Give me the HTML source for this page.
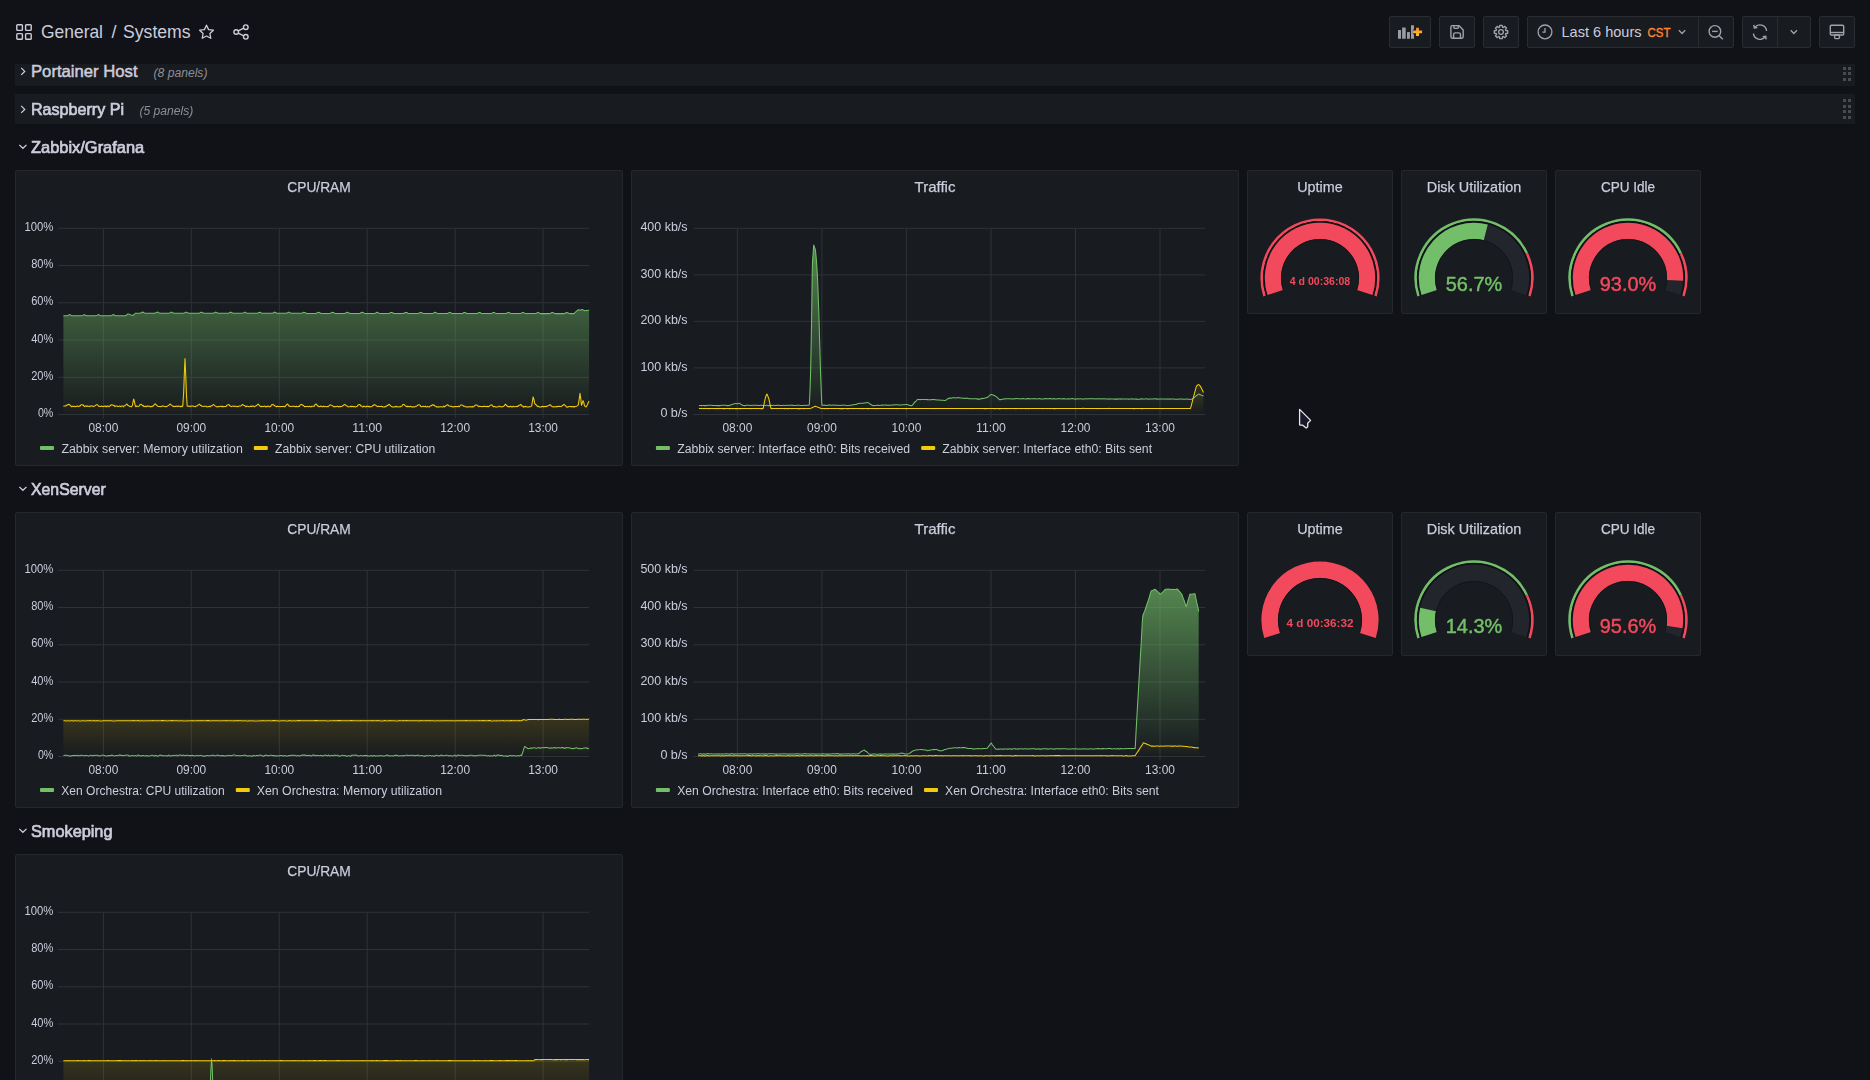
<!DOCTYPE html>
<html><head><meta charset="utf-8"><title>Systems - Grafana</title>
<style>
html,body{margin:0;padding:0;background:#111217;}
body{width:1870px;height:1080px;overflow:hidden;position:relative;font-family:"Liberation Sans", sans-serif;color:#ccccdc;}
.btn{position:absolute;top:16px;height:30px;background:#181b1f;border:1px solid #2a2c31;border-radius:2px}
.rowbg{position:absolute;left:15px;width:1840px;height:30px;background:#181b1f}
.panel{position:absolute;background:#181b1f;border:1px solid #25272c;border-radius:2px;box-sizing:border-box;overflow:hidden}
</style></head>
<body>

<svg style="position:absolute;left:16px;top:24px" width="16" height="16" viewBox="0 0 16 16">
 <g fill="none" stroke="#ccccdc" stroke-width="1.4">
  <rect x="0.8" y="0.8" width="5.6" height="5.6" rx="0.8"/>
  <rect x="9.6" y="0.8" width="5.6" height="5.6" rx="0.8"/>
  <rect x="0.8" y="9.6" width="5.6" height="5.6" rx="0.8"/>
  <rect x="9.6" y="9.6" width="5.6" height="5.6" rx="0.8"/>
 </g>
</svg>
<svg style="position:absolute;left:198px;top:24px" width="17" height="16" viewBox="0 0 17 16">
 <path d="M8.5 1.2 L10.6 5.6 L15.4 6.2 L11.9 9.5 L12.8 14.3 L8.5 12 L4.2 14.3 L5.1 9.5 L1.6 6.2 L6.4 5.6 Z" fill="none" stroke="#ccccdc" stroke-width="1.3" stroke-linejoin="round"/>
</svg>
<svg style="position:absolute;left:233px;top:24px" width="16" height="16" viewBox="0 0 16 16">
 <g fill="none" stroke="#ccccdc" stroke-width="1.4">
  <circle cx="3.2" cy="8" r="2.3"/>
  <circle cx="12.8" cy="3.2" r="2.3"/>
  <circle cx="12.8" cy="12.8" r="2.3"/>
  <path d="M5.2 6.9 L10.8 4.2 M5.2 9.1 L10.8 11.8"/>
 </g>
</svg>
<div class="btn" style="left:1389px;width:40px"><svg style="position:absolute;left:7px;top:7px" width="27" height="16" viewBox="0 0 27 16">
 <defs><linearGradient id="plusg" x1="0" y1="3.5" x2="0" y2="12.2" gradientUnits="userSpaceOnUse"><stop offset="0" stop-color="#f5843a"/><stop offset="1" stop-color="#ffca1c"/></linearGradient></defs>
 <g fill="#9b9ba6">
  <rect x="1" y="6" width="3" height="8.7" rx="0.3"/>
  <rect x="5.1" y="3.6" width="3.6" height="11.1" rx="0.3"/>
  <rect x="10" y="8.1" width="2.9" height="6.6" rx="0.3"/>
  <rect x="14" y="1.3" width="3" height="13.4" rx="0.3"/>
 </g>
 <path d="M20.5 3.7 V12.1 M15.9 7.9 H25.1" stroke="#181b1f" stroke-width="4.6"/>
 <path d="M20.5 3.7 V12.1 M15.9 7.9 H25.1" stroke="url(#plusg)" stroke-width="2.9"/>
</svg></div><div class="btn" style="left:1439px;width:34px"><svg style="position:absolute;left:9px;top:7px" width="16" height="16" viewBox="0 0 16 16">
 <g fill="none" stroke="#a2a2ac" stroke-width="1.4" stroke-linejoin="round">
  <path d="M3.2 1.6 H9.9 L14.2 5.9 V12.8 Q14.2 14.2 12.8 14.2 H3.3 Q1.9 14.2 1.9 12.8 V3 Q1.9 1.6 3.2 1.6 Z"/>
  <path d="M4.9 1.6 V3.6 Q4.9 4.4 5.7 4.4 H8.4 Q9.2 4.4 9.2 3.6 V1.6"/>
  <path d="M4.6 14.2 V10.6 Q4.6 8.9 6.3 8.9 H9.8 Q11.5 8.9 11.5 10.6 V14.2"/>
 </g>
</svg></div><div class="btn" style="left:1483px;width:34px"><svg style="position:absolute;left:9px;top:7px" width="16" height="16" viewBox="0 0 16 16">
 <g fill="none" stroke="#a2a2ac" stroke-width="1.35" stroke-linejoin="round">
  <path d="M6.50 3.23 L6.76 1.31 L9.24 1.31 L9.50 3.23 L10.31 3.56 L11.85 2.40 L13.60 4.15 L12.44 5.69 L12.77 6.50 L14.69 6.76 L14.69 9.24 L12.77 9.50 L12.44 10.31 L13.60 11.85 L11.85 13.60 L10.31 12.44 L9.50 12.77 L9.24 14.69 L6.76 14.69 L6.50 12.77 L5.69 12.44 L4.15 13.60 L2.40 11.85 L3.56 10.31 L3.23 9.50 L1.31 9.24 L1.31 6.76 L3.23 6.50 L3.56 5.69 L2.40 4.15 L4.15 2.40 L5.69 3.56 Z"/>
  <circle cx="8" cy="8" r="2.35"/>
 </g>
</svg></div><div class="btn" style="left:1527px;width:205px">
<svg style="position:absolute;left:9px;top:7px" width="16" height="16" viewBox="0 0 16 16">
 <g fill="none" stroke="#a2a2ac" stroke-width="1.3">
  <circle cx="8" cy="7.9" r="6.9"/>
  <path d="M8 4.1 V8.2 H5.4"/>
 </g>
</svg>
<svg style="position:absolute;left:149px;top:11px" width="12" height="8" viewBox="0 0 12 8"><path d="M1.9 2.2 L5.05 5.5 L8.2 2.2" fill="none" stroke="#a2a2ac" stroke-width="1.3"/></svg>
<div style="position:absolute;left:170px;top:0;width:1px;height:30px;background:#2a2c31"></div>
<svg style="position:absolute;left:180px;top:7px" width="16" height="16" viewBox="0 0 16 16">
 <g fill="none" stroke="#a2a2ac" stroke-width="1.4">
  <circle cx="6.9" cy="7.4" r="5.8"/>
  <path d="M11 11.5 L14.8 15.3"/>
  <path d="M4.1 7.4 H9.7"/>
 </g>
</svg></div><div class="btn" style="left:1742px;width:67px">
<svg style="position:absolute;left:9px;top:7px" width="16" height="16" viewBox="0 0 16 16">
 <g fill="none" stroke="#a2a2ac" stroke-width="1.4">
  <path d="M2.6 3.6 A6.7 6.7 0 0 1 14.6 6.8"/>
  <path d="M13.4 12.6 A6.7 6.7 0 0 1 1.4 9.6"/>
  <path d="M1.8 0.9 L2.3 4 L5.3 3.5"/>
  <path d="M14.2 15.3 L13.7 12.2 L10.7 12.7"/>
 </g>
</svg>
<div style="position:absolute;left:34px;top:0;width:1px;height:30px;background:#2a2c31"></div>
<svg style="position:absolute;left:46px;top:11px" width="12" height="8" viewBox="0 0 12 8"><path d="M1.7 2.2 L4.85 5.5 L8 2.2" fill="none" stroke="#a2a2ac" stroke-width="1.3"/></svg></div><div class="btn" style="left:1819px;width:34px"><svg style="position:absolute;left:9px;top:7px" width="16" height="16" viewBox="0 0 16 16">
 <g fill="none" stroke="#a2a2ac" stroke-width="1.4" stroke-linejoin="round">
  <rect x="1.3" y="1.2" width="13.4" height="9.8" rx="1.2"/>
  <path d="M1.3 8.5 H14.7"/>
  <rect x="5.6" y="11" width="4.8" height="3.6" rx="1"/>
 </g>
</svg></div><div style="position:absolute;left:0;top:64px;width:1870px;height:1016px;overflow:hidden"><div class="rowbg" style="top:-8px"></div><svg style="position:absolute;left:19px;top:3px" width="8" height="9" viewBox="0 0 8 9"><path d="M2.2 0.9 L5.7 4.4 L2.2 7.9" fill="none" stroke="#ccccdc" stroke-width="1.3"/></svg><div style="position:absolute;left:1843.1px;top:-2.7px;width:2.6px;height:2.6px;background:#4a4b51"></div><div style="position:absolute;left:1843.1px;top:3.0px;width:2.6px;height:2.6px;background:#4a4b51"></div><div style="position:absolute;left:1843.1px;top:8.2px;width:2.6px;height:2.6px;background:#4a4b51"></div><div style="position:absolute;left:1843.1px;top:14.1px;width:2.6px;height:2.6px;background:#4a4b51"></div><div style="position:absolute;left:1848.3px;top:-2.7px;width:2.6px;height:2.6px;background:#4a4b51"></div><div style="position:absolute;left:1848.3px;top:3.0px;width:2.6px;height:2.6px;background:#4a4b51"></div><div style="position:absolute;left:1848.3px;top:8.2px;width:2.6px;height:2.6px;background:#4a4b51"></div><div style="position:absolute;left:1848.3px;top:14.1px;width:2.6px;height:2.6px;background:#4a4b51"></div><div class="rowbg" style="top:30px"></div><svg style="position:absolute;left:19px;top:41px" width="8" height="9" viewBox="0 0 8 9"><path d="M2.2 0.9 L5.7 4.4 L2.2 7.9" fill="none" stroke="#ccccdc" stroke-width="1.3"/></svg><div style="position:absolute;left:1843.1px;top:35.3px;width:2.6px;height:2.6px;background:#4a4b51"></div><div style="position:absolute;left:1843.1px;top:41.0px;width:2.6px;height:2.6px;background:#4a4b51"></div><div style="position:absolute;left:1843.1px;top:46.2px;width:2.6px;height:2.6px;background:#4a4b51"></div><div style="position:absolute;left:1843.1px;top:52.1px;width:2.6px;height:2.6px;background:#4a4b51"></div><div style="position:absolute;left:1848.3px;top:35.3px;width:2.6px;height:2.6px;background:#4a4b51"></div><div style="position:absolute;left:1848.3px;top:41.0px;width:2.6px;height:2.6px;background:#4a4b51"></div><div style="position:absolute;left:1848.3px;top:46.2px;width:2.6px;height:2.6px;background:#4a4b51"></div><div style="position:absolute;left:1848.3px;top:52.1px;width:2.6px;height:2.6px;background:#4a4b51"></div><svg style="position:absolute;left:18px;top:79px" width="10" height="8" viewBox="0 0 10 8"><path d="M1.3 1.9 L4.9 5.3 L8.5 1.9" fill="none" stroke="#ccccdc" stroke-width="1.3"/></svg><svg style="position:absolute;left:18px;top:421px" width="10" height="8" viewBox="0 0 10 8"><path d="M1.3 1.9 L4.9 5.3 L8.5 1.9" fill="none" stroke="#ccccdc" stroke-width="1.3"/></svg><svg style="position:absolute;left:18px;top:763px" width="10" height="8" viewBox="0 0 10 8"><path d="M1.3 1.9 L4.9 5.3 L8.5 1.9" fill="none" stroke="#ccccdc" stroke-width="1.3"/></svg><div class="panel" style="left:15px;top:106px;width:608px;height:296px"><svg style="position:absolute;left:-1px;top:-1px" width="608" height="296" viewBox="0 0 608 296"><defs><linearGradient id="g15_170_0" x1="0" y1="58.3" x2="0" y2="244.5" gradientUnits="userSpaceOnUse"><stop offset="0" stop-color="#73bf69" stop-opacity="0.72"/><stop offset="1" stop-color="#73bf69" stop-opacity="0"/></linearGradient><linearGradient id="g15_170_1" x1="0" y1="58.3" x2="0" y2="244.5" gradientUnits="userSpaceOnUse"><stop offset="0" stop-color="#f2cc0c" stop-opacity="0.72"/><stop offset="1" stop-color="#f2cc0c" stop-opacity="0"/></linearGradient></defs><line x1="43" x2="574" y1="244.5" y2="244.5" stroke="#2f3237" stroke-width="1"/><line x1="43" x2="574" y1="207.3" y2="207.3" stroke="#2f3237" stroke-width="1"/><line x1="43" x2="574" y1="170.0" y2="170.0" stroke="#2f3237" stroke-width="1"/><line x1="43" x2="574" y1="132.8" y2="132.8" stroke="#2f3237" stroke-width="1"/><line x1="43" x2="574" y1="95.5" y2="95.5" stroke="#2f3237" stroke-width="1"/><line x1="43" x2="574" y1="58.3" y2="58.3" stroke="#2f3237" stroke-width="1"/><line x1="88.4" x2="88.4" y1="58.3" y2="248.5" stroke="#2f3237" stroke-width="1"/><line x1="176.3" x2="176.3" y1="58.3" y2="248.5" stroke="#2f3237" stroke-width="1"/><line x1="264.3" x2="264.3" y1="58.3" y2="248.5" stroke="#2f3237" stroke-width="1"/><line x1="352.2" x2="352.2" y1="58.3" y2="248.5" stroke="#2f3237" stroke-width="1"/><line x1="440.2" x2="440.2" y1="58.3" y2="248.5" stroke="#2f3237" stroke-width="1"/><line x1="528.1" x2="528.1" y1="58.3" y2="248.5" stroke="#2f3237" stroke-width="1"/><path d="M48.4 145.8 L49.1 145.8 L49.9 145.8 L50.6 145.8 L51.3 145.8 L52.1 145.8 L52.8 145.5 L53.5 145.1 L54.3 144.8 L55.0 144.8 L55.7 145.1 L56.4 145.5 L57.2 145.8 L57.9 145.8 L58.6 145.8 L59.4 145.8 L60.1 145.8 L60.8 145.8 L61.6 145.8 L62.3 145.8 L63.0 145.8 L63.8 145.8 L64.5 145.8 L65.2 145.8 L66.0 145.8 L66.7 145.8 L67.4 145.5 L68.2 145.1 L68.9 144.7 L69.6 144.8 L70.4 145.2 L71.1 145.5 L71.8 145.8 L72.6 145.8 L73.3 145.8 L74.0 145.8 L74.8 145.8 L75.5 145.8 L76.2 145.8 L77.0 145.8 L77.7 145.8 L78.4 145.8 L79.2 145.8 L79.9 145.8 L80.6 145.8 L81.4 145.6 L82.1 145.3 L82.8 144.9 L83.6 144.6 L84.3 145.0 L85.0 145.4 L85.8 145.7 L86.5 145.8 L87.2 145.8 L88.0 145.8 L88.7 145.8 L89.4 145.8 L90.2 145.8 L90.9 145.8 L91.6 145.8 L92.4 145.8 L93.1 145.8 L93.8 145.8 L94.6 145.8 L95.3 145.8 L96.0 145.7 L96.8 145.4 L97.5 145.0 L98.2 144.6 L99.0 144.9 L99.7 145.3 L100.4 145.7 L101.2 145.8 L101.9 145.8 L102.6 145.8 L103.3 145.8 L104.1 145.8 L104.8 145.8 L105.5 145.8 L106.3 145.8 L107.0 145.8 L107.7 145.8 L108.5 145.8 L109.2 145.8 L109.9 145.8 L110.4 145.8 L111.4 145.1 L112.1 144.5 L112.9 144.0 L113.6 144.1 L114.3 144.3 L114.8 144.4 L115.8 144.9 L116.5 145.1 L117.3 145.2 L118.3 145.4 L118.7 144.9 L119.5 144.0 L120.1 143.2 L120.9 143.2 L121.7 143.2 L122.4 143.2 L123.1 143.2 L123.9 143.2 L124.6 143.2 L125.3 143.2 L126.1 142.8 L126.8 142.4 L127.5 142.1 L128.3 142.3 L129.0 142.7 L129.7 143.0 L130.5 143.2 L131.2 143.2 L131.9 143.2 L132.7 143.2 L133.4 143.2 L134.1 143.2 L134.9 143.2 L135.6 143.2 L136.3 143.2 L137.1 143.2 L137.8 143.2 L138.5 143.2 L139.3 143.2 L140.0 143.2 L140.7 142.8 L141.5 142.5 L142.2 142.1 L142.9 142.3 L143.7 142.6 L144.4 143.0 L145.1 143.2 L145.9 143.2 L146.6 143.2 L147.3 143.2 L148.1 143.2 L148.8 143.2 L149.5 143.2 L150.3 143.2 L151.0 143.2 L151.7 143.2 L152.4 143.2 L153.2 143.2 L153.9 143.2 L154.6 143.0 L155.4 142.6 L156.1 142.3 L156.8 142.2 L157.6 142.5 L158.3 142.9 L159.0 143.2 L159.8 143.2 L160.5 143.2 L161.2 143.2 L162.0 143.2 L162.7 143.2 L163.4 143.2 L164.2 143.2 L164.9 143.2 L165.6 143.2 L166.4 143.2 L167.1 143.2 L167.8 143.2 L168.6 143.2 L169.3 143.0 L170.0 142.6 L170.8 142.2 L171.5 142.2 L172.2 142.6 L173.0 142.9 L173.7 143.3 L174.4 143.3 L175.2 143.3 L175.9 143.3 L176.6 143.3 L177.4 143.3 L178.1 143.3 L178.8 143.3 L179.6 143.3 L180.3 143.3 L181.0 143.3 L181.8 143.3 L182.5 143.3 L183.2 143.3 L184.0 143.2 L184.7 142.9 L185.4 142.5 L186.2 142.2 L186.9 142.3 L187.6 142.7 L188.4 143.0 L189.1 143.3 L189.8 143.3 L190.6 143.3 L191.3 143.3 L192.0 143.3 L192.8 143.3 L193.5 143.3 L194.2 143.3 L195.0 143.3 L195.7 143.3 L196.4 143.3 L197.2 143.3 L197.9 143.3 L198.6 143.1 L199.4 142.7 L200.1 142.4 L200.8 142.1 L201.5 142.5 L202.3 142.8 L203.0 143.2 L203.7 143.3 L204.5 143.3 L205.2 143.3 L205.9 143.3 L206.7 143.3 L207.4 143.3 L208.1 143.3 L208.9 143.3 L209.6 143.3 L210.3 143.3 L211.1 143.3 L211.8 143.3 L212.5 143.3 L213.3 143.2 L214.0 142.9 L214.7 142.5 L215.5 142.1 L216.2 142.4 L216.9 142.7 L217.7 143.1 L218.4 143.3 L219.1 143.3 L219.9 143.3 L220.6 143.3 L221.3 143.3 L222.1 143.3 L222.8 143.3 L223.5 143.3 L224.3 143.3 L225.0 143.3 L225.7 143.3 L226.5 143.3 L227.2 143.3 L227.9 143.0 L228.7 142.6 L229.4 142.2 L230.1 142.3 L230.9 142.7 L231.6 143.0 L232.3 143.3 L233.1 143.3 L233.8 143.3 L234.5 143.3 L235.3 143.3 L236.0 143.3 L236.7 143.3 L237.5 143.3 L238.2 143.3 L238.9 143.3 L239.7 143.3 L240.4 143.3 L241.1 143.3 L241.9 143.3 L242.6 143.1 L243.3 142.8 L244.1 142.4 L244.8 142.2 L245.5 142.5 L246.3 142.9 L247.0 143.2 L247.7 143.3 L248.5 143.3 L249.2 143.3 L249.9 143.3 L250.6 143.3 L251.4 143.3 L252.1 143.3 L252.8 143.3 L253.6 143.3 L254.3 143.3 L255.0 143.3 L255.8 143.3 L256.5 143.3 L257.2 143.2 L258.0 142.9 L258.7 142.5 L259.4 142.1 L260.2 142.4 L260.9 142.8 L261.6 143.2 L262.4 143.3 L263.1 143.3 L263.8 143.3 L264.6 143.3 L265.3 143.3 L266.0 143.3 L266.8 143.3 L267.5 143.3 L268.2 143.3 L269.0 143.3 L269.7 143.3 L270.4 143.3 L271.2 143.3 L271.9 143.1 L272.6 142.7 L273.4 142.3 L274.1 142.3 L274.8 142.6 L275.6 143.0 L276.3 143.3 L277.0 143.3 L277.8 143.3 L278.5 143.3 L279.2 143.3 L280.0 143.3 L280.7 143.3 L281.4 143.3 L282.2 143.3 L282.9 143.3 L283.6 143.3 L284.4 143.3 L285.1 143.3 L285.8 143.3 L286.6 143.3 L287.3 143.0 L288.0 142.6 L288.8 142.2 L289.5 142.4 L290.2 142.8 L291.0 143.1 L291.7 143.4 L292.4 143.4 L293.2 143.4 L293.9 143.4 L294.6 143.4 L295.4 143.4 L296.1 143.4 L296.8 143.4 L297.6 143.4 L298.3 143.4 L299.0 143.4 L299.7 143.4 L300.5 143.4 L301.2 143.3 L301.9 142.9 L302.7 142.6 L303.4 142.2 L304.1 142.4 L304.9 142.8 L305.6 143.2 L306.3 143.4 L307.1 143.4 L307.8 143.4 L308.5 143.4 L309.3 143.4 L310.0 143.4 L310.7 143.4 L311.5 143.4 L312.2 143.4 L312.9 143.4 L313.7 143.4 L314.4 143.4 L315.1 143.4 L315.9 143.0 L316.6 142.6 L317.3 142.3 L318.1 142.4 L318.8 142.8 L319.5 143.1 L320.3 143.4 L321.0 143.4 L321.7 143.4 L322.5 143.4 L323.2 143.4 L323.9 143.4 L324.7 143.4 L325.4 143.4 L326.1 143.4 L326.9 143.4 L327.6 143.4 L328.3 143.4 L329.1 143.4 L329.8 143.4 L330.5 143.0 L331.3 142.7 L332.0 142.3 L332.7 142.4 L333.5 142.8 L334.2 143.1 L334.9 143.4 L335.7 143.4 L336.4 143.4 L337.1 143.4 L337.9 143.4 L338.6 143.4 L339.3 143.4 L340.1 143.4 L340.8 143.4 L341.5 143.4 L342.3 143.4 L343.0 143.4 L343.7 143.4 L344.5 143.4 L345.2 143.2 L345.9 142.8 L346.7 142.5 L347.4 142.3 L348.1 142.6 L348.8 143.0 L349.6 143.3 L350.3 143.4 L351.0 143.4 L351.8 143.4 L352.5 143.4 L353.2 143.4 L354.0 143.4 L354.7 143.4 L355.4 143.4 L356.2 143.4 L356.9 143.4 L357.6 143.4 L358.4 143.4 L359.1 143.4 L359.8 143.3 L360.6 143.0 L361.3 142.6 L362.0 142.3 L362.8 142.5 L363.5 142.9 L364.2 143.2 L365.0 143.4 L365.7 143.4 L366.4 143.4 L367.2 143.4 L367.9 143.4 L368.6 143.4 L369.4 143.4 L370.1 143.4 L370.8 143.4 L371.6 143.4 L372.3 143.4 L373.0 143.4 L373.8 143.4 L374.5 143.2 L375.2 142.8 L376.0 142.4 L376.7 142.4 L377.4 142.7 L378.2 143.1 L378.9 143.4 L379.6 143.4 L380.4 143.4 L381.1 143.4 L381.8 143.4 L382.6 143.4 L383.3 143.4 L384.0 143.4 L384.8 143.4 L385.5 143.4 L386.2 143.4 L387.0 143.4 L387.7 143.4 L388.4 143.4 L389.2 143.1 L389.9 142.7 L390.6 142.4 L391.4 142.4 L392.1 142.8 L392.8 143.2 L393.6 143.4 L394.3 143.4 L395.0 143.4 L395.8 143.4 L396.5 143.4 L397.2 143.4 L397.9 143.4 L398.7 143.4 L399.4 143.4 L400.1 143.4 L400.9 143.4 L401.6 143.4 L402.3 143.4 L403.1 143.4 L403.8 143.2 L404.5 142.8 L405.3 142.5 L406.0 142.4 L406.7 142.7 L407.5 143.1 L408.2 143.5 L408.9 143.5 L409.7 143.5 L410.4 143.5 L411.1 143.5 L411.9 143.5 L412.6 143.5 L413.3 143.5 L414.1 143.5 L414.8 143.5 L415.5 143.5 L416.3 143.5 L417.0 143.5 L417.7 143.4 L418.5 143.0 L419.2 142.7 L419.9 142.3 L420.7 142.5 L421.4 142.9 L422.1 143.3 L422.9 143.5 L423.6 143.5 L424.3 143.5 L425.1 143.5 L425.8 143.5 L426.5 143.5 L427.3 143.5 L428.0 143.5 L428.7 143.5 L429.5 143.5 L430.2 143.5 L430.9 143.5 L431.7 143.5 L432.4 143.5 L433.1 143.1 L433.9 142.8 L434.6 142.4 L435.3 142.5 L436.1 142.9 L436.8 143.2 L437.5 143.5 L438.3 143.5 L439.0 143.5 L439.7 143.5 L440.5 143.5 L441.2 143.5 L441.9 143.5 L442.7 143.5 L443.4 143.5 L444.1 143.5 L444.8 143.5 L445.6 143.5 L446.3 143.5 L447.0 143.5 L447.8 143.2 L448.5 142.8 L449.2 142.5 L450.0 142.4 L450.7 142.8 L451.4 143.2 L452.2 143.5 L452.9 143.5 L453.6 143.5 L454.4 143.5 L455.1 143.5 L455.8 143.5 L456.6 143.5 L457.3 143.5 L458.0 143.5 L458.8 143.5 L459.5 143.5 L460.2 143.5 L461.0 143.5 L461.7 143.5 L462.4 143.2 L463.2 142.9 L463.9 142.5 L464.6 142.4 L465.4 142.8 L466.1 143.2 L466.8 143.5 L467.6 143.5 L468.3 143.5 L469.0 143.5 L469.8 143.5 L470.5 143.5 L471.2 143.5 L472.0 143.5 L472.7 143.5 L473.4 143.5 L474.2 143.5 L474.9 143.5 L475.6 143.5 L476.4 143.5 L477.1 143.1 L477.8 142.8 L478.6 142.4 L479.3 142.5 L480.0 142.9 L480.8 143.3 L481.5 143.5 L482.2 143.5 L483.0 143.5 L483.7 143.5 L484.4 143.5 L485.2 143.5 L485.9 143.5 L486.6 143.5 L487.4 143.5 L488.1 143.5 L488.8 143.5 L489.6 143.5 L490.3 143.5 L491.0 143.5 L491.8 143.1 L492.5 142.8 L493.2 142.4 L494.0 142.6 L494.7 142.9 L495.4 143.3 L496.1 143.5 L496.9 143.5 L497.6 143.5 L498.3 143.5 L499.1 143.5 L499.8 143.5 L500.5 143.5 L501.3 143.5 L502.0 143.5 L502.7 143.5 L503.5 143.5 L504.2 143.5 L504.9 143.5 L505.7 143.5 L506.4 143.1 L507.1 142.8 L507.9 142.4 L508.6 142.6 L509.3 143.0 L510.1 143.3 L510.8 143.5 L511.5 143.5 L512.3 143.5 L513.0 143.5 L513.7 143.5 L514.5 143.5 L515.2 143.5 L515.9 143.5 L516.7 143.5 L517.4 143.5 L518.1 143.5 L518.9 143.5 L519.6 143.5 L520.3 143.5 L521.1 143.2 L521.8 142.9 L522.5 142.5 L523.3 142.5 L524.0 142.9 L524.7 143.2 L525.5 143.6 L526.2 143.6 L526.9 143.6 L527.7 143.6 L528.4 143.6 L529.1 143.6 L529.9 143.6 L530.6 143.6 L531.3 143.6 L532.1 143.6 L532.8 143.6 L533.5 143.6 L534.3 143.6 L535.0 143.5 L535.7 143.2 L536.5 142.8 L537.2 142.5 L537.9 142.6 L538.7 143.0 L539.4 143.3 L540.1 143.6 L540.9 143.6 L541.6 143.6 L542.3 143.6 L543.0 143.6 L543.8 143.6 L544.5 143.6 L545.2 143.6 L546.0 143.6 L546.7 143.6 L547.4 143.6 L548.2 143.6 L548.9 143.6 L549.6 143.4 L550.4 143.1 L551.1 142.7 L551.8 142.4 L552.6 142.7 L553.3 143.1 L554.0 143.4 L554.8 143.6 L555.5 143.6 L556.2 143.6 L557.0 143.6 L557.7 143.6 L558.4 143.6 L558.9 143.6 L559.9 142.7 L560.6 142.0 L561.4 141.4 L562.1 140.7 L562.8 140.1 L563.3 139.7 L564.3 140.0 L565.0 140.1 L565.9 140.0 L566.5 139.7 L567.2 139.5 L568.0 139.9 L568.7 140.3 L569.4 140.7 L570.2 140.7 L570.9 140.6 L571.6 140.5 L572.4 140.4 L573.1 140.3 L574.1 140.2 L574.1 244.5 L48.4 244.5 Z" fill="url(#g15_170_0)" stroke="none"/><path d="M48.4 236.2 L49.1 236.1 L49.9 236.0 L50.6 235.9 L51.3 235.6 L52.1 234.8 L52.8 235.0 L53.5 234.3 L54.3 234.4 L55.0 235.3 L55.7 235.7 L56.4 236.7 L57.2 236.3 L57.9 236.6 L58.6 236.3 L59.4 236.2 L60.1 236.8 L60.8 236.6 L61.6 236.5 L62.3 235.9 L63.0 236.1 L63.8 236.6 L64.5 235.9 L65.2 235.9 L66.0 234.8 L66.7 234.7 L67.4 234.9 L68.2 234.7 L68.9 236.0 L69.6 236.6 L70.4 235.9 L71.1 236.0 L71.8 236.5 L72.6 235.9 L73.3 236.3 L74.0 236.2 L74.8 236.6 L75.5 235.9 L76.2 236.1 L77.0 235.9 L77.7 236.0 L78.4 236.5 L79.2 236.3 L79.9 235.9 L80.6 235.3 L81.4 234.7 L82.1 234.7 L82.8 235.0 L83.6 236.2 L84.3 236.2 L85.0 236.5 L85.8 236.5 L86.5 236.0 L87.2 236.4 L88.0 236.5 L88.7 236.4 L89.4 236.1 L90.2 236.7 L90.9 235.9 L91.6 236.8 L92.4 236.1 L93.1 236.0 L93.8 236.8 L94.6 235.9 L95.3 235.7 L96.0 234.9 L96.8 234.8 L97.5 234.9 L98.2 235.4 L99.0 235.3 L99.7 236.6 L100.4 236.1 L101.2 235.9 L101.9 235.9 L102.6 236.5 L103.3 236.5 L104.1 236.3 L104.8 236.1 L105.5 236.7 L106.3 236.1 L107.0 236.1 L107.7 236.0 L108.5 236.8 L109.2 235.7 L109.9 235.8 L110.7 235.0 L111.4 234.1 L112.1 234.3 L112.9 235.4 L113.6 235.5 L114.3 236.3 L115.1 236.5 L115.8 236.5 L116.5 236.7 L117.3 235.5 L118.0 232.2 L118.7 229.0 L119.5 231.9 L120.2 235.4 L120.9 236.8 L121.7 235.9 L122.4 236.3 L123.1 236.4 L123.9 236.2 L124.6 235.3 L125.3 234.4 L126.1 234.2 L126.8 234.8 L127.5 235.8 L128.3 235.6 L129.0 236.8 L129.7 236.4 L130.5 236.1 L131.2 236.7 L131.9 236.2 L132.7 235.9 L133.4 236.2 L134.1 236.1 L134.9 236.7 L135.6 236.4 L136.3 236.7 L137.1 236.1 L137.8 236.4 L138.5 235.6 L139.3 234.5 L140.0 234.0 L140.7 234.1 L141.5 235.2 L142.2 235.8 L142.9 236.2 L143.7 236.4 L144.4 236.6 L145.1 236.5 L145.9 236.7 L146.6 236.5 L147.3 235.9 L148.1 236.0 L148.8 236.3 L149.5 236.4 L150.3 236.5 L151.0 236.8 L151.7 236.6 L152.4 236.1 L153.2 235.5 L153.9 235.3 L154.6 234.3 L155.4 234.1 L156.1 234.8 L156.8 235.4 L157.6 236.0 L158.3 236.5 L159.0 236.2 L159.8 236.6 L160.5 236.4 L161.2 236.1 L162.0 236.2 L162.7 236.6 L163.4 236.0 L164.2 236.3 L164.9 236.3 L165.6 236.8 L166.4 236.3 L167.1 236.6 L167.8 235.6 L168.6 223.0 L169.3 204.8 L170.0 188.6 L170.8 206.4 L171.5 224.9 L172.2 236.1 L173.0 236.2 L173.7 236.1 L174.4 236.5 L175.2 236.1 L175.9 236.1 L176.6 236.2 L177.4 236.0 L178.1 236.0 L178.8 236.4 L179.6 236.4 L180.3 236.7 L181.0 236.1 L181.8 235.9 L182.5 235.8 L183.2 234.9 L184.0 234.3 L184.7 234.3 L185.4 235.4 L186.2 235.5 L186.9 236.3 L187.6 236.3 L188.4 236.5 L189.1 236.3 L189.8 236.2 L190.6 236.3 L191.3 236.2 L192.0 236.9 L192.8 236.7 L193.5 236.5 L194.2 236.3 L195.0 236.7 L195.7 236.2 L196.4 235.8 L197.2 235.7 L197.9 234.7 L198.6 234.5 L199.4 235.3 L200.1 235.9 L200.8 236.3 L201.5 236.7 L202.3 236.7 L203.0 236.9 L203.7 236.5 L204.5 236.5 L205.2 236.3 L205.9 236.3 L206.7 236.7 L207.4 236.0 L208.1 236.9 L208.9 236.5 L209.6 236.6 L210.3 236.5 L211.1 236.5 L211.8 235.2 L212.5 235.0 L213.3 234.7 L214.0 234.6 L214.7 235.7 L215.5 235.9 L216.2 236.6 L216.9 236.4 L217.7 236.0 L218.4 236.1 L219.1 236.5 L219.9 236.1 L220.6 236.3 L221.3 236.6 L222.1 236.8 L222.8 236.3 L223.5 236.4 L224.3 236.0 L225.0 236.0 L225.7 236.0 L226.5 235.6 L227.2 234.5 L227.9 234.7 L228.7 235.2 L229.4 235.4 L230.1 236.0 L230.9 236.8 L231.6 236.3 L232.3 236.1 L233.1 236.6 L233.8 236.5 L234.5 236.7 L235.3 236.6 L236.0 236.0 L236.7 236.6 L237.5 236.0 L238.2 236.1 L238.9 236.4 L239.7 236.7 L240.4 235.9 L241.1 235.7 L241.9 235.2 L242.6 234.6 L243.3 234.1 L244.1 235.2 L244.8 236.0 L245.5 236.5 L246.3 236.8 L247.0 236.3 L247.7 236.5 L248.5 236.6 L249.2 236.2 L249.9 236.1 L250.6 236.9 L251.4 236.4 L252.1 236.7 L252.8 236.0 L253.6 236.2 L254.3 236.7 L255.0 236.7 L255.8 236.2 L256.5 234.8 L257.2 234.9 L258.0 234.3 L258.7 235.0 L259.4 235.5 L260.2 236.2 L260.9 236.2 L261.6 236.8 L262.4 236.2 L263.1 236.6 L263.8 236.4 L264.6 236.6 L265.3 236.7 L266.0 236.4 L266.8 236.5 L267.5 236.6 L268.2 236.2 L269.0 236.4 L269.7 236.9 L270.4 236.1 L271.2 235.2 L271.9 234.2 L272.6 234.1 L273.4 235.1 L274.1 236.2 L274.8 236.1 L275.6 236.5 L276.3 236.4 L277.0 236.3 L277.8 236.3 L278.5 236.5 L279.2 236.1 L280.0 236.6 L280.7 236.6 L281.4 236.1 L282.2 236.8 L282.9 236.7 L283.6 236.2 L284.4 236.4 L285.1 235.1 L285.8 234.6 L286.6 234.4 L287.3 235.1 L288.0 235.3 L288.8 235.8 L289.5 236.8 L290.2 236.5 L291.0 236.4 L291.7 236.5 L292.4 236.6 L293.2 236.8 L293.9 236.4 L294.6 236.2 L295.4 236.9 L296.1 236.7 L296.8 236.2 L297.6 236.2 L298.3 236.3 L299.0 236.4 L299.7 235.1 L300.5 234.2 L301.2 234.0 L301.9 234.9 L302.7 236.1 L303.4 236.0 L304.1 236.8 L304.9 236.4 L305.6 236.1 L306.3 236.3 L307.1 236.8 L307.8 236.7 L308.5 236.1 L309.3 236.8 L310.0 236.4 L310.7 236.6 L311.5 236.8 L312.2 236.4 L312.9 236.8 L313.7 236.1 L314.4 235.2 L315.1 234.9 L315.9 235.1 L316.6 235.2 L317.3 235.7 L318.1 236.1 L318.8 236.8 L319.5 236.6 L320.3 236.7 L321.0 236.4 L321.7 236.5 L322.5 236.1 L323.2 236.6 L323.9 236.9 L324.7 236.3 L325.4 236.8 L326.1 236.4 L326.9 236.5 L327.6 235.7 L328.3 235.4 L329.1 234.7 L329.8 234.5 L330.5 234.9 L331.3 235.8 L332.0 235.9 L332.7 236.5 L333.5 236.9 L334.2 236.8 L334.9 236.6 L335.7 236.3 L336.4 236.8 L337.1 236.3 L337.9 236.4 L338.6 236.9 L339.3 236.4 L340.1 236.9 L340.8 236.9 L341.5 236.4 L342.3 236.3 L343.0 235.1 L343.7 234.8 L344.5 234.6 L345.2 234.7 L345.9 236.1 L346.7 236.0 L347.4 236.9 L348.1 236.8 L348.8 236.1 L349.6 236.4 L350.3 236.8 L351.0 236.9 L351.8 236.1 L352.5 236.4 L353.2 236.2 L354.0 236.9 L354.7 236.4 L355.4 236.7 L356.2 236.8 L356.9 236.6 L357.6 235.7 L358.4 235.3 L359.1 234.6 L359.8 235.0 L360.6 235.0 L361.3 235.8 L362.0 236.3 L362.8 236.6 L363.5 236.2 L364.2 236.5 L365.0 236.4 L365.7 236.5 L366.4 236.3 L367.2 236.6 L367.9 236.9 L368.6 237.0 L369.4 236.8 L370.1 237.0 L370.8 236.2 L371.6 236.2 L372.3 235.4 L373.0 235.5 L373.8 234.4 L374.5 234.5 L375.2 235.4 L376.0 236.2 L376.7 236.6 L377.4 236.9 L378.2 236.9 L378.9 236.9 L379.6 236.7 L380.4 236.7 L381.1 236.2 L381.8 236.9 L382.6 236.8 L383.3 236.8 L384.0 236.9 L384.8 236.7 L385.5 236.8 L386.2 236.3 L387.0 236.1 L387.7 234.6 L388.4 234.5 L389.2 234.5 L389.9 235.3 L390.6 236.0 L391.4 236.6 L392.1 236.1 L392.8 236.9 L393.6 236.4 L394.3 236.8 L395.0 236.4 L395.8 236.3 L396.5 236.9 L397.2 236.8 L397.9 237.0 L398.7 236.8 L399.4 237.0 L400.1 236.7 L400.9 236.1 L401.6 236.2 L402.3 235.6 L403.1 234.8 L403.8 234.7 L404.5 234.9 L405.3 235.5 L406.0 236.7 L406.7 236.8 L407.5 236.4 L408.2 236.2 L408.9 236.4 L409.7 236.6 L410.4 236.1 L411.1 237.0 L411.9 237.0 L412.6 236.3 L413.3 236.7 L414.1 237.0 L414.8 236.5 L415.5 235.8 L416.3 235.7 L417.0 235.2 L417.7 234.8 L418.5 235.3 L419.2 235.1 L419.9 236.1 L420.7 236.2 L421.4 237.0 L422.1 236.8 L422.9 237.0 L423.6 236.7 L424.3 237.0 L425.1 236.8 L425.8 236.7 L426.5 236.8 L427.3 237.0 L428.0 237.0 L428.7 236.1 L429.5 236.9 L430.2 236.3 L430.9 235.8 L431.7 235.0 L432.4 234.8 L433.1 235.1 L433.9 235.9 L434.6 236.1 L435.3 236.2 L436.1 236.5 L436.8 236.3 L437.5 236.9 L438.3 237.0 L439.0 236.6 L439.7 236.6 L440.5 236.5 L441.2 236.7 L441.9 236.5 L442.7 236.4 L443.4 236.2 L444.1 236.8 L444.8 236.0 L445.6 235.0 L446.3 235.0 L447.0 235.0 L447.8 235.4 L448.5 236.2 L449.2 236.2 L450.0 236.3 L450.7 236.8 L451.4 236.9 L452.2 237.0 L452.9 236.8 L453.6 237.0 L454.4 236.7 L455.1 236.5 L455.8 236.8 L456.6 237.0 L457.3 236.4 L458.0 237.0 L458.8 236.6 L459.5 235.9 L460.2 235.2 L461.0 234.9 L461.7 234.9 L462.4 235.7 L463.2 235.9 L463.9 236.6 L464.6 236.2 L465.4 236.5 L466.1 236.4 L466.8 236.5 L467.6 236.7 L468.3 236.3 L469.0 236.5 L469.8 236.2 L470.5 236.4 L471.2 236.4 L472.0 236.8 L472.7 236.3 L473.4 236.7 L474.2 236.3 L474.9 235.7 L475.6 235.0 L476.4 234.9 L477.1 235.1 L477.8 236.1 L478.6 236.9 L479.3 236.4 L480.0 236.6 L480.8 237.1 L481.5 237.0 L482.2 237.0 L483.0 236.8 L483.7 236.3 L484.4 236.2 L485.2 236.5 L485.9 236.9 L486.6 236.7 L487.4 236.8 L488.1 236.5 L488.8 236.2 L489.6 235.1 L490.3 234.2 L491.0 234.7 L491.8 235.9 L492.5 236.1 L493.2 236.9 L494.0 236.4 L494.7 236.7 L495.4 236.2 L496.1 236.4 L496.9 237.0 L497.6 236.8 L498.3 236.2 L499.1 236.7 L499.8 236.7 L500.5 236.7 L501.3 236.4 L502.0 236.2 L502.7 236.6 L503.5 235.6 L504.2 235.3 L504.9 235.2 L505.7 234.3 L506.4 235.3 L507.1 236.3 L507.9 236.0 L508.6 237.1 L509.3 236.6 L510.1 236.7 L510.8 236.3 L511.5 236.7 L512.3 236.9 L513.0 236.9 L513.7 236.9 L514.5 236.6 L515.2 236.8 L515.9 236.4 L516.7 235.8 L517.4 231.3 L518.1 226.9 L518.9 229.4 L519.6 232.9 L520.3 234.3 L521.1 234.8 L521.8 235.6 L522.5 236.4 L523.3 236.3 L524.0 236.7 L524.7 237.1 L525.5 237.0 L526.2 237.0 L526.9 236.5 L527.7 236.3 L528.4 236.9 L529.1 236.4 L529.9 236.8 L530.6 236.5 L531.3 236.3 L532.1 236.5 L532.8 235.8 L533.5 235.6 L534.3 235.3 L535.0 234.6 L535.7 235.1 L536.5 236.1 L537.2 236.6 L537.9 236.8 L538.7 237.1 L539.4 236.8 L540.1 236.8 L540.9 236.7 L541.6 236.5 L542.3 236.8 L543.0 236.2 L543.8 236.4 L544.5 236.3 L545.2 236.5 L546.0 236.5 L546.7 236.2 L547.4 235.4 L548.2 235.1 L548.9 234.4 L549.6 234.9 L550.4 235.7 L551.1 236.5 L551.8 237.1 L552.6 237.1 L553.3 236.8 L554.0 236.6 L554.8 236.4 L555.5 236.5 L556.2 236.9 L557.0 236.3 L557.7 236.9 L558.4 236.5 L559.2 237.1 L559.9 236.4 L560.6 236.5 L561.4 236.3 L562.1 235.9 L562.8 235.4 L563.3 234.9 L564.3 228.4 L565.0 223.3 L565.8 229.1 L566.5 235.3 L567.2 233.4 L568.0 230.6 L568.7 232.2 L569.4 235.4 L570.2 236.5 L570.9 236.9 L571.6 236.1 L572.4 234.7 L573.1 233.0 L574.1 231.1 L574.1 244.5 L48.4 244.5 Z" fill="url(#g15_170_1)" stroke="none"/><path d="M48.4 145.8 L49.1 145.8 L49.9 145.8 L50.6 145.8 L51.3 145.8 L52.1 145.8 L52.8 145.5 L53.5 145.1 L54.3 144.8 L55.0 144.8 L55.7 145.1 L56.4 145.5 L57.2 145.8 L57.9 145.8 L58.6 145.8 L59.4 145.8 L60.1 145.8 L60.8 145.8 L61.6 145.8 L62.3 145.8 L63.0 145.8 L63.8 145.8 L64.5 145.8 L65.2 145.8 L66.0 145.8 L66.7 145.8 L67.4 145.5 L68.2 145.1 L68.9 144.7 L69.6 144.8 L70.4 145.2 L71.1 145.5 L71.8 145.8 L72.6 145.8 L73.3 145.8 L74.0 145.8 L74.8 145.8 L75.5 145.8 L76.2 145.8 L77.0 145.8 L77.7 145.8 L78.4 145.8 L79.2 145.8 L79.9 145.8 L80.6 145.8 L81.4 145.6 L82.1 145.3 L82.8 144.9 L83.6 144.6 L84.3 145.0 L85.0 145.4 L85.8 145.7 L86.5 145.8 L87.2 145.8 L88.0 145.8 L88.7 145.8 L89.4 145.8 L90.2 145.8 L90.9 145.8 L91.6 145.8 L92.4 145.8 L93.1 145.8 L93.8 145.8 L94.6 145.8 L95.3 145.8 L96.0 145.7 L96.8 145.4 L97.5 145.0 L98.2 144.6 L99.0 144.9 L99.7 145.3 L100.4 145.7 L101.2 145.8 L101.9 145.8 L102.6 145.8 L103.3 145.8 L104.1 145.8 L104.8 145.8 L105.5 145.8 L106.3 145.8 L107.0 145.8 L107.7 145.8 L108.5 145.8 L109.2 145.8 L109.9 145.8 L110.4 145.8 L111.4 145.1 L112.1 144.5 L112.9 144.0 L113.6 144.1 L114.3 144.3 L114.8 144.4 L115.8 144.9 L116.5 145.1 L117.3 145.2 L118.3 145.4 L118.7 144.9 L119.5 144.0 L120.1 143.2 L120.9 143.2 L121.7 143.2 L122.4 143.2 L123.1 143.2 L123.9 143.2 L124.6 143.2 L125.3 143.2 L126.1 142.8 L126.8 142.4 L127.5 142.1 L128.3 142.3 L129.0 142.7 L129.7 143.0 L130.5 143.2 L131.2 143.2 L131.9 143.2 L132.7 143.2 L133.4 143.2 L134.1 143.2 L134.9 143.2 L135.6 143.2 L136.3 143.2 L137.1 143.2 L137.8 143.2 L138.5 143.2 L139.3 143.2 L140.0 143.2 L140.7 142.8 L141.5 142.5 L142.2 142.1 L142.9 142.3 L143.7 142.6 L144.4 143.0 L145.1 143.2 L145.9 143.2 L146.6 143.2 L147.3 143.2 L148.1 143.2 L148.8 143.2 L149.5 143.2 L150.3 143.2 L151.0 143.2 L151.7 143.2 L152.4 143.2 L153.2 143.2 L153.9 143.2 L154.6 143.0 L155.4 142.6 L156.1 142.3 L156.8 142.2 L157.6 142.5 L158.3 142.9 L159.0 143.2 L159.8 143.2 L160.5 143.2 L161.2 143.2 L162.0 143.2 L162.7 143.2 L163.4 143.2 L164.2 143.2 L164.9 143.2 L165.6 143.2 L166.4 143.2 L167.1 143.2 L167.8 143.2 L168.6 143.2 L169.3 143.0 L170.0 142.6 L170.8 142.2 L171.5 142.2 L172.2 142.6 L173.0 142.9 L173.7 143.3 L174.4 143.3 L175.2 143.3 L175.9 143.3 L176.6 143.3 L177.4 143.3 L178.1 143.3 L178.8 143.3 L179.6 143.3 L180.3 143.3 L181.0 143.3 L181.8 143.3 L182.5 143.3 L183.2 143.3 L184.0 143.2 L184.7 142.9 L185.4 142.5 L186.2 142.2 L186.9 142.3 L187.6 142.7 L188.4 143.0 L189.1 143.3 L189.8 143.3 L190.6 143.3 L191.3 143.3 L192.0 143.3 L192.8 143.3 L193.5 143.3 L194.2 143.3 L195.0 143.3 L195.7 143.3 L196.4 143.3 L197.2 143.3 L197.9 143.3 L198.6 143.1 L199.4 142.7 L200.1 142.4 L200.8 142.1 L201.5 142.5 L202.3 142.8 L203.0 143.2 L203.7 143.3 L204.5 143.3 L205.2 143.3 L205.9 143.3 L206.7 143.3 L207.4 143.3 L208.1 143.3 L208.9 143.3 L209.6 143.3 L210.3 143.3 L211.1 143.3 L211.8 143.3 L212.5 143.3 L213.3 143.2 L214.0 142.9 L214.7 142.5 L215.5 142.1 L216.2 142.4 L216.9 142.7 L217.7 143.1 L218.4 143.3 L219.1 143.3 L219.9 143.3 L220.6 143.3 L221.3 143.3 L222.1 143.3 L222.8 143.3 L223.5 143.3 L224.3 143.3 L225.0 143.3 L225.7 143.3 L226.5 143.3 L227.2 143.3 L227.9 143.0 L228.7 142.6 L229.4 142.2 L230.1 142.3 L230.9 142.7 L231.6 143.0 L232.3 143.3 L233.1 143.3 L233.8 143.3 L234.5 143.3 L235.3 143.3 L236.0 143.3 L236.7 143.3 L237.5 143.3 L238.2 143.3 L238.9 143.3 L239.7 143.3 L240.4 143.3 L241.1 143.3 L241.9 143.3 L242.6 143.1 L243.3 142.8 L244.1 142.4 L244.8 142.2 L245.5 142.5 L246.3 142.9 L247.0 143.2 L247.7 143.3 L248.5 143.3 L249.2 143.3 L249.9 143.3 L250.6 143.3 L251.4 143.3 L252.1 143.3 L252.8 143.3 L253.6 143.3 L254.3 143.3 L255.0 143.3 L255.8 143.3 L256.5 143.3 L257.2 143.2 L258.0 142.9 L258.7 142.5 L259.4 142.1 L260.2 142.4 L260.9 142.8 L261.6 143.2 L262.4 143.3 L263.1 143.3 L263.8 143.3 L264.6 143.3 L265.3 143.3 L266.0 143.3 L266.8 143.3 L267.5 143.3 L268.2 143.3 L269.0 143.3 L269.7 143.3 L270.4 143.3 L271.2 143.3 L271.9 143.1 L272.6 142.7 L273.4 142.3 L274.1 142.3 L274.8 142.6 L275.6 143.0 L276.3 143.3 L277.0 143.3 L277.8 143.3 L278.5 143.3 L279.2 143.3 L280.0 143.3 L280.7 143.3 L281.4 143.3 L282.2 143.3 L282.9 143.3 L283.6 143.3 L284.4 143.3 L285.1 143.3 L285.8 143.3 L286.6 143.3 L287.3 143.0 L288.0 142.6 L288.8 142.2 L289.5 142.4 L290.2 142.8 L291.0 143.1 L291.7 143.4 L292.4 143.4 L293.2 143.4 L293.9 143.4 L294.6 143.4 L295.4 143.4 L296.1 143.4 L296.8 143.4 L297.6 143.4 L298.3 143.4 L299.0 143.4 L299.7 143.4 L300.5 143.4 L301.2 143.3 L301.9 142.9 L302.7 142.6 L303.4 142.2 L304.1 142.4 L304.9 142.8 L305.6 143.2 L306.3 143.4 L307.1 143.4 L307.8 143.4 L308.5 143.4 L309.3 143.4 L310.0 143.4 L310.7 143.4 L311.5 143.4 L312.2 143.4 L312.9 143.4 L313.7 143.4 L314.4 143.4 L315.1 143.4 L315.9 143.0 L316.6 142.6 L317.3 142.3 L318.1 142.4 L318.8 142.8 L319.5 143.1 L320.3 143.4 L321.0 143.4 L321.7 143.4 L322.5 143.4 L323.2 143.4 L323.9 143.4 L324.7 143.4 L325.4 143.4 L326.1 143.4 L326.9 143.4 L327.6 143.4 L328.3 143.4 L329.1 143.4 L329.8 143.4 L330.5 143.0 L331.3 142.7 L332.0 142.3 L332.7 142.4 L333.5 142.8 L334.2 143.1 L334.9 143.4 L335.7 143.4 L336.4 143.4 L337.1 143.4 L337.9 143.4 L338.6 143.4 L339.3 143.4 L340.1 143.4 L340.8 143.4 L341.5 143.4 L342.3 143.4 L343.0 143.4 L343.7 143.4 L344.5 143.4 L345.2 143.2 L345.9 142.8 L346.7 142.5 L347.4 142.3 L348.1 142.6 L348.8 143.0 L349.6 143.3 L350.3 143.4 L351.0 143.4 L351.8 143.4 L352.5 143.4 L353.2 143.4 L354.0 143.4 L354.7 143.4 L355.4 143.4 L356.2 143.4 L356.9 143.4 L357.6 143.4 L358.4 143.4 L359.1 143.4 L359.8 143.3 L360.6 143.0 L361.3 142.6 L362.0 142.3 L362.8 142.5 L363.5 142.9 L364.2 143.2 L365.0 143.4 L365.7 143.4 L366.4 143.4 L367.2 143.4 L367.9 143.4 L368.6 143.4 L369.4 143.4 L370.1 143.4 L370.8 143.4 L371.6 143.4 L372.3 143.4 L373.0 143.4 L373.8 143.4 L374.5 143.2 L375.2 142.8 L376.0 142.4 L376.7 142.4 L377.4 142.7 L378.2 143.1 L378.9 143.4 L379.6 143.4 L380.4 143.4 L381.1 143.4 L381.8 143.4 L382.6 143.4 L383.3 143.4 L384.0 143.4 L384.8 143.4 L385.5 143.4 L386.2 143.4 L387.0 143.4 L387.7 143.4 L388.4 143.4 L389.2 143.1 L389.9 142.7 L390.6 142.4 L391.4 142.4 L392.1 142.8 L392.8 143.2 L393.6 143.4 L394.3 143.4 L395.0 143.4 L395.8 143.4 L396.5 143.4 L397.2 143.4 L397.9 143.4 L398.7 143.4 L399.4 143.4 L400.1 143.4 L400.9 143.4 L401.6 143.4 L402.3 143.4 L403.1 143.4 L403.8 143.2 L404.5 142.8 L405.3 142.5 L406.0 142.4 L406.7 142.7 L407.5 143.1 L408.2 143.5 L408.9 143.5 L409.7 143.5 L410.4 143.5 L411.1 143.5 L411.9 143.5 L412.6 143.5 L413.3 143.5 L414.1 143.5 L414.8 143.5 L415.5 143.5 L416.3 143.5 L417.0 143.5 L417.7 143.4 L418.5 143.0 L419.2 142.7 L419.9 142.3 L420.7 142.5 L421.4 142.9 L422.1 143.3 L422.9 143.5 L423.6 143.5 L424.3 143.5 L425.1 143.5 L425.8 143.5 L426.5 143.5 L427.3 143.5 L428.0 143.5 L428.7 143.5 L429.5 143.5 L430.2 143.5 L430.9 143.5 L431.7 143.5 L432.4 143.5 L433.1 143.1 L433.9 142.8 L434.6 142.4 L435.3 142.5 L436.1 142.9 L436.8 143.2 L437.5 143.5 L438.3 143.5 L439.0 143.5 L439.7 143.5 L440.5 143.5 L441.2 143.5 L441.9 143.5 L442.7 143.5 L443.4 143.5 L444.1 143.5 L444.8 143.5 L445.6 143.5 L446.3 143.5 L447.0 143.5 L447.8 143.2 L448.5 142.8 L449.2 142.5 L450.0 142.4 L450.7 142.8 L451.4 143.2 L452.2 143.5 L452.9 143.5 L453.6 143.5 L454.4 143.5 L455.1 143.5 L455.8 143.5 L456.6 143.5 L457.3 143.5 L458.0 143.5 L458.8 143.5 L459.5 143.5 L460.2 143.5 L461.0 143.5 L461.7 143.5 L462.4 143.2 L463.2 142.9 L463.9 142.5 L464.6 142.4 L465.4 142.8 L466.1 143.2 L466.8 143.5 L467.6 143.5 L468.3 143.5 L469.0 143.5 L469.8 143.5 L470.5 143.5 L471.2 143.5 L472.0 143.5 L472.7 143.5 L473.4 143.5 L474.2 143.5 L474.9 143.5 L475.6 143.5 L476.4 143.5 L477.1 143.1 L477.8 142.8 L478.6 142.4 L479.3 142.5 L480.0 142.9 L480.8 143.3 L481.5 143.5 L482.2 143.5 L483.0 143.5 L483.7 143.5 L484.4 143.5 L485.2 143.5 L485.9 143.5 L486.6 143.5 L487.4 143.5 L488.1 143.5 L488.8 143.5 L489.6 143.5 L490.3 143.5 L491.0 143.5 L491.8 143.1 L492.5 142.8 L493.2 142.4 L494.0 142.6 L494.7 142.9 L495.4 143.3 L496.1 143.5 L496.9 143.5 L497.6 143.5 L498.3 143.5 L499.1 143.5 L499.8 143.5 L500.5 143.5 L501.3 143.5 L502.0 143.5 L502.7 143.5 L503.5 143.5 L504.2 143.5 L504.9 143.5 L505.7 143.5 L506.4 143.1 L507.1 142.8 L507.9 142.4 L508.6 142.6 L509.3 143.0 L510.1 143.3 L510.8 143.5 L511.5 143.5 L512.3 143.5 L513.0 143.5 L513.7 143.5 L514.5 143.5 L515.2 143.5 L515.9 143.5 L516.7 143.5 L517.4 143.5 L518.1 143.5 L518.9 143.5 L519.6 143.5 L520.3 143.5 L521.1 143.2 L521.8 142.9 L522.5 142.5 L523.3 142.5 L524.0 142.9 L524.7 143.2 L525.5 143.6 L526.2 143.6 L526.9 143.6 L527.7 143.6 L528.4 143.6 L529.1 143.6 L529.9 143.6 L530.6 143.6 L531.3 143.6 L532.1 143.6 L532.8 143.6 L533.5 143.6 L534.3 143.6 L535.0 143.5 L535.7 143.2 L536.5 142.8 L537.2 142.5 L537.9 142.6 L538.7 143.0 L539.4 143.3 L540.1 143.6 L540.9 143.6 L541.6 143.6 L542.3 143.6 L543.0 143.6 L543.8 143.6 L544.5 143.6 L545.2 143.6 L546.0 143.6 L546.7 143.6 L547.4 143.6 L548.2 143.6 L548.9 143.6 L549.6 143.4 L550.4 143.1 L551.1 142.7 L551.8 142.4 L552.6 142.7 L553.3 143.1 L554.0 143.4 L554.8 143.6 L555.5 143.6 L556.2 143.6 L557.0 143.6 L557.7 143.6 L558.4 143.6 L558.9 143.6 L559.9 142.7 L560.6 142.0 L561.4 141.4 L562.1 140.7 L562.8 140.1 L563.3 139.7 L564.3 140.0 L565.0 140.1 L565.9 140.0 L566.5 139.7 L567.2 139.5 L568.0 139.9 L568.7 140.3 L569.4 140.7 L570.2 140.7 L570.9 140.6 L571.6 140.5 L572.4 140.4 L573.1 140.3 L574.1 140.2" fill="none" stroke="#73bf69" stroke-width="1.05" stroke-linejoin="round"/><path d="M48.4 236.2 L49.1 236.1 L49.9 236.0 L50.6 235.9 L51.3 235.6 L52.1 234.8 L52.8 235.0 L53.5 234.3 L54.3 234.4 L55.0 235.3 L55.7 235.7 L56.4 236.7 L57.2 236.3 L57.9 236.6 L58.6 236.3 L59.4 236.2 L60.1 236.8 L60.8 236.6 L61.6 236.5 L62.3 235.9 L63.0 236.1 L63.8 236.6 L64.5 235.9 L65.2 235.9 L66.0 234.8 L66.7 234.7 L67.4 234.9 L68.2 234.7 L68.9 236.0 L69.6 236.6 L70.4 235.9 L71.1 236.0 L71.8 236.5 L72.6 235.9 L73.3 236.3 L74.0 236.2 L74.8 236.6 L75.5 235.9 L76.2 236.1 L77.0 235.9 L77.7 236.0 L78.4 236.5 L79.2 236.3 L79.9 235.9 L80.6 235.3 L81.4 234.7 L82.1 234.7 L82.8 235.0 L83.6 236.2 L84.3 236.2 L85.0 236.5 L85.8 236.5 L86.5 236.0 L87.2 236.4 L88.0 236.5 L88.7 236.4 L89.4 236.1 L90.2 236.7 L90.9 235.9 L91.6 236.8 L92.4 236.1 L93.1 236.0 L93.8 236.8 L94.6 235.9 L95.3 235.7 L96.0 234.9 L96.8 234.8 L97.5 234.9 L98.2 235.4 L99.0 235.3 L99.7 236.6 L100.4 236.1 L101.2 235.9 L101.9 235.9 L102.6 236.5 L103.3 236.5 L104.1 236.3 L104.8 236.1 L105.5 236.7 L106.3 236.1 L107.0 236.1 L107.7 236.0 L108.5 236.8 L109.2 235.7 L109.9 235.8 L110.7 235.0 L111.4 234.1 L112.1 234.3 L112.9 235.4 L113.6 235.5 L114.3 236.3 L115.1 236.5 L115.8 236.5 L116.5 236.7 L117.3 235.5 L118.0 232.2 L118.7 229.0 L119.5 231.9 L120.2 235.4 L120.9 236.8 L121.7 235.9 L122.4 236.3 L123.1 236.4 L123.9 236.2 L124.6 235.3 L125.3 234.4 L126.1 234.2 L126.8 234.8 L127.5 235.8 L128.3 235.6 L129.0 236.8 L129.7 236.4 L130.5 236.1 L131.2 236.7 L131.9 236.2 L132.7 235.9 L133.4 236.2 L134.1 236.1 L134.9 236.7 L135.6 236.4 L136.3 236.7 L137.1 236.1 L137.8 236.4 L138.5 235.6 L139.3 234.5 L140.0 234.0 L140.7 234.1 L141.5 235.2 L142.2 235.8 L142.9 236.2 L143.7 236.4 L144.4 236.6 L145.1 236.5 L145.9 236.7 L146.6 236.5 L147.3 235.9 L148.1 236.0 L148.8 236.3 L149.5 236.4 L150.3 236.5 L151.0 236.8 L151.7 236.6 L152.4 236.1 L153.2 235.5 L153.9 235.3 L154.6 234.3 L155.4 234.1 L156.1 234.8 L156.8 235.4 L157.6 236.0 L158.3 236.5 L159.0 236.2 L159.8 236.6 L160.5 236.4 L161.2 236.1 L162.0 236.2 L162.7 236.6 L163.4 236.0 L164.2 236.3 L164.9 236.3 L165.6 236.8 L166.4 236.3 L167.1 236.6 L167.8 235.6 L168.6 223.0 L169.3 204.8 L170.0 188.6 L170.8 206.4 L171.5 224.9 L172.2 236.1 L173.0 236.2 L173.7 236.1 L174.4 236.5 L175.2 236.1 L175.9 236.1 L176.6 236.2 L177.4 236.0 L178.1 236.0 L178.8 236.4 L179.6 236.4 L180.3 236.7 L181.0 236.1 L181.8 235.9 L182.5 235.8 L183.2 234.9 L184.0 234.3 L184.7 234.3 L185.4 235.4 L186.2 235.5 L186.9 236.3 L187.6 236.3 L188.4 236.5 L189.1 236.3 L189.8 236.2 L190.6 236.3 L191.3 236.2 L192.0 236.9 L192.8 236.7 L193.5 236.5 L194.2 236.3 L195.0 236.7 L195.7 236.2 L196.4 235.8 L197.2 235.7 L197.9 234.7 L198.6 234.5 L199.4 235.3 L200.1 235.9 L200.8 236.3 L201.5 236.7 L202.3 236.7 L203.0 236.9 L203.7 236.5 L204.5 236.5 L205.2 236.3 L205.9 236.3 L206.7 236.7 L207.4 236.0 L208.1 236.9 L208.9 236.5 L209.6 236.6 L210.3 236.5 L211.1 236.5 L211.8 235.2 L212.5 235.0 L213.3 234.7 L214.0 234.6 L214.7 235.7 L215.5 235.9 L216.2 236.6 L216.9 236.4 L217.7 236.0 L218.4 236.1 L219.1 236.5 L219.9 236.1 L220.6 236.3 L221.3 236.6 L222.1 236.8 L222.8 236.3 L223.5 236.4 L224.3 236.0 L225.0 236.0 L225.7 236.0 L226.5 235.6 L227.2 234.5 L227.9 234.7 L228.7 235.2 L229.4 235.4 L230.1 236.0 L230.9 236.8 L231.6 236.3 L232.3 236.1 L233.1 236.6 L233.8 236.5 L234.5 236.7 L235.3 236.6 L236.0 236.0 L236.7 236.6 L237.5 236.0 L238.2 236.1 L238.9 236.4 L239.7 236.7 L240.4 235.9 L241.1 235.7 L241.9 235.2 L242.6 234.6 L243.3 234.1 L244.1 235.2 L244.8 236.0 L245.5 236.5 L246.3 236.8 L247.0 236.3 L247.7 236.5 L248.5 236.6 L249.2 236.2 L249.9 236.1 L250.6 236.9 L251.4 236.4 L252.1 236.7 L252.8 236.0 L253.6 236.2 L254.3 236.7 L255.0 236.7 L255.8 236.2 L256.5 234.8 L257.2 234.9 L258.0 234.3 L258.7 235.0 L259.4 235.5 L260.2 236.2 L260.9 236.2 L261.6 236.8 L262.4 236.2 L263.1 236.6 L263.8 236.4 L264.6 236.6 L265.3 236.7 L266.0 236.4 L266.8 236.5 L267.5 236.6 L268.2 236.2 L269.0 236.4 L269.7 236.9 L270.4 236.1 L271.2 235.2 L271.9 234.2 L272.6 234.1 L273.4 235.1 L274.1 236.2 L274.8 236.1 L275.6 236.5 L276.3 236.4 L277.0 236.3 L277.8 236.3 L278.5 236.5 L279.2 236.1 L280.0 236.6 L280.7 236.6 L281.4 236.1 L282.2 236.8 L282.9 236.7 L283.6 236.2 L284.4 236.4 L285.1 235.1 L285.8 234.6 L286.6 234.4 L287.3 235.1 L288.0 235.3 L288.8 235.8 L289.5 236.8 L290.2 236.5 L291.0 236.4 L291.7 236.5 L292.4 236.6 L293.2 236.8 L293.9 236.4 L294.6 236.2 L295.4 236.9 L296.1 236.7 L296.8 236.2 L297.6 236.2 L298.3 236.3 L299.0 236.4 L299.7 235.1 L300.5 234.2 L301.2 234.0 L301.9 234.9 L302.7 236.1 L303.4 236.0 L304.1 236.8 L304.9 236.4 L305.6 236.1 L306.3 236.3 L307.1 236.8 L307.8 236.7 L308.5 236.1 L309.3 236.8 L310.0 236.4 L310.7 236.6 L311.5 236.8 L312.2 236.4 L312.9 236.8 L313.7 236.1 L314.4 235.2 L315.1 234.9 L315.9 235.1 L316.6 235.2 L317.3 235.7 L318.1 236.1 L318.8 236.8 L319.5 236.6 L320.3 236.7 L321.0 236.4 L321.7 236.5 L322.5 236.1 L323.2 236.6 L323.9 236.9 L324.7 236.3 L325.4 236.8 L326.1 236.4 L326.9 236.5 L327.6 235.7 L328.3 235.4 L329.1 234.7 L329.8 234.5 L330.5 234.9 L331.3 235.8 L332.0 235.9 L332.7 236.5 L333.5 236.9 L334.2 236.8 L334.9 236.6 L335.7 236.3 L336.4 236.8 L337.1 236.3 L337.9 236.4 L338.6 236.9 L339.3 236.4 L340.1 236.9 L340.8 236.9 L341.5 236.4 L342.3 236.3 L343.0 235.1 L343.7 234.8 L344.5 234.6 L345.2 234.7 L345.9 236.1 L346.7 236.0 L347.4 236.9 L348.1 236.8 L348.8 236.1 L349.6 236.4 L350.3 236.8 L351.0 236.9 L351.8 236.1 L352.5 236.4 L353.2 236.2 L354.0 236.9 L354.7 236.4 L355.4 236.7 L356.2 236.8 L356.9 236.6 L357.6 235.7 L358.4 235.3 L359.1 234.6 L359.8 235.0 L360.6 235.0 L361.3 235.8 L362.0 236.3 L362.8 236.6 L363.5 236.2 L364.2 236.5 L365.0 236.4 L365.7 236.5 L366.4 236.3 L367.2 236.6 L367.9 236.9 L368.6 237.0 L369.4 236.8 L370.1 237.0 L370.8 236.2 L371.6 236.2 L372.3 235.4 L373.0 235.5 L373.8 234.4 L374.5 234.5 L375.2 235.4 L376.0 236.2 L376.7 236.6 L377.4 236.9 L378.2 236.9 L378.9 236.9 L379.6 236.7 L380.4 236.7 L381.1 236.2 L381.8 236.9 L382.6 236.8 L383.3 236.8 L384.0 236.9 L384.8 236.7 L385.5 236.8 L386.2 236.3 L387.0 236.1 L387.7 234.6 L388.4 234.5 L389.2 234.5 L389.9 235.3 L390.6 236.0 L391.4 236.6 L392.1 236.1 L392.8 236.9 L393.6 236.4 L394.3 236.8 L395.0 236.4 L395.8 236.3 L396.5 236.9 L397.2 236.8 L397.9 237.0 L398.7 236.8 L399.4 237.0 L400.1 236.7 L400.9 236.1 L401.6 236.2 L402.3 235.6 L403.1 234.8 L403.8 234.7 L404.5 234.9 L405.3 235.5 L406.0 236.7 L406.7 236.8 L407.5 236.4 L408.2 236.2 L408.9 236.4 L409.7 236.6 L410.4 236.1 L411.1 237.0 L411.9 237.0 L412.6 236.3 L413.3 236.7 L414.1 237.0 L414.8 236.5 L415.5 235.8 L416.3 235.7 L417.0 235.2 L417.7 234.8 L418.5 235.3 L419.2 235.1 L419.9 236.1 L420.7 236.2 L421.4 237.0 L422.1 236.8 L422.9 237.0 L423.6 236.7 L424.3 237.0 L425.1 236.8 L425.8 236.7 L426.5 236.8 L427.3 237.0 L428.0 237.0 L428.7 236.1 L429.5 236.9 L430.2 236.3 L430.9 235.8 L431.7 235.0 L432.4 234.8 L433.1 235.1 L433.9 235.9 L434.6 236.1 L435.3 236.2 L436.1 236.5 L436.8 236.3 L437.5 236.9 L438.3 237.0 L439.0 236.6 L439.7 236.6 L440.5 236.5 L441.2 236.7 L441.9 236.5 L442.7 236.4 L443.4 236.2 L444.1 236.8 L444.8 236.0 L445.6 235.0 L446.3 235.0 L447.0 235.0 L447.8 235.4 L448.5 236.2 L449.2 236.2 L450.0 236.3 L450.7 236.8 L451.4 236.9 L452.2 237.0 L452.9 236.8 L453.6 237.0 L454.4 236.7 L455.1 236.5 L455.8 236.8 L456.6 237.0 L457.3 236.4 L458.0 237.0 L458.8 236.6 L459.5 235.9 L460.2 235.2 L461.0 234.9 L461.7 234.9 L462.4 235.7 L463.2 235.9 L463.9 236.6 L464.6 236.2 L465.4 236.5 L466.1 236.4 L466.8 236.5 L467.6 236.7 L468.3 236.3 L469.0 236.5 L469.8 236.2 L470.5 236.4 L471.2 236.4 L472.0 236.8 L472.7 236.3 L473.4 236.7 L474.2 236.3 L474.9 235.7 L475.6 235.0 L476.4 234.9 L477.1 235.1 L477.8 236.1 L478.6 236.9 L479.3 236.4 L480.0 236.6 L480.8 237.1 L481.5 237.0 L482.2 237.0 L483.0 236.8 L483.7 236.3 L484.4 236.2 L485.2 236.5 L485.9 236.9 L486.6 236.7 L487.4 236.8 L488.1 236.5 L488.8 236.2 L489.6 235.1 L490.3 234.2 L491.0 234.7 L491.8 235.9 L492.5 236.1 L493.2 236.9 L494.0 236.4 L494.7 236.7 L495.4 236.2 L496.1 236.4 L496.9 237.0 L497.6 236.8 L498.3 236.2 L499.1 236.7 L499.8 236.7 L500.5 236.7 L501.3 236.4 L502.0 236.2 L502.7 236.6 L503.5 235.6 L504.2 235.3 L504.9 235.2 L505.7 234.3 L506.4 235.3 L507.1 236.3 L507.9 236.0 L508.6 237.1 L509.3 236.6 L510.1 236.7 L510.8 236.3 L511.5 236.7 L512.3 236.9 L513.0 236.9 L513.7 236.9 L514.5 236.6 L515.2 236.8 L515.9 236.4 L516.7 235.8 L517.4 231.3 L518.1 226.9 L518.9 229.4 L519.6 232.9 L520.3 234.3 L521.1 234.8 L521.8 235.6 L522.5 236.4 L523.3 236.3 L524.0 236.7 L524.7 237.1 L525.5 237.0 L526.2 237.0 L526.9 236.5 L527.7 236.3 L528.4 236.9 L529.1 236.4 L529.9 236.8 L530.6 236.5 L531.3 236.3 L532.1 236.5 L532.8 235.8 L533.5 235.6 L534.3 235.3 L535.0 234.6 L535.7 235.1 L536.5 236.1 L537.2 236.6 L537.9 236.8 L538.7 237.1 L539.4 236.8 L540.1 236.8 L540.9 236.7 L541.6 236.5 L542.3 236.8 L543.0 236.2 L543.8 236.4 L544.5 236.3 L545.2 236.5 L546.0 236.5 L546.7 236.2 L547.4 235.4 L548.2 235.1 L548.9 234.4 L549.6 234.9 L550.4 235.7 L551.1 236.5 L551.8 237.1 L552.6 237.1 L553.3 236.8 L554.0 236.6 L554.8 236.4 L555.5 236.5 L556.2 236.9 L557.0 236.3 L557.7 236.9 L558.4 236.5 L559.2 237.1 L559.9 236.4 L560.6 236.5 L561.4 236.3 L562.1 235.9 L562.8 235.4 L563.3 234.9 L564.3 228.4 L565.0 223.3 L565.8 229.1 L566.5 235.3 L567.2 233.4 L568.0 230.6 L568.7 232.2 L569.4 235.4 L570.2 236.5 L570.9 236.9 L571.6 236.1 L572.4 234.7 L573.1 233.0 L574.1 231.1" fill="none" stroke="#f2cc0c" stroke-width="1.05" stroke-linejoin="round"/><rect x="25.0" y="276" width="14" height="4" rx="1" fill="#73bf69"/><rect x="238.8" y="276" width="14" height="4" rx="1" fill="#f2cc0c"/></svg></div><div class="panel" style="left:631px;top:106px;width:608px;height:296px"><svg style="position:absolute;left:-1px;top:-1px" width="608" height="296" viewBox="0 0 608 296"><defs><linearGradient id="g631_170_0" x1="0" y1="58.3" x2="0" y2="244.5" gradientUnits="userSpaceOnUse"><stop offset="0" stop-color="#73bf69" stop-opacity="0.72"/><stop offset="1" stop-color="#73bf69" stop-opacity="0"/></linearGradient><linearGradient id="g631_170_1" x1="0" y1="58.3" x2="0" y2="244.5" gradientUnits="userSpaceOnUse"><stop offset="0" stop-color="#f2cc0c" stop-opacity="0.72"/><stop offset="1" stop-color="#f2cc0c" stop-opacity="0"/></linearGradient></defs><line x1="62.6" x2="574.2" y1="244.5" y2="244.5" stroke="#2f3237" stroke-width="1"/><line x1="62.6" x2="574.2" y1="197.9" y2="197.9" stroke="#2f3237" stroke-width="1"/><line x1="62.6" x2="574.2" y1="151.4" y2="151.4" stroke="#2f3237" stroke-width="1"/><line x1="62.6" x2="574.2" y1="104.9" y2="104.9" stroke="#2f3237" stroke-width="1"/><line x1="62.6" x2="574.2" y1="58.3" y2="58.3" stroke="#2f3237" stroke-width="1"/><line x1="106.4" x2="106.4" y1="58.3" y2="248.5" stroke="#2f3237" stroke-width="1"/><line x1="190.9" x2="190.9" y1="58.3" y2="248.5" stroke="#2f3237" stroke-width="1"/><line x1="275.4" x2="275.4" y1="58.3" y2="248.5" stroke="#2f3237" stroke-width="1"/><line x1="360.0" x2="360.0" y1="58.3" y2="248.5" stroke="#2f3237" stroke-width="1"/><line x1="444.5" x2="444.5" y1="58.3" y2="248.5" stroke="#2f3237" stroke-width="1"/><line x1="529.0" x2="529.0" y1="58.3" y2="248.5" stroke="#2f3237" stroke-width="1"/><path d="M67.94 235.42 C68.2 235.4 68.9 235.5 69.4 235.5 C69.8 235.6 70.3 235.6 70.8 235.6 C71.2 235.6 71.7 235.5 72.2 235.5 C72.6 235.5 73.1 235.6 73.6 235.6 C74.0 235.6 74.5 235.6 75.0 235.6 C75.5 235.6 75.9 235.5 76.4 235.5 C76.9 235.4 77.3 235.3 77.8 235.2 C78.3 235.2 78.7 235.3 79.2 235.3 C79.7 235.3 80.2 235.3 80.6 235.3 C81.1 235.3 81.6 235.5 82.0 235.6 C82.5 235.6 83.0 235.4 83.4 235.4 C83.9 235.4 84.4 235.5 84.8 235.5 C85.3 235.6 85.8 235.6 86.3 235.6 C86.7 235.6 87.2 235.6 87.7 235.6 C88.1 235.6 88.6 235.6 89.1 235.6 C89.5 235.5 90.0 235.3 90.5 235.2 C91.0 235.2 91.4 235.3 91.9 235.3 C92.4 235.3 92.8 235.3 93.3 235.3 C93.8 235.3 94.2 235.3 94.7 235.3 C95.2 235.3 95.6 235.5 96.1 235.6 C96.7 235.6 97.5 235.5 97.9 235.4 C98.4 235.4 98.5 235.4 98.9 235.2 C99.3 235.1 99.9 234.9 100.3 234.7 C100.8 234.5 101.3 234.4 101.8 234.3 C102.2 234.1 102.8 233.9 103.2 233.8 C103.5 233.8 103.6 233.8 103.9 233.8 C104.1 233.7 104.2 233.5 104.6 233.5 C104.9 233.5 105.5 233.8 106.0 233.8 C106.4 233.7 107.0 233.4 107.4 233.4 C107.7 233.3 107.9 233.3 108.1 233.3 C108.3 233.4 108.4 233.4 108.8 233.6 C109.1 233.8 109.7 234.1 110.2 234.4 C110.7 234.6 111.3 235.0 111.6 235.2 C112.0 235.4 112.1 235.4 112.3 235.4 C112.6 235.4 112.7 235.4 113.0 235.4 C113.4 235.5 114.0 235.6 114.4 235.6 C114.9 235.6 115.4 235.3 115.8 235.2 C116.3 235.2 116.8 235.2 117.2 235.2 C117.7 235.3 118.2 235.3 118.7 235.4 C119.1 235.4 119.6 235.5 120.1 235.5 C120.5 235.5 121.0 235.2 121.5 235.2 C121.9 235.2 122.4 235.4 122.9 235.4 C123.4 235.4 123.8 235.2 124.3 235.2 C124.8 235.2 125.2 235.2 125.7 235.2 C126.2 235.3 126.6 235.4 127.1 235.4 C127.6 235.4 128.0 235.4 128.5 235.4 C129.0 235.4 129.5 235.3 129.9 235.3 C130.4 235.3 130.9 235.4 131.3 235.4 C131.8 235.4 132.3 235.5 132.7 235.5 C133.2 235.5 133.7 235.5 134.2 235.5 C134.6 235.4 135.1 235.2 135.6 235.2 C136.0 235.2 136.5 235.5 137.0 235.6 C137.4 235.6 137.9 235.6 138.4 235.6 C138.8 235.5 139.3 235.3 139.8 235.3 C140.3 235.3 140.7 235.5 141.2 235.5 C141.7 235.5 142.1 235.4 142.6 235.3 C143.1 235.3 143.5 235.4 144.0 235.4 C144.5 235.4 145.0 235.4 145.4 235.4 C145.9 235.4 146.4 235.1 146.8 235.1 C147.3 235.1 147.8 235.4 148.2 235.5 C148.7 235.5 149.2 235.4 149.6 235.4 C150.1 235.4 150.6 235.5 151.1 235.5 C151.5 235.5 152.0 235.3 152.5 235.3 C152.9 235.3 153.4 235.4 153.9 235.4 C154.3 235.4 154.8 235.4 155.3 235.4 C155.7 235.4 156.2 235.2 156.7 235.2 C157.2 235.2 157.6 235.4 158.1 235.4 C158.6 235.4 159.0 235.3 159.5 235.3 C160.0 235.2 160.4 235.1 160.9 235.1 C161.4 235.2 161.9 235.4 162.3 235.5 C162.8 235.5 163.3 235.5 163.7 235.5 C164.2 235.5 164.7 235.5 165.1 235.4 C165.6 235.4 166.1 235.2 166.6 235.2 C167.0 235.2 167.5 235.2 168.0 235.3 C168.4 235.3 168.9 235.4 169.4 235.4 C169.8 235.4 170.3 235.4 170.8 235.4 C171.2 235.4 171.7 235.4 172.2 235.4 C172.7 235.4 173.1 235.3 173.6 235.3 C174.1 235.3 174.5 235.5 175.0 235.5 C175.5 235.5 175.9 235.2 176.4 235.2 C177.0 235.2 177.7 235.3 178.2 235.3 C178.8 229.1 179.3 213.6 179.7 198.1 C180.1 182.7 180.4 159.5 180.7 142.6 C181.0 125.6 181.1 106.0 181.4 96.5 C181.6 87.0 181.8 89.1 182.0 85.6 C182.3 82.0 182.5 76.4 182.7 75.1 C183.0 75.1 183.1 76.3 183.5 77.4 C183.8 78.5 184.1 77.4 184.6 81.6 C185.1 86.3 185.8 94.1 186.4 105.8 C187.0 117.5 187.6 136.5 188.1 151.9 C188.6 167.3 188.9 184.2 189.4 198.1 C189.9 212.0 190.5 229.1 190.9 235.3 C191.3 235.3 191.5 235.2 191.9 235.2 C192.3 235.1 192.8 235.1 193.3 235.1 C193.8 235.1 194.3 235.4 194.7 235.5 C195.2 235.5 195.7 235.4 196.1 235.4 C196.6 235.3 197.1 235.1 197.5 235.0 C198.0 235.0 198.5 235.1 198.9 235.1 C199.4 235.2 199.9 235.3 200.4 235.3 C200.8 235.3 201.3 235.1 201.8 235.0 C202.2 235.0 202.7 235.2 203.2 235.2 C203.6 235.2 204.1 235.1 204.6 235.1 C205.1 235.1 205.5 235.3 206.0 235.3 C206.5 235.4 206.9 235.4 207.4 235.4 C207.9 235.4 208.3 235.3 208.8 235.3 C209.3 235.3 209.7 235.4 210.2 235.4 C210.7 235.4 211.2 235.3 211.6 235.3 C212.1 235.2 212.6 235.0 213.0 235.0 C213.5 235.0 214.0 235.2 214.4 235.3 C214.9 235.4 215.4 235.4 215.9 235.4 C216.3 235.4 216.8 235.4 217.3 235.4 C217.7 235.4 218.1 235.4 218.7 235.3 C219.2 235.3 220.0 235.3 220.5 235.2 C221.0 235.1 221.1 234.9 221.5 234.8 C221.9 234.8 222.4 234.8 222.9 234.7 C223.4 234.7 223.8 234.5 224.3 234.4 C224.8 234.4 225.2 234.4 225.7 234.2 C226.2 234.1 226.6 233.7 227.1 233.5 C227.7 233.4 228.5 233.4 229.0 233.3 C229.4 233.3 229.5 233.3 229.9 233.2 C230.3 233.2 230.9 233.2 231.3 233.2 C231.8 233.1 232.3 233.1 232.8 233.1 C233.2 233.0 233.7 233.0 234.2 232.9 C234.6 232.8 235.2 232.8 235.6 232.7 C236.0 232.6 236.1 232.4 236.6 232.4 C237.0 232.5 237.9 233.1 238.4 233.4 C238.9 233.8 239.3 234.2 239.8 234.5 C240.3 234.8 241.2 235.2 241.6 235.4 C242.1 235.6 242.2 235.6 242.6 235.6 C243.0 235.6 243.6 235.4 244.0 235.4 C244.5 235.4 245.0 235.4 245.4 235.4 C245.9 235.4 246.4 235.1 246.8 235.1 C247.3 235.1 247.8 235.4 248.3 235.4 C248.7 235.4 249.2 235.3 249.7 235.2 C250.1 235.2 250.6 235.1 251.1 235.1 C251.5 235.1 252.0 235.2 252.5 235.2 C252.9 235.2 253.4 234.9 253.9 234.9 C254.4 234.9 254.8 235.1 255.3 235.1 C255.8 235.2 256.2 235.2 256.7 235.2 C257.2 235.2 257.6 235.1 258.1 235.1 C258.6 235.1 259.1 235.2 259.5 235.2 C260.0 235.2 260.5 235.0 260.9 235.0 C261.4 235.0 261.9 235.1 262.3 235.1 C262.8 235.0 263.3 234.8 263.7 234.7 C264.2 234.7 264.7 234.7 265.2 234.7 C265.6 234.7 266.1 234.8 266.6 234.8 C267.0 234.9 267.5 235.0 268.0 235.0 C268.4 235.0 268.8 234.9 269.4 234.9 C269.9 234.8 270.7 234.7 271.2 234.7 C271.7 234.7 271.8 234.8 272.2 234.8 C272.6 234.8 273.1 234.8 273.6 234.7 C274.1 234.7 275.0 234.5 275.4 234.5 C275.9 234.5 276.0 234.8 276.4 234.8 C276.8 234.9 277.4 234.8 277.8 234.9 C278.3 235.0 278.8 235.4 279.2 235.5 C279.7 235.7 280.0 235.7 280.5 235.7 C281.0 235.4 281.6 234.8 282.1 234.3 C282.6 233.7 283.0 233.0 283.5 232.4 C283.9 231.9 284.4 231.6 284.9 231.2 C285.4 230.7 286.0 229.9 286.4 229.6 C286.9 229.4 287.2 229.4 287.7 229.4 C288.1 229.4 288.6 229.6 289.1 229.6 C289.6 229.6 290.0 229.4 290.5 229.4 C291.0 229.4 291.5 229.5 291.9 229.5 C292.4 229.5 292.9 229.5 293.3 229.5 C293.8 229.5 294.3 229.5 294.7 229.5 C295.2 229.5 295.7 229.6 296.1 229.6 C296.6 229.7 297.1 229.8 297.6 229.8 C298.0 229.8 298.4 229.8 299.0 229.7 C299.5 229.7 300.3 229.6 300.8 229.6 C301.3 229.6 301.4 229.5 301.8 229.5 C302.2 229.5 302.7 229.6 303.2 229.6 C303.7 229.6 304.1 229.6 304.6 229.7 C305.1 229.7 305.5 230.0 306.0 230.0 C306.5 230.0 306.9 230.0 307.4 230.0 C307.9 230.0 308.4 230.0 308.8 230.0 C309.3 230.1 309.8 230.2 310.2 230.2 C310.7 230.2 311.2 230.2 311.6 230.2 C312.1 230.2 312.6 230.4 313.1 230.4 C313.5 230.5 313.8 230.5 314.3 230.5 C314.8 230.4 315.3 229.8 315.9 229.4 C316.4 229.0 317.2 228.4 317.7 228.2 C318.2 228.1 318.3 228.1 318.7 228.1 C319.1 228.1 319.6 228.2 320.1 228.2 C320.6 228.1 321.0 227.9 321.5 227.8 C322.0 227.7 322.4 227.7 322.9 227.7 C323.4 227.7 323.8 228.0 324.3 228.0 C324.9 228.0 325.7 227.8 326.2 227.7 C326.6 227.7 326.7 227.6 327.1 227.6 C327.5 227.6 328.1 227.6 328.5 227.7 C329.0 227.7 329.5 227.8 330.0 227.9 C330.4 228.0 330.9 228.3 331.4 228.3 C331.8 228.3 332.3 228.0 332.8 228.0 C333.2 228.0 333.7 228.4 334.2 228.4 C334.7 228.4 335.1 228.2 335.6 228.1 C336.1 228.1 336.5 228.3 337.0 228.4 C337.5 228.5 337.9 228.7 338.4 228.8 C338.9 228.8 339.3 228.8 339.8 228.8 C340.3 228.8 340.8 228.7 341.2 228.7 C341.7 228.7 342.2 228.8 342.6 228.8 C343.1 228.8 343.6 228.8 344.0 228.8 C344.5 228.8 344.9 228.8 345.5 228.8 C346.0 228.9 346.8 229.1 347.3 229.1 C347.8 229.1 347.9 229.1 348.3 229.1 C348.7 229.1 349.2 229.1 349.7 229.0 C350.1 228.8 350.6 228.4 351.1 228.3 C351.6 228.3 352.0 228.5 352.5 228.5 C353.0 228.4 353.4 228.0 353.9 227.9 C354.4 227.7 355.3 227.9 355.7 227.7 C356.2 227.6 356.3 227.5 356.7 227.2 C357.1 226.8 357.6 226.2 358.1 225.8 C358.7 225.3 359.5 224.7 360.0 224.5 C360.4 224.5 360.5 224.6 360.9 224.7 C361.3 224.8 361.8 224.9 362.4 225.1 C362.9 225.3 363.7 225.6 364.2 225.9 C364.7 226.2 364.8 226.4 365.2 226.7 C365.6 227.0 366.0 227.3 366.6 227.8 C367.1 228.3 367.9 229.3 368.4 229.6 C368.9 229.6 369.0 229.6 369.4 229.6 C369.8 229.6 370.3 229.3 370.8 229.3 C371.3 229.3 371.7 229.3 372.2 229.3 C372.7 229.2 373.2 228.9 373.6 228.8 C374.1 228.8 374.5 228.8 375.0 228.7 C375.6 228.7 376.4 228.7 376.9 228.7 C377.3 228.7 377.5 228.7 377.9 228.7 C378.2 228.7 378.8 228.7 379.3 228.7 C379.7 228.7 380.2 228.9 380.7 228.9 C381.1 228.9 381.6 228.9 382.1 228.9 C382.5 228.9 383.0 228.7 383.5 228.6 C384.0 228.6 384.4 228.7 384.9 228.7 C385.4 228.7 385.8 228.5 386.3 228.5 C386.8 228.5 387.2 228.6 387.7 228.7 C388.2 228.7 388.6 228.9 389.1 228.9 C389.6 228.9 390.1 228.8 390.5 228.8 C391.0 228.7 391.5 228.6 391.9 228.6 C392.4 228.6 392.9 228.6 393.3 228.7 C393.8 228.8 394.3 228.9 394.8 228.9 C395.2 228.9 395.7 228.6 396.2 228.6 C396.6 228.6 397.1 228.6 397.6 228.6 C398.0 228.6 398.5 228.9 399.0 228.9 C399.4 228.9 399.9 228.7 400.4 228.7 C400.9 228.7 401.3 228.8 401.8 228.8 C402.3 228.8 402.7 228.6 403.2 228.6 C403.7 228.6 404.1 228.8 404.6 228.8 C405.1 228.9 405.6 228.9 406.0 228.9 C406.5 228.9 407.0 228.8 407.4 228.8 C407.9 228.7 408.4 228.5 408.8 228.5 C409.3 228.6 409.8 228.9 410.2 228.9 C410.7 228.9 411.2 228.9 411.7 228.9 C412.1 228.9 412.6 228.8 413.1 228.7 C413.5 228.6 414.0 228.6 414.5 228.6 C414.9 228.6 415.4 228.7 415.9 228.8 C416.4 228.8 416.8 228.8 417.3 228.8 C417.8 228.8 418.2 228.6 418.7 228.6 C419.2 228.6 419.6 228.6 420.1 228.7 C420.6 228.7 421.0 229.0 421.5 229.0 C422.0 229.0 422.5 228.6 422.9 228.6 C423.4 228.6 423.9 228.9 424.3 228.9 C424.8 228.9 425.3 228.9 425.7 228.9 C426.2 228.8 426.7 228.7 427.2 228.6 C427.6 228.6 428.1 228.8 428.6 228.8 C429.0 228.8 429.5 228.7 430.0 228.7 C430.4 228.7 430.9 229.0 431.4 229.0 C431.8 229.0 432.3 228.6 432.8 228.6 C433.3 228.6 433.7 228.9 434.2 229.0 C434.7 229.0 435.1 229.0 435.6 229.0 C436.1 229.0 436.5 228.8 437.0 228.8 C437.5 228.8 438.0 228.9 438.4 228.9 C438.9 228.9 439.4 228.9 439.8 228.8 C440.3 228.8 440.8 228.7 441.2 228.6 C441.7 228.6 442.2 228.7 442.6 228.7 C443.1 228.8 443.6 229.0 444.1 229.1 C444.5 229.1 445.0 229.0 445.5 228.9 C445.9 228.9 446.4 228.8 446.9 228.8 C447.3 228.8 447.8 228.9 448.3 228.9 C448.8 228.8 449.2 228.8 449.7 228.8 C450.2 228.8 450.6 228.8 451.1 228.9 C451.6 228.9 452.0 229.0 452.5 229.1 C453.0 229.1 453.4 229.0 453.9 229.0 C454.4 228.9 454.9 228.7 455.3 228.7 C455.8 228.7 456.3 228.9 456.7 228.9 C457.2 228.9 457.7 228.8 458.1 228.8 C458.6 228.7 459.1 228.7 459.6 228.7 C460.0 228.7 460.5 228.8 461.0 228.8 C461.4 228.8 461.9 228.8 462.4 228.8 C462.8 228.8 463.3 228.8 463.8 228.8 C464.2 228.9 464.7 229.0 465.2 229.0 C465.7 229.0 466.1 228.7 466.6 228.7 C467.1 228.7 467.5 228.9 468.0 228.9 C468.5 228.9 468.9 228.7 469.4 228.7 C469.9 228.7 470.4 229.0 470.8 229.0 C471.3 229.0 471.8 228.8 472.2 228.7 C472.7 228.7 473.2 228.8 473.6 228.8 C474.1 228.8 474.6 228.8 475.0 228.9 C475.5 228.9 476.0 228.9 476.5 229.0 C476.9 229.0 477.4 229.1 477.9 229.1 C478.3 229.1 478.8 228.8 479.3 228.8 C479.7 228.8 480.2 229.0 480.7 229.0 C481.2 229.0 481.6 228.9 482.1 228.9 C482.6 228.9 483.0 229.1 483.5 229.1 C484.0 229.1 484.4 229.1 484.9 229.1 C485.4 229.1 485.8 229.1 486.3 229.1 C486.8 229.1 487.3 228.8 487.7 228.8 C488.2 228.8 488.7 229.1 489.1 229.1 C489.6 229.1 490.1 228.8 490.5 228.8 C491.0 228.8 491.5 229.0 492.0 229.0 C492.4 229.0 492.9 228.9 493.4 228.9 C493.8 228.9 494.3 229.0 494.8 229.0 C495.2 229.0 495.7 228.9 496.2 228.9 C496.6 228.9 497.1 229.1 497.6 229.2 C498.1 229.2 498.5 229.1 499.0 229.0 C499.5 229.0 499.9 228.8 500.4 228.8 C500.9 228.8 501.3 229.1 501.8 229.1 C502.3 229.1 502.8 228.9 503.2 228.9 C503.7 228.9 504.2 229.0 504.6 229.1 C505.1 229.1 505.6 229.1 506.0 229.1 C506.5 229.1 507.0 229.2 507.4 229.2 C507.9 229.2 508.4 229.2 508.9 229.2 C509.3 229.2 509.8 228.9 510.3 228.8 C510.7 228.8 511.2 228.8 511.7 228.9 C512.1 228.9 512.6 228.9 513.1 228.9 C513.6 228.9 514.0 228.9 514.5 228.9 C515.0 228.9 515.4 228.8 515.9 228.8 C516.4 228.9 516.8 229.2 517.3 229.2 C517.8 229.2 518.2 229.0 518.7 229.0 C519.2 229.0 519.7 229.0 520.1 229.0 C520.6 229.0 521.1 229.0 521.5 229.0 C522.0 229.0 522.5 228.9 522.9 228.8 C523.4 228.8 523.9 228.9 524.4 228.9 C524.8 228.9 525.3 228.8 525.8 228.8 C526.2 228.9 526.7 229.2 527.2 229.2 C527.6 229.2 528.1 229.0 528.6 229.0 C529.0 229.0 529.5 229.0 530.0 229.0 C530.5 229.0 530.9 228.9 531.4 228.9 C531.9 229.0 532.3 229.0 532.8 229.0 C533.3 229.0 533.7 228.9 534.2 228.9 C534.7 228.9 535.2 229.2 535.6 229.2 C536.1 229.2 536.6 228.9 537.0 228.9 C537.5 228.9 538.0 229.1 538.4 229.1 C538.9 229.1 539.4 229.1 539.8 229.0 C540.3 229.0 540.8 228.9 541.3 228.9 C541.7 228.9 542.2 229.0 542.7 229.0 C543.1 229.0 543.6 229.1 544.1 229.2 C544.5 229.2 545.0 229.2 545.5 229.2 C546.0 229.2 546.4 229.2 546.9 229.2 C547.4 229.2 547.8 229.1 548.3 229.0 C548.8 229.0 549.2 228.9 549.7 228.9 C550.2 228.9 550.6 228.9 551.1 228.9 C551.6 229.0 552.1 229.1 552.5 229.2 C553.0 229.2 553.5 229.2 553.9 229.2 C554.4 229.1 554.9 229.0 555.3 229.0 C555.8 229.0 556.3 229.2 556.8 229.2 C557.2 229.2 557.7 229.2 558.2 229.2 C558.6 229.2 559.1 229.4 559.6 229.4 C560.0 229.4 560.5 229.3 560.9 229.1 C561.4 228.9 561.9 228.6 562.4 228.2 C562.9 227.8 563.3 227.4 563.8 227.0 C564.3 226.6 564.7 226.2 565.2 225.8 C565.7 225.5 566.2 225.1 566.6 224.8 C567.0 224.5 567.2 224.0 567.7 224.0 C568.2 224.0 568.9 224.6 569.4 224.8 C569.9 225.0 570.3 225.0 570.8 225.2 C571.4 225.4 572.2 226.0 572.5 226.1 L572.5 244.5 L67.9 244.5 Z" fill="url(#g631_170_0)" stroke="none"/><path d="M67.94 238.50 C68.2 238.5 68.9 238.5 69.4 238.5 C69.8 238.5 70.3 238.4 70.8 238.4 C71.2 238.4 71.7 238.4 72.2 238.4 C72.6 238.4 73.1 238.4 73.6 238.4 C74.0 238.4 74.5 238.4 75.0 238.4 C75.5 238.4 75.9 238.4 76.4 238.4 C76.9 238.4 77.3 238.6 77.8 238.6 C78.3 238.6 78.7 238.5 79.2 238.5 C79.7 238.5 80.2 238.4 80.6 238.4 C81.1 238.4 81.6 238.5 82.0 238.5 C82.5 238.5 83.0 238.4 83.4 238.4 C83.9 238.4 84.4 238.6 84.8 238.6 C85.3 238.6 85.8 238.5 86.3 238.5 C86.7 238.5 87.2 238.6 87.7 238.6 C88.1 238.6 88.6 238.5 89.1 238.5 C89.5 238.5 90.0 238.5 90.5 238.5 C91.0 238.5 91.4 238.6 91.9 238.6 C92.4 238.6 92.8 238.6 93.3 238.6 C93.8 238.6 94.2 238.6 94.7 238.5 C95.2 238.5 95.6 238.4 96.1 238.4 C96.6 238.4 97.1 238.4 97.5 238.4 C98.0 238.5 98.5 238.6 98.9 238.6 C99.4 238.6 99.9 238.4 100.3 238.4 C100.8 238.4 101.3 238.6 101.8 238.6 C102.2 238.6 102.7 238.5 103.2 238.5 C103.6 238.5 104.1 238.6 104.6 238.6 C105.0 238.6 105.5 238.6 106.0 238.6 C106.4 238.6 106.9 238.4 107.4 238.4 C107.9 238.4 108.3 238.5 108.8 238.6 C109.3 238.6 109.7 238.6 110.2 238.6 C110.7 238.5 111.1 238.4 111.6 238.4 C112.1 238.4 112.6 238.4 113.0 238.4 C113.5 238.4 114.0 238.5 114.4 238.5 C114.9 238.5 115.4 238.4 115.8 238.4 C116.3 238.4 116.8 238.5 117.2 238.5 C117.7 238.5 118.2 238.5 118.7 238.5 C119.1 238.5 119.6 238.6 120.1 238.6 C120.5 238.6 121.0 238.4 121.5 238.4 C121.9 238.4 122.4 238.5 122.9 238.5 C123.4 238.4 123.8 238.4 124.3 238.4 C124.8 238.4 125.2 238.4 125.7 238.4 C126.2 238.4 126.6 238.5 127.1 238.5 C127.6 238.5 128.0 238.5 128.5 238.5 C129.0 238.5 129.5 238.6 129.9 238.6 C130.4 238.6 131.0 238.6 131.3 238.6 C131.7 238.6 131.9 238.6 132.1 238.5 C132.3 238.0 132.4 237.3 132.7 235.6 C133.1 233.8 133.8 230.1 134.3 228.2 C134.8 226.3 135.5 224.3 135.9 224.0 C136.3 224.0 136.7 225.9 137.0 226.6 C137.3 227.3 137.4 227.4 137.7 228.2 C137.9 229.0 138.0 229.6 138.4 231.4 C138.8 233.1 139.5 237.3 140.0 238.5 C140.4 238.6 140.8 238.6 141.2 238.6 C141.6 238.6 142.1 238.5 142.6 238.5 C143.1 238.5 143.5 238.5 144.0 238.5 C144.5 238.5 145.0 238.5 145.4 238.5 C145.9 238.5 146.4 238.4 146.8 238.4 C147.3 238.4 147.8 238.5 148.2 238.5 C148.7 238.5 149.2 238.5 149.6 238.5 C150.1 238.5 150.6 238.5 151.1 238.5 C151.5 238.5 152.0 238.4 152.5 238.4 C152.9 238.5 153.4 238.6 153.9 238.6 C154.3 238.6 154.8 238.4 155.3 238.4 C155.7 238.4 156.2 238.6 156.7 238.6 C157.2 238.6 157.6 238.5 158.1 238.4 C158.6 238.4 159.0 238.4 159.5 238.4 C160.0 238.4 160.4 238.6 160.9 238.6 C161.4 238.6 161.9 238.4 162.3 238.4 C162.8 238.4 163.3 238.5 163.7 238.5 C164.2 238.5 164.7 238.5 165.1 238.5 C165.6 238.5 166.1 238.6 166.6 238.6 C167.0 238.6 167.5 238.6 168.0 238.6 C168.4 238.6 168.9 238.6 169.4 238.6 C169.8 238.5 170.3 238.4 170.8 238.4 C171.2 238.4 171.7 238.6 172.2 238.6 C172.7 238.6 173.1 238.5 173.6 238.4 C174.1 238.4 174.5 238.4 175.0 238.4 C175.5 238.4 175.9 238.4 176.4 238.4 C176.9 238.4 177.4 238.5 177.8 238.5 C178.3 238.5 178.6 238.5 179.1 238.5 C179.6 238.4 180.1 238.1 180.6 237.9 C181.1 237.7 181.6 237.5 182.0 237.3 C182.5 237.0 183.0 236.8 183.5 236.6 C183.9 236.4 184.1 236.2 184.6 236.2 C185.1 236.3 185.8 236.8 186.3 237.0 C186.8 237.2 187.2 237.3 187.7 237.4 C188.1 237.6 188.7 237.8 189.1 238.0 C189.5 238.2 189.6 238.4 190.1 238.5 C190.5 238.5 191.4 238.4 191.9 238.4 C192.4 238.4 192.8 238.6 193.3 238.6 C193.8 238.6 194.3 238.4 194.7 238.4 C195.2 238.4 195.7 238.6 196.1 238.6 C196.6 238.6 197.1 238.6 197.5 238.5 C198.0 238.5 198.5 238.5 198.9 238.5 C199.4 238.4 199.9 238.4 200.4 238.4 C200.8 238.4 201.3 238.5 201.8 238.5 C202.2 238.5 202.7 238.4 203.2 238.4 C203.6 238.4 204.1 238.5 204.6 238.5 C205.1 238.5 205.5 238.5 206.0 238.5 C206.5 238.5 206.9 238.5 207.4 238.5 C207.9 238.5 208.3 238.6 208.8 238.6 C209.3 238.6 209.7 238.6 210.2 238.6 C210.7 238.6 211.2 238.6 211.6 238.6 C212.1 238.6 212.6 238.5 213.0 238.4 C213.5 238.4 214.0 238.4 214.4 238.4 C214.9 238.4 215.4 238.5 215.9 238.6 C216.3 238.6 216.8 238.6 217.3 238.6 C217.7 238.6 218.2 238.4 218.7 238.4 C219.1 238.4 219.6 238.5 220.1 238.5 C220.5 238.5 221.0 238.5 221.5 238.5 C222.0 238.5 222.4 238.6 222.9 238.6 C223.4 238.5 223.8 238.5 224.3 238.5 C224.8 238.4 225.2 238.4 225.7 238.4 C226.2 238.4 226.7 238.5 227.1 238.5 C227.6 238.5 228.1 238.5 228.5 238.5 C229.0 238.5 229.5 238.6 229.9 238.6 C230.4 238.6 230.9 238.4 231.3 238.4 C231.8 238.4 232.3 238.6 232.8 238.6 C233.2 238.6 233.7 238.5 234.2 238.5 C234.6 238.5 235.1 238.4 235.6 238.4 C236.0 238.4 236.5 238.6 237.0 238.6 C237.5 238.6 237.9 238.5 238.4 238.4 C238.9 238.4 239.3 238.4 239.8 238.4 C240.3 238.4 240.7 238.5 241.2 238.5 C241.7 238.5 242.1 238.4 242.6 238.4 C243.1 238.4 243.6 238.6 244.0 238.6 C244.5 238.6 245.0 238.5 245.4 238.5 C245.9 238.5 246.4 238.6 246.8 238.6 C247.3 238.6 247.8 238.4 248.3 238.4 C248.7 238.4 249.2 238.5 249.7 238.5 C250.1 238.5 250.6 238.5 251.1 238.5 C251.5 238.5 252.0 238.4 252.5 238.4 C252.9 238.4 253.4 238.4 253.9 238.4 C254.4 238.4 254.8 238.4 255.3 238.4 C255.8 238.4 256.2 238.5 256.7 238.5 C257.2 238.5 257.6 238.5 258.1 238.5 C258.6 238.5 259.1 238.4 259.5 238.4 C260.0 238.4 260.5 238.5 260.9 238.5 C261.4 238.5 261.9 238.5 262.3 238.5 C262.8 238.5 263.3 238.5 263.7 238.5 C264.2 238.5 264.7 238.6 265.2 238.6 C265.6 238.6 266.1 238.5 266.6 238.5 C267.0 238.5 267.5 238.4 268.0 238.4 C268.4 238.4 268.9 238.4 269.4 238.4 C269.9 238.4 270.3 238.4 270.8 238.5 C271.3 238.5 271.7 238.5 272.2 238.5 C272.7 238.5 273.1 238.5 273.6 238.5 C274.1 238.5 274.5 238.6 275.0 238.6 C275.5 238.6 276.0 238.6 276.4 238.5 C276.9 238.5 277.4 238.4 277.8 238.4 C278.3 238.4 278.8 238.4 279.2 238.4 C279.7 238.4 280.2 238.5 280.7 238.5 C281.1 238.5 281.6 238.4 282.1 238.4 C282.5 238.4 283.0 238.4 283.5 238.4 C283.9 238.4 284.4 238.4 284.9 238.4 C285.3 238.4 285.8 238.4 286.3 238.4 C286.8 238.4 287.2 238.4 287.7 238.4 C288.2 238.4 288.6 238.5 289.1 238.5 C289.6 238.5 290.0 238.4 290.5 238.4 C291.0 238.4 291.5 238.5 291.9 238.5 C292.4 238.5 292.9 238.5 293.3 238.5 C293.8 238.5 294.3 238.4 294.7 238.4 C295.2 238.4 295.7 238.4 296.1 238.4 C296.6 238.5 297.1 238.5 297.6 238.5 C298.0 238.5 298.5 238.4 299.0 238.4 C299.4 238.4 299.9 238.4 300.4 238.4 C300.8 238.5 301.3 238.4 301.8 238.5 C302.3 238.5 302.7 238.6 303.2 238.6 C303.7 238.6 304.1 238.5 304.6 238.5 C305.1 238.5 305.5 238.5 306.0 238.5 C306.5 238.5 306.9 238.4 307.4 238.4 C307.9 238.4 308.4 238.5 308.8 238.5 C309.3 238.5 309.8 238.4 310.2 238.4 C310.7 238.4 311.2 238.4 311.6 238.4 C312.1 238.4 312.6 238.4 313.1 238.4 C313.5 238.4 314.0 238.5 314.5 238.5 C314.9 238.5 315.4 238.5 315.9 238.4 C316.3 238.4 316.8 238.4 317.3 238.4 C317.7 238.4 318.2 238.4 318.7 238.4 C319.2 238.4 319.6 238.5 320.1 238.5 C320.6 238.5 321.0 238.4 321.5 238.4 C322.0 238.4 322.4 238.4 322.9 238.4 C323.4 238.4 323.9 238.4 324.3 238.4 C324.8 238.4 325.3 238.4 325.7 238.4 C326.2 238.4 326.7 238.4 327.1 238.4 C327.6 238.4 328.1 238.5 328.5 238.5 C329.0 238.5 329.5 238.5 330.0 238.5 C330.4 238.5 330.9 238.6 331.4 238.6 C331.8 238.5 332.3 238.4 332.8 238.4 C333.2 238.4 333.7 238.4 334.2 238.4 C334.7 238.4 335.1 238.5 335.6 238.5 C336.1 238.5 336.5 238.4 337.0 238.4 C337.5 238.4 337.9 238.4 338.4 238.4 C338.9 238.4 339.3 238.4 339.8 238.4 C340.3 238.4 340.8 238.6 341.2 238.6 C341.7 238.6 342.2 238.4 342.6 238.4 C343.1 238.4 343.6 238.5 344.0 238.5 C344.5 238.5 345.0 238.4 345.5 238.4 C345.9 238.4 346.4 238.5 346.9 238.5 C347.3 238.5 347.8 238.5 348.3 238.4 C348.7 238.4 349.2 238.4 349.7 238.4 C350.1 238.4 350.6 238.4 351.1 238.4 C351.6 238.4 352.0 238.4 352.5 238.4 C353.0 238.4 353.4 238.6 353.9 238.6 C354.4 238.6 354.8 238.6 355.3 238.6 C355.8 238.5 356.3 238.5 356.7 238.5 C357.2 238.5 357.7 238.4 358.1 238.4 C358.6 238.4 359.1 238.5 359.5 238.5 C360.0 238.5 360.5 238.4 360.9 238.4 C361.4 238.4 361.9 238.4 362.4 238.4 C362.8 238.5 363.3 238.6 363.8 238.6 C364.2 238.6 364.7 238.5 365.2 238.5 C365.6 238.5 366.1 238.5 366.6 238.5 C367.0 238.6 367.5 238.6 368.0 238.6 C368.5 238.6 368.9 238.6 369.4 238.6 C369.9 238.5 370.3 238.5 370.8 238.5 C371.3 238.5 371.7 238.5 372.2 238.5 C372.7 238.5 373.2 238.5 373.6 238.5 C374.1 238.5 374.6 238.6 375.0 238.6 C375.5 238.6 376.0 238.5 376.4 238.5 C376.9 238.5 377.4 238.5 377.9 238.5 C378.3 238.5 378.8 238.5 379.3 238.4 C379.7 238.4 380.2 238.4 380.7 238.5 C381.1 238.5 381.6 238.5 382.1 238.5 C382.5 238.5 383.0 238.4 383.5 238.4 C384.0 238.4 384.4 238.6 384.9 238.6 C385.4 238.6 385.8 238.5 386.3 238.5 C386.8 238.5 387.2 238.5 387.7 238.5 C388.2 238.5 388.6 238.5 389.1 238.5 C389.6 238.5 390.1 238.6 390.5 238.6 C391.0 238.5 391.5 238.4 391.9 238.4 C392.4 238.4 392.9 238.5 393.3 238.5 C393.8 238.5 394.3 238.6 394.8 238.6 C395.2 238.6 395.7 238.4 396.2 238.4 C396.6 238.4 397.1 238.6 397.6 238.6 C398.0 238.6 398.5 238.5 399.0 238.5 C399.4 238.5 399.9 238.5 400.4 238.5 C400.9 238.5 401.3 238.5 401.8 238.4 C402.3 238.4 402.7 238.4 403.2 238.4 C403.7 238.4 404.1 238.4 404.6 238.4 C405.1 238.4 405.6 238.5 406.0 238.5 C406.5 238.5 407.0 238.4 407.4 238.4 C407.9 238.4 408.4 238.4 408.8 238.4 C409.3 238.5 409.8 238.5 410.2 238.5 C410.7 238.5 411.2 238.6 411.7 238.6 C412.1 238.5 412.6 238.5 413.1 238.4 C413.5 238.4 414.0 238.5 414.5 238.5 C414.9 238.4 415.4 238.4 415.9 238.4 C416.4 238.4 416.8 238.4 417.3 238.4 C417.8 238.4 418.2 238.4 418.7 238.4 C419.2 238.5 419.6 238.5 420.1 238.5 C420.6 238.5 421.0 238.4 421.5 238.4 C422.0 238.4 422.5 238.6 422.9 238.6 C423.4 238.6 423.9 238.6 424.3 238.6 C424.8 238.5 425.3 238.5 425.7 238.5 C426.2 238.4 426.7 238.4 427.2 238.4 C427.6 238.5 428.1 238.5 428.6 238.5 C429.0 238.5 429.5 238.5 430.0 238.4 C430.4 238.4 430.9 238.4 431.4 238.4 C431.8 238.4 432.3 238.5 432.8 238.5 C433.3 238.5 433.7 238.5 434.2 238.5 C434.7 238.5 435.1 238.5 435.6 238.5 C436.1 238.5 436.5 238.5 437.0 238.5 C437.5 238.5 438.0 238.4 438.4 238.4 C438.9 238.4 439.4 238.5 439.8 238.5 C440.3 238.5 440.8 238.4 441.2 238.4 C441.7 238.4 442.2 238.4 442.6 238.4 C443.1 238.4 443.6 238.4 444.1 238.4 C444.5 238.5 445.0 238.5 445.5 238.5 C445.9 238.5 446.4 238.4 446.9 238.4 C447.3 238.4 447.8 238.4 448.3 238.5 C448.8 238.5 449.2 238.5 449.7 238.5 C450.2 238.5 450.6 238.5 451.1 238.5 C451.6 238.5 452.0 238.4 452.5 238.3 C453.0 238.3 453.4 238.4 453.9 238.5 C454.4 238.5 454.9 238.5 455.3 238.5 C455.8 238.5 456.3 238.5 456.7 238.5 C457.2 238.5 457.7 238.5 458.1 238.5 C458.6 238.5 459.1 238.4 459.6 238.4 C460.0 238.4 460.5 238.5 461.0 238.5 C461.4 238.5 461.9 238.5 462.4 238.5 C462.8 238.5 463.3 238.4 463.8 238.4 C464.2 238.4 464.7 238.4 465.2 238.4 C465.7 238.4 466.1 238.6 466.6 238.6 C467.1 238.6 467.5 238.5 468.0 238.5 C468.5 238.5 468.9 238.5 469.4 238.5 C469.9 238.5 470.4 238.4 470.8 238.4 C471.3 238.4 471.8 238.4 472.2 238.4 C472.7 238.4 473.2 238.5 473.6 238.5 C474.1 238.5 474.6 238.5 475.0 238.5 C475.5 238.5 476.0 238.5 476.5 238.5 C476.9 238.5 477.4 238.4 477.9 238.3 C478.3 238.3 478.8 238.5 479.3 238.5 C479.7 238.5 480.2 238.4 480.7 238.4 C481.2 238.4 481.6 238.5 482.1 238.5 C482.6 238.5 483.0 238.4 483.5 238.4 C484.0 238.4 484.4 238.4 484.9 238.4 C485.4 238.4 485.8 238.4 486.3 238.4 C486.8 238.4 487.3 238.5 487.7 238.5 C488.2 238.5 488.7 238.4 489.1 238.4 C489.6 238.4 490.1 238.5 490.5 238.5 C491.0 238.5 491.5 238.5 492.0 238.4 C492.4 238.4 492.9 238.5 493.4 238.5 C493.8 238.5 494.3 238.5 494.8 238.5 C495.2 238.5 495.7 238.5 496.2 238.4 C496.6 238.4 497.1 238.5 497.6 238.5 C498.1 238.5 498.5 238.5 499.0 238.5 C499.5 238.5 499.9 238.4 500.4 238.4 C500.9 238.4 501.3 238.4 501.8 238.4 C502.3 238.5 502.8 238.6 503.2 238.6 C503.7 238.6 504.2 238.5 504.6 238.5 C505.1 238.5 505.6 238.5 506.0 238.5 C506.5 238.4 507.0 238.4 507.4 238.4 C507.9 238.4 508.4 238.4 508.9 238.4 C509.3 238.4 509.8 238.4 510.3 238.4 C510.7 238.5 511.2 238.6 511.7 238.6 C512.1 238.6 512.6 238.4 513.1 238.4 C513.6 238.4 514.0 238.5 514.5 238.5 C515.0 238.5 515.4 238.4 515.9 238.4 C516.4 238.4 516.8 238.4 517.3 238.4 C517.8 238.4 518.2 238.4 518.7 238.4 C519.2 238.4 519.7 238.5 520.1 238.5 C520.6 238.4 521.1 238.4 521.5 238.4 C522.0 238.4 522.5 238.5 522.9 238.5 C523.4 238.5 523.9 238.5 524.4 238.5 C524.8 238.5 525.3 238.4 525.8 238.4 C526.2 238.4 526.7 238.5 527.2 238.5 C527.6 238.5 528.1 238.5 528.6 238.5 C529.0 238.5 529.5 238.4 530.0 238.4 C530.5 238.4 530.9 238.6 531.4 238.6 C531.9 238.6 532.3 238.4 532.8 238.4 C533.3 238.4 533.7 238.4 534.2 238.4 C534.7 238.4 535.2 238.5 535.6 238.5 C536.1 238.5 536.6 238.5 537.0 238.5 C537.5 238.5 538.0 238.4 538.4 238.4 C538.9 238.4 539.4 238.4 539.8 238.4 C540.3 238.4 540.8 238.5 541.3 238.5 C541.7 238.5 542.2 238.5 542.7 238.5 C543.1 238.4 543.6 238.4 544.1 238.4 C544.5 238.4 545.0 238.4 545.5 238.5 C546.0 238.5 546.4 238.5 546.9 238.5 C547.4 238.5 547.8 238.5 548.3 238.5 C548.8 238.5 549.2 238.5 549.7 238.4 C550.2 238.4 550.6 238.4 551.1 238.4 C551.6 238.4 552.1 238.5 552.5 238.5 C553.0 238.5 553.5 238.5 553.9 238.5 C554.4 238.5 554.9 238.4 555.3 238.4 C555.8 238.4 556.3 238.4 556.8 238.4 C557.2 238.4 557.7 238.4 558.2 238.4 C558.6 238.4 559.0 238.4 559.4 238.4 C559.9 237.5 560.4 234.9 561.0 232.8 C561.5 230.7 562.3 227.6 562.8 225.9 C563.3 224.1 563.4 223.8 563.8 222.2 C564.2 220.7 564.9 217.7 565.3 216.6 C565.8 215.4 566.3 215.5 566.6 215.1 C567.0 214.8 567.0 214.4 567.5 214.4 C567.9 214.6 569.0 215.8 569.6 216.6 C570.1 217.3 570.3 218.0 570.8 219.0 C571.3 220.1 572.2 222.0 572.5 222.6 L572.5 244.5 L67.9 244.5 Z" fill="url(#g631_170_1)" stroke="none"/><path d="M67.94 235.42 C68.2 235.4 68.9 235.5 69.4 235.5 C69.8 235.6 70.3 235.6 70.8 235.6 C71.2 235.6 71.7 235.5 72.2 235.5 C72.6 235.5 73.1 235.6 73.6 235.6 C74.0 235.6 74.5 235.6 75.0 235.6 C75.5 235.6 75.9 235.5 76.4 235.5 C76.9 235.4 77.3 235.3 77.8 235.2 C78.3 235.2 78.7 235.3 79.2 235.3 C79.7 235.3 80.2 235.3 80.6 235.3 C81.1 235.3 81.6 235.5 82.0 235.6 C82.5 235.6 83.0 235.4 83.4 235.4 C83.9 235.4 84.4 235.5 84.8 235.5 C85.3 235.6 85.8 235.6 86.3 235.6 C86.7 235.6 87.2 235.6 87.7 235.6 C88.1 235.6 88.6 235.6 89.1 235.6 C89.5 235.5 90.0 235.3 90.5 235.2 C91.0 235.2 91.4 235.3 91.9 235.3 C92.4 235.3 92.8 235.3 93.3 235.3 C93.8 235.3 94.2 235.3 94.7 235.3 C95.2 235.3 95.6 235.5 96.1 235.6 C96.7 235.6 97.5 235.5 97.9 235.4 C98.4 235.4 98.5 235.4 98.9 235.2 C99.3 235.1 99.9 234.9 100.3 234.7 C100.8 234.5 101.3 234.4 101.8 234.3 C102.2 234.1 102.8 233.9 103.2 233.8 C103.5 233.8 103.6 233.8 103.9 233.8 C104.1 233.7 104.2 233.5 104.6 233.5 C104.9 233.5 105.5 233.8 106.0 233.8 C106.4 233.7 107.0 233.4 107.4 233.4 C107.7 233.3 107.9 233.3 108.1 233.3 C108.3 233.4 108.4 233.4 108.8 233.6 C109.1 233.8 109.7 234.1 110.2 234.4 C110.7 234.6 111.3 235.0 111.6 235.2 C112.0 235.4 112.1 235.4 112.3 235.4 C112.6 235.4 112.7 235.4 113.0 235.4 C113.4 235.5 114.0 235.6 114.4 235.6 C114.9 235.6 115.4 235.3 115.8 235.2 C116.3 235.2 116.8 235.2 117.2 235.2 C117.7 235.3 118.2 235.3 118.7 235.4 C119.1 235.4 119.6 235.5 120.1 235.5 C120.5 235.5 121.0 235.2 121.5 235.2 C121.9 235.2 122.4 235.4 122.9 235.4 C123.4 235.4 123.8 235.2 124.3 235.2 C124.8 235.2 125.2 235.2 125.7 235.2 C126.2 235.3 126.6 235.4 127.1 235.4 C127.6 235.4 128.0 235.4 128.5 235.4 C129.0 235.4 129.5 235.3 129.9 235.3 C130.4 235.3 130.9 235.4 131.3 235.4 C131.8 235.4 132.3 235.5 132.7 235.5 C133.2 235.5 133.7 235.5 134.2 235.5 C134.6 235.4 135.1 235.2 135.6 235.2 C136.0 235.2 136.5 235.5 137.0 235.6 C137.4 235.6 137.9 235.6 138.4 235.6 C138.8 235.5 139.3 235.3 139.8 235.3 C140.3 235.3 140.7 235.5 141.2 235.5 C141.7 235.5 142.1 235.4 142.6 235.3 C143.1 235.3 143.5 235.4 144.0 235.4 C144.5 235.4 145.0 235.4 145.4 235.4 C145.9 235.4 146.4 235.1 146.8 235.1 C147.3 235.1 147.8 235.4 148.2 235.5 C148.7 235.5 149.2 235.4 149.6 235.4 C150.1 235.4 150.6 235.5 151.1 235.5 C151.5 235.5 152.0 235.3 152.5 235.3 C152.9 235.3 153.4 235.4 153.9 235.4 C154.3 235.4 154.8 235.4 155.3 235.4 C155.7 235.4 156.2 235.2 156.7 235.2 C157.2 235.2 157.6 235.4 158.1 235.4 C158.6 235.4 159.0 235.3 159.5 235.3 C160.0 235.2 160.4 235.1 160.9 235.1 C161.4 235.2 161.9 235.4 162.3 235.5 C162.8 235.5 163.3 235.5 163.7 235.5 C164.2 235.5 164.7 235.5 165.1 235.4 C165.6 235.4 166.1 235.2 166.6 235.2 C167.0 235.2 167.5 235.2 168.0 235.3 C168.4 235.3 168.9 235.4 169.4 235.4 C169.8 235.4 170.3 235.4 170.8 235.4 C171.2 235.4 171.7 235.4 172.2 235.4 C172.7 235.4 173.1 235.3 173.6 235.3 C174.1 235.3 174.5 235.5 175.0 235.5 C175.5 235.5 175.9 235.2 176.4 235.2 C177.0 235.2 177.7 235.3 178.2 235.3 C178.8 229.1 179.3 213.6 179.7 198.1 C180.1 182.7 180.4 159.5 180.7 142.6 C181.0 125.6 181.1 106.0 181.4 96.5 C181.6 87.0 181.8 89.1 182.0 85.6 C182.3 82.0 182.5 76.4 182.7 75.1 C183.0 75.1 183.1 76.3 183.5 77.4 C183.8 78.5 184.1 77.4 184.6 81.6 C185.1 86.3 185.8 94.1 186.4 105.8 C187.0 117.5 187.6 136.5 188.1 151.9 C188.6 167.3 188.9 184.2 189.4 198.1 C189.9 212.0 190.5 229.1 190.9 235.3 C191.3 235.3 191.5 235.2 191.9 235.2 C192.3 235.1 192.8 235.1 193.3 235.1 C193.8 235.1 194.3 235.4 194.7 235.5 C195.2 235.5 195.7 235.4 196.1 235.4 C196.6 235.3 197.1 235.1 197.5 235.0 C198.0 235.0 198.5 235.1 198.9 235.1 C199.4 235.2 199.9 235.3 200.4 235.3 C200.8 235.3 201.3 235.1 201.8 235.0 C202.2 235.0 202.7 235.2 203.2 235.2 C203.6 235.2 204.1 235.1 204.6 235.1 C205.1 235.1 205.5 235.3 206.0 235.3 C206.5 235.4 206.9 235.4 207.4 235.4 C207.9 235.4 208.3 235.3 208.8 235.3 C209.3 235.3 209.7 235.4 210.2 235.4 C210.7 235.4 211.2 235.3 211.6 235.3 C212.1 235.2 212.6 235.0 213.0 235.0 C213.5 235.0 214.0 235.2 214.4 235.3 C214.9 235.4 215.4 235.4 215.9 235.4 C216.3 235.4 216.8 235.4 217.3 235.4 C217.7 235.4 218.1 235.4 218.7 235.3 C219.2 235.3 220.0 235.3 220.5 235.2 C221.0 235.1 221.1 234.9 221.5 234.8 C221.9 234.8 222.4 234.8 222.9 234.7 C223.4 234.7 223.8 234.5 224.3 234.4 C224.8 234.4 225.2 234.4 225.7 234.2 C226.2 234.1 226.6 233.7 227.1 233.5 C227.7 233.4 228.5 233.4 229.0 233.3 C229.4 233.3 229.5 233.3 229.9 233.2 C230.3 233.2 230.9 233.2 231.3 233.2 C231.8 233.1 232.3 233.1 232.8 233.1 C233.2 233.0 233.7 233.0 234.2 232.9 C234.6 232.8 235.2 232.8 235.6 232.7 C236.0 232.6 236.1 232.4 236.6 232.4 C237.0 232.5 237.9 233.1 238.4 233.4 C238.9 233.8 239.3 234.2 239.8 234.5 C240.3 234.8 241.2 235.2 241.6 235.4 C242.1 235.6 242.2 235.6 242.6 235.6 C243.0 235.6 243.6 235.4 244.0 235.4 C244.5 235.4 245.0 235.4 245.4 235.4 C245.9 235.4 246.4 235.1 246.8 235.1 C247.3 235.1 247.8 235.4 248.3 235.4 C248.7 235.4 249.2 235.3 249.7 235.2 C250.1 235.2 250.6 235.1 251.1 235.1 C251.5 235.1 252.0 235.2 252.5 235.2 C252.9 235.2 253.4 234.9 253.9 234.9 C254.4 234.9 254.8 235.1 255.3 235.1 C255.8 235.2 256.2 235.2 256.7 235.2 C257.2 235.2 257.6 235.1 258.1 235.1 C258.6 235.1 259.1 235.2 259.5 235.2 C260.0 235.2 260.5 235.0 260.9 235.0 C261.4 235.0 261.9 235.1 262.3 235.1 C262.8 235.0 263.3 234.8 263.7 234.7 C264.2 234.7 264.7 234.7 265.2 234.7 C265.6 234.7 266.1 234.8 266.6 234.8 C267.0 234.9 267.5 235.0 268.0 235.0 C268.4 235.0 268.8 234.9 269.4 234.9 C269.9 234.8 270.7 234.7 271.2 234.7 C271.7 234.7 271.8 234.8 272.2 234.8 C272.6 234.8 273.1 234.8 273.6 234.7 C274.1 234.7 275.0 234.5 275.4 234.5 C275.9 234.5 276.0 234.8 276.4 234.8 C276.8 234.9 277.4 234.8 277.8 234.9 C278.3 235.0 278.8 235.4 279.2 235.5 C279.7 235.7 280.0 235.7 280.5 235.7 C281.0 235.4 281.6 234.8 282.1 234.3 C282.6 233.7 283.0 233.0 283.5 232.4 C283.9 231.9 284.4 231.6 284.9 231.2 C285.4 230.7 286.0 229.9 286.4 229.6 C286.9 229.4 287.2 229.4 287.7 229.4 C288.1 229.4 288.6 229.6 289.1 229.6 C289.6 229.6 290.0 229.4 290.5 229.4 C291.0 229.4 291.5 229.5 291.9 229.5 C292.4 229.5 292.9 229.5 293.3 229.5 C293.8 229.5 294.3 229.5 294.7 229.5 C295.2 229.5 295.7 229.6 296.1 229.6 C296.6 229.7 297.1 229.8 297.6 229.8 C298.0 229.8 298.4 229.8 299.0 229.7 C299.5 229.7 300.3 229.6 300.8 229.6 C301.3 229.6 301.4 229.5 301.8 229.5 C302.2 229.5 302.7 229.6 303.2 229.6 C303.7 229.6 304.1 229.6 304.6 229.7 C305.1 229.7 305.5 230.0 306.0 230.0 C306.5 230.0 306.9 230.0 307.4 230.0 C307.9 230.0 308.4 230.0 308.8 230.0 C309.3 230.1 309.8 230.2 310.2 230.2 C310.7 230.2 311.2 230.2 311.6 230.2 C312.1 230.2 312.6 230.4 313.1 230.4 C313.5 230.5 313.8 230.5 314.3 230.5 C314.8 230.4 315.3 229.8 315.9 229.4 C316.4 229.0 317.2 228.4 317.7 228.2 C318.2 228.1 318.3 228.1 318.7 228.1 C319.1 228.1 319.6 228.2 320.1 228.2 C320.6 228.1 321.0 227.9 321.5 227.8 C322.0 227.7 322.4 227.7 322.9 227.7 C323.4 227.7 323.8 228.0 324.3 228.0 C324.9 228.0 325.7 227.8 326.2 227.7 C326.6 227.7 326.7 227.6 327.1 227.6 C327.5 227.6 328.1 227.6 328.5 227.7 C329.0 227.7 329.5 227.8 330.0 227.9 C330.4 228.0 330.9 228.3 331.4 228.3 C331.8 228.3 332.3 228.0 332.8 228.0 C333.2 228.0 333.7 228.4 334.2 228.4 C334.7 228.4 335.1 228.2 335.6 228.1 C336.1 228.1 336.5 228.3 337.0 228.4 C337.5 228.5 337.9 228.7 338.4 228.8 C338.9 228.8 339.3 228.8 339.8 228.8 C340.3 228.8 340.8 228.7 341.2 228.7 C341.7 228.7 342.2 228.8 342.6 228.8 C343.1 228.8 343.6 228.8 344.0 228.8 C344.5 228.8 344.9 228.8 345.5 228.8 C346.0 228.9 346.8 229.1 347.3 229.1 C347.8 229.1 347.9 229.1 348.3 229.1 C348.7 229.1 349.2 229.1 349.7 229.0 C350.1 228.8 350.6 228.4 351.1 228.3 C351.6 228.3 352.0 228.5 352.5 228.5 C353.0 228.4 353.4 228.0 353.9 227.9 C354.4 227.7 355.3 227.9 355.7 227.7 C356.2 227.6 356.3 227.5 356.7 227.2 C357.1 226.8 357.6 226.2 358.1 225.8 C358.7 225.3 359.5 224.7 360.0 224.5 C360.4 224.5 360.5 224.6 360.9 224.7 C361.3 224.8 361.8 224.9 362.4 225.1 C362.9 225.3 363.7 225.6 364.2 225.9 C364.7 226.2 364.8 226.4 365.2 226.7 C365.6 227.0 366.0 227.3 366.6 227.8 C367.1 228.3 367.9 229.3 368.4 229.6 C368.9 229.6 369.0 229.6 369.4 229.6 C369.8 229.6 370.3 229.3 370.8 229.3 C371.3 229.3 371.7 229.3 372.2 229.3 C372.7 229.2 373.2 228.9 373.6 228.8 C374.1 228.8 374.5 228.8 375.0 228.7 C375.6 228.7 376.4 228.7 376.9 228.7 C377.3 228.7 377.5 228.7 377.9 228.7 C378.2 228.7 378.8 228.7 379.3 228.7 C379.7 228.7 380.2 228.9 380.7 228.9 C381.1 228.9 381.6 228.9 382.1 228.9 C382.5 228.9 383.0 228.7 383.5 228.6 C384.0 228.6 384.4 228.7 384.9 228.7 C385.4 228.7 385.8 228.5 386.3 228.5 C386.8 228.5 387.2 228.6 387.7 228.7 C388.2 228.7 388.6 228.9 389.1 228.9 C389.6 228.9 390.1 228.8 390.5 228.8 C391.0 228.7 391.5 228.6 391.9 228.6 C392.4 228.6 392.9 228.6 393.3 228.7 C393.8 228.8 394.3 228.9 394.8 228.9 C395.2 228.9 395.7 228.6 396.2 228.6 C396.6 228.6 397.1 228.6 397.6 228.6 C398.0 228.6 398.5 228.9 399.0 228.9 C399.4 228.9 399.9 228.7 400.4 228.7 C400.9 228.7 401.3 228.8 401.8 228.8 C402.3 228.8 402.7 228.6 403.2 228.6 C403.7 228.6 404.1 228.8 404.6 228.8 C405.1 228.9 405.6 228.9 406.0 228.9 C406.5 228.9 407.0 228.8 407.4 228.8 C407.9 228.7 408.4 228.5 408.8 228.5 C409.3 228.6 409.8 228.9 410.2 228.9 C410.7 228.9 411.2 228.9 411.7 228.9 C412.1 228.9 412.6 228.8 413.1 228.7 C413.5 228.6 414.0 228.6 414.5 228.6 C414.9 228.6 415.4 228.7 415.9 228.8 C416.4 228.8 416.8 228.8 417.3 228.8 C417.8 228.8 418.2 228.6 418.7 228.6 C419.2 228.6 419.6 228.6 420.1 228.7 C420.6 228.7 421.0 229.0 421.5 229.0 C422.0 229.0 422.5 228.6 422.9 228.6 C423.4 228.6 423.9 228.9 424.3 228.9 C424.8 228.9 425.3 228.9 425.7 228.9 C426.2 228.8 426.7 228.7 427.2 228.6 C427.6 228.6 428.1 228.8 428.6 228.8 C429.0 228.8 429.5 228.7 430.0 228.7 C430.4 228.7 430.9 229.0 431.4 229.0 C431.8 229.0 432.3 228.6 432.8 228.6 C433.3 228.6 433.7 228.9 434.2 229.0 C434.7 229.0 435.1 229.0 435.6 229.0 C436.1 229.0 436.5 228.8 437.0 228.8 C437.5 228.8 438.0 228.9 438.4 228.9 C438.9 228.9 439.4 228.9 439.8 228.8 C440.3 228.8 440.8 228.7 441.2 228.6 C441.7 228.6 442.2 228.7 442.6 228.7 C443.1 228.8 443.6 229.0 444.1 229.1 C444.5 229.1 445.0 229.0 445.5 228.9 C445.9 228.9 446.4 228.8 446.9 228.8 C447.3 228.8 447.8 228.9 448.3 228.9 C448.8 228.8 449.2 228.8 449.7 228.8 C450.2 228.8 450.6 228.8 451.1 228.9 C451.6 228.9 452.0 229.0 452.5 229.1 C453.0 229.1 453.4 229.0 453.9 229.0 C454.4 228.9 454.9 228.7 455.3 228.7 C455.8 228.7 456.3 228.9 456.7 228.9 C457.2 228.9 457.7 228.8 458.1 228.8 C458.6 228.7 459.1 228.7 459.6 228.7 C460.0 228.7 460.5 228.8 461.0 228.8 C461.4 228.8 461.9 228.8 462.4 228.8 C462.8 228.8 463.3 228.8 463.8 228.8 C464.2 228.9 464.7 229.0 465.2 229.0 C465.7 229.0 466.1 228.7 466.6 228.7 C467.1 228.7 467.5 228.9 468.0 228.9 C468.5 228.9 468.9 228.7 469.4 228.7 C469.9 228.7 470.4 229.0 470.8 229.0 C471.3 229.0 471.8 228.8 472.2 228.7 C472.7 228.7 473.2 228.8 473.6 228.8 C474.1 228.8 474.6 228.8 475.0 228.9 C475.5 228.9 476.0 228.9 476.5 229.0 C476.9 229.0 477.4 229.1 477.9 229.1 C478.3 229.1 478.8 228.8 479.3 228.8 C479.7 228.8 480.2 229.0 480.7 229.0 C481.2 229.0 481.6 228.9 482.1 228.9 C482.6 228.9 483.0 229.1 483.5 229.1 C484.0 229.1 484.4 229.1 484.9 229.1 C485.4 229.1 485.8 229.1 486.3 229.1 C486.8 229.1 487.3 228.8 487.7 228.8 C488.2 228.8 488.7 229.1 489.1 229.1 C489.6 229.1 490.1 228.8 490.5 228.8 C491.0 228.8 491.5 229.0 492.0 229.0 C492.4 229.0 492.9 228.9 493.4 228.9 C493.8 228.9 494.3 229.0 494.8 229.0 C495.2 229.0 495.7 228.9 496.2 228.9 C496.6 228.9 497.1 229.1 497.6 229.2 C498.1 229.2 498.5 229.1 499.0 229.0 C499.5 229.0 499.9 228.8 500.4 228.8 C500.9 228.8 501.3 229.1 501.8 229.1 C502.3 229.1 502.8 228.9 503.2 228.9 C503.7 228.9 504.2 229.0 504.6 229.1 C505.1 229.1 505.6 229.1 506.0 229.1 C506.5 229.1 507.0 229.2 507.4 229.2 C507.9 229.2 508.4 229.2 508.9 229.2 C509.3 229.2 509.8 228.9 510.3 228.8 C510.7 228.8 511.2 228.8 511.7 228.9 C512.1 228.9 512.6 228.9 513.1 228.9 C513.6 228.9 514.0 228.9 514.5 228.9 C515.0 228.9 515.4 228.8 515.9 228.8 C516.4 228.9 516.8 229.2 517.3 229.2 C517.8 229.2 518.2 229.0 518.7 229.0 C519.2 229.0 519.7 229.0 520.1 229.0 C520.6 229.0 521.1 229.0 521.5 229.0 C522.0 229.0 522.5 228.9 522.9 228.8 C523.4 228.8 523.9 228.9 524.4 228.9 C524.8 228.9 525.3 228.8 525.8 228.8 C526.2 228.9 526.7 229.2 527.2 229.2 C527.6 229.2 528.1 229.0 528.6 229.0 C529.0 229.0 529.5 229.0 530.0 229.0 C530.5 229.0 530.9 228.9 531.4 228.9 C531.9 229.0 532.3 229.0 532.8 229.0 C533.3 229.0 533.7 228.9 534.2 228.9 C534.7 228.9 535.2 229.2 535.6 229.2 C536.1 229.2 536.6 228.9 537.0 228.9 C537.5 228.9 538.0 229.1 538.4 229.1 C538.9 229.1 539.4 229.1 539.8 229.0 C540.3 229.0 540.8 228.9 541.3 228.9 C541.7 228.9 542.2 229.0 542.7 229.0 C543.1 229.0 543.6 229.1 544.1 229.2 C544.5 229.2 545.0 229.2 545.5 229.2 C546.0 229.2 546.4 229.2 546.9 229.2 C547.4 229.2 547.8 229.1 548.3 229.0 C548.8 229.0 549.2 228.9 549.7 228.9 C550.2 228.9 550.6 228.9 551.1 228.9 C551.6 229.0 552.1 229.1 552.5 229.2 C553.0 229.2 553.5 229.2 553.9 229.2 C554.4 229.1 554.9 229.0 555.3 229.0 C555.8 229.0 556.3 229.2 556.8 229.2 C557.2 229.2 557.7 229.2 558.2 229.2 C558.6 229.2 559.1 229.4 559.6 229.4 C560.0 229.4 560.5 229.3 560.9 229.1 C561.4 228.9 561.9 228.6 562.4 228.2 C562.9 227.8 563.3 227.4 563.8 227.0 C564.3 226.6 564.7 226.2 565.2 225.8 C565.7 225.5 566.2 225.1 566.6 224.8 C567.0 224.5 567.2 224.0 567.7 224.0 C568.2 224.0 568.9 224.6 569.4 224.8 C569.9 225.0 570.3 225.0 570.8 225.2 C571.4 225.4 572.2 226.0 572.5 226.1" fill="none" stroke="#73bf69" stroke-width="1.05" stroke-linejoin="round"/><path d="M67.94 238.50 C68.2 238.5 68.9 238.5 69.4 238.5 C69.8 238.5 70.3 238.4 70.8 238.4 C71.2 238.4 71.7 238.4 72.2 238.4 C72.6 238.4 73.1 238.4 73.6 238.4 C74.0 238.4 74.5 238.4 75.0 238.4 C75.5 238.4 75.9 238.4 76.4 238.4 C76.9 238.4 77.3 238.6 77.8 238.6 C78.3 238.6 78.7 238.5 79.2 238.5 C79.7 238.5 80.2 238.4 80.6 238.4 C81.1 238.4 81.6 238.5 82.0 238.5 C82.5 238.5 83.0 238.4 83.4 238.4 C83.9 238.4 84.4 238.6 84.8 238.6 C85.3 238.6 85.8 238.5 86.3 238.5 C86.7 238.5 87.2 238.6 87.7 238.6 C88.1 238.6 88.6 238.5 89.1 238.5 C89.5 238.5 90.0 238.5 90.5 238.5 C91.0 238.5 91.4 238.6 91.9 238.6 C92.4 238.6 92.8 238.6 93.3 238.6 C93.8 238.6 94.2 238.6 94.7 238.5 C95.2 238.5 95.6 238.4 96.1 238.4 C96.6 238.4 97.1 238.4 97.5 238.4 C98.0 238.5 98.5 238.6 98.9 238.6 C99.4 238.6 99.9 238.4 100.3 238.4 C100.8 238.4 101.3 238.6 101.8 238.6 C102.2 238.6 102.7 238.5 103.2 238.5 C103.6 238.5 104.1 238.6 104.6 238.6 C105.0 238.6 105.5 238.6 106.0 238.6 C106.4 238.6 106.9 238.4 107.4 238.4 C107.9 238.4 108.3 238.5 108.8 238.6 C109.3 238.6 109.7 238.6 110.2 238.6 C110.7 238.5 111.1 238.4 111.6 238.4 C112.1 238.4 112.6 238.4 113.0 238.4 C113.5 238.4 114.0 238.5 114.4 238.5 C114.9 238.5 115.4 238.4 115.8 238.4 C116.3 238.4 116.8 238.5 117.2 238.5 C117.7 238.5 118.2 238.5 118.7 238.5 C119.1 238.5 119.6 238.6 120.1 238.6 C120.5 238.6 121.0 238.4 121.5 238.4 C121.9 238.4 122.4 238.5 122.9 238.5 C123.4 238.4 123.8 238.4 124.3 238.4 C124.8 238.4 125.2 238.4 125.7 238.4 C126.2 238.4 126.6 238.5 127.1 238.5 C127.6 238.5 128.0 238.5 128.5 238.5 C129.0 238.5 129.5 238.6 129.9 238.6 C130.4 238.6 131.0 238.6 131.3 238.6 C131.7 238.6 131.9 238.6 132.1 238.5 C132.3 238.0 132.4 237.3 132.7 235.6 C133.1 233.8 133.8 230.1 134.3 228.2 C134.8 226.3 135.5 224.3 135.9 224.0 C136.3 224.0 136.7 225.9 137.0 226.6 C137.3 227.3 137.4 227.4 137.7 228.2 C137.9 229.0 138.0 229.6 138.4 231.4 C138.8 233.1 139.5 237.3 140.0 238.5 C140.4 238.6 140.8 238.6 141.2 238.6 C141.6 238.6 142.1 238.5 142.6 238.5 C143.1 238.5 143.5 238.5 144.0 238.5 C144.5 238.5 145.0 238.5 145.4 238.5 C145.9 238.5 146.4 238.4 146.8 238.4 C147.3 238.4 147.8 238.5 148.2 238.5 C148.7 238.5 149.2 238.5 149.6 238.5 C150.1 238.5 150.6 238.5 151.1 238.5 C151.5 238.5 152.0 238.4 152.5 238.4 C152.9 238.5 153.4 238.6 153.9 238.6 C154.3 238.6 154.8 238.4 155.3 238.4 C155.7 238.4 156.2 238.6 156.7 238.6 C157.2 238.6 157.6 238.5 158.1 238.4 C158.6 238.4 159.0 238.4 159.5 238.4 C160.0 238.4 160.4 238.6 160.9 238.6 C161.4 238.6 161.9 238.4 162.3 238.4 C162.8 238.4 163.3 238.5 163.7 238.5 C164.2 238.5 164.7 238.5 165.1 238.5 C165.6 238.5 166.1 238.6 166.6 238.6 C167.0 238.6 167.5 238.6 168.0 238.6 C168.4 238.6 168.9 238.6 169.4 238.6 C169.8 238.5 170.3 238.4 170.8 238.4 C171.2 238.4 171.7 238.6 172.2 238.6 C172.7 238.6 173.1 238.5 173.6 238.4 C174.1 238.4 174.5 238.4 175.0 238.4 C175.5 238.4 175.9 238.4 176.4 238.4 C176.9 238.4 177.4 238.5 177.8 238.5 C178.3 238.5 178.6 238.5 179.1 238.5 C179.6 238.4 180.1 238.1 180.6 237.9 C181.1 237.7 181.6 237.5 182.0 237.3 C182.5 237.0 183.0 236.8 183.5 236.6 C183.9 236.4 184.1 236.2 184.6 236.2 C185.1 236.3 185.8 236.8 186.3 237.0 C186.8 237.2 187.2 237.3 187.7 237.4 C188.1 237.6 188.7 237.8 189.1 238.0 C189.5 238.2 189.6 238.4 190.1 238.5 C190.5 238.5 191.4 238.4 191.9 238.4 C192.4 238.4 192.8 238.6 193.3 238.6 C193.8 238.6 194.3 238.4 194.7 238.4 C195.2 238.4 195.7 238.6 196.1 238.6 C196.6 238.6 197.1 238.6 197.5 238.5 C198.0 238.5 198.5 238.5 198.9 238.5 C199.4 238.4 199.9 238.4 200.4 238.4 C200.8 238.4 201.3 238.5 201.8 238.5 C202.2 238.5 202.7 238.4 203.2 238.4 C203.6 238.4 204.1 238.5 204.6 238.5 C205.1 238.5 205.5 238.5 206.0 238.5 C206.5 238.5 206.9 238.5 207.4 238.5 C207.9 238.5 208.3 238.6 208.8 238.6 C209.3 238.6 209.7 238.6 210.2 238.6 C210.7 238.6 211.2 238.6 211.6 238.6 C212.1 238.6 212.6 238.5 213.0 238.4 C213.5 238.4 214.0 238.4 214.4 238.4 C214.9 238.4 215.4 238.5 215.9 238.6 C216.3 238.6 216.8 238.6 217.3 238.6 C217.7 238.6 218.2 238.4 218.7 238.4 C219.1 238.4 219.6 238.5 220.1 238.5 C220.5 238.5 221.0 238.5 221.5 238.5 C222.0 238.5 222.4 238.6 222.9 238.6 C223.4 238.5 223.8 238.5 224.3 238.5 C224.8 238.4 225.2 238.4 225.7 238.4 C226.2 238.4 226.7 238.5 227.1 238.5 C227.6 238.5 228.1 238.5 228.5 238.5 C229.0 238.5 229.5 238.6 229.9 238.6 C230.4 238.6 230.9 238.4 231.3 238.4 C231.8 238.4 232.3 238.6 232.8 238.6 C233.2 238.6 233.7 238.5 234.2 238.5 C234.6 238.5 235.1 238.4 235.6 238.4 C236.0 238.4 236.5 238.6 237.0 238.6 C237.5 238.6 237.9 238.5 238.4 238.4 C238.9 238.4 239.3 238.4 239.8 238.4 C240.3 238.4 240.7 238.5 241.2 238.5 C241.7 238.5 242.1 238.4 242.6 238.4 C243.1 238.4 243.6 238.6 244.0 238.6 C244.5 238.6 245.0 238.5 245.4 238.5 C245.9 238.5 246.4 238.6 246.8 238.6 C247.3 238.6 247.8 238.4 248.3 238.4 C248.7 238.4 249.2 238.5 249.7 238.5 C250.1 238.5 250.6 238.5 251.1 238.5 C251.5 238.5 252.0 238.4 252.5 238.4 C252.9 238.4 253.4 238.4 253.9 238.4 C254.4 238.4 254.8 238.4 255.3 238.4 C255.8 238.4 256.2 238.5 256.7 238.5 C257.2 238.5 257.6 238.5 258.1 238.5 C258.6 238.5 259.1 238.4 259.5 238.4 C260.0 238.4 260.5 238.5 260.9 238.5 C261.4 238.5 261.9 238.5 262.3 238.5 C262.8 238.5 263.3 238.5 263.7 238.5 C264.2 238.5 264.7 238.6 265.2 238.6 C265.6 238.6 266.1 238.5 266.6 238.5 C267.0 238.5 267.5 238.4 268.0 238.4 C268.4 238.4 268.9 238.4 269.4 238.4 C269.9 238.4 270.3 238.4 270.8 238.5 C271.3 238.5 271.7 238.5 272.2 238.5 C272.7 238.5 273.1 238.5 273.6 238.5 C274.1 238.5 274.5 238.6 275.0 238.6 C275.5 238.6 276.0 238.6 276.4 238.5 C276.9 238.5 277.4 238.4 277.8 238.4 C278.3 238.4 278.8 238.4 279.2 238.4 C279.7 238.4 280.2 238.5 280.7 238.5 C281.1 238.5 281.6 238.4 282.1 238.4 C282.5 238.4 283.0 238.4 283.5 238.4 C283.9 238.4 284.4 238.4 284.9 238.4 C285.3 238.4 285.8 238.4 286.3 238.4 C286.8 238.4 287.2 238.4 287.7 238.4 C288.2 238.4 288.6 238.5 289.1 238.5 C289.6 238.5 290.0 238.4 290.5 238.4 C291.0 238.4 291.5 238.5 291.9 238.5 C292.4 238.5 292.9 238.5 293.3 238.5 C293.8 238.5 294.3 238.4 294.7 238.4 C295.2 238.4 295.7 238.4 296.1 238.4 C296.6 238.5 297.1 238.5 297.6 238.5 C298.0 238.5 298.5 238.4 299.0 238.4 C299.4 238.4 299.9 238.4 300.4 238.4 C300.8 238.5 301.3 238.4 301.8 238.5 C302.3 238.5 302.7 238.6 303.2 238.6 C303.7 238.6 304.1 238.5 304.6 238.5 C305.1 238.5 305.5 238.5 306.0 238.5 C306.5 238.5 306.9 238.4 307.4 238.4 C307.9 238.4 308.4 238.5 308.8 238.5 C309.3 238.5 309.8 238.4 310.2 238.4 C310.7 238.4 311.2 238.4 311.6 238.4 C312.1 238.4 312.6 238.4 313.1 238.4 C313.5 238.4 314.0 238.5 314.5 238.5 C314.9 238.5 315.4 238.5 315.9 238.4 C316.3 238.4 316.8 238.4 317.3 238.4 C317.7 238.4 318.2 238.4 318.7 238.4 C319.2 238.4 319.6 238.5 320.1 238.5 C320.6 238.5 321.0 238.4 321.5 238.4 C322.0 238.4 322.4 238.4 322.9 238.4 C323.4 238.4 323.9 238.4 324.3 238.4 C324.8 238.4 325.3 238.4 325.7 238.4 C326.2 238.4 326.7 238.4 327.1 238.4 C327.6 238.4 328.1 238.5 328.5 238.5 C329.0 238.5 329.5 238.5 330.0 238.5 C330.4 238.5 330.9 238.6 331.4 238.6 C331.8 238.5 332.3 238.4 332.8 238.4 C333.2 238.4 333.7 238.4 334.2 238.4 C334.7 238.4 335.1 238.5 335.6 238.5 C336.1 238.5 336.5 238.4 337.0 238.4 C337.5 238.4 337.9 238.4 338.4 238.4 C338.9 238.4 339.3 238.4 339.8 238.4 C340.3 238.4 340.8 238.6 341.2 238.6 C341.7 238.6 342.2 238.4 342.6 238.4 C343.1 238.4 343.6 238.5 344.0 238.5 C344.5 238.5 345.0 238.4 345.5 238.4 C345.9 238.4 346.4 238.5 346.9 238.5 C347.3 238.5 347.8 238.5 348.3 238.4 C348.7 238.4 349.2 238.4 349.7 238.4 C350.1 238.4 350.6 238.4 351.1 238.4 C351.6 238.4 352.0 238.4 352.5 238.4 C353.0 238.4 353.4 238.6 353.9 238.6 C354.4 238.6 354.8 238.6 355.3 238.6 C355.8 238.5 356.3 238.5 356.7 238.5 C357.2 238.5 357.7 238.4 358.1 238.4 C358.6 238.4 359.1 238.5 359.5 238.5 C360.0 238.5 360.5 238.4 360.9 238.4 C361.4 238.4 361.9 238.4 362.4 238.4 C362.8 238.5 363.3 238.6 363.8 238.6 C364.2 238.6 364.7 238.5 365.2 238.5 C365.6 238.5 366.1 238.5 366.6 238.5 C367.0 238.6 367.5 238.6 368.0 238.6 C368.5 238.6 368.9 238.6 369.4 238.6 C369.9 238.5 370.3 238.5 370.8 238.5 C371.3 238.5 371.7 238.5 372.2 238.5 C372.7 238.5 373.2 238.5 373.6 238.5 C374.1 238.5 374.6 238.6 375.0 238.6 C375.5 238.6 376.0 238.5 376.4 238.5 C376.9 238.5 377.4 238.5 377.9 238.5 C378.3 238.5 378.8 238.5 379.3 238.4 C379.7 238.4 380.2 238.4 380.7 238.5 C381.1 238.5 381.6 238.5 382.1 238.5 C382.5 238.5 383.0 238.4 383.5 238.4 C384.0 238.4 384.4 238.6 384.9 238.6 C385.4 238.6 385.8 238.5 386.3 238.5 C386.8 238.5 387.2 238.5 387.7 238.5 C388.2 238.5 388.6 238.5 389.1 238.5 C389.6 238.5 390.1 238.6 390.5 238.6 C391.0 238.5 391.5 238.4 391.9 238.4 C392.4 238.4 392.9 238.5 393.3 238.5 C393.8 238.5 394.3 238.6 394.8 238.6 C395.2 238.6 395.7 238.4 396.2 238.4 C396.6 238.4 397.1 238.6 397.6 238.6 C398.0 238.6 398.5 238.5 399.0 238.5 C399.4 238.5 399.9 238.5 400.4 238.5 C400.9 238.5 401.3 238.5 401.8 238.4 C402.3 238.4 402.7 238.4 403.2 238.4 C403.7 238.4 404.1 238.4 404.6 238.4 C405.1 238.4 405.6 238.5 406.0 238.5 C406.5 238.5 407.0 238.4 407.4 238.4 C407.9 238.4 408.4 238.4 408.8 238.4 C409.3 238.5 409.8 238.5 410.2 238.5 C410.7 238.5 411.2 238.6 411.7 238.6 C412.1 238.5 412.6 238.5 413.1 238.4 C413.5 238.4 414.0 238.5 414.5 238.5 C414.9 238.4 415.4 238.4 415.9 238.4 C416.4 238.4 416.8 238.4 417.3 238.4 C417.8 238.4 418.2 238.4 418.7 238.4 C419.2 238.5 419.6 238.5 420.1 238.5 C420.6 238.5 421.0 238.4 421.5 238.4 C422.0 238.4 422.5 238.6 422.9 238.6 C423.4 238.6 423.9 238.6 424.3 238.6 C424.8 238.5 425.3 238.5 425.7 238.5 C426.2 238.4 426.7 238.4 427.2 238.4 C427.6 238.5 428.1 238.5 428.6 238.5 C429.0 238.5 429.5 238.5 430.0 238.4 C430.4 238.4 430.9 238.4 431.4 238.4 C431.8 238.4 432.3 238.5 432.8 238.5 C433.3 238.5 433.7 238.5 434.2 238.5 C434.7 238.5 435.1 238.5 435.6 238.5 C436.1 238.5 436.5 238.5 437.0 238.5 C437.5 238.5 438.0 238.4 438.4 238.4 C438.9 238.4 439.4 238.5 439.8 238.5 C440.3 238.5 440.8 238.4 441.2 238.4 C441.7 238.4 442.2 238.4 442.6 238.4 C443.1 238.4 443.6 238.4 444.1 238.4 C444.5 238.5 445.0 238.5 445.5 238.5 C445.9 238.5 446.4 238.4 446.9 238.4 C447.3 238.4 447.8 238.4 448.3 238.5 C448.8 238.5 449.2 238.5 449.7 238.5 C450.2 238.5 450.6 238.5 451.1 238.5 C451.6 238.5 452.0 238.4 452.5 238.3 C453.0 238.3 453.4 238.4 453.9 238.5 C454.4 238.5 454.9 238.5 455.3 238.5 C455.8 238.5 456.3 238.5 456.7 238.5 C457.2 238.5 457.7 238.5 458.1 238.5 C458.6 238.5 459.1 238.4 459.6 238.4 C460.0 238.4 460.5 238.5 461.0 238.5 C461.4 238.5 461.9 238.5 462.4 238.5 C462.8 238.5 463.3 238.4 463.8 238.4 C464.2 238.4 464.7 238.4 465.2 238.4 C465.7 238.4 466.1 238.6 466.6 238.6 C467.1 238.6 467.5 238.5 468.0 238.5 C468.5 238.5 468.9 238.5 469.4 238.5 C469.9 238.5 470.4 238.4 470.8 238.4 C471.3 238.4 471.8 238.4 472.2 238.4 C472.7 238.4 473.2 238.5 473.6 238.5 C474.1 238.5 474.6 238.5 475.0 238.5 C475.5 238.5 476.0 238.5 476.5 238.5 C476.9 238.5 477.4 238.4 477.9 238.3 C478.3 238.3 478.8 238.5 479.3 238.5 C479.7 238.5 480.2 238.4 480.7 238.4 C481.2 238.4 481.6 238.5 482.1 238.5 C482.6 238.5 483.0 238.4 483.5 238.4 C484.0 238.4 484.4 238.4 484.9 238.4 C485.4 238.4 485.8 238.4 486.3 238.4 C486.8 238.4 487.3 238.5 487.7 238.5 C488.2 238.5 488.7 238.4 489.1 238.4 C489.6 238.4 490.1 238.5 490.5 238.5 C491.0 238.5 491.5 238.5 492.0 238.4 C492.4 238.4 492.9 238.5 493.4 238.5 C493.8 238.5 494.3 238.5 494.8 238.5 C495.2 238.5 495.7 238.5 496.2 238.4 C496.6 238.4 497.1 238.5 497.6 238.5 C498.1 238.5 498.5 238.5 499.0 238.5 C499.5 238.5 499.9 238.4 500.4 238.4 C500.9 238.4 501.3 238.4 501.8 238.4 C502.3 238.5 502.8 238.6 503.2 238.6 C503.7 238.6 504.2 238.5 504.6 238.5 C505.1 238.5 505.6 238.5 506.0 238.5 C506.5 238.4 507.0 238.4 507.4 238.4 C507.9 238.4 508.4 238.4 508.9 238.4 C509.3 238.4 509.8 238.4 510.3 238.4 C510.7 238.5 511.2 238.6 511.7 238.6 C512.1 238.6 512.6 238.4 513.1 238.4 C513.6 238.4 514.0 238.5 514.5 238.5 C515.0 238.5 515.4 238.4 515.9 238.4 C516.4 238.4 516.8 238.4 517.3 238.4 C517.8 238.4 518.2 238.4 518.7 238.4 C519.2 238.4 519.7 238.5 520.1 238.5 C520.6 238.4 521.1 238.4 521.5 238.4 C522.0 238.4 522.5 238.5 522.9 238.5 C523.4 238.5 523.9 238.5 524.4 238.5 C524.8 238.5 525.3 238.4 525.8 238.4 C526.2 238.4 526.7 238.5 527.2 238.5 C527.6 238.5 528.1 238.5 528.6 238.5 C529.0 238.5 529.5 238.4 530.0 238.4 C530.5 238.4 530.9 238.6 531.4 238.6 C531.9 238.6 532.3 238.4 532.8 238.4 C533.3 238.4 533.7 238.4 534.2 238.4 C534.7 238.4 535.2 238.5 535.6 238.5 C536.1 238.5 536.6 238.5 537.0 238.5 C537.5 238.5 538.0 238.4 538.4 238.4 C538.9 238.4 539.4 238.4 539.8 238.4 C540.3 238.4 540.8 238.5 541.3 238.5 C541.7 238.5 542.2 238.5 542.7 238.5 C543.1 238.4 543.6 238.4 544.1 238.4 C544.5 238.4 545.0 238.4 545.5 238.5 C546.0 238.5 546.4 238.5 546.9 238.5 C547.4 238.5 547.8 238.5 548.3 238.5 C548.8 238.5 549.2 238.5 549.7 238.4 C550.2 238.4 550.6 238.4 551.1 238.4 C551.6 238.4 552.1 238.5 552.5 238.5 C553.0 238.5 553.5 238.5 553.9 238.5 C554.4 238.5 554.9 238.4 555.3 238.4 C555.8 238.4 556.3 238.4 556.8 238.4 C557.2 238.4 557.7 238.4 558.2 238.4 C558.6 238.4 559.0 238.4 559.4 238.4 C559.9 237.5 560.4 234.9 561.0 232.8 C561.5 230.7 562.3 227.6 562.8 225.9 C563.3 224.1 563.4 223.8 563.8 222.2 C564.2 220.7 564.9 217.7 565.3 216.6 C565.8 215.4 566.3 215.5 566.6 215.1 C567.0 214.8 567.0 214.4 567.5 214.4 C567.9 214.6 569.0 215.8 569.6 216.6 C570.1 217.3 570.3 218.0 570.8 219.0 C571.3 220.1 572.2 222.0 572.5 222.6" fill="none" stroke="#f2cc0c" stroke-width="1.05" stroke-linejoin="round"/><rect x="24.9" y="276" width="14" height="4" rx="1" fill="#73bf69"/><rect x="290.2" y="276" width="14" height="4" rx="1" fill="#f2cc0c"/></svg></div><div class="panel" style="left:15px;top:448px;width:608px;height:296px"><svg style="position:absolute;left:-1px;top:-1px" width="608" height="296" viewBox="0 0 608 296"><defs><linearGradient id="g15_512_0" x1="0" y1="58.3" x2="0" y2="244.5" gradientUnits="userSpaceOnUse"><stop offset="0" stop-color="#73bf69" stop-opacity="0.72"/><stop offset="1" stop-color="#73bf69" stop-opacity="0"/></linearGradient><linearGradient id="g15_512_1" x1="0" y1="58.3" x2="0" y2="244.5" gradientUnits="userSpaceOnUse"><stop offset="0" stop-color="#f2cc0c" stop-opacity="0.72"/><stop offset="1" stop-color="#f2cc0c" stop-opacity="0"/></linearGradient></defs><line x1="43" x2="574" y1="244.5" y2="244.5" stroke="#2f3237" stroke-width="1"/><line x1="43" x2="574" y1="207.3" y2="207.3" stroke="#2f3237" stroke-width="1"/><line x1="43" x2="574" y1="170.0" y2="170.0" stroke="#2f3237" stroke-width="1"/><line x1="43" x2="574" y1="132.8" y2="132.8" stroke="#2f3237" stroke-width="1"/><line x1="43" x2="574" y1="95.5" y2="95.5" stroke="#2f3237" stroke-width="1"/><line x1="43" x2="574" y1="58.3" y2="58.3" stroke="#2f3237" stroke-width="1"/><line x1="88.4" x2="88.4" y1="58.3" y2="248.5" stroke="#2f3237" stroke-width="1"/><line x1="176.3" x2="176.3" y1="58.3" y2="248.5" stroke="#2f3237" stroke-width="1"/><line x1="264.3" x2="264.3" y1="58.3" y2="248.5" stroke="#2f3237" stroke-width="1"/><line x1="352.2" x2="352.2" y1="58.3" y2="248.5" stroke="#2f3237" stroke-width="1"/><line x1="440.2" x2="440.2" y1="58.3" y2="248.5" stroke="#2f3237" stroke-width="1"/><line x1="528.1" x2="528.1" y1="58.3" y2="248.5" stroke="#2f3237" stroke-width="1"/><path d="M48.39 243.57 C48.6 243.5 49.4 243.3 49.9 243.2 C50.3 243.2 50.8 243.2 51.3 243.2 C51.8 243.3 52.3 243.5 52.8 243.6 C53.3 243.7 53.8 243.7 54.3 243.8 C54.7 243.9 55.2 244.1 55.7 244.1 C56.2 244.1 56.7 243.5 57.2 243.4 C57.7 243.4 58.2 243.6 58.6 243.6 C59.1 243.6 59.6 243.3 60.1 243.3 C60.6 243.3 61.1 243.7 61.6 243.7 C62.1 243.7 62.6 243.3 63.0 243.3 C63.5 243.3 64.0 243.8 64.5 243.8 C65.0 243.8 65.5 243.3 66.0 243.2 C66.5 243.2 67.0 243.2 67.4 243.3 C67.9 243.4 68.4 243.6 68.9 243.7 C69.4 243.7 69.9 243.6 70.4 243.5 C70.9 243.5 71.3 243.4 71.8 243.4 C72.3 243.4 72.8 243.9 73.3 243.9 C73.8 243.9 74.3 243.6 74.8 243.5 C75.3 243.4 75.7 243.2 76.2 243.2 C76.7 243.3 77.2 243.8 77.7 243.8 C78.2 243.8 78.7 243.3 79.2 243.2 C79.7 243.2 80.1 243.4 80.6 243.4 C81.1 243.4 81.6 243.2 82.1 243.2 C82.6 243.2 83.1 243.6 83.6 243.8 C84.1 243.9 84.5 244.0 85.0 244.0 C85.5 243.9 86.0 243.4 86.5 243.2 C87.0 243.2 87.5 243.2 88.0 243.2 C88.4 243.3 88.9 243.5 89.4 243.6 C89.9 243.8 90.4 244.0 90.9 244.0 C91.4 244.0 91.9 244.0 92.4 243.9 C92.8 243.8 93.3 243.4 93.8 243.4 C94.3 243.4 94.8 243.8 95.3 243.8 C95.8 243.7 96.3 243.1 96.8 243.1 C97.2 243.1 97.7 243.3 98.2 243.5 C98.7 243.6 99.2 243.9 99.7 243.9 C100.2 243.9 100.7 243.4 101.2 243.4 C101.6 243.4 102.1 243.7 102.6 243.7 C103.1 243.7 103.6 243.2 104.1 243.1 C104.6 243.1 105.1 243.1 105.5 243.1 C106.0 243.2 106.5 243.5 107.0 243.6 C107.5 243.6 108.0 243.4 108.5 243.4 C109.0 243.4 109.5 243.4 109.9 243.3 C110.4 243.3 110.9 243.3 111.4 243.2 C111.9 243.2 112.4 243.0 112.9 243.0 C113.4 243.2 113.9 244.0 114.3 244.1 C114.8 244.1 115.3 243.8 115.8 243.7 C116.3 243.6 116.8 243.5 117.3 243.5 C117.8 243.5 118.3 243.8 118.7 243.8 C119.2 243.8 119.7 243.5 120.2 243.5 C120.7 243.5 121.2 244.0 121.7 244.0 C122.2 244.0 122.6 243.2 123.1 243.1 C123.6 243.1 124.1 243.4 124.6 243.5 C125.1 243.7 125.6 244.0 126.1 244.0 C126.6 244.0 127.0 243.4 127.5 243.4 C128.0 243.4 128.5 243.7 129.0 243.8 C129.5 243.9 130.0 243.9 130.5 243.9 C131.0 243.9 131.4 243.6 131.9 243.6 C132.4 243.6 132.9 243.9 133.4 244.0 C133.9 244.0 134.4 244.0 134.9 243.9 C135.3 243.8 135.8 243.3 136.3 243.2 C136.8 243.2 137.3 243.2 137.8 243.3 C138.3 243.5 138.8 244.1 139.3 244.1 C139.7 244.1 140.2 243.3 140.7 243.3 C141.2 243.3 141.7 244.0 142.2 244.1 C142.7 244.1 143.2 243.9 143.7 243.8 C144.1 243.6 144.6 243.2 145.1 243.1 C145.6 243.1 146.1 243.3 146.6 243.4 C147.1 243.5 147.6 243.7 148.1 243.8 C148.5 243.8 149.0 243.7 149.5 243.7 C150.0 243.7 150.5 243.7 151.0 243.7 C151.5 243.7 152.0 244.0 152.4 244.0 C152.9 243.9 153.4 243.0 153.9 243.0 C154.4 243.0 154.9 244.0 155.4 244.1 C155.9 244.1 156.4 243.8 156.8 243.7 C157.3 243.5 157.8 243.3 158.3 243.3 C158.8 243.3 159.3 243.7 159.8 243.7 C160.3 243.6 160.8 243.0 161.2 243.0 C161.7 243.1 162.2 243.9 162.7 243.9 C163.2 243.9 163.7 243.2 164.2 243.0 C164.7 243.0 165.2 243.1 165.6 243.1 C166.1 243.2 166.6 243.4 167.1 243.4 C167.6 243.4 168.1 243.1 168.6 243.1 C169.1 243.2 169.5 243.6 170.0 243.6 C170.5 243.6 171.0 243.3 171.5 243.2 C172.0 243.2 172.5 243.2 173.0 243.2 C173.5 243.3 173.9 243.5 174.4 243.6 C174.9 243.6 175.4 243.6 175.9 243.6 C176.4 243.6 176.9 243.3 177.4 243.3 C177.9 243.4 178.3 243.6 178.8 243.7 C179.3 243.8 179.8 244.0 180.3 244.0 C180.8 244.0 181.3 243.3 181.8 243.3 C182.3 243.3 182.7 243.8 183.2 243.8 C183.7 243.8 184.2 243.7 184.7 243.6 C185.2 243.5 185.7 243.3 186.2 243.3 C186.6 243.3 187.1 243.8 187.6 243.9 C188.1 244.1 188.6 244.1 189.1 244.1 C189.6 244.1 190.1 244.1 190.6 244.0 C191.0 243.9 191.5 243.5 192.0 243.5 C192.5 243.5 193.0 243.7 193.5 243.7 C194.0 243.8 194.5 243.8 195.0 243.8 C195.4 243.8 195.9 243.7 196.4 243.6 C196.9 243.5 197.4 243.1 197.9 243.1 C198.4 243.1 198.9 243.7 199.4 243.8 C199.8 243.8 200.3 243.8 200.8 243.7 C201.3 243.6 201.8 243.2 202.3 243.1 C202.8 243.1 203.3 243.3 203.7 243.4 C204.2 243.6 204.7 243.8 205.2 243.8 C205.7 243.8 206.2 243.6 206.7 243.6 C207.2 243.6 207.7 243.6 208.1 243.6 C208.6 243.7 209.1 243.9 209.6 244.0 C210.1 244.0 210.6 243.7 211.1 243.7 C211.6 243.7 212.1 243.8 212.5 243.8 C213.0 243.7 213.5 243.2 214.0 243.2 C214.5 243.2 215.0 243.7 215.5 243.8 C216.0 243.8 216.5 243.5 216.9 243.4 C217.4 243.3 217.9 243.1 218.4 243.0 C218.9 243.0 219.4 243.0 219.9 243.1 C220.4 243.2 220.8 243.6 221.3 243.7 C221.8 243.7 222.3 243.5 222.8 243.5 C223.3 243.5 223.8 243.7 224.3 243.8 C224.8 243.8 225.2 243.7 225.7 243.7 C226.2 243.7 226.7 243.7 227.2 243.6 C227.7 243.5 228.2 243.3 228.7 243.2 C229.2 243.2 229.6 243.1 230.1 243.1 C230.6 243.2 231.1 243.6 231.6 243.8 C232.1 244.0 232.6 244.1 233.1 244.1 C233.5 244.1 234.0 243.6 234.5 243.6 C235.0 243.6 235.5 244.0 236.0 244.1 C236.5 244.1 237.0 244.1 237.5 244.1 C237.9 244.0 238.4 243.3 238.9 243.3 C239.4 243.3 239.9 244.0 240.4 244.0 C240.9 244.0 241.4 243.4 241.9 243.3 C242.3 243.3 242.8 243.7 243.3 243.7 C243.8 243.7 244.3 243.2 244.8 243.1 C245.3 243.1 245.8 243.1 246.3 243.2 C246.7 243.3 247.2 243.9 247.7 244.1 C248.2 244.1 248.7 244.1 249.2 243.9 C249.7 243.7 250.2 243.1 250.6 243.1 C251.1 243.1 251.6 243.3 252.1 243.4 C252.6 243.5 253.1 243.7 253.6 243.7 C254.1 243.6 254.6 243.3 255.0 243.3 C255.5 243.2 256.0 243.2 256.5 243.2 C257.0 243.3 257.5 243.5 258.0 243.6 C258.5 243.6 259.0 243.6 259.4 243.6 C259.9 243.7 260.4 244.0 260.9 244.0 C261.4 244.0 261.9 243.7 262.4 243.7 C262.9 243.7 263.4 244.0 263.8 244.0 C264.3 243.9 264.8 243.5 265.3 243.4 C265.8 243.4 266.3 243.4 266.8 243.4 C267.3 243.5 267.7 244.0 268.2 244.0 C268.7 244.0 269.2 243.4 269.7 243.4 C270.2 243.4 270.7 243.9 271.2 244.0 C271.7 244.0 272.1 244.0 272.6 244.0 C273.1 243.9 273.6 243.5 274.1 243.4 C274.6 243.4 275.1 243.6 275.6 243.6 C276.1 243.6 276.5 243.2 277.0 243.1 C277.5 243.1 278.0 243.4 278.5 243.4 C279.0 243.4 279.5 243.3 280.0 243.3 C280.5 243.4 280.9 244.0 281.4 244.0 C281.9 244.0 282.4 243.2 282.9 243.2 C283.4 243.2 283.9 244.0 284.4 244.0 C284.8 244.0 285.3 243.6 285.8 243.4 C286.3 243.3 286.8 243.2 287.3 243.1 C287.8 243.1 288.3 243.1 288.8 243.1 C289.2 243.1 289.7 243.1 290.2 243.1 C290.7 243.2 291.2 243.6 291.7 243.6 C292.2 243.6 292.7 243.4 293.2 243.4 C293.6 243.3 294.1 243.2 294.6 243.2 C295.1 243.3 295.6 244.0 296.1 244.0 C296.6 243.9 297.1 243.2 297.6 243.1 C298.0 243.1 298.5 243.1 299.0 243.1 C299.5 243.2 300.0 243.6 300.5 243.6 C301.0 243.6 301.5 243.3 301.9 243.3 C302.4 243.3 302.9 243.5 303.4 243.6 C303.9 243.7 304.4 243.8 304.9 243.8 C305.4 243.8 305.9 243.3 306.3 243.3 C306.8 243.4 307.3 244.1 307.8 244.1 C308.3 244.0 308.8 243.4 309.3 243.2 C309.8 243.1 310.3 243.0 310.7 243.0 C311.2 243.1 311.7 243.8 312.2 243.8 C312.7 243.8 313.2 243.1 313.7 243.1 C314.2 243.1 314.6 244.0 315.1 244.0 C315.6 244.0 316.1 243.2 316.6 243.2 C317.1 243.2 317.6 243.8 318.1 243.8 C318.6 243.8 319.0 243.1 319.5 243.0 C320.0 243.0 320.5 243.6 321.0 243.6 C321.5 243.6 322.0 243.1 322.5 243.1 C323.0 243.2 323.4 243.9 323.9 244.1 C324.4 244.1 324.9 244.1 325.4 244.0 C325.9 243.9 326.4 243.3 326.9 243.2 C327.4 243.2 327.8 243.4 328.3 243.4 C328.8 243.5 329.3 243.4 329.8 243.5 C330.3 243.6 330.8 244.0 331.3 244.1 C331.7 244.1 332.2 244.0 332.7 243.9 C333.2 243.9 333.7 243.7 334.2 243.7 C334.7 243.7 335.2 244.1 335.7 244.1 C336.1 244.0 336.6 243.2 337.1 243.0 C337.6 243.0 338.1 243.3 338.6 243.3 C339.1 243.3 339.6 243.1 340.1 243.1 C340.5 243.1 341.0 243.2 341.5 243.3 C342.0 243.5 342.5 243.6 343.0 243.7 C343.5 243.9 344.0 244.0 344.5 244.0 C344.9 244.0 345.4 243.3 345.9 243.3 C346.4 243.3 346.9 244.0 347.4 244.0 C347.9 244.0 348.4 243.6 348.8 243.5 C349.3 243.5 349.8 243.6 350.3 243.6 C350.8 243.6 351.3 243.6 351.8 243.6 C352.3 243.6 352.8 244.0 353.2 244.0 C353.7 244.0 354.2 244.0 354.7 244.0 C355.2 244.0 355.7 243.5 356.2 243.5 C356.7 243.6 357.2 244.1 357.6 244.1 C358.1 244.1 358.6 243.6 359.1 243.5 C359.6 243.5 360.1 243.9 360.6 244.0 C361.1 244.0 361.6 243.8 362.0 243.8 C362.5 243.8 363.0 244.0 363.5 244.0 C364.0 243.9 364.5 243.5 365.0 243.5 C365.5 243.5 365.9 243.6 366.4 243.7 C366.9 243.8 367.4 243.8 367.9 243.9 C368.4 243.9 368.9 243.9 369.4 243.9 C369.9 243.8 370.3 243.6 370.8 243.5 C371.3 243.4 371.8 243.1 372.3 243.1 C372.8 243.1 373.3 243.5 373.8 243.7 C374.3 243.8 374.7 243.9 375.2 243.9 C375.7 243.9 376.2 243.8 376.7 243.8 C377.2 243.8 377.7 243.9 378.2 243.9 C378.7 243.8 379.1 243.6 379.6 243.5 C380.1 243.4 380.6 243.2 381.1 243.2 C381.6 243.2 382.1 243.4 382.6 243.5 C383.0 243.6 383.5 243.9 384.0 243.9 C384.5 243.9 385.0 243.8 385.5 243.8 C386.0 243.7 386.5 243.7 387.0 243.7 C387.4 243.7 387.9 243.6 388.4 243.6 C388.9 243.6 389.4 243.7 389.9 243.7 C390.4 243.6 390.9 243.0 391.4 243.0 C391.8 243.0 392.3 243.4 392.8 243.5 C393.3 243.5 393.8 243.4 394.3 243.4 C394.8 243.4 395.3 243.3 395.8 243.3 C396.2 243.3 396.7 243.4 397.2 243.4 C397.7 243.4 398.2 243.2 398.7 243.2 C399.2 243.3 399.7 243.7 400.1 243.7 C400.6 243.7 401.1 243.5 401.6 243.4 C402.1 243.3 402.6 243.0 403.1 243.0 C403.6 243.1 404.1 243.9 404.5 243.9 C405.0 243.9 405.5 243.5 406.0 243.4 C406.5 243.4 407.0 243.6 407.5 243.7 C408.0 243.8 408.5 244.0 408.9 244.1 C409.4 244.1 409.9 244.1 410.4 244.1 C410.9 244.0 411.4 243.3 411.9 243.3 C412.4 243.3 412.8 244.0 413.3 244.0 C413.8 244.0 414.3 243.3 414.8 243.3 C415.3 243.3 415.8 244.0 416.3 244.0 C416.8 244.0 417.2 243.7 417.7 243.7 C418.2 243.7 418.7 244.1 419.2 244.1 C419.7 244.1 420.2 243.7 420.7 243.5 C421.2 243.4 421.6 243.2 422.1 243.2 C422.6 243.3 423.1 243.8 423.6 243.9 C424.1 243.9 424.6 243.6 425.1 243.5 C425.6 243.4 426.0 243.1 426.5 243.1 C427.0 243.1 427.5 243.7 428.0 243.8 C428.5 243.8 429.0 243.7 429.5 243.6 C429.9 243.5 430.4 243.4 430.9 243.3 C431.4 243.2 431.9 243.2 432.4 243.2 C432.9 243.3 433.4 243.9 433.9 243.9 C434.3 243.9 434.8 243.4 435.3 243.4 C435.8 243.4 436.3 243.9 436.8 244.0 C437.3 244.0 437.8 244.0 438.3 244.0 C438.7 243.8 439.2 243.0 439.7 243.0 C440.2 243.0 440.7 244.1 441.2 244.1 C441.7 244.1 442.2 243.2 442.7 243.1 C443.1 243.1 443.6 243.2 444.1 243.3 C444.6 243.3 445.1 243.4 445.6 243.4 C446.1 243.4 446.6 243.3 447.0 243.3 C447.5 243.3 448.0 243.3 448.5 243.4 C449.0 243.5 449.5 243.8 450.0 243.8 C450.5 243.8 451.0 243.6 451.4 243.6 C451.9 243.6 452.4 243.9 452.9 243.9 C453.4 243.8 453.9 243.3 454.4 243.2 C454.9 243.2 455.4 243.2 455.8 243.3 C456.3 243.3 456.8 243.2 457.3 243.2 C457.8 243.4 458.3 243.9 458.8 243.9 C459.3 243.9 459.8 243.5 460.2 243.5 C460.7 243.5 461.2 243.8 461.7 243.8 C462.2 243.8 462.7 243.3 463.2 243.2 C463.7 243.2 464.1 243.3 464.6 243.3 C465.1 243.3 465.6 243.0 466.1 243.0 C466.6 243.0 467.1 243.3 467.6 243.3 C468.1 243.4 468.5 243.4 469.0 243.4 C469.5 243.4 470.0 243.3 470.5 243.3 C471.0 243.4 471.5 244.0 472.0 244.0 C472.5 244.0 472.9 243.5 473.4 243.5 C473.9 243.5 474.4 244.0 474.9 244.1 C475.4 244.1 475.9 243.7 476.4 243.7 C476.9 243.7 477.3 244.0 477.8 244.0 C478.3 243.9 478.8 243.1 479.3 243.1 C479.8 243.1 480.3 244.1 480.8 244.1 C481.2 244.1 481.7 243.3 482.2 243.1 C482.7 243.1 483.2 243.1 483.7 243.1 C484.2 243.2 484.7 243.6 485.2 243.6 C485.6 243.6 486.1 243.2 486.6 243.2 C487.1 243.3 487.6 243.9 488.1 244.1 C488.6 244.1 489.1 244.0 489.6 244.0 C490.0 244.0 490.5 244.1 491.0 244.1 C491.5 244.1 492.0 244.1 492.5 244.1 C493.0 244.1 493.5 244.1 494.0 244.1 C494.4 244.0 494.9 243.2 495.4 243.2 C495.9 243.2 496.4 244.0 496.9 244.0 C497.4 244.0 497.9 243.5 498.3 243.5 C498.8 243.5 499.3 243.7 499.8 243.8 C500.3 243.9 500.8 244.0 501.3 244.0 C501.8 244.0 502.3 243.7 502.7 243.7 C503.2 243.7 503.7 243.9 504.2 243.9 C504.7 243.8 505.3 243.1 505.7 243.0 C506.1 243.0 506.1 243.6 506.6 243.6 C507.0 242.7 508.1 239.2 508.6 237.7 C509.1 236.3 509.1 235.0 509.6 234.6 C510.1 234.6 511.0 235.3 511.5 235.6 C512.1 236.0 512.7 236.6 513.2 236.7 C513.6 236.7 514.0 236.5 514.5 236.4 C514.9 236.3 515.4 236.2 515.9 236.1 C516.4 236.1 516.8 236.1 517.4 236.1 C518.0 236.0 518.8 235.8 519.3 235.7 C519.8 235.7 519.9 235.9 520.3 236.0 C520.7 236.1 521.3 236.2 521.8 236.2 C522.3 236.1 522.8 235.4 523.3 235.4 C523.8 235.4 524.2 236.1 524.7 236.1 C525.2 236.1 525.7 236.0 526.2 235.9 C526.7 235.8 527.2 235.5 527.7 235.5 C528.1 235.5 528.6 235.8 529.1 235.8 C529.6 235.7 530.1 235.4 530.6 235.4 C531.1 235.4 531.6 235.4 532.1 235.5 C532.5 235.6 533.0 235.7 533.5 235.9 C534.0 236.0 534.5 236.3 535.0 236.3 C535.5 236.3 536.0 235.9 536.5 235.8 C536.9 235.8 537.4 236.0 537.9 236.0 C538.4 235.9 538.9 235.6 539.4 235.5 C539.9 235.5 540.4 235.9 540.9 235.9 C541.3 235.9 541.8 235.8 542.3 235.8 C542.8 235.7 543.3 235.7 543.8 235.7 C544.3 235.7 544.8 236.0 545.2 236.0 C545.7 236.0 546.2 235.7 546.7 235.6 C547.2 235.6 547.7 235.6 548.2 235.6 C548.7 235.7 549.2 236.4 549.6 236.4 C550.1 236.4 550.6 235.7 551.1 235.6 C551.6 235.6 552.1 235.7 552.6 235.7 C553.1 235.7 553.6 235.7 554.0 235.7 C554.5 235.8 555.0 236.2 555.5 236.3 C556.0 236.4 556.5 236.4 557.0 236.4 C557.5 236.5 558.0 236.6 558.4 236.6 C558.9 236.5 559.4 236.4 559.9 236.3 C560.4 236.2 560.9 235.8 561.4 235.8 C561.9 235.8 562.3 236.2 562.8 236.3 C563.3 236.5 563.8 236.7 564.3 236.8 C564.8 236.8 565.3 236.4 565.8 236.4 C566.3 236.4 566.7 236.7 567.2 236.7 C567.7 236.6 568.2 236.2 568.7 236.1 C569.2 236.0 569.7 236.0 570.2 236.0 C570.7 235.9 571.1 235.8 571.6 235.8 C572.1 235.9 572.7 236.7 573.1 236.8 C573.5 236.8 573.9 236.4 574.1 236.3 L574.1 244.5 L48.4 244.5 Z" fill="url(#g15_512_0)" stroke="none"/><path d="M48.39 208.75 C48.6 208.8 49.4 208.8 49.9 208.8 C50.3 208.8 50.8 208.9 51.3 208.9 C51.8 208.8 52.3 208.7 52.8 208.7 C53.3 208.7 53.8 208.9 54.3 208.9 C54.7 208.9 55.2 208.8 55.7 208.7 C56.2 208.7 56.7 208.8 57.2 208.8 C57.7 208.8 58.2 208.9 58.6 208.9 C59.1 208.9 59.6 208.7 60.1 208.7 C60.6 208.7 61.1 208.9 61.6 208.9 C62.1 208.9 62.6 208.8 63.0 208.8 C63.5 208.8 64.0 208.9 64.5 208.9 C65.0 208.9 65.5 208.9 66.0 208.9 C66.5 208.9 67.0 208.8 67.4 208.8 C67.9 208.7 68.4 208.7 68.9 208.7 C69.4 208.7 69.9 208.8 70.4 208.9 C70.9 208.9 71.3 208.9 71.8 208.8 C72.3 208.8 72.8 208.7 73.3 208.7 C73.8 208.7 74.3 208.6 74.8 208.6 C75.3 208.6 75.7 208.7 76.2 208.7 C76.7 208.8 77.2 208.8 77.7 208.8 C78.2 208.8 78.7 208.6 79.2 208.6 C79.7 208.6 80.1 208.9 80.6 208.9 C81.1 208.9 81.6 208.7 82.1 208.6 C82.6 208.6 83.1 208.8 83.6 208.8 C84.1 208.8 84.5 208.8 85.0 208.9 C85.5 208.9 86.0 208.9 86.5 208.9 C87.0 208.9 87.5 208.8 88.0 208.8 C88.4 208.8 88.9 208.7 89.4 208.7 C89.9 208.7 90.4 208.8 90.9 208.8 C91.4 208.8 91.9 208.7 92.4 208.7 C92.8 208.7 93.3 208.7 93.8 208.7 C94.3 208.7 94.8 208.8 95.3 208.8 C95.8 208.8 96.3 208.7 96.8 208.7 C97.2 208.8 97.7 208.9 98.2 208.9 C98.7 208.9 99.2 208.9 99.7 208.9 C100.2 208.9 100.7 208.9 101.2 208.8 C101.6 208.8 102.1 208.7 102.6 208.7 C103.1 208.7 103.6 208.8 104.1 208.8 C104.6 208.8 105.1 208.8 105.5 208.8 C106.0 208.8 106.5 208.7 107.0 208.7 C107.5 208.7 108.0 208.7 108.5 208.8 C109.0 208.8 109.5 208.8 109.9 208.8 C110.4 208.8 110.9 208.7 111.4 208.7 C111.9 208.7 112.4 208.7 112.9 208.7 C113.4 208.7 113.9 208.8 114.3 208.8 C114.8 208.8 115.3 208.7 115.8 208.7 C116.3 208.7 116.8 208.7 117.3 208.7 C117.8 208.7 118.3 208.6 118.7 208.6 C119.2 208.6 119.7 208.7 120.2 208.7 C120.7 208.7 121.2 208.8 121.7 208.8 C122.2 208.8 122.6 208.6 123.1 208.6 C123.6 208.6 124.1 208.8 124.6 208.9 C125.1 208.9 125.6 208.8 126.1 208.8 C126.6 208.7 127.0 208.7 127.5 208.7 C128.0 208.7 128.5 208.8 129.0 208.9 C129.5 208.9 130.0 208.8 130.5 208.8 C131.0 208.8 131.4 208.9 131.9 208.9 C132.4 208.9 132.9 208.7 133.4 208.7 C133.9 208.7 134.4 208.7 134.9 208.7 C135.3 208.7 135.8 208.7 136.3 208.7 C136.8 208.7 137.3 208.6 137.8 208.6 C138.3 208.7 138.8 208.8 139.3 208.8 C139.7 208.8 140.2 208.7 140.7 208.7 C141.2 208.7 141.7 208.7 142.2 208.7 C142.7 208.7 143.2 208.7 143.7 208.7 C144.1 208.7 144.6 208.8 145.1 208.8 C145.6 208.7 146.1 208.7 146.6 208.6 C147.1 208.6 147.6 208.6 148.1 208.6 C148.5 208.6 149.0 208.7 149.5 208.8 C150.0 208.8 150.5 208.7 151.0 208.7 C151.5 208.7 152.0 208.9 152.4 208.9 C152.9 208.9 153.4 208.7 153.9 208.7 C154.4 208.7 154.9 208.7 155.4 208.7 C155.9 208.7 156.4 208.6 156.8 208.6 C157.3 208.6 157.8 208.6 158.3 208.7 C158.8 208.7 159.3 208.8 159.8 208.8 C160.3 208.8 160.8 208.8 161.2 208.8 C161.7 208.8 162.2 208.7 162.7 208.7 C163.2 208.7 163.7 208.9 164.2 208.9 C164.7 208.9 165.2 208.8 165.6 208.8 C166.1 208.8 166.6 208.8 167.1 208.8 C167.6 208.9 168.1 208.9 168.6 208.9 C169.1 208.9 169.5 208.9 170.0 208.9 C170.5 208.8 171.0 208.7 171.5 208.7 C172.0 208.7 172.5 208.8 173.0 208.9 C173.5 208.9 173.9 208.8 174.4 208.8 C174.9 208.8 175.4 208.8 175.9 208.8 C176.4 208.8 176.9 208.6 177.4 208.6 C177.9 208.7 178.3 208.9 178.8 208.9 C179.3 208.9 179.8 208.8 180.3 208.8 C180.8 208.7 181.3 208.8 181.8 208.7 C182.3 208.7 182.7 208.6 183.2 208.6 C183.7 208.6 184.2 208.7 184.7 208.7 C185.2 208.7 185.7 208.6 186.2 208.6 C186.6 208.7 187.1 208.8 187.6 208.8 C188.1 208.8 188.6 208.8 189.1 208.8 C189.6 208.8 190.1 208.8 190.6 208.8 C191.0 208.8 191.5 208.7 192.0 208.6 C192.5 208.6 193.0 208.6 193.5 208.6 C194.0 208.6 194.5 208.8 195.0 208.9 C195.4 208.9 195.9 208.9 196.4 208.8 C196.9 208.8 197.4 208.8 197.9 208.8 C198.4 208.8 198.9 208.8 199.4 208.8 C199.8 208.8 200.3 208.8 200.8 208.8 C201.3 208.7 201.8 208.7 202.3 208.7 C202.8 208.7 203.3 208.8 203.7 208.8 C204.2 208.8 204.7 208.9 205.2 208.9 C205.7 208.9 206.2 208.8 206.7 208.8 C207.2 208.8 207.7 208.8 208.1 208.8 C208.6 208.8 209.1 208.8 209.6 208.7 C210.1 208.7 210.6 208.6 211.1 208.6 C211.6 208.6 212.1 208.7 212.5 208.7 C213.0 208.7 213.5 208.7 214.0 208.7 C214.5 208.7 215.0 208.7 215.5 208.7 C216.0 208.7 216.5 208.7 216.9 208.7 C217.4 208.7 217.9 208.9 218.4 208.9 C218.9 208.9 219.4 208.7 219.9 208.6 C220.4 208.6 220.8 208.7 221.3 208.7 C221.8 208.7 222.3 208.6 222.8 208.6 C223.3 208.6 223.8 208.6 224.3 208.7 C224.8 208.7 225.2 208.8 225.7 208.8 C226.2 208.8 226.7 208.8 227.2 208.8 C227.7 208.8 228.2 208.9 228.7 208.9 C229.2 208.9 229.6 208.7 230.1 208.7 C230.6 208.7 231.1 208.9 231.6 208.9 C232.1 208.9 232.6 208.9 233.1 208.9 C233.5 208.9 234.0 208.8 234.5 208.8 C235.0 208.8 235.5 208.9 236.0 208.9 C236.5 208.8 237.0 208.8 237.5 208.8 C237.9 208.8 238.4 208.9 238.9 208.9 C239.4 208.9 239.9 208.9 240.4 208.9 C240.9 208.9 241.4 208.9 241.9 208.9 C242.3 208.9 242.8 208.9 243.3 208.9 C243.8 208.9 244.3 208.8 244.8 208.8 C245.3 208.8 245.8 208.9 246.3 208.9 C246.7 208.9 247.2 208.7 247.7 208.6 C248.2 208.6 248.7 208.7 249.2 208.7 C249.7 208.8 250.2 208.8 250.6 208.9 C251.1 208.9 251.6 208.8 252.1 208.8 C252.6 208.8 253.1 208.8 253.6 208.8 C254.1 208.8 254.6 208.8 255.0 208.8 C255.5 208.8 256.0 208.9 256.5 208.9 C257.0 208.8 257.5 208.7 258.0 208.6 C258.5 208.6 259.0 208.6 259.4 208.6 C259.9 208.6 260.4 208.7 260.9 208.8 C261.4 208.8 261.9 208.8 262.4 208.8 C262.9 208.8 263.4 208.9 263.8 208.9 C264.3 208.9 264.8 208.9 265.3 208.9 C265.8 208.9 266.3 208.8 266.8 208.8 C267.3 208.8 267.7 208.8 268.2 208.8 C268.7 208.8 269.2 208.7 269.7 208.7 C270.2 208.7 270.7 208.8 271.2 208.9 C271.7 208.9 272.1 208.9 272.6 208.9 C273.1 208.9 273.6 208.6 274.1 208.6 C274.6 208.6 275.1 208.7 275.6 208.7 C276.1 208.8 276.5 208.9 277.0 208.9 C277.5 208.9 278.0 208.7 278.5 208.7 C279.0 208.7 279.5 208.9 280.0 208.9 C280.5 208.9 280.9 208.8 281.4 208.7 C281.9 208.7 282.4 208.6 282.9 208.6 C283.4 208.6 283.9 208.6 284.4 208.6 C284.8 208.7 285.3 208.7 285.8 208.7 C286.3 208.7 286.8 208.8 287.3 208.8 C287.8 208.8 288.3 208.8 288.8 208.8 C289.2 208.8 289.7 208.8 290.2 208.8 C290.7 208.8 291.2 208.7 291.7 208.7 C292.2 208.7 292.7 208.7 293.2 208.7 C293.6 208.7 294.1 208.7 294.6 208.7 C295.1 208.7 295.6 208.8 296.1 208.8 C296.6 208.8 297.1 208.8 297.6 208.8 C298.0 208.8 298.5 208.7 299.0 208.7 C299.5 208.6 300.0 208.6 300.5 208.6 C301.0 208.6 301.5 208.6 301.9 208.6 C302.4 208.7 302.9 208.7 303.4 208.7 C303.9 208.7 304.4 208.7 304.9 208.7 C305.4 208.7 305.9 208.7 306.3 208.7 C306.8 208.7 307.3 208.8 307.8 208.8 C308.3 208.8 308.8 208.8 309.3 208.7 C309.8 208.7 310.3 208.8 310.7 208.8 C311.2 208.8 311.7 208.9 312.2 208.9 C312.7 208.9 313.2 208.9 313.7 208.9 C314.2 208.9 314.6 208.8 315.1 208.8 C315.6 208.8 316.1 208.8 316.6 208.8 C317.1 208.8 317.6 208.7 318.1 208.7 C318.6 208.7 319.0 208.6 319.5 208.6 C320.0 208.6 320.5 208.8 321.0 208.8 C321.5 208.8 322.0 208.6 322.5 208.6 C323.0 208.6 323.4 208.6 323.9 208.6 C324.4 208.6 324.9 208.6 325.4 208.6 C325.9 208.6 326.4 208.8 326.9 208.8 C327.4 208.8 327.8 208.8 328.3 208.8 C328.8 208.8 329.3 208.8 329.8 208.8 C330.3 208.8 330.8 208.8 331.3 208.8 C331.7 208.8 332.2 208.8 332.7 208.8 C333.2 208.8 333.7 208.7 334.2 208.7 C334.7 208.7 335.2 208.6 335.7 208.6 C336.1 208.6 336.6 208.6 337.1 208.6 C337.6 208.7 338.1 208.7 338.6 208.8 C339.1 208.8 339.6 208.7 340.1 208.7 C340.5 208.7 341.0 208.7 341.5 208.7 C342.0 208.7 342.5 208.9 343.0 208.9 C343.5 208.9 344.0 208.7 344.5 208.7 C344.9 208.7 345.4 208.6 345.9 208.6 C346.4 208.6 346.9 208.7 347.4 208.7 C347.9 208.7 348.4 208.7 348.8 208.7 C349.3 208.7 349.8 208.7 350.3 208.8 C350.8 208.8 351.3 208.8 351.8 208.8 C352.3 208.8 352.8 208.7 353.2 208.7 C353.7 208.7 354.2 208.8 354.7 208.8 C355.2 208.8 355.7 208.7 356.2 208.7 C356.7 208.6 357.2 208.6 357.6 208.6 C358.1 208.6 358.6 208.8 359.1 208.8 C359.6 208.8 360.1 208.8 360.6 208.8 C361.1 208.8 361.6 208.6 362.0 208.6 C362.5 208.6 363.0 208.6 363.5 208.7 C364.0 208.7 364.5 208.8 365.0 208.8 C365.5 208.9 365.9 208.9 366.4 208.9 C366.9 208.9 367.4 208.9 367.9 208.9 C368.4 208.8 368.9 208.7 369.4 208.6 C369.9 208.6 370.3 208.6 370.8 208.7 C371.3 208.7 371.8 208.9 372.3 208.9 C372.8 208.9 373.3 208.7 373.8 208.7 C374.3 208.6 374.7 208.6 375.2 208.6 C375.7 208.6 376.2 208.7 376.7 208.7 C377.2 208.7 377.7 208.8 378.2 208.8 C378.7 208.8 379.1 208.7 379.6 208.7 C380.1 208.7 380.6 208.8 381.1 208.9 C381.6 208.9 382.1 208.9 382.6 208.9 C383.0 208.9 383.5 208.6 384.0 208.6 C384.5 208.6 385.0 208.7 385.5 208.7 C386.0 208.7 386.5 208.7 387.0 208.7 C387.4 208.7 387.9 208.6 388.4 208.6 C388.9 208.6 389.4 208.8 389.9 208.8 C390.4 208.8 390.9 208.7 391.4 208.6 C391.8 208.6 392.3 208.6 392.8 208.7 C393.3 208.7 393.8 208.8 394.3 208.8 C394.8 208.8 395.3 208.8 395.8 208.8 C396.2 208.8 396.7 208.8 397.2 208.8 C397.7 208.8 398.2 208.8 398.7 208.8 C399.2 208.8 399.7 208.7 400.1 208.7 C400.6 208.7 401.1 208.8 401.6 208.8 C402.1 208.8 402.6 208.8 403.1 208.8 C403.6 208.8 404.1 208.9 404.5 208.9 C405.0 208.8 405.5 208.6 406.0 208.6 C406.5 208.6 407.0 208.8 407.5 208.8 C408.0 208.8 408.5 208.8 408.9 208.8 C409.4 208.8 409.9 208.7 410.4 208.7 C410.9 208.7 411.4 208.6 411.9 208.6 C412.4 208.6 412.8 208.8 413.3 208.8 C413.8 208.8 414.3 208.6 414.8 208.6 C415.3 208.6 415.8 208.7 416.3 208.7 C416.8 208.7 417.2 208.7 417.7 208.7 C418.2 208.7 418.7 208.7 419.2 208.7 C419.7 208.8 420.2 208.9 420.7 208.9 C421.2 208.9 421.6 208.8 422.1 208.8 C422.6 208.8 423.1 208.8 423.6 208.8 C424.1 208.9 424.6 208.9 425.1 208.9 C425.6 208.9 426.0 208.7 426.5 208.7 C427.0 208.7 427.5 208.8 428.0 208.8 C428.5 208.8 429.0 208.8 429.5 208.8 C429.9 208.7 430.4 208.7 430.9 208.7 C431.4 208.7 431.9 208.7 432.4 208.7 C432.9 208.8 433.4 208.8 433.9 208.8 C434.3 208.8 434.8 208.8 435.3 208.7 C435.8 208.7 436.3 208.7 436.8 208.7 C437.3 208.7 437.8 208.7 438.3 208.7 C438.7 208.7 439.2 208.9 439.7 208.9 C440.2 208.9 440.7 208.7 441.2 208.7 C441.7 208.7 442.2 208.8 442.7 208.8 C443.1 208.8 443.6 208.8 444.1 208.8 C444.6 208.8 445.1 208.7 445.6 208.7 C446.1 208.7 446.6 208.7 447.0 208.7 C447.5 208.7 448.0 208.7 448.5 208.7 C449.0 208.7 449.5 208.7 450.0 208.7 C450.5 208.7 451.0 208.6 451.4 208.6 C451.9 208.6 452.4 208.8 452.9 208.8 C453.4 208.8 453.9 208.7 454.4 208.7 C454.9 208.7 455.4 208.7 455.8 208.7 C456.3 208.7 456.8 208.7 457.3 208.7 C457.8 208.7 458.3 208.7 458.8 208.7 C459.3 208.7 459.8 208.8 460.2 208.8 C460.7 208.8 461.2 208.7 461.7 208.7 C462.2 208.7 462.7 208.8 463.2 208.8 C463.7 208.7 464.1 208.6 464.6 208.6 C465.1 208.6 465.6 208.7 466.1 208.7 C466.6 208.7 467.1 208.6 467.6 208.6 C468.1 208.6 468.5 208.6 469.0 208.6 C469.5 208.6 470.0 208.8 470.5 208.8 C471.0 208.8 471.5 208.8 472.0 208.7 C472.5 208.7 472.9 208.6 473.4 208.6 C473.9 208.6 474.4 208.6 474.9 208.6 C475.4 208.7 475.9 208.8 476.4 208.9 C476.9 208.9 477.3 208.9 477.8 208.9 C478.3 208.8 478.8 208.8 479.3 208.8 C479.8 208.8 480.3 208.9 480.8 208.9 C481.2 208.9 481.7 208.8 482.2 208.8 C482.7 208.8 483.2 208.9 483.7 208.9 C484.2 208.9 484.7 208.7 485.2 208.7 C485.6 208.7 486.1 208.7 486.6 208.7 C487.1 208.7 487.6 208.6 488.1 208.6 C488.6 208.7 489.1 208.8 489.6 208.9 C490.0 208.9 490.5 208.7 491.0 208.7 C491.5 208.7 492.0 208.7 492.5 208.7 C493.0 208.7 493.5 208.9 494.0 208.9 C494.4 208.8 494.9 208.7 495.4 208.6 C495.9 208.6 496.4 208.6 496.9 208.6 C497.4 208.6 497.9 208.8 498.3 208.8 C498.8 208.8 499.3 208.6 499.8 208.6 C500.3 208.6 500.8 208.8 501.3 208.8 C501.8 208.8 502.3 208.8 502.7 208.8 C503.2 208.7 503.7 208.6 504.2 208.6 C504.7 208.6 505.3 208.6 505.7 208.7 C506.1 208.7 506.0 208.7 506.6 208.7 C507.1 208.5 508.1 207.5 508.8 207.4 C509.4 207.4 510.0 208.1 510.5 208.2 C511.0 208.2 511.1 208.2 511.5 208.1 C512.0 208.0 512.6 207.8 513.0 207.7 C513.4 207.6 513.5 207.5 514.0 207.4 C514.5 207.4 515.4 207.4 515.9 207.4 C516.5 207.4 516.9 207.5 517.4 207.5 C517.9 207.5 518.4 207.5 518.9 207.5 C519.4 207.5 519.8 207.5 520.3 207.5 C520.8 207.5 521.3 207.4 521.8 207.4 C522.3 207.4 522.8 207.6 523.3 207.6 C523.8 207.6 524.2 207.4 524.7 207.4 C525.2 207.4 525.7 207.4 526.2 207.4 C526.7 207.5 527.2 207.5 527.7 207.5 C528.1 207.5 528.6 207.5 529.1 207.4 C529.6 207.4 530.1 207.4 530.6 207.4 C531.1 207.4 531.6 207.4 532.1 207.4 C532.5 207.4 533.0 207.5 533.5 207.5 C534.0 207.5 534.5 207.3 535.0 207.2 C535.5 207.2 536.0 207.3 536.5 207.3 C536.9 207.3 537.4 207.2 537.9 207.2 C538.4 207.3 538.9 207.5 539.4 207.5 C539.9 207.5 540.4 207.4 540.9 207.4 C541.3 207.4 541.8 207.5 542.3 207.5 C542.8 207.5 543.3 207.3 543.8 207.3 C544.3 207.3 544.8 207.4 545.2 207.4 C545.7 207.4 546.2 207.5 546.7 207.5 C547.2 207.4 547.7 207.4 548.2 207.4 C548.7 207.3 549.2 207.2 549.6 207.2 C550.1 207.2 550.6 207.2 551.1 207.2 C551.6 207.3 552.1 207.4 552.6 207.4 C553.1 207.4 553.6 207.4 554.0 207.4 C554.5 207.4 555.0 207.2 555.5 207.2 C556.0 207.2 556.5 207.3 557.0 207.3 C557.5 207.3 558.0 207.2 558.4 207.2 C558.9 207.3 559.4 207.4 559.9 207.4 C560.4 207.4 560.9 207.4 561.4 207.4 C561.9 207.4 562.3 207.3 562.8 207.2 C563.3 207.2 563.8 207.3 564.3 207.3 C564.8 207.3 565.3 207.4 565.8 207.4 C566.3 207.4 566.7 207.2 567.2 207.2 C567.7 207.2 568.2 207.2 568.7 207.2 C569.2 207.2 569.7 207.2 570.2 207.2 C570.7 207.2 571.1 207.4 571.6 207.4 C572.1 207.4 572.7 207.2 573.1 207.2 C573.5 207.2 573.9 207.2 574.1 207.3 L574.1 244.5 L48.4 244.5 Z" fill="url(#g15_512_1)" stroke="none"/><path d="M48.39 243.57 C48.6 243.5 49.4 243.3 49.9 243.2 C50.3 243.2 50.8 243.2 51.3 243.2 C51.8 243.3 52.3 243.5 52.8 243.6 C53.3 243.7 53.8 243.7 54.3 243.8 C54.7 243.9 55.2 244.1 55.7 244.1 C56.2 244.1 56.7 243.5 57.2 243.4 C57.7 243.4 58.2 243.6 58.6 243.6 C59.1 243.6 59.6 243.3 60.1 243.3 C60.6 243.3 61.1 243.7 61.6 243.7 C62.1 243.7 62.6 243.3 63.0 243.3 C63.5 243.3 64.0 243.8 64.5 243.8 C65.0 243.8 65.5 243.3 66.0 243.2 C66.5 243.2 67.0 243.2 67.4 243.3 C67.9 243.4 68.4 243.6 68.9 243.7 C69.4 243.7 69.9 243.6 70.4 243.5 C70.9 243.5 71.3 243.4 71.8 243.4 C72.3 243.4 72.8 243.9 73.3 243.9 C73.8 243.9 74.3 243.6 74.8 243.5 C75.3 243.4 75.7 243.2 76.2 243.2 C76.7 243.3 77.2 243.8 77.7 243.8 C78.2 243.8 78.7 243.3 79.2 243.2 C79.7 243.2 80.1 243.4 80.6 243.4 C81.1 243.4 81.6 243.2 82.1 243.2 C82.6 243.2 83.1 243.6 83.6 243.8 C84.1 243.9 84.5 244.0 85.0 244.0 C85.5 243.9 86.0 243.4 86.5 243.2 C87.0 243.2 87.5 243.2 88.0 243.2 C88.4 243.3 88.9 243.5 89.4 243.6 C89.9 243.8 90.4 244.0 90.9 244.0 C91.4 244.0 91.9 244.0 92.4 243.9 C92.8 243.8 93.3 243.4 93.8 243.4 C94.3 243.4 94.8 243.8 95.3 243.8 C95.8 243.7 96.3 243.1 96.8 243.1 C97.2 243.1 97.7 243.3 98.2 243.5 C98.7 243.6 99.2 243.9 99.7 243.9 C100.2 243.9 100.7 243.4 101.2 243.4 C101.6 243.4 102.1 243.7 102.6 243.7 C103.1 243.7 103.6 243.2 104.1 243.1 C104.6 243.1 105.1 243.1 105.5 243.1 C106.0 243.2 106.5 243.5 107.0 243.6 C107.5 243.6 108.0 243.4 108.5 243.4 C109.0 243.4 109.5 243.4 109.9 243.3 C110.4 243.3 110.9 243.3 111.4 243.2 C111.9 243.2 112.4 243.0 112.9 243.0 C113.4 243.2 113.9 244.0 114.3 244.1 C114.8 244.1 115.3 243.8 115.8 243.7 C116.3 243.6 116.8 243.5 117.3 243.5 C117.8 243.5 118.3 243.8 118.7 243.8 C119.2 243.8 119.7 243.5 120.2 243.5 C120.7 243.5 121.2 244.0 121.7 244.0 C122.2 244.0 122.6 243.2 123.1 243.1 C123.6 243.1 124.1 243.4 124.6 243.5 C125.1 243.7 125.6 244.0 126.1 244.0 C126.6 244.0 127.0 243.4 127.5 243.4 C128.0 243.4 128.5 243.7 129.0 243.8 C129.5 243.9 130.0 243.9 130.5 243.9 C131.0 243.9 131.4 243.6 131.9 243.6 C132.4 243.6 132.9 243.9 133.4 244.0 C133.9 244.0 134.4 244.0 134.9 243.9 C135.3 243.8 135.8 243.3 136.3 243.2 C136.8 243.2 137.3 243.2 137.8 243.3 C138.3 243.5 138.8 244.1 139.3 244.1 C139.7 244.1 140.2 243.3 140.7 243.3 C141.2 243.3 141.7 244.0 142.2 244.1 C142.7 244.1 143.2 243.9 143.7 243.8 C144.1 243.6 144.6 243.2 145.1 243.1 C145.6 243.1 146.1 243.3 146.6 243.4 C147.1 243.5 147.6 243.7 148.1 243.8 C148.5 243.8 149.0 243.7 149.5 243.7 C150.0 243.7 150.5 243.7 151.0 243.7 C151.5 243.7 152.0 244.0 152.4 244.0 C152.9 243.9 153.4 243.0 153.9 243.0 C154.4 243.0 154.9 244.0 155.4 244.1 C155.9 244.1 156.4 243.8 156.8 243.7 C157.3 243.5 157.8 243.3 158.3 243.3 C158.8 243.3 159.3 243.7 159.8 243.7 C160.3 243.6 160.8 243.0 161.2 243.0 C161.7 243.1 162.2 243.9 162.7 243.9 C163.2 243.9 163.7 243.2 164.2 243.0 C164.7 243.0 165.2 243.1 165.6 243.1 C166.1 243.2 166.6 243.4 167.1 243.4 C167.6 243.4 168.1 243.1 168.6 243.1 C169.1 243.2 169.5 243.6 170.0 243.6 C170.5 243.6 171.0 243.3 171.5 243.2 C172.0 243.2 172.5 243.2 173.0 243.2 C173.5 243.3 173.9 243.5 174.4 243.6 C174.9 243.6 175.4 243.6 175.9 243.6 C176.4 243.6 176.9 243.3 177.4 243.3 C177.9 243.4 178.3 243.6 178.8 243.7 C179.3 243.8 179.8 244.0 180.3 244.0 C180.8 244.0 181.3 243.3 181.8 243.3 C182.3 243.3 182.7 243.8 183.2 243.8 C183.7 243.8 184.2 243.7 184.7 243.6 C185.2 243.5 185.7 243.3 186.2 243.3 C186.6 243.3 187.1 243.8 187.6 243.9 C188.1 244.1 188.6 244.1 189.1 244.1 C189.6 244.1 190.1 244.1 190.6 244.0 C191.0 243.9 191.5 243.5 192.0 243.5 C192.5 243.5 193.0 243.7 193.5 243.7 C194.0 243.8 194.5 243.8 195.0 243.8 C195.4 243.8 195.9 243.7 196.4 243.6 C196.9 243.5 197.4 243.1 197.9 243.1 C198.4 243.1 198.9 243.7 199.4 243.8 C199.8 243.8 200.3 243.8 200.8 243.7 C201.3 243.6 201.8 243.2 202.3 243.1 C202.8 243.1 203.3 243.3 203.7 243.4 C204.2 243.6 204.7 243.8 205.2 243.8 C205.7 243.8 206.2 243.6 206.7 243.6 C207.2 243.6 207.7 243.6 208.1 243.6 C208.6 243.7 209.1 243.9 209.6 244.0 C210.1 244.0 210.6 243.7 211.1 243.7 C211.6 243.7 212.1 243.8 212.5 243.8 C213.0 243.7 213.5 243.2 214.0 243.2 C214.5 243.2 215.0 243.7 215.5 243.8 C216.0 243.8 216.5 243.5 216.9 243.4 C217.4 243.3 217.9 243.1 218.4 243.0 C218.9 243.0 219.4 243.0 219.9 243.1 C220.4 243.2 220.8 243.6 221.3 243.7 C221.8 243.7 222.3 243.5 222.8 243.5 C223.3 243.5 223.8 243.7 224.3 243.8 C224.8 243.8 225.2 243.7 225.7 243.7 C226.2 243.7 226.7 243.7 227.2 243.6 C227.7 243.5 228.2 243.3 228.7 243.2 C229.2 243.2 229.6 243.1 230.1 243.1 C230.6 243.2 231.1 243.6 231.6 243.8 C232.1 244.0 232.6 244.1 233.1 244.1 C233.5 244.1 234.0 243.6 234.5 243.6 C235.0 243.6 235.5 244.0 236.0 244.1 C236.5 244.1 237.0 244.1 237.5 244.1 C237.9 244.0 238.4 243.3 238.9 243.3 C239.4 243.3 239.9 244.0 240.4 244.0 C240.9 244.0 241.4 243.4 241.9 243.3 C242.3 243.3 242.8 243.7 243.3 243.7 C243.8 243.7 244.3 243.2 244.8 243.1 C245.3 243.1 245.8 243.1 246.3 243.2 C246.7 243.3 247.2 243.9 247.7 244.1 C248.2 244.1 248.7 244.1 249.2 243.9 C249.7 243.7 250.2 243.1 250.6 243.1 C251.1 243.1 251.6 243.3 252.1 243.4 C252.6 243.5 253.1 243.7 253.6 243.7 C254.1 243.6 254.6 243.3 255.0 243.3 C255.5 243.2 256.0 243.2 256.5 243.2 C257.0 243.3 257.5 243.5 258.0 243.6 C258.5 243.6 259.0 243.6 259.4 243.6 C259.9 243.7 260.4 244.0 260.9 244.0 C261.4 244.0 261.9 243.7 262.4 243.7 C262.9 243.7 263.4 244.0 263.8 244.0 C264.3 243.9 264.8 243.5 265.3 243.4 C265.8 243.4 266.3 243.4 266.8 243.4 C267.3 243.5 267.7 244.0 268.2 244.0 C268.7 244.0 269.2 243.4 269.7 243.4 C270.2 243.4 270.7 243.9 271.2 244.0 C271.7 244.0 272.1 244.0 272.6 244.0 C273.1 243.9 273.6 243.5 274.1 243.4 C274.6 243.4 275.1 243.6 275.6 243.6 C276.1 243.6 276.5 243.2 277.0 243.1 C277.5 243.1 278.0 243.4 278.5 243.4 C279.0 243.4 279.5 243.3 280.0 243.3 C280.5 243.4 280.9 244.0 281.4 244.0 C281.9 244.0 282.4 243.2 282.9 243.2 C283.4 243.2 283.9 244.0 284.4 244.0 C284.8 244.0 285.3 243.6 285.8 243.4 C286.3 243.3 286.8 243.2 287.3 243.1 C287.8 243.1 288.3 243.1 288.8 243.1 C289.2 243.1 289.7 243.1 290.2 243.1 C290.7 243.2 291.2 243.6 291.7 243.6 C292.2 243.6 292.7 243.4 293.2 243.4 C293.6 243.3 294.1 243.2 294.6 243.2 C295.1 243.3 295.6 244.0 296.1 244.0 C296.6 243.9 297.1 243.2 297.6 243.1 C298.0 243.1 298.5 243.1 299.0 243.1 C299.5 243.2 300.0 243.6 300.5 243.6 C301.0 243.6 301.5 243.3 301.9 243.3 C302.4 243.3 302.9 243.5 303.4 243.6 C303.9 243.7 304.4 243.8 304.9 243.8 C305.4 243.8 305.9 243.3 306.3 243.3 C306.8 243.4 307.3 244.1 307.8 244.1 C308.3 244.0 308.8 243.4 309.3 243.2 C309.8 243.1 310.3 243.0 310.7 243.0 C311.2 243.1 311.7 243.8 312.2 243.8 C312.7 243.8 313.2 243.1 313.7 243.1 C314.2 243.1 314.6 244.0 315.1 244.0 C315.6 244.0 316.1 243.2 316.6 243.2 C317.1 243.2 317.6 243.8 318.1 243.8 C318.6 243.8 319.0 243.1 319.5 243.0 C320.0 243.0 320.5 243.6 321.0 243.6 C321.5 243.6 322.0 243.1 322.5 243.1 C323.0 243.2 323.4 243.9 323.9 244.1 C324.4 244.1 324.9 244.1 325.4 244.0 C325.9 243.9 326.4 243.3 326.9 243.2 C327.4 243.2 327.8 243.4 328.3 243.4 C328.8 243.5 329.3 243.4 329.8 243.5 C330.3 243.6 330.8 244.0 331.3 244.1 C331.7 244.1 332.2 244.0 332.7 243.9 C333.2 243.9 333.7 243.7 334.2 243.7 C334.7 243.7 335.2 244.1 335.7 244.1 C336.1 244.0 336.6 243.2 337.1 243.0 C337.6 243.0 338.1 243.3 338.6 243.3 C339.1 243.3 339.6 243.1 340.1 243.1 C340.5 243.1 341.0 243.2 341.5 243.3 C342.0 243.5 342.5 243.6 343.0 243.7 C343.5 243.9 344.0 244.0 344.5 244.0 C344.9 244.0 345.4 243.3 345.9 243.3 C346.4 243.3 346.9 244.0 347.4 244.0 C347.9 244.0 348.4 243.6 348.8 243.5 C349.3 243.5 349.8 243.6 350.3 243.6 C350.8 243.6 351.3 243.6 351.8 243.6 C352.3 243.6 352.8 244.0 353.2 244.0 C353.7 244.0 354.2 244.0 354.7 244.0 C355.2 244.0 355.7 243.5 356.2 243.5 C356.7 243.6 357.2 244.1 357.6 244.1 C358.1 244.1 358.6 243.6 359.1 243.5 C359.6 243.5 360.1 243.9 360.6 244.0 C361.1 244.0 361.6 243.8 362.0 243.8 C362.5 243.8 363.0 244.0 363.5 244.0 C364.0 243.9 364.5 243.5 365.0 243.5 C365.5 243.5 365.9 243.6 366.4 243.7 C366.9 243.8 367.4 243.8 367.9 243.9 C368.4 243.9 368.9 243.9 369.4 243.9 C369.9 243.8 370.3 243.6 370.8 243.5 C371.3 243.4 371.8 243.1 372.3 243.1 C372.8 243.1 373.3 243.5 373.8 243.7 C374.3 243.8 374.7 243.9 375.2 243.9 C375.7 243.9 376.2 243.8 376.7 243.8 C377.2 243.8 377.7 243.9 378.2 243.9 C378.7 243.8 379.1 243.6 379.6 243.5 C380.1 243.4 380.6 243.2 381.1 243.2 C381.6 243.2 382.1 243.4 382.6 243.5 C383.0 243.6 383.5 243.9 384.0 243.9 C384.5 243.9 385.0 243.8 385.5 243.8 C386.0 243.7 386.5 243.7 387.0 243.7 C387.4 243.7 387.9 243.6 388.4 243.6 C388.9 243.6 389.4 243.7 389.9 243.7 C390.4 243.6 390.9 243.0 391.4 243.0 C391.8 243.0 392.3 243.4 392.8 243.5 C393.3 243.5 393.8 243.4 394.3 243.4 C394.8 243.4 395.3 243.3 395.8 243.3 C396.2 243.3 396.7 243.4 397.2 243.4 C397.7 243.4 398.2 243.2 398.7 243.2 C399.2 243.3 399.7 243.7 400.1 243.7 C400.6 243.7 401.1 243.5 401.6 243.4 C402.1 243.3 402.6 243.0 403.1 243.0 C403.6 243.1 404.1 243.9 404.5 243.9 C405.0 243.9 405.5 243.5 406.0 243.4 C406.5 243.4 407.0 243.6 407.5 243.7 C408.0 243.8 408.5 244.0 408.9 244.1 C409.4 244.1 409.9 244.1 410.4 244.1 C410.9 244.0 411.4 243.3 411.9 243.3 C412.4 243.3 412.8 244.0 413.3 244.0 C413.8 244.0 414.3 243.3 414.8 243.3 C415.3 243.3 415.8 244.0 416.3 244.0 C416.8 244.0 417.2 243.7 417.7 243.7 C418.2 243.7 418.7 244.1 419.2 244.1 C419.7 244.1 420.2 243.7 420.7 243.5 C421.2 243.4 421.6 243.2 422.1 243.2 C422.6 243.3 423.1 243.8 423.6 243.9 C424.1 243.9 424.6 243.6 425.1 243.5 C425.6 243.4 426.0 243.1 426.5 243.1 C427.0 243.1 427.5 243.7 428.0 243.8 C428.5 243.8 429.0 243.7 429.5 243.6 C429.9 243.5 430.4 243.4 430.9 243.3 C431.4 243.2 431.9 243.2 432.4 243.2 C432.9 243.3 433.4 243.9 433.9 243.9 C434.3 243.9 434.8 243.4 435.3 243.4 C435.8 243.4 436.3 243.9 436.8 244.0 C437.3 244.0 437.8 244.0 438.3 244.0 C438.7 243.8 439.2 243.0 439.7 243.0 C440.2 243.0 440.7 244.1 441.2 244.1 C441.7 244.1 442.2 243.2 442.7 243.1 C443.1 243.1 443.6 243.2 444.1 243.3 C444.6 243.3 445.1 243.4 445.6 243.4 C446.1 243.4 446.6 243.3 447.0 243.3 C447.5 243.3 448.0 243.3 448.5 243.4 C449.0 243.5 449.5 243.8 450.0 243.8 C450.5 243.8 451.0 243.6 451.4 243.6 C451.9 243.6 452.4 243.9 452.9 243.9 C453.4 243.8 453.9 243.3 454.4 243.2 C454.9 243.2 455.4 243.2 455.8 243.3 C456.3 243.3 456.8 243.2 457.3 243.2 C457.8 243.4 458.3 243.9 458.8 243.9 C459.3 243.9 459.8 243.5 460.2 243.5 C460.7 243.5 461.2 243.8 461.7 243.8 C462.2 243.8 462.7 243.3 463.2 243.2 C463.7 243.2 464.1 243.3 464.6 243.3 C465.1 243.3 465.6 243.0 466.1 243.0 C466.6 243.0 467.1 243.3 467.6 243.3 C468.1 243.4 468.5 243.4 469.0 243.4 C469.5 243.4 470.0 243.3 470.5 243.3 C471.0 243.4 471.5 244.0 472.0 244.0 C472.5 244.0 472.9 243.5 473.4 243.5 C473.9 243.5 474.4 244.0 474.9 244.1 C475.4 244.1 475.9 243.7 476.4 243.7 C476.9 243.7 477.3 244.0 477.8 244.0 C478.3 243.9 478.8 243.1 479.3 243.1 C479.8 243.1 480.3 244.1 480.8 244.1 C481.2 244.1 481.7 243.3 482.2 243.1 C482.7 243.1 483.2 243.1 483.7 243.1 C484.2 243.2 484.7 243.6 485.2 243.6 C485.6 243.6 486.1 243.2 486.6 243.2 C487.1 243.3 487.6 243.9 488.1 244.1 C488.6 244.1 489.1 244.0 489.6 244.0 C490.0 244.0 490.5 244.1 491.0 244.1 C491.5 244.1 492.0 244.1 492.5 244.1 C493.0 244.1 493.5 244.1 494.0 244.1 C494.4 244.0 494.9 243.2 495.4 243.2 C495.9 243.2 496.4 244.0 496.9 244.0 C497.4 244.0 497.9 243.5 498.3 243.5 C498.8 243.5 499.3 243.7 499.8 243.8 C500.3 243.9 500.8 244.0 501.3 244.0 C501.8 244.0 502.3 243.7 502.7 243.7 C503.2 243.7 503.7 243.9 504.2 243.9 C504.7 243.8 505.3 243.1 505.7 243.0 C506.1 243.0 506.1 243.6 506.6 243.6 C507.0 242.7 508.1 239.2 508.6 237.7 C509.1 236.3 509.1 235.0 509.6 234.6 C510.1 234.6 511.0 235.3 511.5 235.6 C512.1 236.0 512.7 236.6 513.2 236.7 C513.6 236.7 514.0 236.5 514.5 236.4 C514.9 236.3 515.4 236.2 515.9 236.1 C516.4 236.1 516.8 236.1 517.4 236.1 C518.0 236.0 518.8 235.8 519.3 235.7 C519.8 235.7 519.9 235.9 520.3 236.0 C520.7 236.1 521.3 236.2 521.8 236.2 C522.3 236.1 522.8 235.4 523.3 235.4 C523.8 235.4 524.2 236.1 524.7 236.1 C525.2 236.1 525.7 236.0 526.2 235.9 C526.7 235.8 527.2 235.5 527.7 235.5 C528.1 235.5 528.6 235.8 529.1 235.8 C529.6 235.7 530.1 235.4 530.6 235.4 C531.1 235.4 531.6 235.4 532.1 235.5 C532.5 235.6 533.0 235.7 533.5 235.9 C534.0 236.0 534.5 236.3 535.0 236.3 C535.5 236.3 536.0 235.9 536.5 235.8 C536.9 235.8 537.4 236.0 537.9 236.0 C538.4 235.9 538.9 235.6 539.4 235.5 C539.9 235.5 540.4 235.9 540.9 235.9 C541.3 235.9 541.8 235.8 542.3 235.8 C542.8 235.7 543.3 235.7 543.8 235.7 C544.3 235.7 544.8 236.0 545.2 236.0 C545.7 236.0 546.2 235.7 546.7 235.6 C547.2 235.6 547.7 235.6 548.2 235.6 C548.7 235.7 549.2 236.4 549.6 236.4 C550.1 236.4 550.6 235.7 551.1 235.6 C551.6 235.6 552.1 235.7 552.6 235.7 C553.1 235.7 553.6 235.7 554.0 235.7 C554.5 235.8 555.0 236.2 555.5 236.3 C556.0 236.4 556.5 236.4 557.0 236.4 C557.5 236.5 558.0 236.6 558.4 236.6 C558.9 236.5 559.4 236.4 559.9 236.3 C560.4 236.2 560.9 235.8 561.4 235.8 C561.9 235.8 562.3 236.2 562.8 236.3 C563.3 236.5 563.8 236.7 564.3 236.8 C564.8 236.8 565.3 236.4 565.8 236.4 C566.3 236.4 566.7 236.7 567.2 236.7 C567.7 236.6 568.2 236.2 568.7 236.1 C569.2 236.0 569.7 236.0 570.2 236.0 C570.7 235.9 571.1 235.8 571.6 235.8 C572.1 235.9 572.7 236.7 573.1 236.8 C573.5 236.8 573.9 236.4 574.1 236.3" fill="none" stroke="#73bf69" stroke-width="1.05" stroke-linejoin="round"/><path d="M48.39 208.75 C48.6 208.8 49.4 208.8 49.9 208.8 C50.3 208.8 50.8 208.9 51.3 208.9 C51.8 208.8 52.3 208.7 52.8 208.7 C53.3 208.7 53.8 208.9 54.3 208.9 C54.7 208.9 55.2 208.8 55.7 208.7 C56.2 208.7 56.7 208.8 57.2 208.8 C57.7 208.8 58.2 208.9 58.6 208.9 C59.1 208.9 59.6 208.7 60.1 208.7 C60.6 208.7 61.1 208.9 61.6 208.9 C62.1 208.9 62.6 208.8 63.0 208.8 C63.5 208.8 64.0 208.9 64.5 208.9 C65.0 208.9 65.5 208.9 66.0 208.9 C66.5 208.9 67.0 208.8 67.4 208.8 C67.9 208.7 68.4 208.7 68.9 208.7 C69.4 208.7 69.9 208.8 70.4 208.9 C70.9 208.9 71.3 208.9 71.8 208.8 C72.3 208.8 72.8 208.7 73.3 208.7 C73.8 208.7 74.3 208.6 74.8 208.6 C75.3 208.6 75.7 208.7 76.2 208.7 C76.7 208.8 77.2 208.8 77.7 208.8 C78.2 208.8 78.7 208.6 79.2 208.6 C79.7 208.6 80.1 208.9 80.6 208.9 C81.1 208.9 81.6 208.7 82.1 208.6 C82.6 208.6 83.1 208.8 83.6 208.8 C84.1 208.8 84.5 208.8 85.0 208.9 C85.5 208.9 86.0 208.9 86.5 208.9 C87.0 208.9 87.5 208.8 88.0 208.8 C88.4 208.8 88.9 208.7 89.4 208.7 C89.9 208.7 90.4 208.8 90.9 208.8 C91.4 208.8 91.9 208.7 92.4 208.7 C92.8 208.7 93.3 208.7 93.8 208.7 C94.3 208.7 94.8 208.8 95.3 208.8 C95.8 208.8 96.3 208.7 96.8 208.7 C97.2 208.8 97.7 208.9 98.2 208.9 C98.7 208.9 99.2 208.9 99.7 208.9 C100.2 208.9 100.7 208.9 101.2 208.8 C101.6 208.8 102.1 208.7 102.6 208.7 C103.1 208.7 103.6 208.8 104.1 208.8 C104.6 208.8 105.1 208.8 105.5 208.8 C106.0 208.8 106.5 208.7 107.0 208.7 C107.5 208.7 108.0 208.7 108.5 208.8 C109.0 208.8 109.5 208.8 109.9 208.8 C110.4 208.8 110.9 208.7 111.4 208.7 C111.9 208.7 112.4 208.7 112.9 208.7 C113.4 208.7 113.9 208.8 114.3 208.8 C114.8 208.8 115.3 208.7 115.8 208.7 C116.3 208.7 116.8 208.7 117.3 208.7 C117.8 208.7 118.3 208.6 118.7 208.6 C119.2 208.6 119.7 208.7 120.2 208.7 C120.7 208.7 121.2 208.8 121.7 208.8 C122.2 208.8 122.6 208.6 123.1 208.6 C123.6 208.6 124.1 208.8 124.6 208.9 C125.1 208.9 125.6 208.8 126.1 208.8 C126.6 208.7 127.0 208.7 127.5 208.7 C128.0 208.7 128.5 208.8 129.0 208.9 C129.5 208.9 130.0 208.8 130.5 208.8 C131.0 208.8 131.4 208.9 131.9 208.9 C132.4 208.9 132.9 208.7 133.4 208.7 C133.9 208.7 134.4 208.7 134.9 208.7 C135.3 208.7 135.8 208.7 136.3 208.7 C136.8 208.7 137.3 208.6 137.8 208.6 C138.3 208.7 138.8 208.8 139.3 208.8 C139.7 208.8 140.2 208.7 140.7 208.7 C141.2 208.7 141.7 208.7 142.2 208.7 C142.7 208.7 143.2 208.7 143.7 208.7 C144.1 208.7 144.6 208.8 145.1 208.8 C145.6 208.7 146.1 208.7 146.6 208.6 C147.1 208.6 147.6 208.6 148.1 208.6 C148.5 208.6 149.0 208.7 149.5 208.8 C150.0 208.8 150.5 208.7 151.0 208.7 C151.5 208.7 152.0 208.9 152.4 208.9 C152.9 208.9 153.4 208.7 153.9 208.7 C154.4 208.7 154.9 208.7 155.4 208.7 C155.9 208.7 156.4 208.6 156.8 208.6 C157.3 208.6 157.8 208.6 158.3 208.7 C158.8 208.7 159.3 208.8 159.8 208.8 C160.3 208.8 160.8 208.8 161.2 208.8 C161.7 208.8 162.2 208.7 162.7 208.7 C163.2 208.7 163.7 208.9 164.2 208.9 C164.7 208.9 165.2 208.8 165.6 208.8 C166.1 208.8 166.6 208.8 167.1 208.8 C167.6 208.9 168.1 208.9 168.6 208.9 C169.1 208.9 169.5 208.9 170.0 208.9 C170.5 208.8 171.0 208.7 171.5 208.7 C172.0 208.7 172.5 208.8 173.0 208.9 C173.5 208.9 173.9 208.8 174.4 208.8 C174.9 208.8 175.4 208.8 175.9 208.8 C176.4 208.8 176.9 208.6 177.4 208.6 C177.9 208.7 178.3 208.9 178.8 208.9 C179.3 208.9 179.8 208.8 180.3 208.8 C180.8 208.7 181.3 208.8 181.8 208.7 C182.3 208.7 182.7 208.6 183.2 208.6 C183.7 208.6 184.2 208.7 184.7 208.7 C185.2 208.7 185.7 208.6 186.2 208.6 C186.6 208.7 187.1 208.8 187.6 208.8 C188.1 208.8 188.6 208.8 189.1 208.8 C189.6 208.8 190.1 208.8 190.6 208.8 C191.0 208.8 191.5 208.7 192.0 208.6 C192.5 208.6 193.0 208.6 193.5 208.6 C194.0 208.6 194.5 208.8 195.0 208.9 C195.4 208.9 195.9 208.9 196.4 208.8 C196.9 208.8 197.4 208.8 197.9 208.8 C198.4 208.8 198.9 208.8 199.4 208.8 C199.8 208.8 200.3 208.8 200.8 208.8 C201.3 208.7 201.8 208.7 202.3 208.7 C202.8 208.7 203.3 208.8 203.7 208.8 C204.2 208.8 204.7 208.9 205.2 208.9 C205.7 208.9 206.2 208.8 206.7 208.8 C207.2 208.8 207.7 208.8 208.1 208.8 C208.6 208.8 209.1 208.8 209.6 208.7 C210.1 208.7 210.6 208.6 211.1 208.6 C211.6 208.6 212.1 208.7 212.5 208.7 C213.0 208.7 213.5 208.7 214.0 208.7 C214.5 208.7 215.0 208.7 215.5 208.7 C216.0 208.7 216.5 208.7 216.9 208.7 C217.4 208.7 217.9 208.9 218.4 208.9 C218.9 208.9 219.4 208.7 219.9 208.6 C220.4 208.6 220.8 208.7 221.3 208.7 C221.8 208.7 222.3 208.6 222.8 208.6 C223.3 208.6 223.8 208.6 224.3 208.7 C224.8 208.7 225.2 208.8 225.7 208.8 C226.2 208.8 226.7 208.8 227.2 208.8 C227.7 208.8 228.2 208.9 228.7 208.9 C229.2 208.9 229.6 208.7 230.1 208.7 C230.6 208.7 231.1 208.9 231.6 208.9 C232.1 208.9 232.6 208.9 233.1 208.9 C233.5 208.9 234.0 208.8 234.5 208.8 C235.0 208.8 235.5 208.9 236.0 208.9 C236.5 208.8 237.0 208.8 237.5 208.8 C237.9 208.8 238.4 208.9 238.9 208.9 C239.4 208.9 239.9 208.9 240.4 208.9 C240.9 208.9 241.4 208.9 241.9 208.9 C242.3 208.9 242.8 208.9 243.3 208.9 C243.8 208.9 244.3 208.8 244.8 208.8 C245.3 208.8 245.8 208.9 246.3 208.9 C246.7 208.9 247.2 208.7 247.7 208.6 C248.2 208.6 248.7 208.7 249.2 208.7 C249.7 208.8 250.2 208.8 250.6 208.9 C251.1 208.9 251.6 208.8 252.1 208.8 C252.6 208.8 253.1 208.8 253.6 208.8 C254.1 208.8 254.6 208.8 255.0 208.8 C255.5 208.8 256.0 208.9 256.5 208.9 C257.0 208.8 257.5 208.7 258.0 208.6 C258.5 208.6 259.0 208.6 259.4 208.6 C259.9 208.6 260.4 208.7 260.9 208.8 C261.4 208.8 261.9 208.8 262.4 208.8 C262.9 208.8 263.4 208.9 263.8 208.9 C264.3 208.9 264.8 208.9 265.3 208.9 C265.8 208.9 266.3 208.8 266.8 208.8 C267.3 208.8 267.7 208.8 268.2 208.8 C268.7 208.8 269.2 208.7 269.7 208.7 C270.2 208.7 270.7 208.8 271.2 208.9 C271.7 208.9 272.1 208.9 272.6 208.9 C273.1 208.9 273.6 208.6 274.1 208.6 C274.6 208.6 275.1 208.7 275.6 208.7 C276.1 208.8 276.5 208.9 277.0 208.9 C277.5 208.9 278.0 208.7 278.5 208.7 C279.0 208.7 279.5 208.9 280.0 208.9 C280.5 208.9 280.9 208.8 281.4 208.7 C281.9 208.7 282.4 208.6 282.9 208.6 C283.4 208.6 283.9 208.6 284.4 208.6 C284.8 208.7 285.3 208.7 285.8 208.7 C286.3 208.7 286.8 208.8 287.3 208.8 C287.8 208.8 288.3 208.8 288.8 208.8 C289.2 208.8 289.7 208.8 290.2 208.8 C290.7 208.8 291.2 208.7 291.7 208.7 C292.2 208.7 292.7 208.7 293.2 208.7 C293.6 208.7 294.1 208.7 294.6 208.7 C295.1 208.7 295.6 208.8 296.1 208.8 C296.6 208.8 297.1 208.8 297.6 208.8 C298.0 208.8 298.5 208.7 299.0 208.7 C299.5 208.6 300.0 208.6 300.5 208.6 C301.0 208.6 301.5 208.6 301.9 208.6 C302.4 208.7 302.9 208.7 303.4 208.7 C303.9 208.7 304.4 208.7 304.9 208.7 C305.4 208.7 305.9 208.7 306.3 208.7 C306.8 208.7 307.3 208.8 307.8 208.8 C308.3 208.8 308.8 208.8 309.3 208.7 C309.8 208.7 310.3 208.8 310.7 208.8 C311.2 208.8 311.7 208.9 312.2 208.9 C312.7 208.9 313.2 208.9 313.7 208.9 C314.2 208.9 314.6 208.8 315.1 208.8 C315.6 208.8 316.1 208.8 316.6 208.8 C317.1 208.8 317.6 208.7 318.1 208.7 C318.6 208.7 319.0 208.6 319.5 208.6 C320.0 208.6 320.5 208.8 321.0 208.8 C321.5 208.8 322.0 208.6 322.5 208.6 C323.0 208.6 323.4 208.6 323.9 208.6 C324.4 208.6 324.9 208.6 325.4 208.6 C325.9 208.6 326.4 208.8 326.9 208.8 C327.4 208.8 327.8 208.8 328.3 208.8 C328.8 208.8 329.3 208.8 329.8 208.8 C330.3 208.8 330.8 208.8 331.3 208.8 C331.7 208.8 332.2 208.8 332.7 208.8 C333.2 208.8 333.7 208.7 334.2 208.7 C334.7 208.7 335.2 208.6 335.7 208.6 C336.1 208.6 336.6 208.6 337.1 208.6 C337.6 208.7 338.1 208.7 338.6 208.8 C339.1 208.8 339.6 208.7 340.1 208.7 C340.5 208.7 341.0 208.7 341.5 208.7 C342.0 208.7 342.5 208.9 343.0 208.9 C343.5 208.9 344.0 208.7 344.5 208.7 C344.9 208.7 345.4 208.6 345.9 208.6 C346.4 208.6 346.9 208.7 347.4 208.7 C347.9 208.7 348.4 208.7 348.8 208.7 C349.3 208.7 349.8 208.7 350.3 208.8 C350.8 208.8 351.3 208.8 351.8 208.8 C352.3 208.8 352.8 208.7 353.2 208.7 C353.7 208.7 354.2 208.8 354.7 208.8 C355.2 208.8 355.7 208.7 356.2 208.7 C356.7 208.6 357.2 208.6 357.6 208.6 C358.1 208.6 358.6 208.8 359.1 208.8 C359.6 208.8 360.1 208.8 360.6 208.8 C361.1 208.8 361.6 208.6 362.0 208.6 C362.5 208.6 363.0 208.6 363.5 208.7 C364.0 208.7 364.5 208.8 365.0 208.8 C365.5 208.9 365.9 208.9 366.4 208.9 C366.9 208.9 367.4 208.9 367.9 208.9 C368.4 208.8 368.9 208.7 369.4 208.6 C369.9 208.6 370.3 208.6 370.8 208.7 C371.3 208.7 371.8 208.9 372.3 208.9 C372.8 208.9 373.3 208.7 373.8 208.7 C374.3 208.6 374.7 208.6 375.2 208.6 C375.7 208.6 376.2 208.7 376.7 208.7 C377.2 208.7 377.7 208.8 378.2 208.8 C378.7 208.8 379.1 208.7 379.6 208.7 C380.1 208.7 380.6 208.8 381.1 208.9 C381.6 208.9 382.1 208.9 382.6 208.9 C383.0 208.9 383.5 208.6 384.0 208.6 C384.5 208.6 385.0 208.7 385.5 208.7 C386.0 208.7 386.5 208.7 387.0 208.7 C387.4 208.7 387.9 208.6 388.4 208.6 C388.9 208.6 389.4 208.8 389.9 208.8 C390.4 208.8 390.9 208.7 391.4 208.6 C391.8 208.6 392.3 208.6 392.8 208.7 C393.3 208.7 393.8 208.8 394.3 208.8 C394.8 208.8 395.3 208.8 395.8 208.8 C396.2 208.8 396.7 208.8 397.2 208.8 C397.7 208.8 398.2 208.8 398.7 208.8 C399.2 208.8 399.7 208.7 400.1 208.7 C400.6 208.7 401.1 208.8 401.6 208.8 C402.1 208.8 402.6 208.8 403.1 208.8 C403.6 208.8 404.1 208.9 404.5 208.9 C405.0 208.8 405.5 208.6 406.0 208.6 C406.5 208.6 407.0 208.8 407.5 208.8 C408.0 208.8 408.5 208.8 408.9 208.8 C409.4 208.8 409.9 208.7 410.4 208.7 C410.9 208.7 411.4 208.6 411.9 208.6 C412.4 208.6 412.8 208.8 413.3 208.8 C413.8 208.8 414.3 208.6 414.8 208.6 C415.3 208.6 415.8 208.7 416.3 208.7 C416.8 208.7 417.2 208.7 417.7 208.7 C418.2 208.7 418.7 208.7 419.2 208.7 C419.7 208.8 420.2 208.9 420.7 208.9 C421.2 208.9 421.6 208.8 422.1 208.8 C422.6 208.8 423.1 208.8 423.6 208.8 C424.1 208.9 424.6 208.9 425.1 208.9 C425.6 208.9 426.0 208.7 426.5 208.7 C427.0 208.7 427.5 208.8 428.0 208.8 C428.5 208.8 429.0 208.8 429.5 208.8 C429.9 208.7 430.4 208.7 430.9 208.7 C431.4 208.7 431.9 208.7 432.4 208.7 C432.9 208.8 433.4 208.8 433.9 208.8 C434.3 208.8 434.8 208.8 435.3 208.7 C435.8 208.7 436.3 208.7 436.8 208.7 C437.3 208.7 437.8 208.7 438.3 208.7 C438.7 208.7 439.2 208.9 439.7 208.9 C440.2 208.9 440.7 208.7 441.2 208.7 C441.7 208.7 442.2 208.8 442.7 208.8 C443.1 208.8 443.6 208.8 444.1 208.8 C444.6 208.8 445.1 208.7 445.6 208.7 C446.1 208.7 446.6 208.7 447.0 208.7 C447.5 208.7 448.0 208.7 448.5 208.7 C449.0 208.7 449.5 208.7 450.0 208.7 C450.5 208.7 451.0 208.6 451.4 208.6 C451.9 208.6 452.4 208.8 452.9 208.8 C453.4 208.8 453.9 208.7 454.4 208.7 C454.9 208.7 455.4 208.7 455.8 208.7 C456.3 208.7 456.8 208.7 457.3 208.7 C457.8 208.7 458.3 208.7 458.8 208.7 C459.3 208.7 459.8 208.8 460.2 208.8 C460.7 208.8 461.2 208.7 461.7 208.7 C462.2 208.7 462.7 208.8 463.2 208.8 C463.7 208.7 464.1 208.6 464.6 208.6 C465.1 208.6 465.6 208.7 466.1 208.7 C466.6 208.7 467.1 208.6 467.6 208.6 C468.1 208.6 468.5 208.6 469.0 208.6 C469.5 208.6 470.0 208.8 470.5 208.8 C471.0 208.8 471.5 208.8 472.0 208.7 C472.5 208.7 472.9 208.6 473.4 208.6 C473.9 208.6 474.4 208.6 474.9 208.6 C475.4 208.7 475.9 208.8 476.4 208.9 C476.9 208.9 477.3 208.9 477.8 208.9 C478.3 208.8 478.8 208.8 479.3 208.8 C479.8 208.8 480.3 208.9 480.8 208.9 C481.2 208.9 481.7 208.8 482.2 208.8 C482.7 208.8 483.2 208.9 483.7 208.9 C484.2 208.9 484.7 208.7 485.2 208.7 C485.6 208.7 486.1 208.7 486.6 208.7 C487.1 208.7 487.6 208.6 488.1 208.6 C488.6 208.7 489.1 208.8 489.6 208.9 C490.0 208.9 490.5 208.7 491.0 208.7 C491.5 208.7 492.0 208.7 492.5 208.7 C493.0 208.7 493.5 208.9 494.0 208.9 C494.4 208.8 494.9 208.7 495.4 208.6 C495.9 208.6 496.4 208.6 496.9 208.6 C497.4 208.6 497.9 208.8 498.3 208.8 C498.8 208.8 499.3 208.6 499.8 208.6 C500.3 208.6 500.8 208.8 501.3 208.8 C501.8 208.8 502.3 208.8 502.7 208.8 C503.2 208.7 503.7 208.6 504.2 208.6 C504.7 208.6 505.3 208.6 505.7 208.7 C506.1 208.7 506.0 208.7 506.6 208.7 C507.1 208.5 508.1 207.5 508.8 207.4 C509.4 207.4 510.0 208.1 510.5 208.2 C511.0 208.2 511.1 208.2 511.5 208.1 C512.0 208.0 512.6 207.8 513.0 207.7 C513.4 207.6 513.5 207.5 514.0 207.4 C514.5 207.4 515.4 207.4 515.9 207.4 C516.5 207.4 516.9 207.5 517.4 207.5 C517.9 207.5 518.4 207.5 518.9 207.5 C519.4 207.5 519.8 207.5 520.3 207.5 C520.8 207.5 521.3 207.4 521.8 207.4 C522.3 207.4 522.8 207.6 523.3 207.6 C523.8 207.6 524.2 207.4 524.7 207.4 C525.2 207.4 525.7 207.4 526.2 207.4 C526.7 207.5 527.2 207.5 527.7 207.5 C528.1 207.5 528.6 207.5 529.1 207.4 C529.6 207.4 530.1 207.4 530.6 207.4 C531.1 207.4 531.6 207.4 532.1 207.4 C532.5 207.4 533.0 207.5 533.5 207.5 C534.0 207.5 534.5 207.3 535.0 207.2 C535.5 207.2 536.0 207.3 536.5 207.3 C536.9 207.3 537.4 207.2 537.9 207.2 C538.4 207.3 538.9 207.5 539.4 207.5 C539.9 207.5 540.4 207.4 540.9 207.4 C541.3 207.4 541.8 207.5 542.3 207.5 C542.8 207.5 543.3 207.3 543.8 207.3 C544.3 207.3 544.8 207.4 545.2 207.4 C545.7 207.4 546.2 207.5 546.7 207.5 C547.2 207.4 547.7 207.4 548.2 207.4 C548.7 207.3 549.2 207.2 549.6 207.2 C550.1 207.2 550.6 207.2 551.1 207.2 C551.6 207.3 552.1 207.4 552.6 207.4 C553.1 207.4 553.6 207.4 554.0 207.4 C554.5 207.4 555.0 207.2 555.5 207.2 C556.0 207.2 556.5 207.3 557.0 207.3 C557.5 207.3 558.0 207.2 558.4 207.2 C558.9 207.3 559.4 207.4 559.9 207.4 C560.4 207.4 560.9 207.4 561.4 207.4 C561.9 207.4 562.3 207.3 562.8 207.2 C563.3 207.2 563.8 207.3 564.3 207.3 C564.8 207.3 565.3 207.4 565.8 207.4 C566.3 207.4 566.7 207.2 567.2 207.2 C567.7 207.2 568.2 207.2 568.7 207.2 C569.2 207.2 569.7 207.2 570.2 207.2 C570.7 207.2 571.1 207.4 571.6 207.4 C572.1 207.4 572.7 207.2 573.1 207.2 C573.5 207.2 573.9 207.2 574.1 207.3" fill="none" stroke="#f2cc0c" stroke-width="1.05" stroke-linejoin="round"/><rect x="25.0" y="276" width="14" height="4" rx="1" fill="#73bf69"/><rect x="220.8" y="276" width="14" height="4" rx="1" fill="#f2cc0c"/></svg></div><div class="panel" style="left:631px;top:448px;width:608px;height:296px"><svg style="position:absolute;left:-1px;top:-1px" width="608" height="296" viewBox="0 0 608 296"><defs><linearGradient id="g631_512_0" x1="0" y1="58.3" x2="0" y2="244.5" gradientUnits="userSpaceOnUse"><stop offset="0" stop-color="#73bf69" stop-opacity="0.72"/><stop offset="1" stop-color="#73bf69" stop-opacity="0"/></linearGradient><linearGradient id="g631_512_1" x1="0" y1="58.3" x2="0" y2="244.5" gradientUnits="userSpaceOnUse"><stop offset="0" stop-color="#f2cc0c" stop-opacity="0.72"/><stop offset="1" stop-color="#f2cc0c" stop-opacity="0"/></linearGradient></defs><line x1="62.6" x2="574.2" y1="244.5" y2="244.5" stroke="#2f3237" stroke-width="1"/><line x1="62.6" x2="574.2" y1="207.3" y2="207.3" stroke="#2f3237" stroke-width="1"/><line x1="62.6" x2="574.2" y1="170.0" y2="170.0" stroke="#2f3237" stroke-width="1"/><line x1="62.6" x2="574.2" y1="132.8" y2="132.8" stroke="#2f3237" stroke-width="1"/><line x1="62.6" x2="574.2" y1="95.5" y2="95.5" stroke="#2f3237" stroke-width="1"/><line x1="62.6" x2="574.2" y1="58.3" y2="58.3" stroke="#2f3237" stroke-width="1"/><line x1="106.4" x2="106.4" y1="58.3" y2="248.5" stroke="#2f3237" stroke-width="1"/><line x1="190.9" x2="190.9" y1="58.3" y2="248.5" stroke="#2f3237" stroke-width="1"/><line x1="275.4" x2="275.4" y1="58.3" y2="248.5" stroke="#2f3237" stroke-width="1"/><line x1="360.0" x2="360.0" y1="58.3" y2="248.5" stroke="#2f3237" stroke-width="1"/><line x1="444.5" x2="444.5" y1="58.3" y2="248.5" stroke="#2f3237" stroke-width="1"/><line x1="529.0" x2="529.0" y1="58.3" y2="248.5" stroke="#2f3237" stroke-width="1"/><path d="M67.01 241.89 C67.2 241.9 68.0 242.0 68.4 242.0 C68.9 242.0 69.4 241.7 69.8 241.7 C70.3 241.7 70.8 242.1 71.2 242.1 C71.7 242.1 72.2 241.8 72.6 241.8 C73.1 241.8 73.6 242.1 74.1 242.1 C74.5 242.1 75.0 242.1 75.5 242.0 C75.9 241.9 76.4 241.6 76.9 241.6 C77.3 241.6 77.8 242.0 78.3 242.0 C78.8 242.0 79.2 241.8 79.7 241.8 C80.2 241.8 80.6 241.9 81.1 241.9 C81.6 241.9 82.0 241.9 82.5 241.9 C83.0 241.9 83.4 241.9 83.9 241.9 C84.4 241.9 84.9 242.1 85.3 242.1 C85.8 242.0 86.3 241.7 86.7 241.7 C87.2 241.7 87.7 242.1 88.1 242.1 C88.6 242.1 89.1 242.0 89.6 242.0 C90.0 242.0 90.5 242.1 91.0 242.1 C91.4 242.1 91.9 242.0 92.4 242.0 C92.8 242.0 93.3 242.0 93.8 241.9 C94.2 241.9 94.7 241.7 95.2 241.7 C95.7 241.7 96.1 241.9 96.6 242.0 C97.1 242.0 97.5 242.1 98.0 242.1 C98.5 242.1 98.9 242.1 99.4 242.0 C99.9 241.9 100.4 241.6 100.8 241.6 C101.3 241.7 101.8 242.1 102.2 242.1 C102.7 242.1 103.2 241.9 103.6 241.8 C104.1 241.8 104.6 242.0 105.0 242.0 C105.5 242.0 106.0 241.8 106.5 241.8 C106.9 241.8 107.4 242.0 107.9 242.0 C108.3 242.0 108.8 241.8 109.3 241.8 C109.7 241.8 110.2 241.9 110.7 241.9 C111.2 241.9 111.6 241.9 112.1 241.8 C112.6 241.8 113.0 241.7 113.5 241.7 C114.0 241.7 114.4 241.8 114.9 241.9 C115.4 241.9 115.8 242.0 116.3 242.1 C116.8 242.1 117.3 242.1 117.7 242.1 C118.2 242.1 118.7 241.7 119.1 241.7 C119.6 241.7 120.1 241.8 120.5 241.9 C121.0 242.0 121.5 242.1 122.0 242.1 C122.4 242.0 122.9 241.7 123.4 241.7 C123.8 241.7 124.3 241.8 124.8 241.9 C125.2 241.9 125.7 241.8 126.2 241.8 C126.6 241.7 127.1 241.7 127.6 241.7 C128.1 241.7 128.5 242.0 129.0 242.0 C129.5 242.0 129.9 242.0 130.4 242.0 C130.9 241.9 131.3 241.7 131.8 241.7 C132.3 241.7 132.8 242.1 133.2 242.1 C133.7 242.1 134.2 241.8 134.6 241.8 C135.1 241.8 135.6 242.1 136.0 242.1 C136.5 242.1 137.0 241.8 137.4 241.8 C137.9 241.8 138.4 241.8 138.9 241.8 C139.3 241.8 139.8 241.7 140.3 241.7 C140.7 241.7 141.2 241.7 141.7 241.7 C142.1 241.8 142.6 241.8 143.1 241.9 C143.6 241.9 144.0 242.0 144.5 242.1 C145.0 242.1 145.4 242.1 145.9 242.1 C146.4 242.0 146.8 241.9 147.3 241.9 C147.8 241.9 148.2 241.9 148.7 241.9 C149.2 241.9 149.7 242.1 150.1 242.1 C150.6 242.1 151.1 241.7 151.5 241.7 C152.0 241.7 152.5 241.9 152.9 241.9 C153.4 241.9 153.9 241.8 154.4 241.8 C154.8 241.8 155.3 242.0 155.8 242.0 C156.2 242.0 156.7 242.0 157.2 242.0 C157.6 242.0 158.1 242.1 158.6 242.1 C159.0 242.1 159.5 242.0 160.0 242.0 C160.5 242.0 160.9 242.0 161.4 242.0 C161.9 242.0 162.3 241.9 162.8 241.9 C163.3 241.9 163.7 242.0 164.2 242.0 C164.7 241.9 165.2 241.8 165.6 241.7 C166.1 241.7 166.6 241.7 167.0 241.7 C167.5 241.7 168.0 242.0 168.4 242.1 C168.9 242.1 169.4 241.9 169.8 241.9 C170.3 241.9 170.8 242.1 171.3 242.1 C171.7 242.0 172.2 241.9 172.7 241.8 C173.1 241.7 173.6 241.6 174.1 241.6 C174.5 241.7 175.0 242.0 175.5 242.0 C176.0 242.0 176.4 241.8 176.9 241.8 C177.4 241.8 177.8 241.9 178.3 242.0 C178.8 242.1 179.2 242.1 179.7 242.1 C180.2 242.1 180.6 241.8 181.1 241.8 C181.6 241.8 182.1 241.9 182.5 242.0 C183.0 242.0 183.5 242.1 183.9 242.1 C184.4 242.1 184.9 241.9 185.3 241.9 C185.8 241.9 186.3 242.0 186.8 242.0 C187.2 242.0 187.7 242.0 188.2 241.9 C188.6 241.9 189.1 241.9 189.6 241.9 C190.0 241.9 190.5 241.9 191.0 241.9 C191.4 241.9 191.9 241.8 192.4 241.8 C192.9 241.9 193.3 242.0 193.8 242.0 C194.3 242.0 194.7 242.1 195.2 242.1 C195.7 242.1 196.1 242.1 196.6 242.1 C197.1 242.1 197.6 242.1 198.0 242.1 C198.5 242.1 199.0 241.9 199.4 241.9 C199.9 241.9 200.4 242.0 200.8 242.0 C201.3 241.9 201.8 241.7 202.2 241.7 C202.7 241.7 203.2 241.9 203.7 241.9 C204.1 241.9 204.6 241.8 205.1 241.8 C205.5 241.7 206.0 241.6 206.5 241.6 C206.9 241.7 207.4 242.0 207.9 242.1 C208.4 242.1 208.8 242.1 209.3 242.1 C209.8 242.1 210.2 242.1 210.7 242.1 C211.2 242.0 211.6 242.0 212.1 242.0 C212.6 241.9 213.0 241.9 213.5 241.9 C214.0 241.8 214.5 241.8 214.9 241.8 C215.4 241.8 215.9 242.0 216.3 242.0 C216.8 242.0 217.3 241.7 217.7 241.7 C218.2 241.7 218.7 242.1 219.1 242.2 C219.6 242.2 220.1 241.7 220.6 241.7 C221.0 241.7 221.5 242.0 222.0 242.0 C222.4 242.0 222.9 241.7 223.4 241.7 C223.8 241.7 224.3 242.1 224.8 242.1 C225.3 242.1 225.8 241.7 226.2 241.7 C226.6 241.7 226.8 241.9 227.3 241.9 C227.7 241.7 228.5 241.0 229.0 240.6 C229.5 240.2 229.9 239.8 230.4 239.5 C230.9 239.2 231.4 239.0 231.8 238.7 C232.3 238.5 232.7 237.9 233.2 237.9 C233.6 238.0 234.2 238.9 234.6 239.3 C235.1 239.6 235.6 239.6 236.1 240.0 C236.5 240.4 237.1 241.1 237.5 241.5 C237.8 241.8 237.8 241.9 238.3 242.1 C238.7 242.2 239.7 242.3 240.3 242.3 C240.9 242.3 241.2 242.0 241.7 242.0 C242.2 242.0 242.6 242.0 243.1 242.0 C243.6 242.1 244.0 242.0 244.5 242.1 C245.0 242.1 245.4 242.2 245.9 242.2 C246.4 242.2 246.9 242.2 247.3 242.2 C247.8 242.2 248.3 242.0 248.7 242.0 C249.2 242.0 249.7 242.0 250.1 242.0 C250.6 242.1 251.1 242.2 251.5 242.2 C252.0 242.2 252.5 242.1 253.0 242.0 C253.4 242.0 253.9 241.9 254.4 241.9 C254.8 241.9 255.3 241.9 255.8 241.9 C256.2 241.9 256.7 241.9 257.2 242.0 C257.7 242.0 258.1 242.0 258.6 242.0 C259.1 242.0 259.5 242.0 260.0 242.0 C260.5 242.0 260.9 242.1 261.4 242.1 C261.9 242.1 262.3 242.1 262.8 242.1 C263.3 242.1 263.8 241.9 264.2 241.9 C264.7 241.9 265.2 242.1 265.6 242.1 C266.1 242.1 266.5 242.0 267.0 241.9 C267.5 241.8 268.0 241.6 268.5 241.5 C268.9 241.4 269.5 241.3 269.9 241.2 C270.2 241.2 270.2 241.1 270.7 241.1 C271.2 241.2 272.1 241.3 272.7 241.4 C273.2 241.5 273.6 241.8 274.1 241.9 C274.6 242.0 275.0 241.9 275.5 242.0 C275.9 242.0 276.3 242.1 276.8 242.1 C277.3 242.0 277.8 241.5 278.3 241.3 C278.8 241.0 279.3 241.0 279.7 240.7 C280.2 240.4 280.7 239.8 281.1 239.4 C281.6 239.1 282.1 239.0 282.5 238.8 C283.0 238.6 283.4 238.3 283.9 238.2 C284.4 238.0 284.9 238.1 285.4 238.0 C285.8 237.9 286.3 237.7 286.8 237.7 C287.2 237.7 287.7 237.8 288.2 237.8 C288.7 237.7 289.3 237.4 289.8 237.4 C290.3 237.4 290.6 237.7 291.0 237.7 C291.4 237.8 291.9 237.8 292.4 237.8 C292.9 237.8 293.3 237.8 293.8 237.9 C294.3 237.9 294.7 238.0 295.2 238.1 C295.7 238.3 296.3 238.6 296.6 238.7 C297.0 238.7 296.9 238.6 297.4 238.5 C297.9 238.5 298.9 238.3 299.4 238.1 C300.0 238.0 300.4 237.8 300.9 237.8 C301.3 237.7 301.7 237.7 302.3 237.6 C302.8 237.6 303.7 237.5 304.2 237.4 C304.6 237.4 304.7 237.4 305.1 237.4 C305.5 237.5 306.0 237.6 306.5 237.8 C307.0 237.9 307.4 238.3 307.9 238.5 C308.4 238.7 308.9 238.8 309.3 238.8 C309.7 238.9 309.6 238.9 310.1 238.9 C310.6 238.8 311.5 238.5 312.1 238.3 C312.7 238.0 313.1 237.7 313.5 237.6 C314.0 237.5 314.5 237.6 314.9 237.5 C315.4 237.3 315.9 236.9 316.3 236.8 C316.8 236.6 317.4 236.4 317.8 236.4 C318.1 236.3 318.1 236.3 318.5 236.3 C319.0 236.3 320.0 236.2 320.6 236.2 C321.1 236.1 321.5 236.1 322.0 236.0 C322.5 236.0 322.9 235.8 323.4 235.8 C323.9 235.8 324.3 235.8 324.8 235.8 C325.3 235.8 325.7 236.0 326.2 236.0 C326.7 235.9 327.1 235.6 327.6 235.6 C328.1 235.6 328.6 235.8 329.0 235.9 C329.5 235.9 330.1 235.7 330.4 235.7 C330.8 235.6 330.8 235.6 331.2 235.6 C331.7 235.6 332.7 235.6 333.3 235.6 C333.8 235.6 334.2 235.7 334.7 235.8 C335.1 235.9 335.6 236.2 336.1 236.3 C336.5 236.4 337.0 236.4 337.5 236.5 C337.9 236.5 338.4 236.5 338.9 236.5 C339.4 236.5 339.8 236.5 340.3 236.5 C340.8 236.6 341.2 236.7 341.7 236.8 C342.2 236.9 342.6 237.1 343.1 237.1 C343.5 237.0 344.0 236.8 344.5 236.7 C345.0 236.7 345.5 236.8 345.9 236.8 C346.4 236.8 346.9 236.7 347.3 236.6 C347.8 236.6 348.3 236.7 348.7 236.7 C349.2 236.7 349.7 236.7 350.2 236.7 C350.6 236.7 351.1 236.6 351.6 236.6 C352.0 236.6 352.5 236.5 353.0 236.5 C353.4 236.5 353.9 236.4 354.4 236.4 C354.9 236.4 355.7 236.4 356.2 236.3 C356.6 236.0 356.8 235.3 357.2 234.8 C357.6 234.3 358.1 233.9 358.6 233.3 C359.1 232.7 359.7 231.1 360.2 231.1 C360.7 231.1 361.0 232.4 361.4 233.0 C361.9 233.5 362.3 233.8 362.8 234.5 C363.4 235.2 364.1 236.6 364.6 237.1 C365.1 237.2 365.2 237.2 365.7 237.2 C366.1 237.2 366.6 237.1 367.1 237.1 C367.5 237.1 368.0 237.2 368.5 237.2 C368.9 237.2 369.4 236.9 369.9 236.9 C370.3 236.9 370.8 237.1 371.3 237.2 C371.8 237.2 372.2 237.2 372.7 237.1 C373.2 237.1 373.6 236.9 374.1 236.9 C374.6 236.9 375.0 237.0 375.5 237.0 C376.0 237.1 376.5 237.1 376.9 237.1 C377.4 237.1 377.9 236.8 378.3 236.8 C378.8 236.8 379.3 237.0 379.7 237.1 C380.2 237.1 380.7 237.1 381.1 237.1 C381.6 237.0 382.1 236.8 382.6 236.8 C383.0 236.8 383.5 236.8 384.0 236.8 C384.4 236.9 384.9 236.8 385.4 236.9 C385.8 236.9 386.3 237.1 386.8 237.1 C387.3 237.1 387.7 236.9 388.2 236.8 C388.7 236.8 389.1 236.9 389.6 236.9 C390.1 236.9 390.5 236.8 391.0 236.8 C391.5 236.8 391.9 237.0 392.4 237.0 C392.9 237.0 393.4 236.9 393.8 236.8 C394.3 236.8 394.8 236.8 395.2 236.8 C395.7 236.9 396.2 237.0 396.6 237.0 C397.1 237.0 397.6 236.9 398.1 236.9 C398.5 236.8 399.0 236.8 399.5 236.8 C399.9 236.8 400.4 236.7 400.9 236.7 C401.3 236.7 401.8 236.7 402.3 236.7 C402.7 236.7 403.2 236.7 403.7 236.8 C404.2 236.9 404.6 237.1 405.1 237.1 C405.6 237.1 406.0 236.9 406.5 236.9 C407.0 236.8 407.4 236.8 407.9 236.8 C408.4 236.9 408.9 237.1 409.3 237.1 C409.8 237.1 410.3 237.0 410.7 236.9 C411.2 236.9 411.7 236.8 412.1 236.7 C412.6 236.7 413.1 236.7 413.5 236.7 C414.0 236.7 414.5 236.7 415.0 236.7 C415.4 236.8 415.9 237.1 416.4 237.1 C416.8 237.1 417.3 236.9 417.8 236.9 C418.2 236.8 418.7 236.7 419.2 236.7 C419.7 236.7 420.1 236.8 420.6 236.8 C421.1 236.9 421.5 236.9 422.0 237.0 C422.5 237.0 422.9 237.1 423.4 237.1 C423.9 237.1 424.3 236.7 424.8 236.7 C425.3 236.7 425.8 236.7 426.2 236.7 C426.7 236.7 427.2 236.8 427.6 236.8 C428.1 236.8 428.6 236.9 429.0 236.9 C429.5 236.9 430.0 236.7 430.4 236.7 C430.9 236.7 431.4 236.7 431.9 236.7 C432.3 236.7 432.8 236.7 433.3 236.8 C433.7 236.8 434.2 236.8 434.7 236.8 C435.1 236.8 435.6 236.9 436.1 237.0 C436.6 237.0 437.0 237.0 437.5 237.0 C438.0 237.0 438.4 236.9 438.9 236.9 C439.4 236.9 439.8 236.9 440.3 236.9 C440.8 236.9 441.2 236.8 441.7 236.8 C442.2 236.9 442.7 237.0 443.1 237.0 C443.6 237.0 444.1 236.7 444.5 236.7 C445.0 236.7 445.5 236.9 445.9 236.9 C446.4 237.0 446.9 237.0 447.4 237.0 C447.8 237.0 448.3 237.0 448.8 237.0 C449.2 236.9 449.7 236.9 450.2 236.9 C450.6 236.9 451.1 236.9 451.6 236.9 C452.0 236.8 452.5 236.7 453.0 236.7 C453.5 236.7 453.9 237.0 454.4 237.0 C454.9 237.0 455.3 237.0 455.8 237.0 C456.3 236.9 456.7 236.9 457.2 236.9 C457.7 236.9 458.2 237.0 458.6 237.0 C459.1 236.9 459.6 236.7 460.0 236.7 C460.5 236.7 461.0 236.9 461.4 237.0 C461.9 237.0 462.4 237.0 462.8 237.0 C463.3 237.0 463.8 236.8 464.3 236.8 C464.7 236.7 465.2 236.7 465.7 236.7 C466.1 236.6 466.6 236.6 467.1 236.6 C467.5 236.6 468.0 236.7 468.5 236.7 C469.0 236.8 469.4 236.9 469.9 236.9 C470.4 236.8 470.8 236.6 471.3 236.6 C471.8 236.6 472.2 236.6 472.7 236.6 C473.2 236.7 473.6 236.8 474.1 236.8 C474.6 236.8 475.1 236.8 475.5 236.7 C476.0 236.7 476.5 236.6 476.9 236.5 C477.4 236.5 477.9 236.5 478.3 236.5 C478.8 236.5 479.3 236.5 479.8 236.5 C480.2 236.6 480.7 236.9 481.2 236.9 C481.6 236.9 482.1 236.9 482.6 236.8 C483.0 236.8 483.5 236.8 484.0 236.8 C484.4 236.8 484.9 236.9 485.4 236.9 C485.9 236.9 486.3 236.6 486.8 236.6 C487.3 236.6 487.7 237.0 488.2 237.0 C488.7 236.9 489.1 236.6 489.6 236.5 C490.1 236.5 490.6 236.6 491.0 236.7 C491.5 236.7 492.0 236.7 492.4 236.7 C492.9 236.7 493.4 236.8 493.8 236.8 C494.3 236.7 494.8 236.5 495.2 236.5 C495.7 236.5 496.2 236.7 496.7 236.7 C497.1 236.7 497.6 236.5 498.1 236.5 C498.5 236.5 499.0 236.5 499.5 236.5 C499.9 236.5 500.4 236.6 500.9 236.6 C501.4 236.6 501.8 236.4 502.3 236.4 C502.8 236.4 503.6 236.7 504.1 236.7 C504.5 233.7 504.7 225.7 505.1 218.7 C505.5 211.6 506.0 202.5 506.5 194.4 C507.0 186.2 507.5 177.9 507.9 169.8 C508.4 161.7 508.9 153.7 509.3 145.6 C509.8 137.6 510.4 128.1 510.7 121.4 C511.1 114.7 511.2 108.9 511.7 105.2 C512.1 101.6 512.9 101.3 513.6 99.4 C514.2 97.5 515.0 95.1 515.5 93.7 C515.9 92.3 516.0 92.1 516.4 90.9 C516.8 89.8 517.3 88.3 517.8 86.8 C518.3 85.3 518.8 83.4 519.2 82.1 C519.6 80.8 519.7 79.8 520.2 79.2 C520.7 78.5 521.4 78.6 522.0 78.3 C522.6 78.0 523.5 77.4 524.0 77.3 C524.5 77.3 524.5 77.5 524.8 77.8 C525.2 78.1 525.8 78.9 526.2 79.3 C526.7 79.7 527.1 79.9 527.6 80.4 C528.2 80.8 528.9 82.0 529.3 82.1 C529.8 82.1 530.0 81.6 530.5 81.2 C530.9 80.8 531.4 80.4 531.9 79.9 C532.3 79.4 532.8 78.9 533.3 78.4 C533.7 78.0 534.0 77.5 534.5 77.3 C535.0 77.2 535.6 77.2 536.1 77.2 C536.6 77.1 537.0 77.1 537.5 77.1 C538.0 77.1 538.4 77.2 538.9 77.2 C539.4 77.3 539.9 77.5 540.3 77.5 C540.8 77.5 541.3 77.3 541.7 77.3 C542.2 77.4 542.7 77.5 543.1 77.5 C543.6 77.5 544.1 77.4 544.6 77.4 C545.0 77.3 545.6 77.1 546.0 77.1 C546.3 77.1 546.3 77.1 546.7 77.3 C547.2 77.8 548.1 79.1 548.8 79.9 C549.4 80.7 550.2 81.4 550.6 82.1 C551.1 82.9 551.2 83.5 551.6 84.6 C552.0 85.6 552.5 87.0 553.0 88.3 C553.5 89.6 554.0 91.3 554.4 92.3 C554.8 93.3 554.8 94.4 555.3 94.4 C555.8 93.7 556.6 90.1 557.2 88.0 C557.9 86.0 558.6 83.1 559.1 82.1 C559.6 82.1 559.7 82.3 560.0 82.3 C560.4 82.3 561.0 82.2 561.5 82.1 C561.9 82.0 562.5 81.9 562.9 81.8 C563.3 81.8 563.4 81.8 563.9 81.8 C564.4 83.1 565.0 87.2 565.7 90.1 C566.3 93.0 567.4 97.7 567.7 99.3 L567.7 244.5 L67.0 244.5 Z" fill="url(#g631_512_0)" stroke="none"/><path d="M67.01 243.76 C67.2 243.8 68.0 243.8 68.4 243.8 C68.9 243.8 69.4 243.8 69.8 243.8 C70.3 243.8 70.8 243.9 71.2 243.9 C71.7 243.8 72.2 243.6 72.6 243.6 C73.1 243.7 73.6 243.9 74.1 243.9 C74.5 243.9 75.0 243.8 75.5 243.8 C75.9 243.7 76.4 243.6 76.9 243.6 C77.3 243.7 77.8 243.9 78.3 243.9 C78.8 243.9 79.2 243.8 79.7 243.7 C80.2 243.7 80.6 243.7 81.1 243.7 C81.6 243.7 82.0 243.9 82.5 243.9 C83.0 243.9 83.4 243.8 83.9 243.8 C84.4 243.8 84.9 243.7 85.3 243.7 C85.8 243.7 86.3 243.8 86.7 243.8 C87.2 243.8 87.7 243.7 88.1 243.7 C88.6 243.7 89.1 243.8 89.6 243.9 C90.0 243.9 90.5 243.8 91.0 243.8 C91.4 243.8 91.9 243.9 92.4 243.9 C92.8 243.9 93.3 243.8 93.8 243.8 C94.2 243.7 94.7 243.6 95.2 243.6 C95.7 243.6 96.1 243.7 96.6 243.7 C97.1 243.7 97.5 243.7 98.0 243.7 C98.5 243.7 98.9 243.8 99.4 243.8 C99.9 243.8 100.4 243.7 100.8 243.7 C101.3 243.7 101.8 243.9 102.2 243.9 C102.7 243.9 103.2 243.8 103.6 243.8 C104.1 243.8 104.6 243.7 105.0 243.7 C105.5 243.7 106.0 243.7 106.5 243.7 C106.9 243.7 107.4 243.7 107.9 243.8 C108.3 243.8 108.8 243.9 109.3 243.9 C109.7 243.9 110.2 243.8 110.7 243.8 C111.2 243.8 111.6 243.8 112.1 243.8 C112.6 243.8 113.0 243.8 113.5 243.8 C114.0 243.8 114.4 243.7 114.9 243.7 C115.4 243.7 115.8 243.8 116.3 243.8 C116.8 243.8 117.3 243.7 117.7 243.6 C118.2 243.6 118.7 243.6 119.1 243.6 C119.6 243.7 120.1 243.9 120.5 243.9 C121.0 243.9 121.5 243.8 122.0 243.8 C122.4 243.8 122.9 243.8 123.4 243.8 C123.8 243.8 124.3 243.9 124.8 243.9 C125.2 243.9 125.7 243.8 126.2 243.8 C126.6 243.7 127.1 243.6 127.6 243.6 C128.1 243.6 128.5 243.9 129.0 243.9 C129.5 243.9 129.9 243.7 130.4 243.7 C130.9 243.7 131.3 243.9 131.8 243.9 C132.3 243.9 132.8 243.8 133.2 243.7 C133.7 243.7 134.2 243.6 134.6 243.6 C135.1 243.7 135.6 243.8 136.0 243.8 C136.5 243.9 137.0 243.9 137.4 243.9 C137.9 243.9 138.4 243.9 138.9 243.9 C139.3 243.9 139.8 243.7 140.3 243.7 C140.7 243.7 141.2 243.9 141.7 243.9 C142.1 243.9 142.6 243.9 143.1 243.9 C143.6 243.9 144.0 243.8 144.5 243.8 C145.0 243.7 145.4 243.6 145.9 243.6 C146.4 243.6 146.8 243.8 147.3 243.8 C147.8 243.8 148.2 243.8 148.7 243.8 C149.2 243.8 149.7 243.7 150.1 243.7 C150.6 243.7 151.1 243.9 151.5 243.9 C152.0 243.9 152.5 243.7 152.9 243.7 C153.4 243.7 153.9 243.9 154.4 243.9 C154.8 243.9 155.3 243.8 155.8 243.7 C156.2 243.7 156.7 243.6 157.2 243.6 C157.6 243.6 158.1 243.9 158.6 243.9 C159.0 243.9 159.5 243.8 160.0 243.7 C160.5 243.7 160.9 243.7 161.4 243.7 C161.9 243.7 162.3 243.8 162.8 243.9 C163.3 243.9 163.7 243.9 164.2 243.8 C164.7 243.8 165.2 243.6 165.6 243.6 C166.1 243.6 166.6 243.6 167.0 243.6 C167.5 243.7 168.0 243.9 168.4 243.9 C168.9 243.9 169.4 243.7 169.8 243.7 C170.3 243.7 170.8 243.6 171.3 243.6 C171.7 243.6 172.2 243.8 172.7 243.8 C173.1 243.8 173.6 243.7 174.1 243.7 C174.5 243.7 175.0 243.9 175.5 243.9 C176.0 243.9 176.4 243.8 176.9 243.8 C177.4 243.8 177.8 243.7 178.3 243.7 C178.8 243.7 179.2 243.7 179.7 243.7 C180.2 243.7 180.6 243.7 181.1 243.7 C181.6 243.7 182.1 243.9 182.5 243.9 C183.0 243.9 183.5 243.8 183.9 243.8 C184.4 243.8 184.9 243.7 185.3 243.6 C185.8 243.6 186.3 243.7 186.8 243.7 C187.2 243.8 187.7 243.8 188.2 243.8 C188.6 243.8 189.1 243.8 189.6 243.8 C190.0 243.8 190.5 243.6 191.0 243.6 C191.4 243.6 191.9 243.7 192.4 243.7 C192.9 243.8 193.3 243.9 193.8 243.9 C194.3 243.9 194.7 243.7 195.2 243.7 C195.7 243.7 196.1 243.8 196.6 243.8 C197.1 243.8 197.6 243.8 198.0 243.8 C198.5 243.8 199.0 243.8 199.4 243.8 C199.9 243.8 200.4 243.8 200.8 243.8 C201.3 243.8 201.8 243.8 202.2 243.8 C202.7 243.8 203.2 243.9 203.7 243.9 C204.1 243.9 204.6 243.7 205.1 243.7 C205.5 243.7 206.0 243.9 206.5 243.9 C206.9 243.9 207.4 243.7 207.9 243.7 C208.4 243.7 208.8 243.9 209.3 243.9 C209.8 243.9 210.2 243.7 210.7 243.7 C211.2 243.7 211.6 243.7 212.1 243.7 C212.6 243.7 213.0 243.8 213.5 243.8 C214.0 243.8 214.5 243.7 214.9 243.7 C215.4 243.7 215.9 243.8 216.3 243.8 C216.8 243.8 217.3 243.7 217.7 243.7 C218.2 243.7 218.7 243.8 219.1 243.8 C219.6 243.8 220.1 243.8 220.6 243.8 C221.0 243.8 221.5 243.6 222.0 243.6 C222.4 243.6 222.9 243.8 223.4 243.8 C223.8 243.8 224.3 243.8 224.8 243.8 C225.3 243.8 225.7 243.6 226.2 243.6 C226.7 243.6 227.1 243.8 227.6 243.8 C228.1 243.8 228.5 243.7 229.0 243.7 C229.5 243.7 229.9 243.9 230.4 243.9 C230.9 243.8 231.4 243.7 231.8 243.7 C232.3 243.7 232.8 243.8 233.2 243.8 C233.7 243.9 234.2 243.9 234.6 243.9 C235.1 243.9 235.6 243.6 236.1 243.6 C236.5 243.6 237.0 243.9 237.5 243.9 C237.9 243.9 238.4 243.7 238.9 243.6 C239.3 243.6 239.8 243.6 240.3 243.6 C240.7 243.6 241.2 243.7 241.7 243.7 C242.2 243.8 242.6 243.9 243.1 243.9 C243.6 243.9 244.0 243.9 244.5 243.9 C245.0 243.9 245.4 243.9 245.9 243.8 C246.4 243.8 246.9 243.8 247.3 243.8 C247.8 243.8 248.3 243.8 248.7 243.7 C249.2 243.7 249.7 243.6 250.1 243.6 C250.6 243.6 251.1 243.8 251.5 243.8 C252.0 243.8 252.5 243.9 253.0 243.9 C253.4 243.9 253.9 243.7 254.4 243.7 C254.8 243.7 255.3 243.8 255.8 243.9 C256.2 243.9 256.7 243.9 257.2 243.9 C257.7 243.9 258.1 243.8 258.6 243.7 C259.1 243.7 259.5 243.7 260.0 243.7 C260.5 243.7 260.9 243.9 261.4 243.9 C261.9 243.9 262.3 243.8 262.8 243.8 C263.3 243.7 263.8 243.7 264.2 243.7 C264.7 243.7 265.2 243.7 265.6 243.7 C266.1 243.7 266.6 243.8 267.0 243.8 C267.5 243.8 268.0 243.6 268.5 243.6 C268.9 243.7 269.4 243.8 269.9 243.9 C270.3 243.9 270.8 243.7 271.3 243.7 C271.7 243.7 272.2 243.7 272.7 243.7 C273.1 243.7 273.6 243.6 274.1 243.6 C274.6 243.7 275.0 243.7 275.5 243.8 C276.0 243.8 276.4 243.9 276.9 243.9 C277.4 243.9 277.8 243.9 278.3 243.9 C278.8 243.9 279.3 243.8 279.7 243.7 C280.2 243.7 280.7 243.9 281.1 243.9 C281.6 243.8 282.1 243.7 282.5 243.7 C283.0 243.7 283.5 243.9 283.9 243.9 C284.4 243.9 284.9 243.7 285.4 243.7 C285.8 243.7 286.3 243.8 286.8 243.8 C287.2 243.9 287.7 243.9 288.2 243.9 C288.6 243.9 289.1 243.9 289.6 243.9 C290.1 243.8 290.5 243.8 291.0 243.8 C291.5 243.7 291.9 243.7 292.4 243.7 C292.9 243.7 293.3 243.8 293.8 243.8 C294.3 243.8 294.7 243.9 295.2 243.9 C295.7 243.8 296.2 243.8 296.6 243.8 C297.1 243.7 297.6 243.6 298.0 243.6 C298.5 243.6 299.0 243.7 299.4 243.7 C299.9 243.7 300.4 243.6 300.9 243.6 C301.3 243.6 301.8 243.9 302.3 243.9 C302.7 243.9 303.2 243.7 303.7 243.6 C304.1 243.6 304.6 243.6 305.1 243.6 C305.5 243.7 306.0 243.7 306.5 243.7 C307.0 243.7 307.4 243.7 307.9 243.7 C308.4 243.7 308.8 243.7 309.3 243.7 C309.8 243.7 310.2 243.6 310.7 243.6 C311.2 243.7 311.7 243.9 312.1 243.9 C312.6 243.9 313.1 243.7 313.5 243.7 C314.0 243.7 314.5 243.7 314.9 243.7 C315.4 243.8 315.9 243.8 316.3 243.8 C316.8 243.8 317.3 243.7 317.8 243.7 C318.2 243.7 318.7 243.7 319.2 243.7 C319.6 243.7 320.1 243.9 320.6 243.9 C321.0 243.9 321.5 243.7 322.0 243.7 C322.5 243.7 322.9 243.8 323.4 243.8 C323.9 243.8 324.3 243.8 324.8 243.8 C325.3 243.7 325.7 243.7 326.2 243.7 C326.7 243.7 327.1 243.9 327.6 243.9 C328.1 243.9 328.6 243.7 329.0 243.7 C329.5 243.7 330.0 243.8 330.4 243.8 C330.9 243.8 331.4 243.6 331.8 243.6 C332.3 243.6 332.8 243.8 333.3 243.8 C333.7 243.8 334.2 243.7 334.7 243.7 C335.1 243.7 335.6 243.7 336.1 243.7 C336.5 243.7 337.0 243.7 337.5 243.7 C337.9 243.7 338.4 243.6 338.9 243.6 C339.4 243.7 339.8 243.9 340.3 243.9 C340.8 243.9 341.2 243.8 341.7 243.7 C342.2 243.7 342.6 243.7 343.1 243.7 C343.6 243.7 344.1 243.7 344.5 243.7 C345.0 243.7 345.5 243.8 345.9 243.8 C346.4 243.8 346.9 243.9 347.3 243.9 C347.8 243.9 348.3 243.9 348.7 243.8 C349.2 243.8 349.7 243.7 350.2 243.7 C350.6 243.7 351.1 243.8 351.6 243.9 C352.0 243.9 352.5 243.9 353.0 243.9 C353.4 243.9 353.9 243.8 354.4 243.8 C354.9 243.8 355.3 243.8 355.8 243.8 C356.3 243.8 356.7 243.7 357.2 243.7 C357.7 243.8 358.1 243.9 358.6 243.9 C359.1 243.9 359.5 243.7 360.0 243.7 C360.5 243.7 361.0 243.8 361.4 243.8 C361.9 243.8 362.4 243.7 362.8 243.7 C363.3 243.7 363.8 243.9 364.2 243.9 C364.7 243.9 365.2 243.6 365.7 243.6 C366.1 243.6 366.6 243.7 367.1 243.7 C367.5 243.7 368.0 243.6 368.5 243.6 C368.9 243.6 369.4 243.6 369.9 243.6 C370.3 243.6 370.8 243.6 371.3 243.7 C371.8 243.7 372.2 243.8 372.7 243.9 C373.2 243.9 373.6 243.8 374.1 243.8 C374.6 243.8 375.0 243.8 375.5 243.8 C376.0 243.8 376.5 243.7 376.9 243.7 C377.4 243.7 377.9 243.8 378.3 243.8 C378.8 243.8 379.3 243.8 379.7 243.8 C380.2 243.8 380.7 243.9 381.1 243.9 C381.6 243.9 382.1 243.9 382.6 243.9 C383.0 243.8 383.5 243.7 384.0 243.6 C384.4 243.6 384.9 243.6 385.4 243.6 C385.8 243.6 386.3 243.8 386.8 243.8 C387.3 243.8 387.7 243.7 388.2 243.7 C388.7 243.7 389.1 243.8 389.6 243.8 C390.1 243.8 390.5 243.7 391.0 243.7 C391.5 243.8 391.9 243.8 392.4 243.8 C392.9 243.8 393.4 243.7 393.8 243.7 C394.3 243.7 394.8 243.8 395.2 243.8 C395.7 243.8 396.2 243.8 396.6 243.8 C397.1 243.8 397.6 243.7 398.1 243.7 C398.5 243.8 399.0 243.8 399.5 243.8 C399.9 243.8 400.4 243.8 400.9 243.8 C401.3 243.7 401.8 243.6 402.3 243.6 C402.7 243.6 403.2 243.9 403.7 243.9 C404.2 243.9 404.6 243.9 405.1 243.9 C405.6 243.8 406.0 243.7 406.5 243.7 C407.0 243.7 407.4 243.9 407.9 243.9 C408.4 243.9 408.9 243.9 409.3 243.8 C409.8 243.8 410.3 243.7 410.7 243.7 C411.2 243.7 411.7 243.7 412.1 243.7 C412.6 243.8 413.1 243.8 413.5 243.8 C414.0 243.9 414.5 243.9 415.0 243.9 C415.4 243.9 415.9 243.8 416.4 243.8 C416.8 243.8 417.3 243.8 417.8 243.8 C418.2 243.8 418.7 243.7 419.2 243.7 C419.7 243.6 420.1 243.6 420.6 243.6 C421.1 243.6 421.5 243.7 422.0 243.7 C422.5 243.7 422.9 243.6 423.4 243.6 C423.9 243.6 424.3 243.6 424.8 243.6 C425.3 243.6 425.8 243.6 426.2 243.6 C426.7 243.6 427.2 243.6 427.6 243.6 C428.1 243.6 428.6 243.6 429.0 243.6 C429.5 243.7 430.0 243.8 430.4 243.9 C430.9 243.9 431.4 243.8 431.9 243.8 C432.3 243.8 432.8 243.8 433.3 243.8 C433.7 243.8 434.2 243.7 434.7 243.7 C435.1 243.7 435.6 243.7 436.1 243.8 C436.6 243.8 437.0 243.8 437.5 243.8 C438.0 243.8 438.4 243.7 438.9 243.7 C439.4 243.7 439.8 243.8 440.3 243.8 C440.8 243.8 441.2 243.8 441.7 243.8 C442.2 243.8 442.7 243.8 443.1 243.8 C443.6 243.8 444.1 243.8 444.5 243.8 C445.0 243.8 445.5 243.7 445.9 243.7 C446.4 243.7 446.9 243.7 447.4 243.7 C447.8 243.7 448.3 243.8 448.8 243.8 C449.2 243.8 449.7 243.8 450.2 243.8 C450.6 243.8 451.1 243.8 451.6 243.8 C452.0 243.8 452.5 243.8 453.0 243.8 C453.5 243.8 453.9 243.9 454.4 243.9 C454.9 243.8 455.3 243.7 455.8 243.7 C456.3 243.7 456.7 243.8 457.2 243.8 C457.7 243.8 458.2 243.7 458.6 243.7 C459.1 243.7 459.6 243.7 460.0 243.7 C460.5 243.7 461.0 243.9 461.4 243.9 C461.9 243.9 462.4 243.7 462.8 243.7 C463.3 243.7 463.8 243.8 464.3 243.8 C464.7 243.8 465.2 243.8 465.7 243.8 C466.1 243.8 466.6 243.7 467.1 243.7 C467.5 243.7 468.0 243.7 468.5 243.7 C469.0 243.7 469.4 243.6 469.9 243.6 C470.4 243.6 470.8 243.7 471.3 243.7 C471.8 243.7 472.2 243.8 472.7 243.8 C473.2 243.8 473.6 243.7 474.1 243.7 C474.6 243.7 475.1 243.8 475.5 243.8 C476.0 243.8 476.5 243.9 476.9 243.9 C477.4 243.9 477.9 243.8 478.3 243.7 C478.8 243.7 479.3 243.8 479.8 243.8 C480.2 243.7 480.7 243.6 481.2 243.6 C481.6 243.7 482.1 243.8 482.6 243.8 C483.0 243.8 483.5 243.7 484.0 243.7 C484.4 243.7 484.9 243.7 485.4 243.8 C485.9 243.8 486.3 243.9 486.8 243.9 C487.3 243.9 487.7 243.7 488.2 243.7 C488.7 243.7 489.1 243.8 489.6 243.8 C490.1 243.8 490.6 243.7 491.0 243.7 C491.5 243.8 492.0 243.9 492.4 243.9 C492.9 243.9 493.4 243.9 493.8 243.9 C494.3 243.9 494.8 243.6 495.2 243.6 C495.7 243.6 496.2 243.9 496.7 243.9 C497.1 243.9 497.6 243.9 498.1 243.9 C498.5 243.9 499.0 243.9 499.5 243.9 C499.9 243.9 500.4 243.9 500.9 243.9 C501.4 243.8 501.8 243.7 502.3 243.7 C502.8 243.7 503.6 243.8 504.1 243.8 C504.5 243.5 504.7 242.6 505.1 242.0 C505.5 241.4 506.0 240.7 506.5 240.0 C507.0 239.3 507.5 238.6 507.9 237.9 C508.4 237.2 508.9 236.3 509.3 235.6 C509.8 234.9 510.2 234.4 510.7 233.6 C511.3 232.7 512.1 231.1 512.6 230.7 C513.1 230.7 513.2 231.1 513.6 231.3 C514.0 231.4 514.5 231.5 515.0 231.7 C515.4 231.9 515.9 232.2 516.4 232.4 C516.8 232.7 517.3 232.9 517.8 233.1 C518.3 233.3 518.8 233.5 519.2 233.7 C519.6 233.8 519.7 234.0 520.2 234.1 C520.7 234.1 521.5 234.1 522.0 234.1 C522.5 234.1 523.0 234.2 523.4 234.2 C523.9 234.2 524.4 234.1 524.8 234.0 C525.3 234.0 525.8 234.0 526.2 234.0 C526.7 234.0 527.2 234.0 527.6 234.1 C528.1 234.1 528.6 234.2 529.1 234.2 C529.5 234.2 530.0 234.0 530.5 234.0 C530.9 234.0 531.4 234.2 531.9 234.2 C532.3 234.2 532.8 234.1 533.3 234.1 C533.8 234.0 534.2 234.0 534.7 234.0 C535.2 234.0 535.6 234.0 536.1 234.0 C536.6 234.0 537.0 234.0 537.5 234.0 C538.0 234.0 538.4 234.0 538.9 234.0 C539.4 234.0 539.9 234.1 540.3 234.1 C540.8 234.2 541.3 234.2 541.7 234.2 C542.2 234.2 542.7 234.1 543.1 234.1 C543.6 234.1 544.1 234.0 544.6 234.0 C545.0 234.0 545.5 234.1 546.0 234.2 C546.4 234.2 546.9 234.1 547.4 234.1 C547.8 234.1 548.2 234.0 548.8 234.0 C549.3 234.0 550.2 234.0 550.6 234.1 C551.1 234.1 551.2 234.2 551.6 234.2 C552.0 234.3 552.5 234.3 553.0 234.3 C553.5 234.3 553.9 234.4 554.4 234.5 C554.9 234.5 555.4 234.5 555.8 234.5 C556.3 234.6 556.8 234.8 557.2 234.9 C557.7 235.0 558.2 235.0 558.6 235.0 C559.1 235.0 559.6 235.0 560.0 235.0 C560.5 235.0 561.0 235.1 561.5 235.2 C561.9 235.3 562.4 235.4 562.9 235.5 C563.3 235.6 563.8 235.6 564.3 235.7 C564.7 235.7 565.1 235.8 565.7 235.8 C566.3 235.8 567.4 235.9 567.7 235.9 L567.7 244.5 L67.0 244.5 Z" fill="url(#g631_512_1)" stroke="none"/><path d="M67.01 241.89 C67.2 241.9 68.0 242.0 68.4 242.0 C68.9 242.0 69.4 241.7 69.8 241.7 C70.3 241.7 70.8 242.1 71.2 242.1 C71.7 242.1 72.2 241.8 72.6 241.8 C73.1 241.8 73.6 242.1 74.1 242.1 C74.5 242.1 75.0 242.1 75.5 242.0 C75.9 241.9 76.4 241.6 76.9 241.6 C77.3 241.6 77.8 242.0 78.3 242.0 C78.8 242.0 79.2 241.8 79.7 241.8 C80.2 241.8 80.6 241.9 81.1 241.9 C81.6 241.9 82.0 241.9 82.5 241.9 C83.0 241.9 83.4 241.9 83.9 241.9 C84.4 241.9 84.9 242.1 85.3 242.1 C85.8 242.0 86.3 241.7 86.7 241.7 C87.2 241.7 87.7 242.1 88.1 242.1 C88.6 242.1 89.1 242.0 89.6 242.0 C90.0 242.0 90.5 242.1 91.0 242.1 C91.4 242.1 91.9 242.0 92.4 242.0 C92.8 242.0 93.3 242.0 93.8 241.9 C94.2 241.9 94.7 241.7 95.2 241.7 C95.7 241.7 96.1 241.9 96.6 242.0 C97.1 242.0 97.5 242.1 98.0 242.1 C98.5 242.1 98.9 242.1 99.4 242.0 C99.9 241.9 100.4 241.6 100.8 241.6 C101.3 241.7 101.8 242.1 102.2 242.1 C102.7 242.1 103.2 241.9 103.6 241.8 C104.1 241.8 104.6 242.0 105.0 242.0 C105.5 242.0 106.0 241.8 106.5 241.8 C106.9 241.8 107.4 242.0 107.9 242.0 C108.3 242.0 108.8 241.8 109.3 241.8 C109.7 241.8 110.2 241.9 110.7 241.9 C111.2 241.9 111.6 241.9 112.1 241.8 C112.6 241.8 113.0 241.7 113.5 241.7 C114.0 241.7 114.4 241.8 114.9 241.9 C115.4 241.9 115.8 242.0 116.3 242.1 C116.8 242.1 117.3 242.1 117.7 242.1 C118.2 242.1 118.7 241.7 119.1 241.7 C119.6 241.7 120.1 241.8 120.5 241.9 C121.0 242.0 121.5 242.1 122.0 242.1 C122.4 242.0 122.9 241.7 123.4 241.7 C123.8 241.7 124.3 241.8 124.8 241.9 C125.2 241.9 125.7 241.8 126.2 241.8 C126.6 241.7 127.1 241.7 127.6 241.7 C128.1 241.7 128.5 242.0 129.0 242.0 C129.5 242.0 129.9 242.0 130.4 242.0 C130.9 241.9 131.3 241.7 131.8 241.7 C132.3 241.7 132.8 242.1 133.2 242.1 C133.7 242.1 134.2 241.8 134.6 241.8 C135.1 241.8 135.6 242.1 136.0 242.1 C136.5 242.1 137.0 241.8 137.4 241.8 C137.9 241.8 138.4 241.8 138.9 241.8 C139.3 241.8 139.8 241.7 140.3 241.7 C140.7 241.7 141.2 241.7 141.7 241.7 C142.1 241.8 142.6 241.8 143.1 241.9 C143.6 241.9 144.0 242.0 144.5 242.1 C145.0 242.1 145.4 242.1 145.9 242.1 C146.4 242.0 146.8 241.9 147.3 241.9 C147.8 241.9 148.2 241.9 148.7 241.9 C149.2 241.9 149.7 242.1 150.1 242.1 C150.6 242.1 151.1 241.7 151.5 241.7 C152.0 241.7 152.5 241.9 152.9 241.9 C153.4 241.9 153.9 241.8 154.4 241.8 C154.8 241.8 155.3 242.0 155.8 242.0 C156.2 242.0 156.7 242.0 157.2 242.0 C157.6 242.0 158.1 242.1 158.6 242.1 C159.0 242.1 159.5 242.0 160.0 242.0 C160.5 242.0 160.9 242.0 161.4 242.0 C161.9 242.0 162.3 241.9 162.8 241.9 C163.3 241.9 163.7 242.0 164.2 242.0 C164.7 241.9 165.2 241.8 165.6 241.7 C166.1 241.7 166.6 241.7 167.0 241.7 C167.5 241.7 168.0 242.0 168.4 242.1 C168.9 242.1 169.4 241.9 169.8 241.9 C170.3 241.9 170.8 242.1 171.3 242.1 C171.7 242.0 172.2 241.9 172.7 241.8 C173.1 241.7 173.6 241.6 174.1 241.6 C174.5 241.7 175.0 242.0 175.5 242.0 C176.0 242.0 176.4 241.8 176.9 241.8 C177.4 241.8 177.8 241.9 178.3 242.0 C178.8 242.1 179.2 242.1 179.7 242.1 C180.2 242.1 180.6 241.8 181.1 241.8 C181.6 241.8 182.1 241.9 182.5 242.0 C183.0 242.0 183.5 242.1 183.9 242.1 C184.4 242.1 184.9 241.9 185.3 241.9 C185.8 241.9 186.3 242.0 186.8 242.0 C187.2 242.0 187.7 242.0 188.2 241.9 C188.6 241.9 189.1 241.9 189.6 241.9 C190.0 241.9 190.5 241.9 191.0 241.9 C191.4 241.9 191.9 241.8 192.4 241.8 C192.9 241.9 193.3 242.0 193.8 242.0 C194.3 242.0 194.7 242.1 195.2 242.1 C195.7 242.1 196.1 242.1 196.6 242.1 C197.1 242.1 197.6 242.1 198.0 242.1 C198.5 242.1 199.0 241.9 199.4 241.9 C199.9 241.9 200.4 242.0 200.8 242.0 C201.3 241.9 201.8 241.7 202.2 241.7 C202.7 241.7 203.2 241.9 203.7 241.9 C204.1 241.9 204.6 241.8 205.1 241.8 C205.5 241.7 206.0 241.6 206.5 241.6 C206.9 241.7 207.4 242.0 207.9 242.1 C208.4 242.1 208.8 242.1 209.3 242.1 C209.8 242.1 210.2 242.1 210.7 242.1 C211.2 242.0 211.6 242.0 212.1 242.0 C212.6 241.9 213.0 241.9 213.5 241.9 C214.0 241.8 214.5 241.8 214.9 241.8 C215.4 241.8 215.9 242.0 216.3 242.0 C216.8 242.0 217.3 241.7 217.7 241.7 C218.2 241.7 218.7 242.1 219.1 242.2 C219.6 242.2 220.1 241.7 220.6 241.7 C221.0 241.7 221.5 242.0 222.0 242.0 C222.4 242.0 222.9 241.7 223.4 241.7 C223.8 241.7 224.3 242.1 224.8 242.1 C225.3 242.1 225.8 241.7 226.2 241.7 C226.6 241.7 226.8 241.9 227.3 241.9 C227.7 241.7 228.5 241.0 229.0 240.6 C229.5 240.2 229.9 239.8 230.4 239.5 C230.9 239.2 231.4 239.0 231.8 238.7 C232.3 238.5 232.7 237.9 233.2 237.9 C233.6 238.0 234.2 238.9 234.6 239.3 C235.1 239.6 235.6 239.6 236.1 240.0 C236.5 240.4 237.1 241.1 237.5 241.5 C237.8 241.8 237.8 241.9 238.3 242.1 C238.7 242.2 239.7 242.3 240.3 242.3 C240.9 242.3 241.2 242.0 241.7 242.0 C242.2 242.0 242.6 242.0 243.1 242.0 C243.6 242.1 244.0 242.0 244.5 242.1 C245.0 242.1 245.4 242.2 245.9 242.2 C246.4 242.2 246.9 242.2 247.3 242.2 C247.8 242.2 248.3 242.0 248.7 242.0 C249.2 242.0 249.7 242.0 250.1 242.0 C250.6 242.1 251.1 242.2 251.5 242.2 C252.0 242.2 252.5 242.1 253.0 242.0 C253.4 242.0 253.9 241.9 254.4 241.9 C254.8 241.9 255.3 241.9 255.8 241.9 C256.2 241.9 256.7 241.9 257.2 242.0 C257.7 242.0 258.1 242.0 258.6 242.0 C259.1 242.0 259.5 242.0 260.0 242.0 C260.5 242.0 260.9 242.1 261.4 242.1 C261.9 242.1 262.3 242.1 262.8 242.1 C263.3 242.1 263.8 241.9 264.2 241.9 C264.7 241.9 265.2 242.1 265.6 242.1 C266.1 242.1 266.5 242.0 267.0 241.9 C267.5 241.8 268.0 241.6 268.5 241.5 C268.9 241.4 269.5 241.3 269.9 241.2 C270.2 241.2 270.2 241.1 270.7 241.1 C271.2 241.2 272.1 241.3 272.7 241.4 C273.2 241.5 273.6 241.8 274.1 241.9 C274.6 242.0 275.0 241.9 275.5 242.0 C275.9 242.0 276.3 242.1 276.8 242.1 C277.3 242.0 277.8 241.5 278.3 241.3 C278.8 241.0 279.3 241.0 279.7 240.7 C280.2 240.4 280.7 239.8 281.1 239.4 C281.6 239.1 282.1 239.0 282.5 238.8 C283.0 238.6 283.4 238.3 283.9 238.2 C284.4 238.0 284.9 238.1 285.4 238.0 C285.8 237.9 286.3 237.7 286.8 237.7 C287.2 237.7 287.7 237.8 288.2 237.8 C288.7 237.7 289.3 237.4 289.8 237.4 C290.3 237.4 290.6 237.7 291.0 237.7 C291.4 237.8 291.9 237.8 292.4 237.8 C292.9 237.8 293.3 237.8 293.8 237.9 C294.3 237.9 294.7 238.0 295.2 238.1 C295.7 238.3 296.3 238.6 296.6 238.7 C297.0 238.7 296.9 238.6 297.4 238.5 C297.9 238.5 298.9 238.3 299.4 238.1 C300.0 238.0 300.4 237.8 300.9 237.8 C301.3 237.7 301.7 237.7 302.3 237.6 C302.8 237.6 303.7 237.5 304.2 237.4 C304.6 237.4 304.7 237.4 305.1 237.4 C305.5 237.5 306.0 237.6 306.5 237.8 C307.0 237.9 307.4 238.3 307.9 238.5 C308.4 238.7 308.9 238.8 309.3 238.8 C309.7 238.9 309.6 238.9 310.1 238.9 C310.6 238.8 311.5 238.5 312.1 238.3 C312.7 238.0 313.1 237.7 313.5 237.6 C314.0 237.5 314.5 237.6 314.9 237.5 C315.4 237.3 315.9 236.9 316.3 236.8 C316.8 236.6 317.4 236.4 317.8 236.4 C318.1 236.3 318.1 236.3 318.5 236.3 C319.0 236.3 320.0 236.2 320.6 236.2 C321.1 236.1 321.5 236.1 322.0 236.0 C322.5 236.0 322.9 235.8 323.4 235.8 C323.9 235.8 324.3 235.8 324.8 235.8 C325.3 235.8 325.7 236.0 326.2 236.0 C326.7 235.9 327.1 235.6 327.6 235.6 C328.1 235.6 328.6 235.8 329.0 235.9 C329.5 235.9 330.1 235.7 330.4 235.7 C330.8 235.6 330.8 235.6 331.2 235.6 C331.7 235.6 332.7 235.6 333.3 235.6 C333.8 235.6 334.2 235.7 334.7 235.8 C335.1 235.9 335.6 236.2 336.1 236.3 C336.5 236.4 337.0 236.4 337.5 236.5 C337.9 236.5 338.4 236.5 338.9 236.5 C339.4 236.5 339.8 236.5 340.3 236.5 C340.8 236.6 341.2 236.7 341.7 236.8 C342.2 236.9 342.6 237.1 343.1 237.1 C343.5 237.0 344.0 236.8 344.5 236.7 C345.0 236.7 345.5 236.8 345.9 236.8 C346.4 236.8 346.9 236.7 347.3 236.6 C347.8 236.6 348.3 236.7 348.7 236.7 C349.2 236.7 349.7 236.7 350.2 236.7 C350.6 236.7 351.1 236.6 351.6 236.6 C352.0 236.6 352.5 236.5 353.0 236.5 C353.4 236.5 353.9 236.4 354.4 236.4 C354.9 236.4 355.7 236.4 356.2 236.3 C356.6 236.0 356.8 235.3 357.2 234.8 C357.6 234.3 358.1 233.9 358.6 233.3 C359.1 232.7 359.7 231.1 360.2 231.1 C360.7 231.1 361.0 232.4 361.4 233.0 C361.9 233.5 362.3 233.8 362.8 234.5 C363.4 235.2 364.1 236.6 364.6 237.1 C365.1 237.2 365.2 237.2 365.7 237.2 C366.1 237.2 366.6 237.1 367.1 237.1 C367.5 237.1 368.0 237.2 368.5 237.2 C368.9 237.2 369.4 236.9 369.9 236.9 C370.3 236.9 370.8 237.1 371.3 237.2 C371.8 237.2 372.2 237.2 372.7 237.1 C373.2 237.1 373.6 236.9 374.1 236.9 C374.6 236.9 375.0 237.0 375.5 237.0 C376.0 237.1 376.5 237.1 376.9 237.1 C377.4 237.1 377.9 236.8 378.3 236.8 C378.8 236.8 379.3 237.0 379.7 237.1 C380.2 237.1 380.7 237.1 381.1 237.1 C381.6 237.0 382.1 236.8 382.6 236.8 C383.0 236.8 383.5 236.8 384.0 236.8 C384.4 236.9 384.9 236.8 385.4 236.9 C385.8 236.9 386.3 237.1 386.8 237.1 C387.3 237.1 387.7 236.9 388.2 236.8 C388.7 236.8 389.1 236.9 389.6 236.9 C390.1 236.9 390.5 236.8 391.0 236.8 C391.5 236.8 391.9 237.0 392.4 237.0 C392.9 237.0 393.4 236.9 393.8 236.8 C394.3 236.8 394.8 236.8 395.2 236.8 C395.7 236.9 396.2 237.0 396.6 237.0 C397.1 237.0 397.6 236.9 398.1 236.9 C398.5 236.8 399.0 236.8 399.5 236.8 C399.9 236.8 400.4 236.7 400.9 236.7 C401.3 236.7 401.8 236.7 402.3 236.7 C402.7 236.7 403.2 236.7 403.7 236.8 C404.2 236.9 404.6 237.1 405.1 237.1 C405.6 237.1 406.0 236.9 406.5 236.9 C407.0 236.8 407.4 236.8 407.9 236.8 C408.4 236.9 408.9 237.1 409.3 237.1 C409.8 237.1 410.3 237.0 410.7 236.9 C411.2 236.9 411.7 236.8 412.1 236.7 C412.6 236.7 413.1 236.7 413.5 236.7 C414.0 236.7 414.5 236.7 415.0 236.7 C415.4 236.8 415.9 237.1 416.4 237.1 C416.8 237.1 417.3 236.9 417.8 236.9 C418.2 236.8 418.7 236.7 419.2 236.7 C419.7 236.7 420.1 236.8 420.6 236.8 C421.1 236.9 421.5 236.9 422.0 237.0 C422.5 237.0 422.9 237.1 423.4 237.1 C423.9 237.1 424.3 236.7 424.8 236.7 C425.3 236.7 425.8 236.7 426.2 236.7 C426.7 236.7 427.2 236.8 427.6 236.8 C428.1 236.8 428.6 236.9 429.0 236.9 C429.5 236.9 430.0 236.7 430.4 236.7 C430.9 236.7 431.4 236.7 431.9 236.7 C432.3 236.7 432.8 236.7 433.3 236.8 C433.7 236.8 434.2 236.8 434.7 236.8 C435.1 236.8 435.6 236.9 436.1 237.0 C436.6 237.0 437.0 237.0 437.5 237.0 C438.0 237.0 438.4 236.9 438.9 236.9 C439.4 236.9 439.8 236.9 440.3 236.9 C440.8 236.9 441.2 236.8 441.7 236.8 C442.2 236.9 442.7 237.0 443.1 237.0 C443.6 237.0 444.1 236.7 444.5 236.7 C445.0 236.7 445.5 236.9 445.9 236.9 C446.4 237.0 446.9 237.0 447.4 237.0 C447.8 237.0 448.3 237.0 448.8 237.0 C449.2 236.9 449.7 236.9 450.2 236.9 C450.6 236.9 451.1 236.9 451.6 236.9 C452.0 236.8 452.5 236.7 453.0 236.7 C453.5 236.7 453.9 237.0 454.4 237.0 C454.9 237.0 455.3 237.0 455.8 237.0 C456.3 236.9 456.7 236.9 457.2 236.9 C457.7 236.9 458.2 237.0 458.6 237.0 C459.1 236.9 459.6 236.7 460.0 236.7 C460.5 236.7 461.0 236.9 461.4 237.0 C461.9 237.0 462.4 237.0 462.8 237.0 C463.3 237.0 463.8 236.8 464.3 236.8 C464.7 236.7 465.2 236.7 465.7 236.7 C466.1 236.6 466.6 236.6 467.1 236.6 C467.5 236.6 468.0 236.7 468.5 236.7 C469.0 236.8 469.4 236.9 469.9 236.9 C470.4 236.8 470.8 236.6 471.3 236.6 C471.8 236.6 472.2 236.6 472.7 236.6 C473.2 236.7 473.6 236.8 474.1 236.8 C474.6 236.8 475.1 236.8 475.5 236.7 C476.0 236.7 476.5 236.6 476.9 236.5 C477.4 236.5 477.9 236.5 478.3 236.5 C478.8 236.5 479.3 236.5 479.8 236.5 C480.2 236.6 480.7 236.9 481.2 236.9 C481.6 236.9 482.1 236.9 482.6 236.8 C483.0 236.8 483.5 236.8 484.0 236.8 C484.4 236.8 484.9 236.9 485.4 236.9 C485.9 236.9 486.3 236.6 486.8 236.6 C487.3 236.6 487.7 237.0 488.2 237.0 C488.7 236.9 489.1 236.6 489.6 236.5 C490.1 236.5 490.6 236.6 491.0 236.7 C491.5 236.7 492.0 236.7 492.4 236.7 C492.9 236.7 493.4 236.8 493.8 236.8 C494.3 236.7 494.8 236.5 495.2 236.5 C495.7 236.5 496.2 236.7 496.7 236.7 C497.1 236.7 497.6 236.5 498.1 236.5 C498.5 236.5 499.0 236.5 499.5 236.5 C499.9 236.5 500.4 236.6 500.9 236.6 C501.4 236.6 501.8 236.4 502.3 236.4 C502.8 236.4 503.6 236.7 504.1 236.7 C504.5 233.7 504.7 225.7 505.1 218.7 C505.5 211.6 506.0 202.5 506.5 194.4 C507.0 186.2 507.5 177.9 507.9 169.8 C508.4 161.7 508.9 153.7 509.3 145.6 C509.8 137.6 510.4 128.1 510.7 121.4 C511.1 114.7 511.2 108.9 511.7 105.2 C512.1 101.6 512.9 101.3 513.6 99.4 C514.2 97.5 515.0 95.1 515.5 93.7 C515.9 92.3 516.0 92.1 516.4 90.9 C516.8 89.8 517.3 88.3 517.8 86.8 C518.3 85.3 518.8 83.4 519.2 82.1 C519.6 80.8 519.7 79.8 520.2 79.2 C520.7 78.5 521.4 78.6 522.0 78.3 C522.6 78.0 523.5 77.4 524.0 77.3 C524.5 77.3 524.5 77.5 524.8 77.8 C525.2 78.1 525.8 78.9 526.2 79.3 C526.7 79.7 527.1 79.9 527.6 80.4 C528.2 80.8 528.9 82.0 529.3 82.1 C529.8 82.1 530.0 81.6 530.5 81.2 C530.9 80.8 531.4 80.4 531.9 79.9 C532.3 79.4 532.8 78.9 533.3 78.4 C533.7 78.0 534.0 77.5 534.5 77.3 C535.0 77.2 535.6 77.2 536.1 77.2 C536.6 77.1 537.0 77.1 537.5 77.1 C538.0 77.1 538.4 77.2 538.9 77.2 C539.4 77.3 539.9 77.5 540.3 77.5 C540.8 77.5 541.3 77.3 541.7 77.3 C542.2 77.4 542.7 77.5 543.1 77.5 C543.6 77.5 544.1 77.4 544.6 77.4 C545.0 77.3 545.6 77.1 546.0 77.1 C546.3 77.1 546.3 77.1 546.7 77.3 C547.2 77.8 548.1 79.1 548.8 79.9 C549.4 80.7 550.2 81.4 550.6 82.1 C551.1 82.9 551.2 83.5 551.6 84.6 C552.0 85.6 552.5 87.0 553.0 88.3 C553.5 89.6 554.0 91.3 554.4 92.3 C554.8 93.3 554.8 94.4 555.3 94.4 C555.8 93.7 556.6 90.1 557.2 88.0 C557.9 86.0 558.6 83.1 559.1 82.1 C559.6 82.1 559.7 82.3 560.0 82.3 C560.4 82.3 561.0 82.2 561.5 82.1 C561.9 82.0 562.5 81.9 562.9 81.8 C563.3 81.8 563.4 81.8 563.9 81.8 C564.4 83.1 565.0 87.2 565.7 90.1 C566.3 93.0 567.4 97.7 567.7 99.3" fill="none" stroke="#73bf69" stroke-width="1.05" stroke-linejoin="round"/><path d="M67.01 243.76 C67.2 243.8 68.0 243.8 68.4 243.8 C68.9 243.8 69.4 243.8 69.8 243.8 C70.3 243.8 70.8 243.9 71.2 243.9 C71.7 243.8 72.2 243.6 72.6 243.6 C73.1 243.7 73.6 243.9 74.1 243.9 C74.5 243.9 75.0 243.8 75.5 243.8 C75.9 243.7 76.4 243.6 76.9 243.6 C77.3 243.7 77.8 243.9 78.3 243.9 C78.8 243.9 79.2 243.8 79.7 243.7 C80.2 243.7 80.6 243.7 81.1 243.7 C81.6 243.7 82.0 243.9 82.5 243.9 C83.0 243.9 83.4 243.8 83.9 243.8 C84.4 243.8 84.9 243.7 85.3 243.7 C85.8 243.7 86.3 243.8 86.7 243.8 C87.2 243.8 87.7 243.7 88.1 243.7 C88.6 243.7 89.1 243.8 89.6 243.9 C90.0 243.9 90.5 243.8 91.0 243.8 C91.4 243.8 91.9 243.9 92.4 243.9 C92.8 243.9 93.3 243.8 93.8 243.8 C94.2 243.7 94.7 243.6 95.2 243.6 C95.7 243.6 96.1 243.7 96.6 243.7 C97.1 243.7 97.5 243.7 98.0 243.7 C98.5 243.7 98.9 243.8 99.4 243.8 C99.9 243.8 100.4 243.7 100.8 243.7 C101.3 243.7 101.8 243.9 102.2 243.9 C102.7 243.9 103.2 243.8 103.6 243.8 C104.1 243.8 104.6 243.7 105.0 243.7 C105.5 243.7 106.0 243.7 106.5 243.7 C106.9 243.7 107.4 243.7 107.9 243.8 C108.3 243.8 108.8 243.9 109.3 243.9 C109.7 243.9 110.2 243.8 110.7 243.8 C111.2 243.8 111.6 243.8 112.1 243.8 C112.6 243.8 113.0 243.8 113.5 243.8 C114.0 243.8 114.4 243.7 114.9 243.7 C115.4 243.7 115.8 243.8 116.3 243.8 C116.8 243.8 117.3 243.7 117.7 243.6 C118.2 243.6 118.7 243.6 119.1 243.6 C119.6 243.7 120.1 243.9 120.5 243.9 C121.0 243.9 121.5 243.8 122.0 243.8 C122.4 243.8 122.9 243.8 123.4 243.8 C123.8 243.8 124.3 243.9 124.8 243.9 C125.2 243.9 125.7 243.8 126.2 243.8 C126.6 243.7 127.1 243.6 127.6 243.6 C128.1 243.6 128.5 243.9 129.0 243.9 C129.5 243.9 129.9 243.7 130.4 243.7 C130.9 243.7 131.3 243.9 131.8 243.9 C132.3 243.9 132.8 243.8 133.2 243.7 C133.7 243.7 134.2 243.6 134.6 243.6 C135.1 243.7 135.6 243.8 136.0 243.8 C136.5 243.9 137.0 243.9 137.4 243.9 C137.9 243.9 138.4 243.9 138.9 243.9 C139.3 243.9 139.8 243.7 140.3 243.7 C140.7 243.7 141.2 243.9 141.7 243.9 C142.1 243.9 142.6 243.9 143.1 243.9 C143.6 243.9 144.0 243.8 144.5 243.8 C145.0 243.7 145.4 243.6 145.9 243.6 C146.4 243.6 146.8 243.8 147.3 243.8 C147.8 243.8 148.2 243.8 148.7 243.8 C149.2 243.8 149.7 243.7 150.1 243.7 C150.6 243.7 151.1 243.9 151.5 243.9 C152.0 243.9 152.5 243.7 152.9 243.7 C153.4 243.7 153.9 243.9 154.4 243.9 C154.8 243.9 155.3 243.8 155.8 243.7 C156.2 243.7 156.7 243.6 157.2 243.6 C157.6 243.6 158.1 243.9 158.6 243.9 C159.0 243.9 159.5 243.8 160.0 243.7 C160.5 243.7 160.9 243.7 161.4 243.7 C161.9 243.7 162.3 243.8 162.8 243.9 C163.3 243.9 163.7 243.9 164.2 243.8 C164.7 243.8 165.2 243.6 165.6 243.6 C166.1 243.6 166.6 243.6 167.0 243.6 C167.5 243.7 168.0 243.9 168.4 243.9 C168.9 243.9 169.4 243.7 169.8 243.7 C170.3 243.7 170.8 243.6 171.3 243.6 C171.7 243.6 172.2 243.8 172.7 243.8 C173.1 243.8 173.6 243.7 174.1 243.7 C174.5 243.7 175.0 243.9 175.5 243.9 C176.0 243.9 176.4 243.8 176.9 243.8 C177.4 243.8 177.8 243.7 178.3 243.7 C178.8 243.7 179.2 243.7 179.7 243.7 C180.2 243.7 180.6 243.7 181.1 243.7 C181.6 243.7 182.1 243.9 182.5 243.9 C183.0 243.9 183.5 243.8 183.9 243.8 C184.4 243.8 184.9 243.7 185.3 243.6 C185.8 243.6 186.3 243.7 186.8 243.7 C187.2 243.8 187.7 243.8 188.2 243.8 C188.6 243.8 189.1 243.8 189.6 243.8 C190.0 243.8 190.5 243.6 191.0 243.6 C191.4 243.6 191.9 243.7 192.4 243.7 C192.9 243.8 193.3 243.9 193.8 243.9 C194.3 243.9 194.7 243.7 195.2 243.7 C195.7 243.7 196.1 243.8 196.6 243.8 C197.1 243.8 197.6 243.8 198.0 243.8 C198.5 243.8 199.0 243.8 199.4 243.8 C199.9 243.8 200.4 243.8 200.8 243.8 C201.3 243.8 201.8 243.8 202.2 243.8 C202.7 243.8 203.2 243.9 203.7 243.9 C204.1 243.9 204.6 243.7 205.1 243.7 C205.5 243.7 206.0 243.9 206.5 243.9 C206.9 243.9 207.4 243.7 207.9 243.7 C208.4 243.7 208.8 243.9 209.3 243.9 C209.8 243.9 210.2 243.7 210.7 243.7 C211.2 243.7 211.6 243.7 212.1 243.7 C212.6 243.7 213.0 243.8 213.5 243.8 C214.0 243.8 214.5 243.7 214.9 243.7 C215.4 243.7 215.9 243.8 216.3 243.8 C216.8 243.8 217.3 243.7 217.7 243.7 C218.2 243.7 218.7 243.8 219.1 243.8 C219.6 243.8 220.1 243.8 220.6 243.8 C221.0 243.8 221.5 243.6 222.0 243.6 C222.4 243.6 222.9 243.8 223.4 243.8 C223.8 243.8 224.3 243.8 224.8 243.8 C225.3 243.8 225.7 243.6 226.2 243.6 C226.7 243.6 227.1 243.8 227.6 243.8 C228.1 243.8 228.5 243.7 229.0 243.7 C229.5 243.7 229.9 243.9 230.4 243.9 C230.9 243.8 231.4 243.7 231.8 243.7 C232.3 243.7 232.8 243.8 233.2 243.8 C233.7 243.9 234.2 243.9 234.6 243.9 C235.1 243.9 235.6 243.6 236.1 243.6 C236.5 243.6 237.0 243.9 237.5 243.9 C237.9 243.9 238.4 243.7 238.9 243.6 C239.3 243.6 239.8 243.6 240.3 243.6 C240.7 243.6 241.2 243.7 241.7 243.7 C242.2 243.8 242.6 243.9 243.1 243.9 C243.6 243.9 244.0 243.9 244.5 243.9 C245.0 243.9 245.4 243.9 245.9 243.8 C246.4 243.8 246.9 243.8 247.3 243.8 C247.8 243.8 248.3 243.8 248.7 243.7 C249.2 243.7 249.7 243.6 250.1 243.6 C250.6 243.6 251.1 243.8 251.5 243.8 C252.0 243.8 252.5 243.9 253.0 243.9 C253.4 243.9 253.9 243.7 254.4 243.7 C254.8 243.7 255.3 243.8 255.8 243.9 C256.2 243.9 256.7 243.9 257.2 243.9 C257.7 243.9 258.1 243.8 258.6 243.7 C259.1 243.7 259.5 243.7 260.0 243.7 C260.5 243.7 260.9 243.9 261.4 243.9 C261.9 243.9 262.3 243.8 262.8 243.8 C263.3 243.7 263.8 243.7 264.2 243.7 C264.7 243.7 265.2 243.7 265.6 243.7 C266.1 243.7 266.6 243.8 267.0 243.8 C267.5 243.8 268.0 243.6 268.5 243.6 C268.9 243.7 269.4 243.8 269.9 243.9 C270.3 243.9 270.8 243.7 271.3 243.7 C271.7 243.7 272.2 243.7 272.7 243.7 C273.1 243.7 273.6 243.6 274.1 243.6 C274.6 243.7 275.0 243.7 275.5 243.8 C276.0 243.8 276.4 243.9 276.9 243.9 C277.4 243.9 277.8 243.9 278.3 243.9 C278.8 243.9 279.3 243.8 279.7 243.7 C280.2 243.7 280.7 243.9 281.1 243.9 C281.6 243.8 282.1 243.7 282.5 243.7 C283.0 243.7 283.5 243.9 283.9 243.9 C284.4 243.9 284.9 243.7 285.4 243.7 C285.8 243.7 286.3 243.8 286.8 243.8 C287.2 243.9 287.7 243.9 288.2 243.9 C288.6 243.9 289.1 243.9 289.6 243.9 C290.1 243.8 290.5 243.8 291.0 243.8 C291.5 243.7 291.9 243.7 292.4 243.7 C292.9 243.7 293.3 243.8 293.8 243.8 C294.3 243.8 294.7 243.9 295.2 243.9 C295.7 243.8 296.2 243.8 296.6 243.8 C297.1 243.7 297.6 243.6 298.0 243.6 C298.5 243.6 299.0 243.7 299.4 243.7 C299.9 243.7 300.4 243.6 300.9 243.6 C301.3 243.6 301.8 243.9 302.3 243.9 C302.7 243.9 303.2 243.7 303.7 243.6 C304.1 243.6 304.6 243.6 305.1 243.6 C305.5 243.7 306.0 243.7 306.5 243.7 C307.0 243.7 307.4 243.7 307.9 243.7 C308.4 243.7 308.8 243.7 309.3 243.7 C309.8 243.7 310.2 243.6 310.7 243.6 C311.2 243.7 311.7 243.9 312.1 243.9 C312.6 243.9 313.1 243.7 313.5 243.7 C314.0 243.7 314.5 243.7 314.9 243.7 C315.4 243.8 315.9 243.8 316.3 243.8 C316.8 243.8 317.3 243.7 317.8 243.7 C318.2 243.7 318.7 243.7 319.2 243.7 C319.6 243.7 320.1 243.9 320.6 243.9 C321.0 243.9 321.5 243.7 322.0 243.7 C322.5 243.7 322.9 243.8 323.4 243.8 C323.9 243.8 324.3 243.8 324.8 243.8 C325.3 243.7 325.7 243.7 326.2 243.7 C326.7 243.7 327.1 243.9 327.6 243.9 C328.1 243.9 328.6 243.7 329.0 243.7 C329.5 243.7 330.0 243.8 330.4 243.8 C330.9 243.8 331.4 243.6 331.8 243.6 C332.3 243.6 332.8 243.8 333.3 243.8 C333.7 243.8 334.2 243.7 334.7 243.7 C335.1 243.7 335.6 243.7 336.1 243.7 C336.5 243.7 337.0 243.7 337.5 243.7 C337.9 243.7 338.4 243.6 338.9 243.6 C339.4 243.7 339.8 243.9 340.3 243.9 C340.8 243.9 341.2 243.8 341.7 243.7 C342.2 243.7 342.6 243.7 343.1 243.7 C343.6 243.7 344.1 243.7 344.5 243.7 C345.0 243.7 345.5 243.8 345.9 243.8 C346.4 243.8 346.9 243.9 347.3 243.9 C347.8 243.9 348.3 243.9 348.7 243.8 C349.2 243.8 349.7 243.7 350.2 243.7 C350.6 243.7 351.1 243.8 351.6 243.9 C352.0 243.9 352.5 243.9 353.0 243.9 C353.4 243.9 353.9 243.8 354.4 243.8 C354.9 243.8 355.3 243.8 355.8 243.8 C356.3 243.8 356.7 243.7 357.2 243.7 C357.7 243.8 358.1 243.9 358.6 243.9 C359.1 243.9 359.5 243.7 360.0 243.7 C360.5 243.7 361.0 243.8 361.4 243.8 C361.9 243.8 362.4 243.7 362.8 243.7 C363.3 243.7 363.8 243.9 364.2 243.9 C364.7 243.9 365.2 243.6 365.7 243.6 C366.1 243.6 366.6 243.7 367.1 243.7 C367.5 243.7 368.0 243.6 368.5 243.6 C368.9 243.6 369.4 243.6 369.9 243.6 C370.3 243.6 370.8 243.6 371.3 243.7 C371.8 243.7 372.2 243.8 372.7 243.9 C373.2 243.9 373.6 243.8 374.1 243.8 C374.6 243.8 375.0 243.8 375.5 243.8 C376.0 243.8 376.5 243.7 376.9 243.7 C377.4 243.7 377.9 243.8 378.3 243.8 C378.8 243.8 379.3 243.8 379.7 243.8 C380.2 243.8 380.7 243.9 381.1 243.9 C381.6 243.9 382.1 243.9 382.6 243.9 C383.0 243.8 383.5 243.7 384.0 243.6 C384.4 243.6 384.9 243.6 385.4 243.6 C385.8 243.6 386.3 243.8 386.8 243.8 C387.3 243.8 387.7 243.7 388.2 243.7 C388.7 243.7 389.1 243.8 389.6 243.8 C390.1 243.8 390.5 243.7 391.0 243.7 C391.5 243.8 391.9 243.8 392.4 243.8 C392.9 243.8 393.4 243.7 393.8 243.7 C394.3 243.7 394.8 243.8 395.2 243.8 C395.7 243.8 396.2 243.8 396.6 243.8 C397.1 243.8 397.6 243.7 398.1 243.7 C398.5 243.8 399.0 243.8 399.5 243.8 C399.9 243.8 400.4 243.8 400.9 243.8 C401.3 243.7 401.8 243.6 402.3 243.6 C402.7 243.6 403.2 243.9 403.7 243.9 C404.2 243.9 404.6 243.9 405.1 243.9 C405.6 243.8 406.0 243.7 406.5 243.7 C407.0 243.7 407.4 243.9 407.9 243.9 C408.4 243.9 408.9 243.9 409.3 243.8 C409.8 243.8 410.3 243.7 410.7 243.7 C411.2 243.7 411.7 243.7 412.1 243.7 C412.6 243.8 413.1 243.8 413.5 243.8 C414.0 243.9 414.5 243.9 415.0 243.9 C415.4 243.9 415.9 243.8 416.4 243.8 C416.8 243.8 417.3 243.8 417.8 243.8 C418.2 243.8 418.7 243.7 419.2 243.7 C419.7 243.6 420.1 243.6 420.6 243.6 C421.1 243.6 421.5 243.7 422.0 243.7 C422.5 243.7 422.9 243.6 423.4 243.6 C423.9 243.6 424.3 243.6 424.8 243.6 C425.3 243.6 425.8 243.6 426.2 243.6 C426.7 243.6 427.2 243.6 427.6 243.6 C428.1 243.6 428.6 243.6 429.0 243.6 C429.5 243.7 430.0 243.8 430.4 243.9 C430.9 243.9 431.4 243.8 431.9 243.8 C432.3 243.8 432.8 243.8 433.3 243.8 C433.7 243.8 434.2 243.7 434.7 243.7 C435.1 243.7 435.6 243.7 436.1 243.8 C436.6 243.8 437.0 243.8 437.5 243.8 C438.0 243.8 438.4 243.7 438.9 243.7 C439.4 243.7 439.8 243.8 440.3 243.8 C440.8 243.8 441.2 243.8 441.7 243.8 C442.2 243.8 442.7 243.8 443.1 243.8 C443.6 243.8 444.1 243.8 444.5 243.8 C445.0 243.8 445.5 243.7 445.9 243.7 C446.4 243.7 446.9 243.7 447.4 243.7 C447.8 243.7 448.3 243.8 448.8 243.8 C449.2 243.8 449.7 243.8 450.2 243.8 C450.6 243.8 451.1 243.8 451.6 243.8 C452.0 243.8 452.5 243.8 453.0 243.8 C453.5 243.8 453.9 243.9 454.4 243.9 C454.9 243.8 455.3 243.7 455.8 243.7 C456.3 243.7 456.7 243.8 457.2 243.8 C457.7 243.8 458.2 243.7 458.6 243.7 C459.1 243.7 459.6 243.7 460.0 243.7 C460.5 243.7 461.0 243.9 461.4 243.9 C461.9 243.9 462.4 243.7 462.8 243.7 C463.3 243.7 463.8 243.8 464.3 243.8 C464.7 243.8 465.2 243.8 465.7 243.8 C466.1 243.8 466.6 243.7 467.1 243.7 C467.5 243.7 468.0 243.7 468.5 243.7 C469.0 243.7 469.4 243.6 469.9 243.6 C470.4 243.6 470.8 243.7 471.3 243.7 C471.8 243.7 472.2 243.8 472.7 243.8 C473.2 243.8 473.6 243.7 474.1 243.7 C474.6 243.7 475.1 243.8 475.5 243.8 C476.0 243.8 476.5 243.9 476.9 243.9 C477.4 243.9 477.9 243.8 478.3 243.7 C478.8 243.7 479.3 243.8 479.8 243.8 C480.2 243.7 480.7 243.6 481.2 243.6 C481.6 243.7 482.1 243.8 482.6 243.8 C483.0 243.8 483.5 243.7 484.0 243.7 C484.4 243.7 484.9 243.7 485.4 243.8 C485.9 243.8 486.3 243.9 486.8 243.9 C487.3 243.9 487.7 243.7 488.2 243.7 C488.7 243.7 489.1 243.8 489.6 243.8 C490.1 243.8 490.6 243.7 491.0 243.7 C491.5 243.8 492.0 243.9 492.4 243.9 C492.9 243.9 493.4 243.9 493.8 243.9 C494.3 243.9 494.8 243.6 495.2 243.6 C495.7 243.6 496.2 243.9 496.7 243.9 C497.1 243.9 497.6 243.9 498.1 243.9 C498.5 243.9 499.0 243.9 499.5 243.9 C499.9 243.9 500.4 243.9 500.9 243.9 C501.4 243.8 501.8 243.7 502.3 243.7 C502.8 243.7 503.6 243.8 504.1 243.8 C504.5 243.5 504.7 242.6 505.1 242.0 C505.5 241.4 506.0 240.7 506.5 240.0 C507.0 239.3 507.5 238.6 507.9 237.9 C508.4 237.2 508.9 236.3 509.3 235.6 C509.8 234.9 510.2 234.4 510.7 233.6 C511.3 232.7 512.1 231.1 512.6 230.7 C513.1 230.7 513.2 231.1 513.6 231.3 C514.0 231.4 514.5 231.5 515.0 231.7 C515.4 231.9 515.9 232.2 516.4 232.4 C516.8 232.7 517.3 232.9 517.8 233.1 C518.3 233.3 518.8 233.5 519.2 233.7 C519.6 233.8 519.7 234.0 520.2 234.1 C520.7 234.1 521.5 234.1 522.0 234.1 C522.5 234.1 523.0 234.2 523.4 234.2 C523.9 234.2 524.4 234.1 524.8 234.0 C525.3 234.0 525.8 234.0 526.2 234.0 C526.7 234.0 527.2 234.0 527.6 234.1 C528.1 234.1 528.6 234.2 529.1 234.2 C529.5 234.2 530.0 234.0 530.5 234.0 C530.9 234.0 531.4 234.2 531.9 234.2 C532.3 234.2 532.8 234.1 533.3 234.1 C533.8 234.0 534.2 234.0 534.7 234.0 C535.2 234.0 535.6 234.0 536.1 234.0 C536.6 234.0 537.0 234.0 537.5 234.0 C538.0 234.0 538.4 234.0 538.9 234.0 C539.4 234.0 539.9 234.1 540.3 234.1 C540.8 234.2 541.3 234.2 541.7 234.2 C542.2 234.2 542.7 234.1 543.1 234.1 C543.6 234.1 544.1 234.0 544.6 234.0 C545.0 234.0 545.5 234.1 546.0 234.2 C546.4 234.2 546.9 234.1 547.4 234.1 C547.8 234.1 548.2 234.0 548.8 234.0 C549.3 234.0 550.2 234.0 550.6 234.1 C551.1 234.1 551.2 234.2 551.6 234.2 C552.0 234.3 552.5 234.3 553.0 234.3 C553.5 234.3 553.9 234.4 554.4 234.5 C554.9 234.5 555.4 234.5 555.8 234.5 C556.3 234.6 556.8 234.8 557.2 234.9 C557.7 235.0 558.2 235.0 558.6 235.0 C559.1 235.0 559.6 235.0 560.0 235.0 C560.5 235.0 561.0 235.1 561.5 235.2 C561.9 235.3 562.4 235.4 562.9 235.5 C563.3 235.6 563.8 235.6 564.3 235.7 C564.7 235.7 565.1 235.8 565.7 235.8 C566.3 235.8 567.4 235.9 567.7 235.9" fill="none" stroke="#f2cc0c" stroke-width="1.05" stroke-linejoin="round"/><rect x="24.9" y="276" width="14" height="4" rx="1" fill="#73bf69"/><rect x="293.0" y="276" width="14" height="4" rx="1" fill="#f2cc0c"/></svg></div><div class="panel" style="left:15px;top:790px;width:608px;height:296px"><svg style="position:absolute;left:-1px;top:-1px" width="608" height="296" viewBox="0 0 608 296"><defs><linearGradient id="g15_854_0" x1="0" y1="58.3" x2="0" y2="244.5" gradientUnits="userSpaceOnUse"><stop offset="0" stop-color="#73bf69" stop-opacity="0.72"/><stop offset="1" stop-color="#73bf69" stop-opacity="0"/></linearGradient><linearGradient id="g15_854_1" x1="0" y1="58.3" x2="0" y2="244.5" gradientUnits="userSpaceOnUse"><stop offset="0" stop-color="#f2cc0c" stop-opacity="0.72"/><stop offset="1" stop-color="#f2cc0c" stop-opacity="0"/></linearGradient></defs><line x1="43" x2="574" y1="244.5" y2="244.5" stroke="#2f3237" stroke-width="1"/><line x1="43" x2="574" y1="207.3" y2="207.3" stroke="#2f3237" stroke-width="1"/><line x1="43" x2="574" y1="170.0" y2="170.0" stroke="#2f3237" stroke-width="1"/><line x1="43" x2="574" y1="132.8" y2="132.8" stroke="#2f3237" stroke-width="1"/><line x1="43" x2="574" y1="95.5" y2="95.5" stroke="#2f3237" stroke-width="1"/><line x1="43" x2="574" y1="58.3" y2="58.3" stroke="#2f3237" stroke-width="1"/><line x1="88.4" x2="88.4" y1="58.3" y2="248.5" stroke="#2f3237" stroke-width="1"/><line x1="176.3" x2="176.3" y1="58.3" y2="248.5" stroke="#2f3237" stroke-width="1"/><line x1="264.3" x2="264.3" y1="58.3" y2="248.5" stroke="#2f3237" stroke-width="1"/><line x1="352.2" x2="352.2" y1="58.3" y2="248.5" stroke="#2f3237" stroke-width="1"/><line x1="440.2" x2="440.2" y1="58.3" y2="248.5" stroke="#2f3237" stroke-width="1"/><line x1="528.1" x2="528.1" y1="58.3" y2="248.5" stroke="#2f3237" stroke-width="1"/><path d="M48.39 242.64 C48.6 242.6 49.4 242.6 49.9 242.6 C50.3 242.6 50.8 242.7 51.3 242.7 C51.8 242.7 52.3 242.6 52.8 242.6 C53.3 242.6 53.8 242.9 54.3 242.9 C54.7 242.8 55.2 242.5 55.7 242.4 C56.2 242.4 56.7 242.4 57.2 242.4 C57.7 242.4 58.2 242.4 58.6 242.5 C59.1 242.6 59.6 242.9 60.1 242.9 C60.6 242.9 61.1 242.6 61.6 242.6 C62.1 242.6 62.6 242.7 63.0 242.8 C63.5 242.8 64.0 242.8 64.5 242.8 C65.0 242.7 65.5 242.4 66.0 242.3 C66.5 242.3 67.0 242.3 67.4 242.3 C67.9 242.4 68.4 243.0 68.9 243.0 C69.4 243.0 69.9 242.4 70.4 242.4 C70.9 242.4 71.3 242.5 71.8 242.6 C72.3 242.6 72.8 242.7 73.3 242.7 C73.8 242.8 74.3 242.8 74.8 242.8 C75.3 242.8 75.7 242.5 76.2 242.5 C76.7 242.5 77.2 242.7 77.7 242.7 C78.2 242.7 78.7 242.5 79.2 242.5 C79.7 242.5 80.1 242.5 80.6 242.5 C81.1 242.6 81.6 242.9 82.1 242.9 C82.6 242.9 83.1 242.5 83.6 242.4 C84.1 242.3 84.5 242.3 85.0 242.3 C85.5 242.3 86.0 242.3 86.5 242.3 C87.0 242.3 87.5 242.4 88.0 242.6 C88.4 242.7 88.9 242.9 89.4 243.0 C89.9 243.0 90.4 243.0 90.9 243.0 C91.4 243.0 91.9 243.0 92.4 242.9 C92.8 242.8 93.3 242.3 93.8 242.3 C94.3 242.3 94.8 242.7 95.3 242.8 C95.8 242.8 96.3 242.8 96.8 242.7 C97.2 242.7 97.7 242.3 98.2 242.3 C98.7 242.3 99.2 242.7 99.7 242.8 C100.2 242.8 100.7 242.6 101.2 242.6 C101.6 242.6 102.1 242.6 102.6 242.7 C103.1 242.7 103.6 243.0 104.1 243.0 C104.6 242.9 105.1 242.7 105.5 242.6 C106.0 242.5 106.5 242.4 107.0 242.4 C107.5 242.4 108.0 242.8 108.5 242.9 C109.0 242.9 109.5 242.9 109.9 242.8 C110.4 242.8 110.9 242.7 111.4 242.7 C111.9 242.7 112.4 243.0 112.9 243.0 C113.4 243.0 113.9 242.7 114.3 242.6 C114.8 242.5 115.3 242.4 115.8 242.4 C116.3 242.4 116.8 242.5 117.3 242.5 C117.8 242.6 118.3 242.6 118.7 242.6 C119.2 242.6 119.7 242.4 120.2 242.4 C120.7 242.4 121.2 242.9 121.7 242.9 C122.2 242.9 122.6 242.6 123.1 242.6 C123.6 242.6 124.1 242.7 124.6 242.7 C125.1 242.7 125.6 242.6 126.1 242.6 C126.6 242.6 127.0 242.9 127.5 242.9 C128.0 242.9 128.5 242.4 129.0 242.4 C129.5 242.4 130.0 242.9 130.5 242.9 C131.0 242.9 131.4 242.9 131.9 242.9 C132.4 242.8 132.9 242.5 133.4 242.4 C133.9 242.3 134.4 242.3 134.9 242.3 C135.3 242.4 135.8 242.6 136.3 242.7 C136.8 242.7 137.3 242.7 137.8 242.7 C138.3 242.7 138.8 242.8 139.3 242.8 C139.7 242.8 140.2 242.8 140.7 242.8 C141.2 242.8 141.7 242.6 142.2 242.6 C142.7 242.6 143.2 242.8 143.7 242.9 C144.1 242.9 144.6 242.9 145.1 242.9 C145.6 242.9 146.1 242.7 146.6 242.7 C147.1 242.7 147.6 242.9 148.1 242.9 C148.5 242.9 149.0 242.6 149.5 242.5 C150.0 242.4 150.5 242.4 151.0 242.4 C151.5 242.4 152.0 242.4 152.4 242.4 C152.9 242.5 153.4 242.6 153.9 242.7 C154.4 242.7 154.9 242.7 155.4 242.8 C155.9 242.8 156.4 242.7 156.8 242.7 C157.3 242.7 157.8 243.0 158.3 243.0 C158.8 243.0 159.3 242.5 159.8 242.5 C160.3 242.5 160.8 242.7 161.2 242.8 C161.7 242.8 162.2 242.8 162.7 242.8 C163.2 242.8 163.7 243.0 164.2 243.0 C164.7 242.9 165.2 242.7 165.6 242.7 C166.1 242.6 166.6 242.6 167.1 242.6 C167.6 242.6 168.1 242.7 168.6 242.7 C169.1 242.7 169.5 242.4 170.0 242.4 C170.5 242.4 171.0 242.4 171.5 242.5 C172.0 242.6 172.5 242.8 173.0 242.8 C173.5 242.8 173.9 242.7 174.4 242.6 C174.9 242.5 175.4 242.3 175.9 242.3 C176.4 242.3 176.9 242.6 177.4 242.6 C177.9 242.6 178.3 242.6 178.8 242.6 C179.3 242.6 179.8 242.9 180.3 243.0 C180.8 243.0 181.3 242.7 181.8 242.6 C182.3 242.6 182.7 242.7 183.2 242.7 C183.7 242.7 184.2 242.7 184.7 242.7 C185.2 242.7 185.7 242.7 186.2 242.7 C186.6 242.7 187.1 242.6 187.6 242.6 C188.1 242.6 188.6 242.6 189.1 242.6 C189.6 242.6 190.1 242.6 190.6 242.6 C191.0 242.7 191.5 242.9 192.0 242.9 C192.5 242.9 193.0 242.7 193.5 242.7 C194.0 242.6 194.3 242.7 194.8 242.6 C195.3 236.3 196.0 204.5 196.6 204.5 C197.2 204.5 197.9 236.3 198.3 242.6 C198.8 242.6 198.9 242.3 199.4 242.3 C199.8 242.3 200.3 242.6 200.8 242.7 C201.3 242.8 201.8 242.9 202.3 243.0 C202.8 243.0 203.3 243.0 203.7 243.0 C204.2 242.9 204.7 242.6 205.2 242.6 C205.7 242.6 206.2 242.9 206.7 243.0 C207.2 243.0 207.7 242.9 208.1 242.9 C208.6 242.9 209.1 242.9 209.6 242.9 C210.1 242.9 210.6 242.8 211.1 242.7 C211.6 242.6 212.1 242.3 212.5 242.3 C213.0 242.3 213.5 242.6 214.0 242.6 C214.5 242.7 215.0 242.7 215.5 242.7 C216.0 242.7 216.5 242.7 216.9 242.7 C217.4 242.7 217.9 242.6 218.4 242.6 C218.9 242.6 219.4 242.7 219.9 242.7 C220.4 242.6 220.8 242.5 221.3 242.5 C221.8 242.4 222.3 242.3 222.8 242.3 C223.3 242.3 223.8 242.4 224.3 242.5 C224.8 242.5 225.2 242.7 225.7 242.7 C226.2 242.7 226.7 242.6 227.2 242.5 C227.7 242.5 228.2 242.3 228.7 242.3 C229.2 242.4 229.6 242.8 230.1 242.9 C230.6 242.9 231.1 242.9 231.6 242.8 C232.1 242.8 232.6 242.6 233.1 242.5 C233.5 242.5 234.0 242.5 234.5 242.5 C235.0 242.5 235.5 242.5 236.0 242.5 C236.5 242.5 237.0 242.6 237.5 242.6 C237.9 242.5 238.4 242.4 238.9 242.4 C239.4 242.4 239.9 242.7 240.4 242.7 C240.9 242.7 241.4 242.5 241.9 242.4 C242.3 242.3 242.8 242.3 243.3 242.3 C243.8 242.3 244.3 242.7 244.8 242.7 C245.3 242.7 245.8 242.4 246.3 242.4 C246.7 242.4 247.2 242.5 247.7 242.5 C248.2 242.5 248.7 242.3 249.2 242.3 C249.7 242.4 250.2 243.0 250.6 243.0 C251.1 243.0 251.6 242.4 252.1 242.3 C252.6 242.3 253.1 242.4 253.6 242.4 C254.1 242.4 254.6 242.3 255.0 242.3 C255.5 242.3 256.0 242.3 256.5 242.3 C257.0 242.4 257.5 242.8 258.0 242.8 C258.5 242.8 259.0 242.5 259.4 242.5 C259.9 242.5 260.4 242.9 260.9 242.9 C261.4 242.9 261.9 242.7 262.4 242.6 C262.9 242.5 263.4 242.3 263.8 242.3 C264.3 242.4 264.8 242.8 265.3 242.9 C265.8 242.9 266.3 242.7 266.8 242.7 C267.3 242.8 267.7 242.9 268.2 243.0 C268.7 243.0 269.2 242.9 269.7 242.9 C270.2 242.9 270.7 242.9 271.2 242.9 C271.7 242.9 272.1 242.9 272.6 242.9 C273.1 242.8 273.6 242.4 274.1 242.3 C274.6 242.3 275.1 242.3 275.6 242.3 C276.1 242.4 276.5 242.6 277.0 242.7 C277.5 242.7 278.0 242.5 278.5 242.5 C279.0 242.5 279.5 242.5 280.0 242.5 C280.5 242.5 280.9 242.6 281.4 242.6 C281.9 242.7 282.4 242.7 282.9 242.7 C283.4 242.7 283.9 242.5 284.4 242.5 C284.8 242.5 285.3 242.5 285.8 242.6 C286.3 242.6 286.8 242.8 287.3 242.8 C287.8 242.8 288.3 242.8 288.8 242.7 C289.2 242.7 289.7 242.6 290.2 242.5 C290.7 242.5 291.2 242.5 291.7 242.5 C292.2 242.6 292.7 242.9 293.2 242.9 C293.6 242.9 294.1 242.6 294.6 242.6 C295.1 242.5 295.6 242.4 296.1 242.4 C296.6 242.4 297.1 242.4 297.6 242.4 C298.0 242.4 298.5 242.4 299.0 242.5 C299.5 242.6 300.0 242.9 300.5 243.0 C301.0 243.0 301.5 242.7 301.9 242.7 C302.4 242.7 302.9 242.9 303.4 242.9 C303.9 243.0 304.4 243.0 304.9 243.0 C305.4 242.9 305.9 242.9 306.3 242.8 C306.8 242.8 307.3 242.7 307.8 242.7 C308.3 242.6 308.8 242.5 309.3 242.4 C309.8 242.4 310.3 242.5 310.7 242.5 C311.2 242.6 311.7 242.8 312.2 242.8 C312.7 242.8 313.2 242.5 313.7 242.5 C314.2 242.5 314.6 242.6 315.1 242.6 C315.6 242.6 316.1 242.6 316.6 242.6 C317.1 242.7 317.6 242.8 318.1 242.8 C318.6 242.8 319.0 242.7 319.5 242.7 C320.0 242.7 320.5 242.8 321.0 242.8 C321.5 242.7 322.0 242.5 322.5 242.5 C323.0 242.5 323.4 242.6 323.9 242.7 C324.4 242.7 324.9 242.7 325.4 242.7 C325.9 242.7 326.4 242.7 326.9 242.7 C327.4 242.7 327.8 242.7 328.3 242.7 C328.8 242.6 329.3 242.5 329.8 242.5 C330.3 242.5 330.8 242.5 331.3 242.5 C331.7 242.5 332.2 242.4 332.7 242.4 C333.2 242.5 333.7 242.7 334.2 242.7 C334.7 242.7 335.2 242.5 335.7 242.4 C336.1 242.3 336.6 242.3 337.1 242.3 C337.6 242.3 338.1 242.3 338.6 242.3 C339.1 242.3 339.6 242.4 340.1 242.5 C340.5 242.6 341.0 243.0 341.5 243.0 C342.0 242.9 342.5 242.5 343.0 242.4 C343.5 242.4 344.0 242.4 344.5 242.4 C344.9 242.5 345.4 242.9 345.9 243.0 C346.4 243.0 346.9 242.8 347.4 242.8 C347.9 242.8 348.4 242.8 348.8 242.8 C349.3 242.7 349.8 242.5 350.3 242.5 C350.8 242.5 351.3 242.5 351.8 242.6 C352.3 242.6 352.8 242.7 353.2 242.8 C353.7 242.9 354.2 242.9 354.7 242.9 C355.2 242.9 355.7 242.9 356.2 242.9 C356.7 242.9 357.2 242.9 357.6 242.9 C358.1 242.9 358.6 242.5 359.1 242.4 C359.6 242.3 360.1 242.3 360.6 242.3 C361.1 242.4 361.6 242.8 362.0 242.8 C362.5 242.8 363.0 242.5 363.5 242.5 C364.0 242.4 364.5 242.3 365.0 242.3 C365.5 242.4 365.9 242.8 366.4 242.9 C366.9 242.9 367.4 242.6 367.9 242.6 C368.4 242.6 368.9 242.7 369.4 242.7 C369.9 242.6 370.3 242.3 370.8 242.3 C371.3 242.3 371.8 242.3 372.3 242.4 C372.8 242.5 373.3 242.9 373.8 243.0 C374.3 243.0 374.7 243.0 375.2 242.9 C375.7 242.8 376.2 242.4 376.7 242.4 C377.2 242.4 377.7 242.5 378.2 242.6 C378.7 242.6 379.1 242.6 379.6 242.6 C380.1 242.6 380.6 242.4 381.1 242.4 C381.6 242.4 382.1 242.4 382.6 242.4 C383.0 242.4 383.5 242.3 384.0 242.3 C384.5 242.4 385.0 242.7 385.5 242.8 C386.0 242.9 386.5 243.0 387.0 243.0 C387.4 242.9 387.9 242.5 388.4 242.5 C388.9 242.5 389.4 243.0 389.9 243.0 C390.4 243.0 390.9 242.7 391.4 242.6 C391.8 242.5 392.3 242.4 392.8 242.4 C393.3 242.4 393.8 242.7 394.3 242.7 C394.8 242.7 395.3 242.6 395.8 242.6 C396.2 242.6 396.7 242.8 397.2 242.9 C397.7 242.9 398.2 242.9 398.7 242.9 C399.2 242.8 399.7 242.6 400.1 242.6 C400.6 242.5 401.1 242.4 401.6 242.4 C402.1 242.3 402.6 242.3 403.1 242.3 C403.6 242.4 404.1 243.0 404.5 243.0 C405.0 243.0 405.5 242.4 406.0 242.3 C406.5 242.3 407.0 242.6 407.5 242.6 C408.0 242.7 408.5 242.7 408.9 242.8 C409.4 242.8 409.9 242.7 410.4 242.7 C410.9 242.7 411.4 242.6 411.9 242.6 C412.4 242.6 412.8 242.7 413.3 242.8 C413.8 242.8 414.3 242.9 414.8 242.9 C415.3 242.8 415.8 242.4 416.3 242.4 C416.8 242.4 417.2 242.5 417.7 242.5 C418.2 242.5 418.7 242.6 419.2 242.6 C419.7 242.6 420.2 242.5 420.7 242.5 C421.2 242.4 421.6 242.3 422.1 242.3 C422.6 242.3 423.1 242.9 423.6 242.9 C424.1 242.9 424.6 242.5 425.1 242.4 C425.6 242.4 426.0 242.4 426.5 242.4 C427.0 242.5 427.5 242.7 428.0 242.8 C428.5 242.8 429.0 242.6 429.5 242.6 C429.9 242.6 430.4 242.6 430.9 242.7 C431.4 242.7 431.9 242.9 432.4 242.9 C432.9 242.9 433.4 242.7 433.9 242.7 C434.3 242.7 434.8 242.9 435.3 242.9 C435.8 242.8 436.3 242.3 436.8 242.3 C437.3 242.3 437.8 242.8 438.3 242.9 C438.7 242.9 439.2 242.6 439.7 242.5 C440.2 242.5 440.7 242.6 441.2 242.6 C441.7 242.5 442.2 242.3 442.7 242.3 C443.1 242.3 443.6 242.3 444.1 242.4 C444.6 242.5 445.1 242.7 445.6 242.7 C446.1 242.7 446.6 242.7 447.0 242.7 C447.5 242.8 448.0 242.9 448.5 243.0 C449.0 243.0 449.5 243.0 450.0 243.0 C450.5 242.9 451.0 242.9 451.4 242.8 C451.9 242.7 452.4 242.3 452.9 242.3 C453.4 242.3 453.9 242.9 454.4 243.0 C454.9 243.0 455.4 243.0 455.8 242.9 C456.3 242.8 456.8 242.6 457.3 242.5 C457.8 242.5 458.3 242.7 458.8 242.7 C459.3 242.8 459.8 242.9 460.2 242.9 C460.7 242.8 461.2 242.3 461.7 242.3 C462.2 242.3 462.7 242.9 463.2 243.0 C463.7 243.0 464.1 242.6 464.6 242.6 C465.1 242.6 465.6 242.7 466.1 242.7 C466.6 242.7 467.1 242.7 467.6 242.8 C468.1 242.8 468.5 242.8 469.0 242.9 C469.5 242.9 470.0 242.9 470.5 242.9 C471.0 242.9 471.5 242.8 472.0 242.7 C472.5 242.6 472.9 242.5 473.4 242.5 C473.9 242.5 474.4 242.7 474.9 242.7 C475.4 242.7 475.9 242.5 476.4 242.4 C476.9 242.4 477.3 242.4 477.8 242.4 C478.3 242.4 478.8 242.9 479.3 242.9 C479.8 242.9 480.3 242.4 480.8 242.4 C481.2 242.4 481.7 242.5 482.2 242.6 C482.7 242.6 483.2 242.7 483.7 242.7 C484.2 242.7 484.7 242.7 485.2 242.6 C485.6 242.6 486.1 242.3 486.6 242.3 C487.1 242.4 487.6 242.6 488.1 242.7 C488.6 242.8 489.1 242.9 489.6 242.9 C490.0 242.9 490.5 242.3 491.0 242.3 C491.5 242.3 492.0 242.8 492.5 242.9 C493.0 242.9 493.5 242.9 494.0 242.9 C494.4 242.9 494.9 242.5 495.4 242.5 C495.9 242.5 496.4 242.7 496.9 242.8 C497.4 242.8 497.9 242.8 498.3 242.8 C498.8 242.8 499.3 242.6 499.8 242.5 C500.3 242.5 500.8 242.3 501.3 242.3 C501.8 242.4 502.3 242.8 502.7 242.8 C503.2 242.8 503.7 242.4 504.2 242.3 C504.7 242.3 505.2 242.5 505.7 242.5 C506.2 242.6 506.7 242.5 507.1 242.6 C507.6 242.6 508.1 242.6 508.6 242.6 C509.1 242.7 509.6 243.0 510.1 243.0 C510.6 243.0 511.0 243.0 511.5 242.9 C512.0 242.8 512.5 242.6 513.0 242.5 C513.5 242.5 514.0 242.5 514.5 242.5 C515.0 242.6 515.4 242.9 515.9 242.9 C516.4 242.9 516.9 242.6 517.4 242.5 C517.9 242.5 518.4 242.6 518.9 242.7 C519.4 242.7 519.8 242.6 520.3 242.6 C520.8 242.6 521.3 242.7 521.8 242.7 C522.3 242.8 522.8 242.8 523.3 242.8 C523.8 242.8 524.2 242.8 524.7 242.7 C525.2 242.7 525.7 242.3 526.2 242.3 C526.7 242.3 527.2 242.9 527.7 242.9 C528.1 242.9 528.6 242.4 529.1 242.4 C529.6 242.4 530.1 242.5 530.6 242.6 C531.1 242.7 531.6 243.0 532.1 243.0 C532.5 242.9 533.0 242.4 533.5 242.4 C534.0 242.4 534.5 243.0 535.0 243.0 C535.5 243.0 536.0 242.4 536.5 242.4 C536.9 242.4 537.4 242.8 537.9 242.8 C538.4 242.7 538.9 242.4 539.4 242.3 C539.9 242.3 540.4 242.4 540.9 242.5 C541.3 242.5 541.8 242.7 542.3 242.7 C542.8 242.7 543.3 242.6 543.8 242.5 C544.3 242.5 544.8 242.3 545.2 242.3 C545.7 242.3 546.2 242.8 546.7 242.9 C547.2 242.9 547.7 242.9 548.2 242.9 C548.7 242.8 549.2 242.9 549.6 242.8 C550.1 242.7 550.6 242.4 551.1 242.4 C551.6 242.4 552.1 242.8 552.6 242.8 C553.1 242.8 553.6 242.8 554.0 242.8 C554.5 242.8 555.0 242.6 555.5 242.6 C556.0 242.6 556.5 242.6 557.0 242.6 C557.5 242.6 558.0 242.7 558.4 242.7 C558.9 242.7 559.4 242.6 559.9 242.6 C560.4 242.6 560.9 242.9 561.4 243.0 C561.9 243.0 562.3 243.0 562.8 243.0 C563.3 243.0 563.8 243.0 564.3 243.0 C564.8 243.0 565.3 243.0 565.8 243.0 C566.3 242.9 566.7 242.6 567.2 242.4 C567.7 242.3 568.2 242.3 568.7 242.3 C569.2 242.4 569.7 242.8 570.2 242.9 C570.7 242.9 571.1 242.7 571.6 242.7 C572.1 242.7 572.7 243.0 573.1 243.0 C573.5 243.0 573.9 242.7 574.1 242.6 L574.1 244.5 L48.4 244.5 Z" fill="url(#g15_854_0)" stroke="none"/><path d="M48.39 206.70 C48.6 206.7 49.4 206.7 49.9 206.7 C50.3 206.7 50.8 206.7 51.3 206.7 C51.8 206.7 52.3 206.6 52.8 206.6 C53.3 206.6 53.8 206.7 54.3 206.7 C54.7 206.7 55.2 206.7 55.7 206.7 C56.2 206.7 56.7 206.7 57.2 206.7 C57.7 206.7 58.2 206.8 58.6 206.8 C59.1 206.8 59.6 206.7 60.1 206.7 C60.6 206.7 61.1 206.7 61.6 206.7 C62.1 206.7 62.6 206.6 63.0 206.6 C63.5 206.7 64.0 206.8 64.5 206.8 C65.0 206.8 65.5 206.7 66.0 206.7 C66.5 206.7 67.0 206.8 67.4 206.8 C67.9 206.8 68.4 206.7 68.9 206.6 C69.4 206.6 69.9 206.6 70.4 206.7 C70.9 206.7 71.3 206.8 71.8 206.8 C72.3 206.8 72.8 206.6 73.3 206.6 C73.8 206.6 74.3 206.6 74.8 206.6 C75.3 206.6 75.7 206.7 76.2 206.7 C76.7 206.7 77.2 206.7 77.7 206.7 C78.2 206.7 78.7 206.7 79.2 206.8 C79.7 206.8 80.1 206.8 80.6 206.8 C81.1 206.8 81.6 206.7 82.1 206.7 C82.6 206.7 83.1 206.8 83.6 206.8 C84.1 206.8 84.5 206.8 85.0 206.8 C85.5 206.8 86.0 206.7 86.5 206.7 C87.0 206.8 87.5 206.8 88.0 206.8 C88.4 206.8 88.9 206.7 89.4 206.7 C89.9 206.7 90.4 206.7 90.9 206.7 C91.4 206.7 91.9 206.6 92.4 206.6 C92.8 206.6 93.3 206.7 93.8 206.7 C94.3 206.7 94.8 206.7 95.3 206.7 C95.8 206.7 96.3 206.7 96.8 206.7 C97.2 206.7 97.7 206.7 98.2 206.7 C98.7 206.7 99.2 206.7 99.7 206.7 C100.2 206.7 100.7 206.7 101.2 206.7 C101.6 206.7 102.1 206.6 102.6 206.6 C103.1 206.6 103.6 206.6 104.1 206.6 C104.6 206.6 105.1 206.6 105.5 206.6 C106.0 206.6 106.5 206.6 107.0 206.7 C107.5 206.7 108.0 206.7 108.5 206.7 C109.0 206.8 109.5 206.8 109.9 206.8 C110.4 206.8 110.9 206.7 111.4 206.7 C111.9 206.7 112.4 206.8 112.9 206.8 C113.4 206.8 113.9 206.7 114.3 206.7 C114.8 206.7 115.3 206.7 115.8 206.7 C116.3 206.7 116.8 206.6 117.3 206.6 C117.8 206.6 118.3 206.7 118.7 206.7 C119.2 206.7 119.7 206.6 120.2 206.6 C120.7 206.6 121.2 206.6 121.7 206.6 C122.2 206.7 122.6 206.8 123.1 206.8 C123.6 206.8 124.1 206.8 124.6 206.8 C125.1 206.7 125.6 206.6 126.1 206.6 C126.6 206.6 127.0 206.7 127.5 206.7 C128.0 206.7 128.5 206.6 129.0 206.6 C129.5 206.6 130.0 206.7 130.5 206.7 C131.0 206.7 131.4 206.8 131.9 206.8 C132.4 206.8 132.9 206.7 133.4 206.7 C133.9 206.7 134.4 206.6 134.9 206.6 C135.3 206.7 135.8 206.7 136.3 206.7 C136.8 206.8 137.3 206.8 137.8 206.8 C138.3 206.8 138.8 206.8 139.3 206.7 C139.7 206.7 140.2 206.6 140.7 206.6 C141.2 206.6 141.7 206.6 142.2 206.7 C142.7 206.7 143.2 206.8 143.7 206.8 C144.1 206.8 144.6 206.7 145.1 206.7 C145.6 206.7 146.1 206.8 146.6 206.8 C147.1 206.8 147.6 206.8 148.1 206.8 C148.5 206.8 149.0 206.6 149.5 206.6 C150.0 206.6 150.5 206.8 151.0 206.8 C151.5 206.8 152.0 206.7 152.4 206.7 C152.9 206.7 153.4 206.7 153.9 206.7 C154.4 206.7 154.9 206.8 155.4 206.8 C155.9 206.8 156.4 206.7 156.8 206.7 C157.3 206.7 157.8 206.8 158.3 206.8 C158.8 206.8 159.3 206.7 159.8 206.7 C160.3 206.7 160.8 206.8 161.2 206.8 C161.7 206.8 162.2 206.7 162.7 206.7 C163.2 206.7 163.7 206.8 164.2 206.8 C164.7 206.8 165.2 206.8 165.6 206.7 C166.1 206.7 166.6 206.6 167.1 206.6 C167.6 206.6 168.1 206.6 168.6 206.6 C169.1 206.7 169.5 206.7 170.0 206.7 C170.5 206.7 171.0 206.6 171.5 206.6 C172.0 206.6 172.5 206.7 173.0 206.8 C173.5 206.8 173.9 206.7 174.4 206.7 C174.9 206.7 175.4 206.6 175.9 206.6 C176.4 206.6 176.9 206.7 177.4 206.7 C177.9 206.7 178.3 206.8 178.8 206.8 C179.3 206.8 179.8 206.6 180.3 206.6 C180.8 206.6 181.3 206.7 181.8 206.8 C182.3 206.8 182.7 206.8 183.2 206.7 C183.7 206.7 184.2 206.7 184.7 206.7 C185.2 206.7 185.7 206.7 186.2 206.7 C186.6 206.7 187.1 206.7 187.6 206.7 C188.1 206.7 188.6 206.8 189.1 206.8 C189.6 206.8 190.1 206.8 190.6 206.8 C191.0 206.8 191.5 206.7 192.0 206.7 C192.5 206.7 193.0 206.7 193.5 206.7 C194.0 206.7 194.5 206.7 195.0 206.7 C195.4 206.7 195.9 206.7 196.4 206.7 C196.9 206.7 197.4 206.7 197.9 206.7 C198.4 206.7 198.9 206.6 199.4 206.6 C199.8 206.6 200.3 206.7 200.8 206.7 C201.3 206.7 201.8 206.7 202.3 206.7 C202.8 206.7 203.3 206.6 203.7 206.6 C204.2 206.6 204.7 206.7 205.2 206.8 C205.7 206.8 206.2 206.8 206.7 206.8 C207.2 206.7 207.7 206.6 208.1 206.6 C208.6 206.6 209.1 206.6 209.6 206.6 C210.1 206.7 210.6 206.7 211.1 206.7 C211.6 206.8 212.1 206.8 212.5 206.8 C213.0 206.7 213.5 206.7 214.0 206.7 C214.5 206.6 215.0 206.6 215.5 206.6 C216.0 206.6 216.5 206.8 216.9 206.8 C217.4 206.8 217.9 206.6 218.4 206.6 C218.9 206.6 219.4 206.6 219.9 206.6 C220.4 206.6 220.8 206.7 221.3 206.7 C221.8 206.7 222.3 206.7 222.8 206.7 C223.3 206.7 223.8 206.8 224.3 206.8 C224.8 206.8 225.2 206.8 225.7 206.8 C226.2 206.8 226.7 206.6 227.2 206.6 C227.7 206.6 228.2 206.7 228.7 206.8 C229.2 206.8 229.6 206.7 230.1 206.7 C230.6 206.7 231.1 206.7 231.6 206.7 C232.1 206.7 232.6 206.7 233.1 206.6 C233.5 206.6 234.0 206.7 234.5 206.7 C235.0 206.7 235.5 206.7 236.0 206.7 C236.5 206.8 237.0 206.8 237.5 206.8 C237.9 206.7 238.4 206.7 238.9 206.7 C239.4 206.7 239.9 206.8 240.4 206.8 C240.9 206.8 241.4 206.8 241.9 206.8 C242.3 206.7 242.8 206.7 243.3 206.7 C243.8 206.7 244.3 206.6 244.8 206.6 C245.3 206.6 245.8 206.7 246.3 206.7 C246.7 206.7 247.2 206.7 247.7 206.7 C248.2 206.7 248.7 206.6 249.2 206.6 C249.7 206.6 250.2 206.7 250.6 206.8 C251.1 206.8 251.6 206.8 252.1 206.8 C252.6 206.8 253.1 206.8 253.6 206.7 C254.1 206.7 254.6 206.7 255.0 206.7 C255.5 206.7 256.0 206.8 256.5 206.8 C257.0 206.8 257.5 206.8 258.0 206.8 C258.5 206.8 259.0 206.7 259.4 206.7 C259.9 206.7 260.4 206.7 260.9 206.7 C261.4 206.7 261.9 206.8 262.4 206.8 C262.9 206.8 263.4 206.8 263.8 206.7 C264.3 206.7 264.8 206.6 265.3 206.6 C265.8 206.6 266.3 206.6 266.8 206.6 C267.3 206.6 267.7 206.7 268.2 206.7 C268.7 206.7 269.2 206.7 269.7 206.7 C270.2 206.7 270.7 206.7 271.2 206.7 C271.7 206.7 272.1 206.8 272.6 206.8 C273.1 206.8 273.6 206.8 274.1 206.8 C274.6 206.8 275.1 206.8 275.6 206.8 C276.1 206.8 276.5 206.6 277.0 206.6 C277.5 206.6 278.0 206.7 278.5 206.7 C279.0 206.7 279.5 206.6 280.0 206.6 C280.5 206.6 280.9 206.8 281.4 206.8 C281.9 206.8 282.4 206.7 282.9 206.7 C283.4 206.7 283.9 206.7 284.4 206.7 C284.8 206.7 285.3 206.7 285.8 206.7 C286.3 206.7 286.8 206.7 287.3 206.7 C287.8 206.7 288.3 206.6 288.8 206.6 C289.2 206.6 289.7 206.8 290.2 206.8 C290.7 206.8 291.2 206.7 291.7 206.7 C292.2 206.7 292.7 206.7 293.2 206.7 C293.6 206.6 294.1 206.6 294.6 206.6 C295.1 206.6 295.6 206.7 296.1 206.7 C296.6 206.7 297.1 206.7 297.6 206.7 C298.0 206.7 298.5 206.7 299.0 206.6 C299.5 206.6 300.0 206.6 300.5 206.6 C301.0 206.6 301.5 206.7 301.9 206.7 C302.4 206.7 302.9 206.7 303.4 206.7 C303.9 206.6 304.4 206.6 304.9 206.6 C305.4 206.6 305.9 206.6 306.3 206.6 C306.8 206.6 307.3 206.7 307.8 206.7 C308.3 206.7 308.8 206.7 309.3 206.6 C309.8 206.6 310.3 206.6 310.7 206.6 C311.2 206.6 311.7 206.7 312.2 206.7 C312.7 206.7 313.2 206.7 313.7 206.7 C314.2 206.7 314.6 206.7 315.1 206.7 C315.6 206.7 316.1 206.7 316.6 206.7 C317.1 206.7 317.6 206.7 318.1 206.7 C318.6 206.7 319.0 206.8 319.5 206.8 C320.0 206.8 320.5 206.7 321.0 206.7 C321.5 206.6 322.0 206.6 322.5 206.6 C323.0 206.6 323.4 206.6 323.9 206.6 C324.4 206.6 324.9 206.6 325.4 206.7 C325.9 206.7 326.4 206.7 326.9 206.7 C327.4 206.7 327.8 206.7 328.3 206.7 C328.8 206.7 329.3 206.7 329.8 206.7 C330.3 206.7 330.8 206.7 331.3 206.7 C331.7 206.7 332.2 206.6 332.7 206.6 C333.2 206.6 333.7 206.8 334.2 206.8 C334.7 206.8 335.2 206.7 335.7 206.7 C336.1 206.7 336.6 206.8 337.1 206.8 C337.6 206.8 338.1 206.7 338.6 206.7 C339.1 206.7 339.6 206.7 340.1 206.7 C340.5 206.7 341.0 206.8 341.5 206.8 C342.0 206.7 342.5 206.7 343.0 206.7 C343.5 206.7 344.0 206.7 344.5 206.7 C344.9 206.7 345.4 206.7 345.9 206.7 C346.4 206.7 346.9 206.6 347.4 206.6 C347.9 206.6 348.4 206.7 348.8 206.7 C349.3 206.8 349.8 206.8 350.3 206.8 C350.8 206.8 351.3 206.8 351.8 206.7 C352.3 206.7 352.8 206.7 353.2 206.7 C353.7 206.7 354.2 206.7 354.7 206.8 C355.2 206.8 355.7 206.8 356.2 206.8 C356.7 206.7 357.2 206.6 357.6 206.6 C358.1 206.6 358.6 206.7 359.1 206.7 C359.6 206.7 360.1 206.7 360.6 206.7 C361.1 206.7 361.6 206.6 362.0 206.6 C362.5 206.6 363.0 206.7 363.5 206.7 C364.0 206.7 364.5 206.7 365.0 206.7 C365.5 206.7 365.9 206.8 366.4 206.8 C366.9 206.8 367.4 206.7 367.9 206.7 C368.4 206.7 368.9 206.7 369.4 206.6 C369.9 206.6 370.3 206.6 370.8 206.6 C371.3 206.6 371.8 206.6 372.3 206.6 C372.8 206.6 373.3 206.7 373.8 206.7 C374.3 206.7 374.7 206.7 375.2 206.7 C375.7 206.7 376.2 206.7 376.7 206.7 C377.2 206.7 377.7 206.8 378.2 206.8 C378.7 206.8 379.1 206.7 379.6 206.7 C380.1 206.7 380.6 206.6 381.1 206.6 C381.6 206.6 382.1 206.6 382.6 206.6 C383.0 206.6 383.5 206.7 384.0 206.7 C384.5 206.7 385.0 206.6 385.5 206.6 C386.0 206.6 386.5 206.7 387.0 206.7 C387.4 206.8 387.9 206.8 388.4 206.8 C388.9 206.8 389.4 206.7 389.9 206.7 C390.4 206.7 390.9 206.7 391.4 206.7 C391.8 206.8 392.3 206.8 392.8 206.8 C393.3 206.8 393.8 206.7 394.3 206.7 C394.8 206.7 395.3 206.7 395.8 206.7 C396.2 206.7 396.7 206.7 397.2 206.7 C397.7 206.7 398.2 206.7 398.7 206.7 C399.2 206.7 399.7 206.7 400.1 206.6 C400.6 206.6 401.1 206.6 401.6 206.6 C402.1 206.6 402.6 206.7 403.1 206.7 C403.6 206.7 404.1 206.8 404.5 206.8 C405.0 206.8 405.5 206.8 406.0 206.8 C406.5 206.8 407.0 206.6 407.5 206.6 C408.0 206.6 408.5 206.8 408.9 206.8 C409.4 206.8 409.9 206.7 410.4 206.7 C410.9 206.7 411.4 206.7 411.9 206.7 C412.4 206.7 412.8 206.7 413.3 206.7 C413.8 206.7 414.3 206.6 414.8 206.6 C415.3 206.7 415.8 206.8 416.3 206.8 C416.8 206.8 417.2 206.8 417.7 206.8 C418.2 206.8 418.7 206.7 419.2 206.7 C419.7 206.7 420.2 206.8 420.7 206.8 C421.2 206.8 421.6 206.6 422.1 206.6 C422.6 206.6 423.1 206.7 423.6 206.8 C424.1 206.8 424.6 206.8 425.1 206.8 C425.6 206.8 426.0 206.8 426.5 206.8 C427.0 206.8 427.5 206.7 428.0 206.7 C428.5 206.7 429.0 206.7 429.5 206.7 C429.9 206.7 430.4 206.7 430.9 206.7 C431.4 206.7 431.9 206.7 432.4 206.7 C432.9 206.7 433.4 206.7 433.9 206.6 C434.3 206.6 434.8 206.6 435.3 206.6 C435.8 206.6 436.3 206.6 436.8 206.7 C437.3 206.7 437.8 206.8 438.3 206.8 C438.7 206.8 439.2 206.7 439.7 206.7 C440.2 206.7 440.7 206.7 441.2 206.8 C441.7 206.8 442.2 206.8 442.7 206.8 C443.1 206.8 443.6 206.7 444.1 206.7 C444.6 206.7 445.1 206.7 445.6 206.7 C446.1 206.7 446.6 206.7 447.0 206.8 C447.5 206.8 448.0 206.7 448.5 206.7 C449.0 206.7 449.5 206.7 450.0 206.7 C450.5 206.7 451.0 206.7 451.4 206.7 C451.9 206.7 452.4 206.7 452.9 206.7 C453.4 206.7 453.9 206.7 454.4 206.7 C454.9 206.7 455.4 206.7 455.8 206.7 C456.3 206.7 456.8 206.7 457.3 206.7 C457.8 206.7 458.3 206.7 458.8 206.6 C459.3 206.6 459.8 206.6 460.2 206.6 C460.7 206.6 461.2 206.8 461.7 206.8 C462.2 206.8 462.7 206.6 463.2 206.6 C463.7 206.6 464.1 206.6 464.6 206.7 C465.1 206.7 465.6 206.8 466.1 206.8 C466.6 206.8 467.1 206.7 467.6 206.7 C468.1 206.7 468.5 206.7 469.0 206.7 C469.5 206.7 470.0 206.6 470.5 206.6 C471.0 206.6 471.5 206.7 472.0 206.7 C472.5 206.7 472.9 206.7 473.4 206.7 C473.9 206.7 474.4 206.6 474.9 206.6 C475.4 206.6 475.9 206.6 476.4 206.6 C476.9 206.6 477.3 206.6 477.8 206.6 C478.3 206.6 478.8 206.7 479.3 206.7 C479.8 206.7 480.3 206.7 480.8 206.7 C481.2 206.7 481.7 206.8 482.2 206.8 C482.7 206.8 483.2 206.7 483.7 206.7 C484.2 206.6 484.7 206.6 485.2 206.6 C485.6 206.6 486.1 206.7 486.6 206.7 C487.1 206.7 487.6 206.7 488.1 206.7 C488.6 206.7 489.1 206.8 489.6 206.8 C490.0 206.7 490.5 206.7 491.0 206.6 C491.5 206.6 492.0 206.6 492.5 206.6 C493.0 206.6 493.5 206.6 494.0 206.6 C494.4 206.6 494.9 206.7 495.4 206.7 C495.9 206.7 496.4 206.6 496.9 206.6 C497.4 206.7 497.9 206.7 498.3 206.7 C498.8 206.7 499.3 206.6 499.8 206.6 C500.3 206.6 500.8 206.6 501.3 206.6 C501.8 206.7 502.3 206.7 502.7 206.7 C503.2 206.8 503.7 206.8 504.2 206.8 C504.7 206.8 505.2 206.7 505.7 206.7 C506.2 206.7 506.7 206.7 507.1 206.7 C507.6 206.7 508.1 206.7 508.6 206.7 C509.1 206.7 509.6 206.7 510.1 206.7 C510.6 206.7 511.0 206.8 511.5 206.8 C512.0 206.8 512.5 206.6 513.0 206.6 C513.5 206.6 514.0 206.8 514.5 206.8 C515.0 206.8 515.4 206.6 515.9 206.6 C516.4 206.6 516.9 206.8 517.4 206.8 C517.9 206.8 518.5 206.8 518.9 206.7 C519.3 206.5 519.3 205.8 519.7 205.6 C520.2 205.6 521.2 205.6 521.8 205.6 C522.4 205.6 522.8 205.5 523.3 205.5 C523.8 205.5 524.2 205.6 524.7 205.7 C525.2 205.7 525.7 205.7 526.2 205.6 C526.7 205.6 527.2 205.6 527.7 205.6 C528.1 205.6 528.6 205.6 529.1 205.5 C529.6 205.5 530.1 205.5 530.6 205.5 C531.1 205.5 531.6 205.5 532.1 205.5 C532.5 205.5 533.0 205.5 533.5 205.5 C534.0 205.5 534.5 205.6 535.0 205.6 C535.5 205.6 536.0 205.5 536.5 205.5 C536.9 205.5 537.4 205.6 537.9 205.7 C538.4 205.7 538.9 205.6 539.4 205.6 C539.9 205.6 540.4 205.6 540.9 205.6 C541.3 205.6 541.8 205.6 542.3 205.6 C542.8 205.6 543.3 205.6 543.8 205.5 C544.3 205.5 544.8 205.6 545.2 205.6 C545.7 205.6 546.2 205.6 546.7 205.6 C547.2 205.6 547.7 205.5 548.2 205.5 C548.7 205.5 549.2 205.6 549.6 205.6 C550.1 205.6 550.6 205.6 551.1 205.6 C551.6 205.6 552.1 205.6 552.6 205.6 C553.1 205.6 553.6 205.5 554.0 205.5 C554.5 205.5 555.0 205.5 555.5 205.5 C556.0 205.5 556.5 205.6 557.0 205.6 C557.5 205.6 558.0 205.5 558.4 205.5 C558.9 205.5 559.4 205.5 559.9 205.5 C560.4 205.5 560.9 205.6 561.4 205.6 C561.9 205.6 562.3 205.6 562.8 205.6 C563.3 205.6 563.8 205.6 564.3 205.6 C564.8 205.6 565.3 205.6 565.8 205.6 C566.3 205.6 566.7 205.6 567.2 205.6 C567.7 205.6 568.2 205.6 568.7 205.6 C569.2 205.6 569.7 205.7 570.2 205.7 C570.7 205.7 571.1 205.5 571.6 205.5 C572.1 205.5 572.7 205.6 573.1 205.6 C573.5 205.6 573.9 205.6 574.1 205.6 L574.1 244.5 L48.4 244.5 Z" fill="url(#g15_854_1)" stroke="none"/><path d="M48.39 242.64 C48.6 242.6 49.4 242.6 49.9 242.6 C50.3 242.6 50.8 242.7 51.3 242.7 C51.8 242.7 52.3 242.6 52.8 242.6 C53.3 242.6 53.8 242.9 54.3 242.9 C54.7 242.8 55.2 242.5 55.7 242.4 C56.2 242.4 56.7 242.4 57.2 242.4 C57.7 242.4 58.2 242.4 58.6 242.5 C59.1 242.6 59.6 242.9 60.1 242.9 C60.6 242.9 61.1 242.6 61.6 242.6 C62.1 242.6 62.6 242.7 63.0 242.8 C63.5 242.8 64.0 242.8 64.5 242.8 C65.0 242.7 65.5 242.4 66.0 242.3 C66.5 242.3 67.0 242.3 67.4 242.3 C67.9 242.4 68.4 243.0 68.9 243.0 C69.4 243.0 69.9 242.4 70.4 242.4 C70.9 242.4 71.3 242.5 71.8 242.6 C72.3 242.6 72.8 242.7 73.3 242.7 C73.8 242.8 74.3 242.8 74.8 242.8 C75.3 242.8 75.7 242.5 76.2 242.5 C76.7 242.5 77.2 242.7 77.7 242.7 C78.2 242.7 78.7 242.5 79.2 242.5 C79.7 242.5 80.1 242.5 80.6 242.5 C81.1 242.6 81.6 242.9 82.1 242.9 C82.6 242.9 83.1 242.5 83.6 242.4 C84.1 242.3 84.5 242.3 85.0 242.3 C85.5 242.3 86.0 242.3 86.5 242.3 C87.0 242.3 87.5 242.4 88.0 242.6 C88.4 242.7 88.9 242.9 89.4 243.0 C89.9 243.0 90.4 243.0 90.9 243.0 C91.4 243.0 91.9 243.0 92.4 242.9 C92.8 242.8 93.3 242.3 93.8 242.3 C94.3 242.3 94.8 242.7 95.3 242.8 C95.8 242.8 96.3 242.8 96.8 242.7 C97.2 242.7 97.7 242.3 98.2 242.3 C98.7 242.3 99.2 242.7 99.7 242.8 C100.2 242.8 100.7 242.6 101.2 242.6 C101.6 242.6 102.1 242.6 102.6 242.7 C103.1 242.7 103.6 243.0 104.1 243.0 C104.6 242.9 105.1 242.7 105.5 242.6 C106.0 242.5 106.5 242.4 107.0 242.4 C107.5 242.4 108.0 242.8 108.5 242.9 C109.0 242.9 109.5 242.9 109.9 242.8 C110.4 242.8 110.9 242.7 111.4 242.7 C111.9 242.7 112.4 243.0 112.9 243.0 C113.4 243.0 113.9 242.7 114.3 242.6 C114.8 242.5 115.3 242.4 115.8 242.4 C116.3 242.4 116.8 242.5 117.3 242.5 C117.8 242.6 118.3 242.6 118.7 242.6 C119.2 242.6 119.7 242.4 120.2 242.4 C120.7 242.4 121.2 242.9 121.7 242.9 C122.2 242.9 122.6 242.6 123.1 242.6 C123.6 242.6 124.1 242.7 124.6 242.7 C125.1 242.7 125.6 242.6 126.1 242.6 C126.6 242.6 127.0 242.9 127.5 242.9 C128.0 242.9 128.5 242.4 129.0 242.4 C129.5 242.4 130.0 242.9 130.5 242.9 C131.0 242.9 131.4 242.9 131.9 242.9 C132.4 242.8 132.9 242.5 133.4 242.4 C133.9 242.3 134.4 242.3 134.9 242.3 C135.3 242.4 135.8 242.6 136.3 242.7 C136.8 242.7 137.3 242.7 137.8 242.7 C138.3 242.7 138.8 242.8 139.3 242.8 C139.7 242.8 140.2 242.8 140.7 242.8 C141.2 242.8 141.7 242.6 142.2 242.6 C142.7 242.6 143.2 242.8 143.7 242.9 C144.1 242.9 144.6 242.9 145.1 242.9 C145.6 242.9 146.1 242.7 146.6 242.7 C147.1 242.7 147.6 242.9 148.1 242.9 C148.5 242.9 149.0 242.6 149.5 242.5 C150.0 242.4 150.5 242.4 151.0 242.4 C151.5 242.4 152.0 242.4 152.4 242.4 C152.9 242.5 153.4 242.6 153.9 242.7 C154.4 242.7 154.9 242.7 155.4 242.8 C155.9 242.8 156.4 242.7 156.8 242.7 C157.3 242.7 157.8 243.0 158.3 243.0 C158.8 243.0 159.3 242.5 159.8 242.5 C160.3 242.5 160.8 242.7 161.2 242.8 C161.7 242.8 162.2 242.8 162.7 242.8 C163.2 242.8 163.7 243.0 164.2 243.0 C164.7 242.9 165.2 242.7 165.6 242.7 C166.1 242.6 166.6 242.6 167.1 242.6 C167.6 242.6 168.1 242.7 168.6 242.7 C169.1 242.7 169.5 242.4 170.0 242.4 C170.5 242.4 171.0 242.4 171.5 242.5 C172.0 242.6 172.5 242.8 173.0 242.8 C173.5 242.8 173.9 242.7 174.4 242.6 C174.9 242.5 175.4 242.3 175.9 242.3 C176.4 242.3 176.9 242.6 177.4 242.6 C177.9 242.6 178.3 242.6 178.8 242.6 C179.3 242.6 179.8 242.9 180.3 243.0 C180.8 243.0 181.3 242.7 181.8 242.6 C182.3 242.6 182.7 242.7 183.2 242.7 C183.7 242.7 184.2 242.7 184.7 242.7 C185.2 242.7 185.7 242.7 186.2 242.7 C186.6 242.7 187.1 242.6 187.6 242.6 C188.1 242.6 188.6 242.6 189.1 242.6 C189.6 242.6 190.1 242.6 190.6 242.6 C191.0 242.7 191.5 242.9 192.0 242.9 C192.5 242.9 193.0 242.7 193.5 242.7 C194.0 242.6 194.3 242.7 194.8 242.6 C195.3 236.3 196.0 204.5 196.6 204.5 C197.2 204.5 197.9 236.3 198.3 242.6 C198.8 242.6 198.9 242.3 199.4 242.3 C199.8 242.3 200.3 242.6 200.8 242.7 C201.3 242.8 201.8 242.9 202.3 243.0 C202.8 243.0 203.3 243.0 203.7 243.0 C204.2 242.9 204.7 242.6 205.2 242.6 C205.7 242.6 206.2 242.9 206.7 243.0 C207.2 243.0 207.7 242.9 208.1 242.9 C208.6 242.9 209.1 242.9 209.6 242.9 C210.1 242.9 210.6 242.8 211.1 242.7 C211.6 242.6 212.1 242.3 212.5 242.3 C213.0 242.3 213.5 242.6 214.0 242.6 C214.5 242.7 215.0 242.7 215.5 242.7 C216.0 242.7 216.5 242.7 216.9 242.7 C217.4 242.7 217.9 242.6 218.4 242.6 C218.9 242.6 219.4 242.7 219.9 242.7 C220.4 242.6 220.8 242.5 221.3 242.5 C221.8 242.4 222.3 242.3 222.8 242.3 C223.3 242.3 223.8 242.4 224.3 242.5 C224.8 242.5 225.2 242.7 225.7 242.7 C226.2 242.7 226.7 242.6 227.2 242.5 C227.7 242.5 228.2 242.3 228.7 242.3 C229.2 242.4 229.6 242.8 230.1 242.9 C230.6 242.9 231.1 242.9 231.6 242.8 C232.1 242.8 232.6 242.6 233.1 242.5 C233.5 242.5 234.0 242.5 234.5 242.5 C235.0 242.5 235.5 242.5 236.0 242.5 C236.5 242.5 237.0 242.6 237.5 242.6 C237.9 242.5 238.4 242.4 238.9 242.4 C239.4 242.4 239.9 242.7 240.4 242.7 C240.9 242.7 241.4 242.5 241.9 242.4 C242.3 242.3 242.8 242.3 243.3 242.3 C243.8 242.3 244.3 242.7 244.8 242.7 C245.3 242.7 245.8 242.4 246.3 242.4 C246.7 242.4 247.2 242.5 247.7 242.5 C248.2 242.5 248.7 242.3 249.2 242.3 C249.7 242.4 250.2 243.0 250.6 243.0 C251.1 243.0 251.6 242.4 252.1 242.3 C252.6 242.3 253.1 242.4 253.6 242.4 C254.1 242.4 254.6 242.3 255.0 242.3 C255.5 242.3 256.0 242.3 256.5 242.3 C257.0 242.4 257.5 242.8 258.0 242.8 C258.5 242.8 259.0 242.5 259.4 242.5 C259.9 242.5 260.4 242.9 260.9 242.9 C261.4 242.9 261.9 242.7 262.4 242.6 C262.9 242.5 263.4 242.3 263.8 242.3 C264.3 242.4 264.8 242.8 265.3 242.9 C265.8 242.9 266.3 242.7 266.8 242.7 C267.3 242.8 267.7 242.9 268.2 243.0 C268.7 243.0 269.2 242.9 269.7 242.9 C270.2 242.9 270.7 242.9 271.2 242.9 C271.7 242.9 272.1 242.9 272.6 242.9 C273.1 242.8 273.6 242.4 274.1 242.3 C274.6 242.3 275.1 242.3 275.6 242.3 C276.1 242.4 276.5 242.6 277.0 242.7 C277.5 242.7 278.0 242.5 278.5 242.5 C279.0 242.5 279.5 242.5 280.0 242.5 C280.5 242.5 280.9 242.6 281.4 242.6 C281.9 242.7 282.4 242.7 282.9 242.7 C283.4 242.7 283.9 242.5 284.4 242.5 C284.8 242.5 285.3 242.5 285.8 242.6 C286.3 242.6 286.8 242.8 287.3 242.8 C287.8 242.8 288.3 242.8 288.8 242.7 C289.2 242.7 289.7 242.6 290.2 242.5 C290.7 242.5 291.2 242.5 291.7 242.5 C292.2 242.6 292.7 242.9 293.2 242.9 C293.6 242.9 294.1 242.6 294.6 242.6 C295.1 242.5 295.6 242.4 296.1 242.4 C296.6 242.4 297.1 242.4 297.6 242.4 C298.0 242.4 298.5 242.4 299.0 242.5 C299.5 242.6 300.0 242.9 300.5 243.0 C301.0 243.0 301.5 242.7 301.9 242.7 C302.4 242.7 302.9 242.9 303.4 242.9 C303.9 243.0 304.4 243.0 304.9 243.0 C305.4 242.9 305.9 242.9 306.3 242.8 C306.8 242.8 307.3 242.7 307.8 242.7 C308.3 242.6 308.8 242.5 309.3 242.4 C309.8 242.4 310.3 242.5 310.7 242.5 C311.2 242.6 311.7 242.8 312.2 242.8 C312.7 242.8 313.2 242.5 313.7 242.5 C314.2 242.5 314.6 242.6 315.1 242.6 C315.6 242.6 316.1 242.6 316.6 242.6 C317.1 242.7 317.6 242.8 318.1 242.8 C318.6 242.8 319.0 242.7 319.5 242.7 C320.0 242.7 320.5 242.8 321.0 242.8 C321.5 242.7 322.0 242.5 322.5 242.5 C323.0 242.5 323.4 242.6 323.9 242.7 C324.4 242.7 324.9 242.7 325.4 242.7 C325.9 242.7 326.4 242.7 326.9 242.7 C327.4 242.7 327.8 242.7 328.3 242.7 C328.8 242.6 329.3 242.5 329.8 242.5 C330.3 242.5 330.8 242.5 331.3 242.5 C331.7 242.5 332.2 242.4 332.7 242.4 C333.2 242.5 333.7 242.7 334.2 242.7 C334.7 242.7 335.2 242.5 335.7 242.4 C336.1 242.3 336.6 242.3 337.1 242.3 C337.6 242.3 338.1 242.3 338.6 242.3 C339.1 242.3 339.6 242.4 340.1 242.5 C340.5 242.6 341.0 243.0 341.5 243.0 C342.0 242.9 342.5 242.5 343.0 242.4 C343.5 242.4 344.0 242.4 344.5 242.4 C344.9 242.5 345.4 242.9 345.9 243.0 C346.4 243.0 346.9 242.8 347.4 242.8 C347.9 242.8 348.4 242.8 348.8 242.8 C349.3 242.7 349.8 242.5 350.3 242.5 C350.8 242.5 351.3 242.5 351.8 242.6 C352.3 242.6 352.8 242.7 353.2 242.8 C353.7 242.9 354.2 242.9 354.7 242.9 C355.2 242.9 355.7 242.9 356.2 242.9 C356.7 242.9 357.2 242.9 357.6 242.9 C358.1 242.9 358.6 242.5 359.1 242.4 C359.6 242.3 360.1 242.3 360.6 242.3 C361.1 242.4 361.6 242.8 362.0 242.8 C362.5 242.8 363.0 242.5 363.5 242.5 C364.0 242.4 364.5 242.3 365.0 242.3 C365.5 242.4 365.9 242.8 366.4 242.9 C366.9 242.9 367.4 242.6 367.9 242.6 C368.4 242.6 368.9 242.7 369.4 242.7 C369.9 242.6 370.3 242.3 370.8 242.3 C371.3 242.3 371.8 242.3 372.3 242.4 C372.8 242.5 373.3 242.9 373.8 243.0 C374.3 243.0 374.7 243.0 375.2 242.9 C375.7 242.8 376.2 242.4 376.7 242.4 C377.2 242.4 377.7 242.5 378.2 242.6 C378.7 242.6 379.1 242.6 379.6 242.6 C380.1 242.6 380.6 242.4 381.1 242.4 C381.6 242.4 382.1 242.4 382.6 242.4 C383.0 242.4 383.5 242.3 384.0 242.3 C384.5 242.4 385.0 242.7 385.5 242.8 C386.0 242.9 386.5 243.0 387.0 243.0 C387.4 242.9 387.9 242.5 388.4 242.5 C388.9 242.5 389.4 243.0 389.9 243.0 C390.4 243.0 390.9 242.7 391.4 242.6 C391.8 242.5 392.3 242.4 392.8 242.4 C393.3 242.4 393.8 242.7 394.3 242.7 C394.8 242.7 395.3 242.6 395.8 242.6 C396.2 242.6 396.7 242.8 397.2 242.9 C397.7 242.9 398.2 242.9 398.7 242.9 C399.2 242.8 399.7 242.6 400.1 242.6 C400.6 242.5 401.1 242.4 401.6 242.4 C402.1 242.3 402.6 242.3 403.1 242.3 C403.6 242.4 404.1 243.0 404.5 243.0 C405.0 243.0 405.5 242.4 406.0 242.3 C406.5 242.3 407.0 242.6 407.5 242.6 C408.0 242.7 408.5 242.7 408.9 242.8 C409.4 242.8 409.9 242.7 410.4 242.7 C410.9 242.7 411.4 242.6 411.9 242.6 C412.4 242.6 412.8 242.7 413.3 242.8 C413.8 242.8 414.3 242.9 414.8 242.9 C415.3 242.8 415.8 242.4 416.3 242.4 C416.8 242.4 417.2 242.5 417.7 242.5 C418.2 242.5 418.7 242.6 419.2 242.6 C419.7 242.6 420.2 242.5 420.7 242.5 C421.2 242.4 421.6 242.3 422.1 242.3 C422.6 242.3 423.1 242.9 423.6 242.9 C424.1 242.9 424.6 242.5 425.1 242.4 C425.6 242.4 426.0 242.4 426.5 242.4 C427.0 242.5 427.5 242.7 428.0 242.8 C428.5 242.8 429.0 242.6 429.5 242.6 C429.9 242.6 430.4 242.6 430.9 242.7 C431.4 242.7 431.9 242.9 432.4 242.9 C432.9 242.9 433.4 242.7 433.9 242.7 C434.3 242.7 434.8 242.9 435.3 242.9 C435.8 242.8 436.3 242.3 436.8 242.3 C437.3 242.3 437.8 242.8 438.3 242.9 C438.7 242.9 439.2 242.6 439.7 242.5 C440.2 242.5 440.7 242.6 441.2 242.6 C441.7 242.5 442.2 242.3 442.7 242.3 C443.1 242.3 443.6 242.3 444.1 242.4 C444.6 242.5 445.1 242.7 445.6 242.7 C446.1 242.7 446.6 242.7 447.0 242.7 C447.5 242.8 448.0 242.9 448.5 243.0 C449.0 243.0 449.5 243.0 450.0 243.0 C450.5 242.9 451.0 242.9 451.4 242.8 C451.9 242.7 452.4 242.3 452.9 242.3 C453.4 242.3 453.9 242.9 454.4 243.0 C454.9 243.0 455.4 243.0 455.8 242.9 C456.3 242.8 456.8 242.6 457.3 242.5 C457.8 242.5 458.3 242.7 458.8 242.7 C459.3 242.8 459.8 242.9 460.2 242.9 C460.7 242.8 461.2 242.3 461.7 242.3 C462.2 242.3 462.7 242.9 463.2 243.0 C463.7 243.0 464.1 242.6 464.6 242.6 C465.1 242.6 465.6 242.7 466.1 242.7 C466.6 242.7 467.1 242.7 467.6 242.8 C468.1 242.8 468.5 242.8 469.0 242.9 C469.5 242.9 470.0 242.9 470.5 242.9 C471.0 242.9 471.5 242.8 472.0 242.7 C472.5 242.6 472.9 242.5 473.4 242.5 C473.9 242.5 474.4 242.7 474.9 242.7 C475.4 242.7 475.9 242.5 476.4 242.4 C476.9 242.4 477.3 242.4 477.8 242.4 C478.3 242.4 478.8 242.9 479.3 242.9 C479.8 242.9 480.3 242.4 480.8 242.4 C481.2 242.4 481.7 242.5 482.2 242.6 C482.7 242.6 483.2 242.7 483.7 242.7 C484.2 242.7 484.7 242.7 485.2 242.6 C485.6 242.6 486.1 242.3 486.6 242.3 C487.1 242.4 487.6 242.6 488.1 242.7 C488.6 242.8 489.1 242.9 489.6 242.9 C490.0 242.9 490.5 242.3 491.0 242.3 C491.5 242.3 492.0 242.8 492.5 242.9 C493.0 242.9 493.5 242.9 494.0 242.9 C494.4 242.9 494.9 242.5 495.4 242.5 C495.9 242.5 496.4 242.7 496.9 242.8 C497.4 242.8 497.9 242.8 498.3 242.8 C498.8 242.8 499.3 242.6 499.8 242.5 C500.3 242.5 500.8 242.3 501.3 242.3 C501.8 242.4 502.3 242.8 502.7 242.8 C503.2 242.8 503.7 242.4 504.2 242.3 C504.7 242.3 505.2 242.5 505.7 242.5 C506.2 242.6 506.7 242.5 507.1 242.6 C507.6 242.6 508.1 242.6 508.6 242.6 C509.1 242.7 509.6 243.0 510.1 243.0 C510.6 243.0 511.0 243.0 511.5 242.9 C512.0 242.8 512.5 242.6 513.0 242.5 C513.5 242.5 514.0 242.5 514.5 242.5 C515.0 242.6 515.4 242.9 515.9 242.9 C516.4 242.9 516.9 242.6 517.4 242.5 C517.9 242.5 518.4 242.6 518.9 242.7 C519.4 242.7 519.8 242.6 520.3 242.6 C520.8 242.6 521.3 242.7 521.8 242.7 C522.3 242.8 522.8 242.8 523.3 242.8 C523.8 242.8 524.2 242.8 524.7 242.7 C525.2 242.7 525.7 242.3 526.2 242.3 C526.7 242.3 527.2 242.9 527.7 242.9 C528.1 242.9 528.6 242.4 529.1 242.4 C529.6 242.4 530.1 242.5 530.6 242.6 C531.1 242.7 531.6 243.0 532.1 243.0 C532.5 242.9 533.0 242.4 533.5 242.4 C534.0 242.4 534.5 243.0 535.0 243.0 C535.5 243.0 536.0 242.4 536.5 242.4 C536.9 242.4 537.4 242.8 537.9 242.8 C538.4 242.7 538.9 242.4 539.4 242.3 C539.9 242.3 540.4 242.4 540.9 242.5 C541.3 242.5 541.8 242.7 542.3 242.7 C542.8 242.7 543.3 242.6 543.8 242.5 C544.3 242.5 544.8 242.3 545.2 242.3 C545.7 242.3 546.2 242.8 546.7 242.9 C547.2 242.9 547.7 242.9 548.2 242.9 C548.7 242.8 549.2 242.9 549.6 242.8 C550.1 242.7 550.6 242.4 551.1 242.4 C551.6 242.4 552.1 242.8 552.6 242.8 C553.1 242.8 553.6 242.8 554.0 242.8 C554.5 242.8 555.0 242.6 555.5 242.6 C556.0 242.6 556.5 242.6 557.0 242.6 C557.5 242.6 558.0 242.7 558.4 242.7 C558.9 242.7 559.4 242.6 559.9 242.6 C560.4 242.6 560.9 242.9 561.4 243.0 C561.9 243.0 562.3 243.0 562.8 243.0 C563.3 243.0 563.8 243.0 564.3 243.0 C564.8 243.0 565.3 243.0 565.8 243.0 C566.3 242.9 566.7 242.6 567.2 242.4 C567.7 242.3 568.2 242.3 568.7 242.3 C569.2 242.4 569.7 242.8 570.2 242.9 C570.7 242.9 571.1 242.7 571.6 242.7 C572.1 242.7 572.7 243.0 573.1 243.0 C573.5 243.0 573.9 242.7 574.1 242.6" fill="none" stroke="#73bf69" stroke-width="1.05" stroke-linejoin="round"/><path d="M48.39 206.70 C48.6 206.7 49.4 206.7 49.9 206.7 C50.3 206.7 50.8 206.7 51.3 206.7 C51.8 206.7 52.3 206.6 52.8 206.6 C53.3 206.6 53.8 206.7 54.3 206.7 C54.7 206.7 55.2 206.7 55.7 206.7 C56.2 206.7 56.7 206.7 57.2 206.7 C57.7 206.7 58.2 206.8 58.6 206.8 C59.1 206.8 59.6 206.7 60.1 206.7 C60.6 206.7 61.1 206.7 61.6 206.7 C62.1 206.7 62.6 206.6 63.0 206.6 C63.5 206.7 64.0 206.8 64.5 206.8 C65.0 206.8 65.5 206.7 66.0 206.7 C66.5 206.7 67.0 206.8 67.4 206.8 C67.9 206.8 68.4 206.7 68.9 206.6 C69.4 206.6 69.9 206.6 70.4 206.7 C70.9 206.7 71.3 206.8 71.8 206.8 C72.3 206.8 72.8 206.6 73.3 206.6 C73.8 206.6 74.3 206.6 74.8 206.6 C75.3 206.6 75.7 206.7 76.2 206.7 C76.7 206.7 77.2 206.7 77.7 206.7 C78.2 206.7 78.7 206.7 79.2 206.8 C79.7 206.8 80.1 206.8 80.6 206.8 C81.1 206.8 81.6 206.7 82.1 206.7 C82.6 206.7 83.1 206.8 83.6 206.8 C84.1 206.8 84.5 206.8 85.0 206.8 C85.5 206.8 86.0 206.7 86.5 206.7 C87.0 206.8 87.5 206.8 88.0 206.8 C88.4 206.8 88.9 206.7 89.4 206.7 C89.9 206.7 90.4 206.7 90.9 206.7 C91.4 206.7 91.9 206.6 92.4 206.6 C92.8 206.6 93.3 206.7 93.8 206.7 C94.3 206.7 94.8 206.7 95.3 206.7 C95.8 206.7 96.3 206.7 96.8 206.7 C97.2 206.7 97.7 206.7 98.2 206.7 C98.7 206.7 99.2 206.7 99.7 206.7 C100.2 206.7 100.7 206.7 101.2 206.7 C101.6 206.7 102.1 206.6 102.6 206.6 C103.1 206.6 103.6 206.6 104.1 206.6 C104.6 206.6 105.1 206.6 105.5 206.6 C106.0 206.6 106.5 206.6 107.0 206.7 C107.5 206.7 108.0 206.7 108.5 206.7 C109.0 206.8 109.5 206.8 109.9 206.8 C110.4 206.8 110.9 206.7 111.4 206.7 C111.9 206.7 112.4 206.8 112.9 206.8 C113.4 206.8 113.9 206.7 114.3 206.7 C114.8 206.7 115.3 206.7 115.8 206.7 C116.3 206.7 116.8 206.6 117.3 206.6 C117.8 206.6 118.3 206.7 118.7 206.7 C119.2 206.7 119.7 206.6 120.2 206.6 C120.7 206.6 121.2 206.6 121.7 206.6 C122.2 206.7 122.6 206.8 123.1 206.8 C123.6 206.8 124.1 206.8 124.6 206.8 C125.1 206.7 125.6 206.6 126.1 206.6 C126.6 206.6 127.0 206.7 127.5 206.7 C128.0 206.7 128.5 206.6 129.0 206.6 C129.5 206.6 130.0 206.7 130.5 206.7 C131.0 206.7 131.4 206.8 131.9 206.8 C132.4 206.8 132.9 206.7 133.4 206.7 C133.9 206.7 134.4 206.6 134.9 206.6 C135.3 206.7 135.8 206.7 136.3 206.7 C136.8 206.8 137.3 206.8 137.8 206.8 C138.3 206.8 138.8 206.8 139.3 206.7 C139.7 206.7 140.2 206.6 140.7 206.6 C141.2 206.6 141.7 206.6 142.2 206.7 C142.7 206.7 143.2 206.8 143.7 206.8 C144.1 206.8 144.6 206.7 145.1 206.7 C145.6 206.7 146.1 206.8 146.6 206.8 C147.1 206.8 147.6 206.8 148.1 206.8 C148.5 206.8 149.0 206.6 149.5 206.6 C150.0 206.6 150.5 206.8 151.0 206.8 C151.5 206.8 152.0 206.7 152.4 206.7 C152.9 206.7 153.4 206.7 153.9 206.7 C154.4 206.7 154.9 206.8 155.4 206.8 C155.9 206.8 156.4 206.7 156.8 206.7 C157.3 206.7 157.8 206.8 158.3 206.8 C158.8 206.8 159.3 206.7 159.8 206.7 C160.3 206.7 160.8 206.8 161.2 206.8 C161.7 206.8 162.2 206.7 162.7 206.7 C163.2 206.7 163.7 206.8 164.2 206.8 C164.7 206.8 165.2 206.8 165.6 206.7 C166.1 206.7 166.6 206.6 167.1 206.6 C167.6 206.6 168.1 206.6 168.6 206.6 C169.1 206.7 169.5 206.7 170.0 206.7 C170.5 206.7 171.0 206.6 171.5 206.6 C172.0 206.6 172.5 206.7 173.0 206.8 C173.5 206.8 173.9 206.7 174.4 206.7 C174.9 206.7 175.4 206.6 175.9 206.6 C176.4 206.6 176.9 206.7 177.4 206.7 C177.9 206.7 178.3 206.8 178.8 206.8 C179.3 206.8 179.8 206.6 180.3 206.6 C180.8 206.6 181.3 206.7 181.8 206.8 C182.3 206.8 182.7 206.8 183.2 206.7 C183.7 206.7 184.2 206.7 184.7 206.7 C185.2 206.7 185.7 206.7 186.2 206.7 C186.6 206.7 187.1 206.7 187.6 206.7 C188.1 206.7 188.6 206.8 189.1 206.8 C189.6 206.8 190.1 206.8 190.6 206.8 C191.0 206.8 191.5 206.7 192.0 206.7 C192.5 206.7 193.0 206.7 193.5 206.7 C194.0 206.7 194.5 206.7 195.0 206.7 C195.4 206.7 195.9 206.7 196.4 206.7 C196.9 206.7 197.4 206.7 197.9 206.7 C198.4 206.7 198.9 206.6 199.4 206.6 C199.8 206.6 200.3 206.7 200.8 206.7 C201.3 206.7 201.8 206.7 202.3 206.7 C202.8 206.7 203.3 206.6 203.7 206.6 C204.2 206.6 204.7 206.7 205.2 206.8 C205.7 206.8 206.2 206.8 206.7 206.8 C207.2 206.7 207.7 206.6 208.1 206.6 C208.6 206.6 209.1 206.6 209.6 206.6 C210.1 206.7 210.6 206.7 211.1 206.7 C211.6 206.8 212.1 206.8 212.5 206.8 C213.0 206.7 213.5 206.7 214.0 206.7 C214.5 206.6 215.0 206.6 215.5 206.6 C216.0 206.6 216.5 206.8 216.9 206.8 C217.4 206.8 217.9 206.6 218.4 206.6 C218.9 206.6 219.4 206.6 219.9 206.6 C220.4 206.6 220.8 206.7 221.3 206.7 C221.8 206.7 222.3 206.7 222.8 206.7 C223.3 206.7 223.8 206.8 224.3 206.8 C224.8 206.8 225.2 206.8 225.7 206.8 C226.2 206.8 226.7 206.6 227.2 206.6 C227.7 206.6 228.2 206.7 228.7 206.8 C229.2 206.8 229.6 206.7 230.1 206.7 C230.6 206.7 231.1 206.7 231.6 206.7 C232.1 206.7 232.6 206.7 233.1 206.6 C233.5 206.6 234.0 206.7 234.5 206.7 C235.0 206.7 235.5 206.7 236.0 206.7 C236.5 206.8 237.0 206.8 237.5 206.8 C237.9 206.7 238.4 206.7 238.9 206.7 C239.4 206.7 239.9 206.8 240.4 206.8 C240.9 206.8 241.4 206.8 241.9 206.8 C242.3 206.7 242.8 206.7 243.3 206.7 C243.8 206.7 244.3 206.6 244.8 206.6 C245.3 206.6 245.8 206.7 246.3 206.7 C246.7 206.7 247.2 206.7 247.7 206.7 C248.2 206.7 248.7 206.6 249.2 206.6 C249.7 206.6 250.2 206.7 250.6 206.8 C251.1 206.8 251.6 206.8 252.1 206.8 C252.6 206.8 253.1 206.8 253.6 206.7 C254.1 206.7 254.6 206.7 255.0 206.7 C255.5 206.7 256.0 206.8 256.5 206.8 C257.0 206.8 257.5 206.8 258.0 206.8 C258.5 206.8 259.0 206.7 259.4 206.7 C259.9 206.7 260.4 206.7 260.9 206.7 C261.4 206.7 261.9 206.8 262.4 206.8 C262.9 206.8 263.4 206.8 263.8 206.7 C264.3 206.7 264.8 206.6 265.3 206.6 C265.8 206.6 266.3 206.6 266.8 206.6 C267.3 206.6 267.7 206.7 268.2 206.7 C268.7 206.7 269.2 206.7 269.7 206.7 C270.2 206.7 270.7 206.7 271.2 206.7 C271.7 206.7 272.1 206.8 272.6 206.8 C273.1 206.8 273.6 206.8 274.1 206.8 C274.6 206.8 275.1 206.8 275.6 206.8 C276.1 206.8 276.5 206.6 277.0 206.6 C277.5 206.6 278.0 206.7 278.5 206.7 C279.0 206.7 279.5 206.6 280.0 206.6 C280.5 206.6 280.9 206.8 281.4 206.8 C281.9 206.8 282.4 206.7 282.9 206.7 C283.4 206.7 283.9 206.7 284.4 206.7 C284.8 206.7 285.3 206.7 285.8 206.7 C286.3 206.7 286.8 206.7 287.3 206.7 C287.8 206.7 288.3 206.6 288.8 206.6 C289.2 206.6 289.7 206.8 290.2 206.8 C290.7 206.8 291.2 206.7 291.7 206.7 C292.2 206.7 292.7 206.7 293.2 206.7 C293.6 206.6 294.1 206.6 294.6 206.6 C295.1 206.6 295.6 206.7 296.1 206.7 C296.6 206.7 297.1 206.7 297.6 206.7 C298.0 206.7 298.5 206.7 299.0 206.6 C299.5 206.6 300.0 206.6 300.5 206.6 C301.0 206.6 301.5 206.7 301.9 206.7 C302.4 206.7 302.9 206.7 303.4 206.7 C303.9 206.6 304.4 206.6 304.9 206.6 C305.4 206.6 305.9 206.6 306.3 206.6 C306.8 206.6 307.3 206.7 307.8 206.7 C308.3 206.7 308.8 206.7 309.3 206.6 C309.8 206.6 310.3 206.6 310.7 206.6 C311.2 206.6 311.7 206.7 312.2 206.7 C312.7 206.7 313.2 206.7 313.7 206.7 C314.2 206.7 314.6 206.7 315.1 206.7 C315.6 206.7 316.1 206.7 316.6 206.7 C317.1 206.7 317.6 206.7 318.1 206.7 C318.6 206.7 319.0 206.8 319.5 206.8 C320.0 206.8 320.5 206.7 321.0 206.7 C321.5 206.6 322.0 206.6 322.5 206.6 C323.0 206.6 323.4 206.6 323.9 206.6 C324.4 206.6 324.9 206.6 325.4 206.7 C325.9 206.7 326.4 206.7 326.9 206.7 C327.4 206.7 327.8 206.7 328.3 206.7 C328.8 206.7 329.3 206.7 329.8 206.7 C330.3 206.7 330.8 206.7 331.3 206.7 C331.7 206.7 332.2 206.6 332.7 206.6 C333.2 206.6 333.7 206.8 334.2 206.8 C334.7 206.8 335.2 206.7 335.7 206.7 C336.1 206.7 336.6 206.8 337.1 206.8 C337.6 206.8 338.1 206.7 338.6 206.7 C339.1 206.7 339.6 206.7 340.1 206.7 C340.5 206.7 341.0 206.8 341.5 206.8 C342.0 206.7 342.5 206.7 343.0 206.7 C343.5 206.7 344.0 206.7 344.5 206.7 C344.9 206.7 345.4 206.7 345.9 206.7 C346.4 206.7 346.9 206.6 347.4 206.6 C347.9 206.6 348.4 206.7 348.8 206.7 C349.3 206.8 349.8 206.8 350.3 206.8 C350.8 206.8 351.3 206.8 351.8 206.7 C352.3 206.7 352.8 206.7 353.2 206.7 C353.7 206.7 354.2 206.7 354.7 206.8 C355.2 206.8 355.7 206.8 356.2 206.8 C356.7 206.7 357.2 206.6 357.6 206.6 C358.1 206.6 358.6 206.7 359.1 206.7 C359.6 206.7 360.1 206.7 360.6 206.7 C361.1 206.7 361.6 206.6 362.0 206.6 C362.5 206.6 363.0 206.7 363.5 206.7 C364.0 206.7 364.5 206.7 365.0 206.7 C365.5 206.7 365.9 206.8 366.4 206.8 C366.9 206.8 367.4 206.7 367.9 206.7 C368.4 206.7 368.9 206.7 369.4 206.6 C369.9 206.6 370.3 206.6 370.8 206.6 C371.3 206.6 371.8 206.6 372.3 206.6 C372.8 206.6 373.3 206.7 373.8 206.7 C374.3 206.7 374.7 206.7 375.2 206.7 C375.7 206.7 376.2 206.7 376.7 206.7 C377.2 206.7 377.7 206.8 378.2 206.8 C378.7 206.8 379.1 206.7 379.6 206.7 C380.1 206.7 380.6 206.6 381.1 206.6 C381.6 206.6 382.1 206.6 382.6 206.6 C383.0 206.6 383.5 206.7 384.0 206.7 C384.5 206.7 385.0 206.6 385.5 206.6 C386.0 206.6 386.5 206.7 387.0 206.7 C387.4 206.8 387.9 206.8 388.4 206.8 C388.9 206.8 389.4 206.7 389.9 206.7 C390.4 206.7 390.9 206.7 391.4 206.7 C391.8 206.8 392.3 206.8 392.8 206.8 C393.3 206.8 393.8 206.7 394.3 206.7 C394.8 206.7 395.3 206.7 395.8 206.7 C396.2 206.7 396.7 206.7 397.2 206.7 C397.7 206.7 398.2 206.7 398.7 206.7 C399.2 206.7 399.7 206.7 400.1 206.6 C400.6 206.6 401.1 206.6 401.6 206.6 C402.1 206.6 402.6 206.7 403.1 206.7 C403.6 206.7 404.1 206.8 404.5 206.8 C405.0 206.8 405.5 206.8 406.0 206.8 C406.5 206.8 407.0 206.6 407.5 206.6 C408.0 206.6 408.5 206.8 408.9 206.8 C409.4 206.8 409.9 206.7 410.4 206.7 C410.9 206.7 411.4 206.7 411.9 206.7 C412.4 206.7 412.8 206.7 413.3 206.7 C413.8 206.7 414.3 206.6 414.8 206.6 C415.3 206.7 415.8 206.8 416.3 206.8 C416.8 206.8 417.2 206.8 417.7 206.8 C418.2 206.8 418.7 206.7 419.2 206.7 C419.7 206.7 420.2 206.8 420.7 206.8 C421.2 206.8 421.6 206.6 422.1 206.6 C422.6 206.6 423.1 206.7 423.6 206.8 C424.1 206.8 424.6 206.8 425.1 206.8 C425.6 206.8 426.0 206.8 426.5 206.8 C427.0 206.8 427.5 206.7 428.0 206.7 C428.5 206.7 429.0 206.7 429.5 206.7 C429.9 206.7 430.4 206.7 430.9 206.7 C431.4 206.7 431.9 206.7 432.4 206.7 C432.9 206.7 433.4 206.7 433.9 206.6 C434.3 206.6 434.8 206.6 435.3 206.6 C435.8 206.6 436.3 206.6 436.8 206.7 C437.3 206.7 437.8 206.8 438.3 206.8 C438.7 206.8 439.2 206.7 439.7 206.7 C440.2 206.7 440.7 206.7 441.2 206.8 C441.7 206.8 442.2 206.8 442.7 206.8 C443.1 206.8 443.6 206.7 444.1 206.7 C444.6 206.7 445.1 206.7 445.6 206.7 C446.1 206.7 446.6 206.7 447.0 206.8 C447.5 206.8 448.0 206.7 448.5 206.7 C449.0 206.7 449.5 206.7 450.0 206.7 C450.5 206.7 451.0 206.7 451.4 206.7 C451.9 206.7 452.4 206.7 452.9 206.7 C453.4 206.7 453.9 206.7 454.4 206.7 C454.9 206.7 455.4 206.7 455.8 206.7 C456.3 206.7 456.8 206.7 457.3 206.7 C457.8 206.7 458.3 206.7 458.8 206.6 C459.3 206.6 459.8 206.6 460.2 206.6 C460.7 206.6 461.2 206.8 461.7 206.8 C462.2 206.8 462.7 206.6 463.2 206.6 C463.7 206.6 464.1 206.6 464.6 206.7 C465.1 206.7 465.6 206.8 466.1 206.8 C466.6 206.8 467.1 206.7 467.6 206.7 C468.1 206.7 468.5 206.7 469.0 206.7 C469.5 206.7 470.0 206.6 470.5 206.6 C471.0 206.6 471.5 206.7 472.0 206.7 C472.5 206.7 472.9 206.7 473.4 206.7 C473.9 206.7 474.4 206.6 474.9 206.6 C475.4 206.6 475.9 206.6 476.4 206.6 C476.9 206.6 477.3 206.6 477.8 206.6 C478.3 206.6 478.8 206.7 479.3 206.7 C479.8 206.7 480.3 206.7 480.8 206.7 C481.2 206.7 481.7 206.8 482.2 206.8 C482.7 206.8 483.2 206.7 483.7 206.7 C484.2 206.6 484.7 206.6 485.2 206.6 C485.6 206.6 486.1 206.7 486.6 206.7 C487.1 206.7 487.6 206.7 488.1 206.7 C488.6 206.7 489.1 206.8 489.6 206.8 C490.0 206.7 490.5 206.7 491.0 206.6 C491.5 206.6 492.0 206.6 492.5 206.6 C493.0 206.6 493.5 206.6 494.0 206.6 C494.4 206.6 494.9 206.7 495.4 206.7 C495.9 206.7 496.4 206.6 496.9 206.6 C497.4 206.7 497.9 206.7 498.3 206.7 C498.8 206.7 499.3 206.6 499.8 206.6 C500.3 206.6 500.8 206.6 501.3 206.6 C501.8 206.7 502.3 206.7 502.7 206.7 C503.2 206.8 503.7 206.8 504.2 206.8 C504.7 206.8 505.2 206.7 505.7 206.7 C506.2 206.7 506.7 206.7 507.1 206.7 C507.6 206.7 508.1 206.7 508.6 206.7 C509.1 206.7 509.6 206.7 510.1 206.7 C510.6 206.7 511.0 206.8 511.5 206.8 C512.0 206.8 512.5 206.6 513.0 206.6 C513.5 206.6 514.0 206.8 514.5 206.8 C515.0 206.8 515.4 206.6 515.9 206.6 C516.4 206.6 516.9 206.8 517.4 206.8 C517.9 206.8 518.5 206.8 518.9 206.7 C519.3 206.5 519.3 205.8 519.7 205.6 C520.2 205.6 521.2 205.6 521.8 205.6 C522.4 205.6 522.8 205.5 523.3 205.5 C523.8 205.5 524.2 205.6 524.7 205.7 C525.2 205.7 525.7 205.7 526.2 205.6 C526.7 205.6 527.2 205.6 527.7 205.6 C528.1 205.6 528.6 205.6 529.1 205.5 C529.6 205.5 530.1 205.5 530.6 205.5 C531.1 205.5 531.6 205.5 532.1 205.5 C532.5 205.5 533.0 205.5 533.5 205.5 C534.0 205.5 534.5 205.6 535.0 205.6 C535.5 205.6 536.0 205.5 536.5 205.5 C536.9 205.5 537.4 205.6 537.9 205.7 C538.4 205.7 538.9 205.6 539.4 205.6 C539.9 205.6 540.4 205.6 540.9 205.6 C541.3 205.6 541.8 205.6 542.3 205.6 C542.8 205.6 543.3 205.6 543.8 205.5 C544.3 205.5 544.8 205.6 545.2 205.6 C545.7 205.6 546.2 205.6 546.7 205.6 C547.2 205.6 547.7 205.5 548.2 205.5 C548.7 205.5 549.2 205.6 549.6 205.6 C550.1 205.6 550.6 205.6 551.1 205.6 C551.6 205.6 552.1 205.6 552.6 205.6 C553.1 205.6 553.6 205.5 554.0 205.5 C554.5 205.5 555.0 205.5 555.5 205.5 C556.0 205.5 556.5 205.6 557.0 205.6 C557.5 205.6 558.0 205.5 558.4 205.5 C558.9 205.5 559.4 205.5 559.9 205.5 C560.4 205.5 560.9 205.6 561.4 205.6 C561.9 205.6 562.3 205.6 562.8 205.6 C563.3 205.6 563.8 205.6 564.3 205.6 C564.8 205.6 565.3 205.6 565.8 205.6 C566.3 205.6 566.7 205.6 567.2 205.6 C567.7 205.6 568.2 205.6 568.7 205.6 C569.2 205.6 569.7 205.7 570.2 205.7 C570.7 205.7 571.1 205.5 571.6 205.5 C572.1 205.5 572.7 205.6 573.1 205.6 C573.5 205.6 573.9 205.6 574.1 205.6" fill="none" stroke="#f2cc0c" stroke-width="1.05" stroke-linejoin="round"/><rect x="25.3" y="276" width="14" height="4" rx="1" fill="#73bf69"/><rect x="214.9" y="276" width="14" height="4" rx="1" fill="#f2cc0c"/></svg></div><div class="panel" style="left:1247px;top:106px;width:146px;height:144px"><svg style="position:absolute;left:-1px;top:-1px" width="146" height="144" viewBox="0 0 146 144"><path d="M17.55 126.02 A58.3 58.3 0 1 1 128.45 126.02" fill="none" stroke="#f2495c" stroke-width="2.6"/><path d="M19.82 125.87 A56.1 56.1 0 1 1 126.18 125.87" fill="none" stroke="#111217" stroke-width="1.6"/><path d="M28.21 122.55 A47.1 47.1 0 1 1 117.79 122.55" fill="none" stroke="#22252b" stroke-width="16.2"/><path d="M28.21 122.55 A47.1 47.1 0 1 1 117.79 122.55" fill="none" stroke="#f2495c" stroke-width="16.2"/><path d="M36.29 119.93 A38.6 38.6 0 1 1 109.71 119.93" fill="none" stroke="#141519" stroke-width="0.9"/></svg></div><div class="panel" style="left:1401px;top:106px;width:146px;height:144px"><svg style="position:absolute;left:-1px;top:-1px" width="146" height="144" viewBox="0 0 146 144"><path d="M17.55 126.02 A58.3 58.3 0 0 1 125.75 83.18" fill="none" stroke="#73bf69" stroke-width="2.6"/><path d="M125.75 83.18 A58.3 58.3 0 0 1 128.45 126.02" fill="none" stroke="#f2495c" stroke-width="2.6"/><path d="M19.82 125.87 A56.1 56.1 0 1 1 126.18 125.87" fill="none" stroke="#111217" stroke-width="1.6"/><path d="M28.21 122.55 A47.1 47.1 0 1 1 117.79 122.55" fill="none" stroke="#22252b" stroke-width="16.2"/><path d="M28.21 122.55 A47.1 47.1 0 0 1 84.77 62.39" fill="none" stroke="#73bf69" stroke-width="16.2"/><path d="M36.29 119.93 A38.6 38.6 0 1 1 109.71 119.93" fill="none" stroke="#141519" stroke-width="0.9"/></svg></div><div class="panel" style="left:1555px;top:106px;width:146px;height:144px"><svg style="position:absolute;left:-1px;top:-1px" width="146" height="144" viewBox="0 0 146 144"><path d="M17.55 126.02 A58.3 58.3 0 0 1 125.75 83.18" fill="none" stroke="#73bf69" stroke-width="2.6"/><path d="M125.75 83.18 A58.3 58.3 0 0 1 128.45 126.02" fill="none" stroke="#f2495c" stroke-width="2.6"/><path d="M19.82 125.87 A56.1 56.1 0 1 1 126.18 125.87" fill="none" stroke="#111217" stroke-width="1.6"/><path d="M28.21 122.55 A47.1 47.1 0 1 1 117.79 122.55" fill="none" stroke="#22252b" stroke-width="16.2"/><path d="M28.21 122.55 A47.1 47.1 0 1 1 120.04 110.37" fill="none" stroke="#f2495c" stroke-width="16.2"/><path d="M36.29 119.93 A38.6 38.6 0 1 1 109.71 119.93" fill="none" stroke="#141519" stroke-width="0.9"/></svg></div><div class="panel" style="left:1247px;top:448px;width:146px;height:144px"><svg style="position:absolute;left:-1px;top:-1px" width="146" height="144" viewBox="0 0 146 144"><path d="M25.16 123.54 A50.3 50.3 0 1 1 120.84 123.54" fill="none" stroke="#22252b" stroke-width="16.6"/><path d="M25.16 123.54 A50.3 50.3 0 1 1 120.84 123.54" fill="none" stroke="#f2495c" stroke-width="16.6"/><path d="M33.44 120.86 A41.6 41.6 0 1 1 112.56 120.86" fill="none" stroke="#141519" stroke-width="0.9"/></svg></div><div class="panel" style="left:1401px;top:448px;width:146px;height:144px"><svg style="position:absolute;left:-1px;top:-1px" width="146" height="144" viewBox="0 0 146 144"><path d="M17.55 126.02 A58.3 58.3 0 0 1 125.75 83.18" fill="none" stroke="#73bf69" stroke-width="2.6"/><path d="M125.75 83.18 A58.3 58.3 0 0 1 128.45 126.02" fill="none" stroke="#f2495c" stroke-width="2.6"/><path d="M19.82 125.87 A56.1 56.1 0 1 1 126.18 125.87" fill="none" stroke="#111217" stroke-width="1.6"/><path d="M28.21 122.55 A47.1 47.1 0 1 1 117.79 122.55" fill="none" stroke="#22252b" stroke-width="16.2"/><path d="M28.21 122.55 A47.1 47.1 0 0 1 27.09 97.49" fill="none" stroke="#73bf69" stroke-width="16.2"/><path d="M36.29 119.93 A38.6 38.6 0 1 1 109.71 119.93" fill="none" stroke="#141519" stroke-width="0.9"/></svg></div><div class="panel" style="left:1555px;top:448px;width:146px;height:144px"><svg style="position:absolute;left:-1px;top:-1px" width="146" height="144" viewBox="0 0 146 144"><path d="M17.55 126.02 A58.3 58.3 0 0 1 125.75 83.18" fill="none" stroke="#73bf69" stroke-width="2.6"/><path d="M125.75 83.18 A58.3 58.3 0 0 1 128.45 126.02" fill="none" stroke="#f2495c" stroke-width="2.6"/><path d="M19.82 125.87 A56.1 56.1 0 1 1 126.18 125.87" fill="none" stroke="#111217" stroke-width="1.6"/><path d="M28.21 122.55 A47.1 47.1 0 1 1 117.79 122.55" fill="none" stroke="#22252b" stroke-width="16.2"/><path d="M28.21 122.55 A47.1 47.1 0 1 1 119.58 114.96" fill="none" stroke="#f2495c" stroke-width="16.2"/><path d="M36.29 119.93 A38.6 38.6 0 1 1 109.71 119.93" fill="none" stroke="#141519" stroke-width="0.9"/></svg></div></div><svg style="position:absolute;left:0;top:0" width="1870" height="1080" viewBox="0 0 1870 1080"><g font-family="'Liberation Sans', sans-serif"><text x="41.00" y="37.80" font-size="18" textLength="62.00" lengthAdjust="spacingAndGlyphs" fill="#ccccdc">General</text><text x="111.40" y="37.90" font-size="18" fill="#ccccdc">/</text><text x="123.00" y="37.90" font-size="18" textLength="67.60" lengthAdjust="spacingAndGlyphs" fill="#ccccdc">Systems</text><text x="1561.50" y="36.80" font-size="15" textLength="80.00" lengthAdjust="spacingAndGlyphs" fill="#ccccdc">Last 6 hours</text><text x="1647.50" y="37.00" font-size="12.8" textLength="23.00" lengthAdjust="spacingAndGlyphs" fill="#ff8833" stroke="#ff8833" stroke-width="0.35">CST</text><text x="31.00" y="77.00" font-size="16.5" textLength="106.60" lengthAdjust="spacingAndGlyphs" fill="#ccccdc" stroke="#ccccdc" stroke-width="0.5">Portainer Host</text><text x="153.50" y="76.50" font-size="12" font-style="italic" textLength="54.00" lengthAdjust="spacingAndGlyphs" fill="#8e8e99">(8 panels)</text></g></svg><svg style="position:absolute;left:0;top:0;will-change:transform" width="1870" height="1080" viewBox="0 0 1870 1080"><g font-family="'Liberation Sans', sans-serif"><text x="31.00" y="115.00" font-size="16.5" textLength="93.00" lengthAdjust="spacingAndGlyphs" fill="#ccccdc" stroke="#ccccdc" stroke-width="0.7">Raspberry Pi</text><text x="139.40" y="114.50" font-size="12" font-style="italic" textLength="54.00" lengthAdjust="spacingAndGlyphs" fill="#8e8e99">(5 panels)</text><text x="31.00" y="153.00" font-size="16.5" textLength="113.20" lengthAdjust="spacingAndGlyphs" fill="#ccccdc" stroke="#ccccdc" stroke-width="0.7">Zabbix/Grafana</text><text x="31.00" y="495.00" font-size="16.5" textLength="74.80" lengthAdjust="spacingAndGlyphs" fill="#ccccdc" stroke="#ccccdc" stroke-width="0.7">XenServer</text><text x="31.00" y="837.00" font-size="16.5" textLength="81.50" lengthAdjust="spacingAndGlyphs" fill="#ccccdc" stroke="#ccccdc" stroke-width="0.7">Smokeping</text><text x="319.00" y="192.00" font-size="15" text-anchor="middle" textLength="63.50" lengthAdjust="spacingAndGlyphs" fill="#ccccdc" stroke="#ccccdc" stroke-width="0.25">CPU/RAM</text><text x="53.30" y="417.20" font-size="12" text-anchor="end" textLength="15.35" lengthAdjust="spacingAndGlyphs" fill="#ccccdc">0%</text><text x="53.30" y="379.96" font-size="12" text-anchor="end" textLength="22.10" lengthAdjust="spacingAndGlyphs" fill="#ccccdc">20%</text><text x="53.30" y="342.72" font-size="12" text-anchor="end" textLength="22.10" lengthAdjust="spacingAndGlyphs" fill="#ccccdc">40%</text><text x="53.30" y="305.48" font-size="12" text-anchor="end" textLength="22.10" lengthAdjust="spacingAndGlyphs" fill="#ccccdc">60%</text><text x="53.30" y="268.24" font-size="12" text-anchor="end" textLength="22.10" lengthAdjust="spacingAndGlyphs" fill="#ccccdc">80%</text><text x="53.30" y="231.00" font-size="12" text-anchor="end" textLength="28.85" lengthAdjust="spacingAndGlyphs" fill="#ccccdc">100%</text><text x="103.40" y="432.30" font-size="12" text-anchor="middle" textLength="29.80" lengthAdjust="spacingAndGlyphs" fill="#ccccdc">08:00</text><text x="191.34" y="432.30" font-size="12" text-anchor="middle" textLength="29.80" lengthAdjust="spacingAndGlyphs" fill="#ccccdc">09:00</text><text x="279.28" y="432.30" font-size="12" text-anchor="middle" textLength="29.80" lengthAdjust="spacingAndGlyphs" fill="#ccccdc">10:00</text><text x="367.22" y="432.30" font-size="12" text-anchor="middle" textLength="29.80" lengthAdjust="spacingAndGlyphs" fill="#ccccdc">11:00</text><text x="455.16" y="432.30" font-size="12" text-anchor="middle" textLength="29.80" lengthAdjust="spacingAndGlyphs" fill="#ccccdc">12:00</text><text x="543.10" y="432.30" font-size="12" text-anchor="middle" textLength="29.80" lengthAdjust="spacingAndGlyphs" fill="#ccccdc">13:00</text><text x="61.40" y="452.80" font-size="12" textLength="181.50" lengthAdjust="spacingAndGlyphs" fill="#ccccdc">Zabbix server: Memory utilization</text><text x="275.00" y="452.80" font-size="12" textLength="160.30" lengthAdjust="spacingAndGlyphs" fill="#ccccdc">Zabbix server: CPU utilization</text><text x="935.00" y="192.00" font-size="15" text-anchor="middle" textLength="41.00" lengthAdjust="spacingAndGlyphs" fill="#ccccdc" stroke="#ccccdc" stroke-width="0.25">Traffic</text><text x="687.60" y="417.20" font-size="12" text-anchor="end" textLength="27.20" lengthAdjust="spacingAndGlyphs" fill="#ccccdc">0 b/s</text><text x="687.60" y="370.65" font-size="12" text-anchor="end" textLength="47.20" lengthAdjust="spacingAndGlyphs" fill="#ccccdc">100 kb/s</text><text x="687.60" y="324.10" font-size="12" text-anchor="end" textLength="47.20" lengthAdjust="spacingAndGlyphs" fill="#ccccdc">200 kb/s</text><text x="687.60" y="277.55" font-size="12" text-anchor="end" textLength="47.20" lengthAdjust="spacingAndGlyphs" fill="#ccccdc">300 kb/s</text><text x="687.60" y="231.00" font-size="12" text-anchor="end" textLength="47.20" lengthAdjust="spacingAndGlyphs" fill="#ccccdc">400 kb/s</text><text x="737.40" y="432.30" font-size="12" text-anchor="middle" textLength="29.80" lengthAdjust="spacingAndGlyphs" fill="#ccccdc">08:00</text><text x="821.92" y="432.30" font-size="12" text-anchor="middle" textLength="29.80" lengthAdjust="spacingAndGlyphs" fill="#ccccdc">09:00</text><text x="906.44" y="432.30" font-size="12" text-anchor="middle" textLength="29.80" lengthAdjust="spacingAndGlyphs" fill="#ccccdc">10:00</text><text x="990.96" y="432.30" font-size="12" text-anchor="middle" textLength="29.80" lengthAdjust="spacingAndGlyphs" fill="#ccccdc">11:00</text><text x="1075.48" y="432.30" font-size="12" text-anchor="middle" textLength="29.80" lengthAdjust="spacingAndGlyphs" fill="#ccccdc">12:00</text><text x="1160.00" y="432.30" font-size="12" text-anchor="middle" textLength="29.80" lengthAdjust="spacingAndGlyphs" fill="#ccccdc">13:00</text><text x="677.20" y="452.80" font-size="12" textLength="233.00" lengthAdjust="spacingAndGlyphs" fill="#ccccdc">Zabbix server: Interface eth0: Bits received</text><text x="942.30" y="452.80" font-size="12" textLength="209.80" lengthAdjust="spacingAndGlyphs" fill="#ccccdc">Zabbix server: Interface eth0: Bits sent</text><text x="319.00" y="534.00" font-size="15" text-anchor="middle" textLength="63.50" lengthAdjust="spacingAndGlyphs" fill="#ccccdc" stroke="#ccccdc" stroke-width="0.25">CPU/RAM</text><text x="53.30" y="759.20" font-size="12" text-anchor="end" textLength="15.35" lengthAdjust="spacingAndGlyphs" fill="#ccccdc">0%</text><text x="53.30" y="721.96" font-size="12" text-anchor="end" textLength="22.10" lengthAdjust="spacingAndGlyphs" fill="#ccccdc">20%</text><text x="53.30" y="684.72" font-size="12" text-anchor="end" textLength="22.10" lengthAdjust="spacingAndGlyphs" fill="#ccccdc">40%</text><text x="53.30" y="647.48" font-size="12" text-anchor="end" textLength="22.10" lengthAdjust="spacingAndGlyphs" fill="#ccccdc">60%</text><text x="53.30" y="610.24" font-size="12" text-anchor="end" textLength="22.10" lengthAdjust="spacingAndGlyphs" fill="#ccccdc">80%</text><text x="53.30" y="573.00" font-size="12" text-anchor="end" textLength="28.85" lengthAdjust="spacingAndGlyphs" fill="#ccccdc">100%</text><text x="103.40" y="774.30" font-size="12" text-anchor="middle" textLength="29.80" lengthAdjust="spacingAndGlyphs" fill="#ccccdc">08:00</text><text x="191.34" y="774.30" font-size="12" text-anchor="middle" textLength="29.80" lengthAdjust="spacingAndGlyphs" fill="#ccccdc">09:00</text><text x="279.28" y="774.30" font-size="12" text-anchor="middle" textLength="29.80" lengthAdjust="spacingAndGlyphs" fill="#ccccdc">10:00</text><text x="367.22" y="774.30" font-size="12" text-anchor="middle" textLength="29.80" lengthAdjust="spacingAndGlyphs" fill="#ccccdc">11:00</text><text x="455.16" y="774.30" font-size="12" text-anchor="middle" textLength="29.80" lengthAdjust="spacingAndGlyphs" fill="#ccccdc">12:00</text><text x="543.10" y="774.30" font-size="12" text-anchor="middle" textLength="29.80" lengthAdjust="spacingAndGlyphs" fill="#ccccdc">13:00</text><text x="61.30" y="794.80" font-size="12" textLength="163.40" lengthAdjust="spacingAndGlyphs" fill="#ccccdc">Xen Orchestra: CPU utilization</text><text x="256.80" y="794.80" font-size="12" textLength="185.20" lengthAdjust="spacingAndGlyphs" fill="#ccccdc">Xen Orchestra: Memory utilization</text><text x="935.00" y="534.00" font-size="15" text-anchor="middle" textLength="41.00" lengthAdjust="spacingAndGlyphs" fill="#ccccdc" stroke="#ccccdc" stroke-width="0.25">Traffic</text><text x="687.60" y="759.20" font-size="12" text-anchor="end" textLength="27.20" lengthAdjust="spacingAndGlyphs" fill="#ccccdc">0 b/s</text><text x="687.60" y="721.96" font-size="12" text-anchor="end" textLength="47.20" lengthAdjust="spacingAndGlyphs" fill="#ccccdc">100 kb/s</text><text x="687.60" y="684.72" font-size="12" text-anchor="end" textLength="47.20" lengthAdjust="spacingAndGlyphs" fill="#ccccdc">200 kb/s</text><text x="687.60" y="647.48" font-size="12" text-anchor="end" textLength="47.20" lengthAdjust="spacingAndGlyphs" fill="#ccccdc">300 kb/s</text><text x="687.60" y="610.24" font-size="12" text-anchor="end" textLength="47.20" lengthAdjust="spacingAndGlyphs" fill="#ccccdc">400 kb/s</text><text x="687.60" y="573.00" font-size="12" text-anchor="end" textLength="47.20" lengthAdjust="spacingAndGlyphs" fill="#ccccdc">500 kb/s</text><text x="737.40" y="774.30" font-size="12" text-anchor="middle" textLength="29.80" lengthAdjust="spacingAndGlyphs" fill="#ccccdc">08:00</text><text x="821.92" y="774.30" font-size="12" text-anchor="middle" textLength="29.80" lengthAdjust="spacingAndGlyphs" fill="#ccccdc">09:00</text><text x="906.44" y="774.30" font-size="12" text-anchor="middle" textLength="29.80" lengthAdjust="spacingAndGlyphs" fill="#ccccdc">10:00</text><text x="990.96" y="774.30" font-size="12" text-anchor="middle" textLength="29.80" lengthAdjust="spacingAndGlyphs" fill="#ccccdc">11:00</text><text x="1075.48" y="774.30" font-size="12" text-anchor="middle" textLength="29.80" lengthAdjust="spacingAndGlyphs" fill="#ccccdc">12:00</text><text x="1160.00" y="774.30" font-size="12" text-anchor="middle" textLength="29.80" lengthAdjust="spacingAndGlyphs" fill="#ccccdc">13:00</text><text x="677.20" y="794.80" font-size="12" textLength="235.70" lengthAdjust="spacingAndGlyphs" fill="#ccccdc">Xen Orchestra: Interface eth0: Bits received</text><text x="945.00" y="794.80" font-size="12" textLength="214.00" lengthAdjust="spacingAndGlyphs" fill="#ccccdc">Xen Orchestra: Interface eth0: Bits sent</text><text x="319.00" y="876.00" font-size="15" text-anchor="middle" textLength="63.50" lengthAdjust="spacingAndGlyphs" fill="#ccccdc" stroke="#ccccdc" stroke-width="0.25">CPU/RAM</text><text x="53.30" y="1101.20" font-size="12" text-anchor="end" textLength="15.35" lengthAdjust="spacingAndGlyphs" fill="#ccccdc">0%</text><text x="53.30" y="1063.96" font-size="12" text-anchor="end" textLength="22.10" lengthAdjust="spacingAndGlyphs" fill="#ccccdc">20%</text><text x="53.30" y="1026.72" font-size="12" text-anchor="end" textLength="22.10" lengthAdjust="spacingAndGlyphs" fill="#ccccdc">40%</text><text x="53.30" y="989.48" font-size="12" text-anchor="end" textLength="22.10" lengthAdjust="spacingAndGlyphs" fill="#ccccdc">60%</text><text x="53.30" y="952.24" font-size="12" text-anchor="end" textLength="22.10" lengthAdjust="spacingAndGlyphs" fill="#ccccdc">80%</text><text x="53.30" y="915.00" font-size="12" text-anchor="end" textLength="28.85" lengthAdjust="spacingAndGlyphs" fill="#ccccdc">100%</text><text x="103.40" y="1116.30" font-size="12" text-anchor="middle" textLength="29.80" lengthAdjust="spacingAndGlyphs" fill="#ccccdc">08:00</text><text x="191.34" y="1116.30" font-size="12" text-anchor="middle" textLength="29.80" lengthAdjust="spacingAndGlyphs" fill="#ccccdc">09:00</text><text x="279.28" y="1116.30" font-size="12" text-anchor="middle" textLength="29.80" lengthAdjust="spacingAndGlyphs" fill="#ccccdc">10:00</text><text x="367.22" y="1116.30" font-size="12" text-anchor="middle" textLength="29.80" lengthAdjust="spacingAndGlyphs" fill="#ccccdc">11:00</text><text x="455.16" y="1116.30" font-size="12" text-anchor="middle" textLength="29.80" lengthAdjust="spacingAndGlyphs" fill="#ccccdc">12:00</text><text x="543.10" y="1116.30" font-size="12" text-anchor="middle" textLength="29.80" lengthAdjust="spacingAndGlyphs" fill="#ccccdc">13:00</text><text x="61.40" y="1136.80" font-size="12" textLength="150.00" lengthAdjust="spacingAndGlyphs" fill="#ccccdc">Smokeping: CPU utilization</text><text x="251.10" y="1136.80" font-size="12" textLength="170.00" lengthAdjust="spacingAndGlyphs" fill="#ccccdc">Smokeping: Memory utilization</text><text x="1320.00" y="192.00" font-size="15" text-anchor="middle" textLength="45.50" lengthAdjust="spacingAndGlyphs" fill="#ccccdc" stroke="#ccccdc" stroke-width="0.25">Uptime</text><text x="1474.00" y="192.00" font-size="15" text-anchor="middle" textLength="94.50" lengthAdjust="spacingAndGlyphs" fill="#ccccdc" stroke="#ccccdc" stroke-width="0.25">Disk Utilization</text><text x="1628.00" y="192.00" font-size="15" text-anchor="middle" textLength="54.20" lengthAdjust="spacingAndGlyphs" fill="#ccccdc" stroke="#ccccdc" stroke-width="0.25">CPU Idle</text><text x="1320.00" y="534.00" font-size="15" text-anchor="middle" textLength="45.50" lengthAdjust="spacingAndGlyphs" fill="#ccccdc" stroke="#ccccdc" stroke-width="0.25">Uptime</text><text x="1474.00" y="534.00" font-size="15" text-anchor="middle" textLength="94.50" lengthAdjust="spacingAndGlyphs" fill="#ccccdc" stroke="#ccccdc" stroke-width="0.25">Disk Utilization</text><text x="1628.00" y="534.00" font-size="15" text-anchor="middle" textLength="54.20" lengthAdjust="spacingAndGlyphs" fill="#ccccdc" stroke="#ccccdc" stroke-width="0.25">CPU Idle</text><text x="1320.00" y="284.90" font-size="10.5" text-anchor="middle" font-weight="bold" textLength="60.50" lengthAdjust="spacingAndGlyphs" fill="#f2495c">4 d 00:36:08</text><text x="1474.00" y="290.90" font-size="20" text-anchor="middle" textLength="56.50" lengthAdjust="spacingAndGlyphs" fill="#73bf69" stroke="#73bf69" stroke-width="0.45">56.7%</text><text x="1628.00" y="291.00" font-size="20" text-anchor="middle" textLength="56.50" lengthAdjust="spacingAndGlyphs" fill="#f2495c" stroke="#f2495c" stroke-width="0.45">93.0%</text><text x="1320.00" y="627.00" font-size="11.5" text-anchor="middle" font-weight="bold" textLength="67.00" lengthAdjust="spacingAndGlyphs" fill="#f2495c">4 d 00:36:32</text><text x="1474.00" y="633.00" font-size="20" text-anchor="middle" textLength="56.50" lengthAdjust="spacingAndGlyphs" fill="#73bf69" stroke="#73bf69" stroke-width="0.45">14.3%</text><text x="1628.00" y="633.00" font-size="20" text-anchor="middle" textLength="56.50" lengthAdjust="spacingAndGlyphs" fill="#f2495c" stroke="#f2495c" stroke-width="0.45">95.6%</text></g></svg><svg style="position:absolute;left:1296px;top:407px" width="18" height="24" viewBox="0 0 18 24">
<path d="M3.6 2.4 L3.6 17.6 Q3.6 18.2 4.2 18.2 L6.7 18.2 L10.2 21 L11.7 19.8 L11.7 16.3 L14.6 13.4 Z" fill="#171927" stroke="#e6e6ea" stroke-width="1.3" stroke-linejoin="round"/>
</svg>
</body></html>
